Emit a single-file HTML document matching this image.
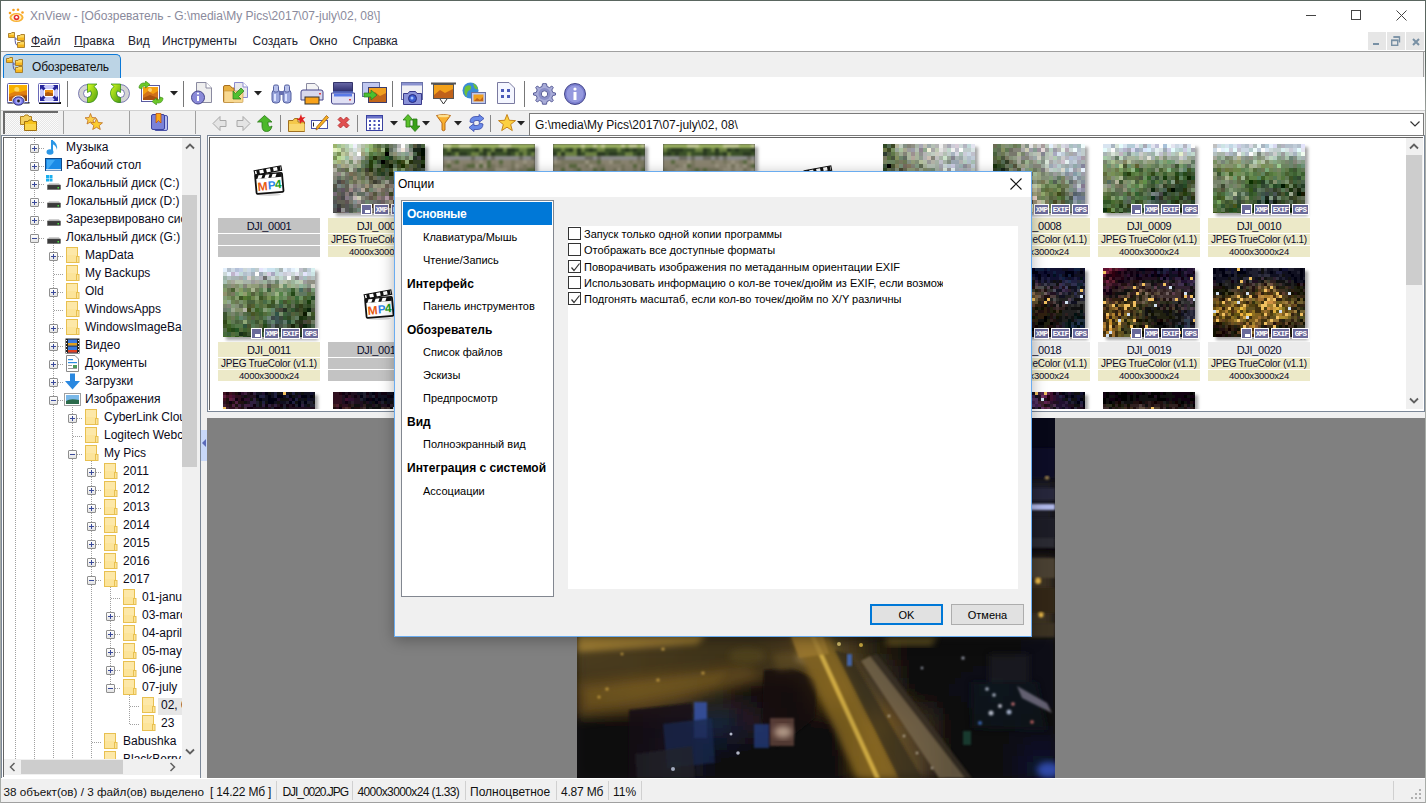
<!DOCTYPE html>
<html><head><meta charset="utf-8">
<style>
*{margin:0;padding:0;box-sizing:border-box}
html,body{width:1426px;height:803px;overflow:hidden}
body{position:relative;background:#f0f0f0;font-family:"Liberation Sans",sans-serif;font-size:12px;color:#000}
.a{position:absolute}
.t{position:absolute;white-space:nowrap;line-height:1}
</style></head><body>
<!-- window frame -->
<div class="a" style="left:0;top:0;width:1426px;height:31px;background:#fff"></div>
<div class="a" style="left:0;top:31px;width:1426px;height:20px;background:#fff"></div>
<div class="a" style="left:0;top:51px;width:1426px;height:1px;background:#a0a0a0"></div>
<div class="a" style="left:0;top:52px;width:1426px;height:25px;background:#f0f0f0"></div>
<div class="a" style="left:0;top:77px;width:1426px;height:33px;background:#fff"></div>
<div class="a" style="left:0;top:110px;width:1426px;height:1px;background:#d0d0d0"></div>
<!-- tree panel -->
<div class="a" style="left:1px;top:135px;width:200px;height:644px;background:#fff;border:1px solid #7c8898"></div><div class="a" style="left:3px;top:137px;width:197px;height:640px;border-top:1px solid #646464;border-left:1px solid #646464"></div>
<!-- tree -->
<div class="a" style="left:3px;top:138px;width:179px;height:622px;overflow:hidden">
<div class="a" style="left:12px;top:0px;width:1px;height:622px;background:repeating-linear-gradient(#a0a0a0 0 1px,transparent 1px 2px)"></div>
<div class="a" style="left:31px;top:0px;width:1px;height:622px;background:repeating-linear-gradient(#a0a0a0 0 1px,transparent 1px 2px)"></div>
<div class="a" style="left:50px;top:105px;width:1px;height:517px;background:repeating-linear-gradient(#a0a0a0 0 1px,transparent 1px 2px)"></div>
<div class="a" style="left:69px;top:267px;width:1px;height:355px;background:repeating-linear-gradient(#a0a0a0 0 1px,transparent 1px 2px)"></div>
<div class="a" style="left:88px;top:321px;width:1px;height:301px;background:repeating-linear-gradient(#a0a0a0 0 1px,transparent 1px 2px)"></div>
<div class="a" style="left:107px;top:447px;width:1px;height:103px;background:repeating-linear-gradient(#a0a0a0 0 1px,transparent 1px 2px)"></div>
<div class="a" style="left:126px;top:555px;width:1px;height:32px;background:repeating-linear-gradient(#a0a0a0 0 1px,transparent 1px 2px)"></div>
<div class="a" style="left:27px;top:6px;width:9px;height:9px;border:1px solid #8f8f8f;border-radius:1px;background:linear-gradient(#fff,#e4e4e4)"><div class="a" style="left:1px;top:3px;width:5px;height:1px;background:#3a4a9a"></div><div class="a" style="left:3px;top:1px;width:1px;height:5px;background:#3a4a9a"></div></div>
<div class="a" style="left:36px;top:10px;width:6px;height:1px;background:repeating-linear-gradient(90deg,#a0a0a0 0 1px,transparent 1px 2px)"></div>
<svg class="a" style="left:43px;top:1px" width="16" height="17" viewBox="0 0 16 17"><path d="M6 1 V12" stroke="#2a96e6" stroke-width="2"/><ellipse cx="4" cy="13" rx="3.5" ry="2.8" fill="#2a96e6"/><path d="M6 1 Q12 4 11 11 Q10 6 6 5Z" fill="#2a96e6"/></svg>
<div class="t" style="left:63px;top:3px;color:#0a0a1a">Музыка</div>
<div class="a" style="left:27px;top:24px;width:9px;height:9px;border:1px solid #8f8f8f;border-radius:1px;background:linear-gradient(#fff,#e4e4e4)"><div class="a" style="left:1px;top:3px;width:5px;height:1px;background:#3a4a9a"></div><div class="a" style="left:3px;top:1px;width:1px;height:5px;background:#3a4a9a"></div></div>
<div class="a" style="left:36px;top:28px;width:6px;height:1px;background:repeating-linear-gradient(90deg,#a0a0a0 0 1px,transparent 1px 2px)"></div>
<svg class="a" style="left:42px;top:20px" width="17" height="14" viewBox="0 0 17 14"><rect x="0.5" y="0.5" width="16" height="12" fill="#1a8ae6" stroke="#104a8a"/><path d="M2 2 H10 L3 11 H2Z" fill="#40aaf6"/><rect x="1" y="11" width="15" height="1.5" fill="#cfe6fa"/></svg>
<div class="t" style="left:63px;top:21px;color:#0a0a1a">Рабочий стол</div>
<div class="a" style="left:27px;top:42px;width:9px;height:9px;border:1px solid #8f8f8f;border-radius:1px;background:linear-gradient(#fff,#e4e4e4)"><div class="a" style="left:1px;top:3px;width:5px;height:1px;background:#3a4a9a"></div><div class="a" style="left:3px;top:1px;width:1px;height:5px;background:#3a4a9a"></div></div>
<div class="a" style="left:36px;top:46px;width:6px;height:1px;background:repeating-linear-gradient(90deg,#a0a0a0 0 1px,transparent 1px 2px)"></div>
<svg class="a" style="left:43px;top:37px" width="16" height="17" viewBox="0 0 16 17"><rect x="0" y="0" width="3" height="3" fill="#1ab0f0"/><rect x="3.5" y="0" width="3" height="3" fill="#1ab0f0"/><rect x="0" y="3.5" width="3" height="3" fill="#1ab0f0"/><rect x="3.5" y="3.5" width="3" height="3" fill="#1ab0f0"/><path d="M2 10 L3 8 H13 L14 10Z" fill="#d0d0d0"/><rect x="1.5" y="10" width="13" height="4.5" fill="#3a3a3a" stroke="#555" stroke-width="0.5"/><rect x="11.5" y="12" width="1.5" height="1.5" fill="#4ae040"/></svg>
<div class="t" style="left:63px;top:39px;color:#0a0a1a">Локальный диск (C:)</div>
<div class="a" style="left:27px;top:60px;width:9px;height:9px;border:1px solid #8f8f8f;border-radius:1px;background:linear-gradient(#fff,#e4e4e4)"><div class="a" style="left:1px;top:3px;width:5px;height:1px;background:#3a4a9a"></div><div class="a" style="left:3px;top:1px;width:1px;height:5px;background:#3a4a9a"></div></div>
<div class="a" style="left:36px;top:64px;width:6px;height:1px;background:repeating-linear-gradient(90deg,#a0a0a0 0 1px,transparent 1px 2px)"></div>
<svg class="a" style="left:43px;top:55px" width="16" height="17" viewBox="0 0 16 17"><path d="M2 10 L3 8 H13 L14 10Z" fill="#d0d0d0"/><rect x="1.5" y="10" width="13" height="4.5" fill="#3a3a3a" stroke="#555" stroke-width="0.5"/><rect x="11.5" y="12" width="1.5" height="1.5" fill="#4ae040"/></svg>
<div class="t" style="left:63px;top:57px;color:#0a0a1a">Локальный диск (D:)</div>
<div class="a" style="left:27px;top:78px;width:9px;height:9px;border:1px solid #8f8f8f;border-radius:1px;background:linear-gradient(#fff,#e4e4e4)"><div class="a" style="left:1px;top:3px;width:5px;height:1px;background:#3a4a9a"></div><div class="a" style="left:3px;top:1px;width:1px;height:5px;background:#3a4a9a"></div></div>
<div class="a" style="left:36px;top:82px;width:6px;height:1px;background:repeating-linear-gradient(90deg,#a0a0a0 0 1px,transparent 1px 2px)"></div>
<svg class="a" style="left:43px;top:73px" width="16" height="17" viewBox="0 0 16 17"><path d="M2 10 L3 8 H13 L14 10Z" fill="#d0d0d0"/><rect x="1.5" y="10" width="13" height="4.5" fill="#3a3a3a" stroke="#555" stroke-width="0.5"/><rect x="11.5" y="12" width="1.5" height="1.5" fill="#4ae040"/></svg>
<div class="t" style="left:63px;top:75px;color:#0a0a1a">Зарезервировано системой</div>
<div class="a" style="left:27px;top:96px;width:9px;height:9px;border:1px solid #8f8f8f;border-radius:1px;background:linear-gradient(#fff,#e4e4e4)"><div class="a" style="left:1px;top:3px;width:5px;height:1px;background:#3a4a9a"></div></div>
<div class="a" style="left:36px;top:100px;width:6px;height:1px;background:repeating-linear-gradient(90deg,#a0a0a0 0 1px,transparent 1px 2px)"></div>
<svg class="a" style="left:43px;top:91px" width="16" height="17" viewBox="0 0 16 17"><path d="M2 10 L3 8 H13 L14 10Z" fill="#d0d0d0"/><rect x="1.5" y="10" width="13" height="4.5" fill="#3a3a3a" stroke="#555" stroke-width="0.5"/><rect x="11.5" y="12" width="1.5" height="1.5" fill="#4ae040"/></svg>
<div class="t" style="left:63px;top:93px;color:#0a0a1a">Локальный диск (G:)</div>
<div class="a" style="left:46px;top:114px;width:9px;height:9px;border:1px solid #8f8f8f;border-radius:1px;background:linear-gradient(#fff,#e4e4e4)"><div class="a" style="left:1px;top:3px;width:5px;height:1px;background:#3a4a9a"></div><div class="a" style="left:3px;top:1px;width:1px;height:5px;background:#3a4a9a"></div></div>
<div class="a" style="left:55px;top:118px;width:6px;height:1px;background:repeating-linear-gradient(90deg,#a0a0a0 0 1px,transparent 1px 2px)"></div>
<svg class="a" style="left:63px;top:109px" width="14" height="17" viewBox="0 0 14 17"><rect x="0.5" y="0.5" width="11" height="15" fill="#fce49a" stroke="#e8c050"/><rect x="1" y="1" width="10" height="7" fill="#fde8a8"/><rect x="10.5" y="9.5" width="2.5" height="6" fill="#fce49a" stroke="#e8c050"/></svg>
<div class="t" style="left:82px;top:111px;color:#0a0a1a">MapData</div>
<div class="a" style="left:51px;top:136px;width:10px;height:1px;background:repeating-linear-gradient(90deg,#a0a0a0 0 1px,transparent 1px 2px)"></div>
<svg class="a" style="left:63px;top:127px" width="14" height="17" viewBox="0 0 14 17"><rect x="0.5" y="0.5" width="11" height="15" fill="#fce49a" stroke="#e8c050"/><rect x="1" y="1" width="10" height="7" fill="#fde8a8"/><rect x="10.5" y="9.5" width="2.5" height="6" fill="#fce49a" stroke="#e8c050"/></svg>
<div class="t" style="left:82px;top:129px;color:#0a0a1a">My Backups</div>
<div class="a" style="left:46px;top:150px;width:9px;height:9px;border:1px solid #8f8f8f;border-radius:1px;background:linear-gradient(#fff,#e4e4e4)"><div class="a" style="left:1px;top:3px;width:5px;height:1px;background:#3a4a9a"></div><div class="a" style="left:3px;top:1px;width:1px;height:5px;background:#3a4a9a"></div></div>
<div class="a" style="left:55px;top:154px;width:6px;height:1px;background:repeating-linear-gradient(90deg,#a0a0a0 0 1px,transparent 1px 2px)"></div>
<svg class="a" style="left:63px;top:145px" width="14" height="17" viewBox="0 0 14 17"><rect x="0.5" y="0.5" width="11" height="15" fill="#fce49a" stroke="#e8c050"/><rect x="1" y="1" width="10" height="7" fill="#fde8a8"/><rect x="10.5" y="9.5" width="2.5" height="6" fill="#fce49a" stroke="#e8c050"/></svg>
<div class="t" style="left:82px;top:147px;color:#0a0a1a">Old</div>
<div class="a" style="left:51px;top:172px;width:10px;height:1px;background:repeating-linear-gradient(90deg,#a0a0a0 0 1px,transparent 1px 2px)"></div>
<svg class="a" style="left:63px;top:163px" width="14" height="17" viewBox="0 0 14 17"><rect x="0.5" y="0.5" width="11" height="15" fill="#fce49a" stroke="#e8c050"/><rect x="1" y="1" width="10" height="7" fill="#fde8a8"/><rect x="10.5" y="9.5" width="2.5" height="6" fill="#fce49a" stroke="#e8c050"/></svg>
<div class="t" style="left:82px;top:165px;color:#0a0a1a">WindowsApps</div>
<div class="a" style="left:46px;top:186px;width:9px;height:9px;border:1px solid #8f8f8f;border-radius:1px;background:linear-gradient(#fff,#e4e4e4)"><div class="a" style="left:1px;top:3px;width:5px;height:1px;background:#3a4a9a"></div><div class="a" style="left:3px;top:1px;width:1px;height:5px;background:#3a4a9a"></div></div>
<div class="a" style="left:55px;top:190px;width:6px;height:1px;background:repeating-linear-gradient(90deg,#a0a0a0 0 1px,transparent 1px 2px)"></div>
<svg class="a" style="left:63px;top:181px" width="14" height="17" viewBox="0 0 14 17"><rect x="0.5" y="0.5" width="11" height="15" fill="#fce49a" stroke="#e8c050"/><rect x="1" y="1" width="10" height="7" fill="#fde8a8"/><rect x="10.5" y="9.5" width="2.5" height="6" fill="#fce49a" stroke="#e8c050"/></svg>
<div class="t" style="left:82px;top:183px;color:#0a0a1a">WindowsImageBackup</div>
<div class="a" style="left:46px;top:204px;width:9px;height:9px;border:1px solid #8f8f8f;border-radius:1px;background:linear-gradient(#fff,#e4e4e4)"><div class="a" style="left:1px;top:3px;width:5px;height:1px;background:#3a4a9a"></div><div class="a" style="left:3px;top:1px;width:1px;height:5px;background:#3a4a9a"></div></div>
<div class="a" style="left:55px;top:208px;width:6px;height:1px;background:repeating-linear-gradient(90deg,#a0a0a0 0 1px,transparent 1px 2px)"></div>
<svg class="a" style="left:62px;top:200px" width="15" height="16" viewBox="0 0 15 16"><rect x="0.5" y="0.5" width="14" height="15" fill="#222"/><rect x="3" y="1.5" width="9" height="6" fill="#3a7ae0"/><rect x="3" y="8.5" width="9" height="6" fill="#3a7ae0"/><rect x="3" y="5" width="9" height="2.5" fill="#e0a020"/><rect x="3" y="12" width="9" height="2.5" fill="#e04020"/><g fill="#fff"><rect x="1" y="2" width="1" height="1"/><rect x="1" y="5" width="1" height="1"/><rect x="1" y="8" width="1" height="1"/><rect x="1" y="11" width="1" height="1"/><rect x="1" y="14" width="1" height="1"/><rect x="13" y="2" width="1" height="1"/><rect x="13" y="5" width="1" height="1"/><rect x="13" y="8" width="1" height="1"/><rect x="13" y="11" width="1" height="1"/><rect x="13" y="14" width="1" height="1"/></g></svg>
<div class="t" style="left:82px;top:201px;color:#0a0a1a">Видео</div>
<div class="a" style="left:46px;top:222px;width:9px;height:9px;border:1px solid #8f8f8f;border-radius:1px;background:linear-gradient(#fff,#e4e4e4)"><div class="a" style="left:1px;top:3px;width:5px;height:1px;background:#3a4a9a"></div><div class="a" style="left:3px;top:1px;width:1px;height:5px;background:#3a4a9a"></div></div>
<div class="a" style="left:55px;top:226px;width:6px;height:1px;background:repeating-linear-gradient(90deg,#a0a0a0 0 1px,transparent 1px 2px)"></div>
<svg class="a" style="left:63px;top:217px" width="13" height="17" viewBox="0 0 13 17"><path d="M0.5 0.5 H9 L12.5 4 V16.5 H0.5Z" fill="#fff" stroke="#8a8a8a"/><rect x="2" y="4" width="5" height="1.2" fill="#2a8ae0"/><rect x="2" y="7" width="9" height="1.2" fill="#2a8ae0"/><rect x="2" y="10" width="4" height="1" fill="#999"/><rect x="7" y="10" width="4" height="3" fill="#4a9a5a"/><rect x="2" y="13" width="9" height="1" fill="#999"/></svg>
<div class="t" style="left:82px;top:219px;color:#0a0a1a">Документы</div>
<div class="a" style="left:46px;top:240px;width:9px;height:9px;border:1px solid #8f8f8f;border-radius:1px;background:linear-gradient(#fff,#e4e4e4)"><div class="a" style="left:1px;top:3px;width:5px;height:1px;background:#3a4a9a"></div><div class="a" style="left:3px;top:1px;width:1px;height:5px;background:#3a4a9a"></div></div>
<div class="a" style="left:55px;top:244px;width:6px;height:1px;background:repeating-linear-gradient(90deg,#a0a0a0 0 1px,transparent 1px 2px)"></div>
<svg class="a" style="left:61px;top:235px" width="17" height="17" viewBox="0 0 17 17"><path d="M6 0.5 H11 V8 H16 L8.5 16.5 L1 8 H6Z" fill="#2a88e0"/></svg>
<div class="t" style="left:82px;top:237px;color:#0a0a1a">Загрузки</div>
<div class="a" style="left:46px;top:258px;width:9px;height:9px;border:1px solid #8f8f8f;border-radius:1px;background:linear-gradient(#fff,#e4e4e4)"><div class="a" style="left:1px;top:3px;width:5px;height:1px;background:#3a4a9a"></div></div>
<div class="a" style="left:55px;top:262px;width:6px;height:1px;background:repeating-linear-gradient(90deg,#a0a0a0 0 1px,transparent 1px 2px)"></div>
<svg class="a" style="left:61px;top:255px" width="17" height="13" viewBox="0 0 17 13"><rect x="0.5" y="0.5" width="16" height="12" fill="#fff" stroke="#a0a0a0"/><rect x="2" y="2" width="13" height="9" fill="#7ab8e8"/><path d="M2 8 Q6 5 15 7 V11 H2Z" fill="#2a6a4a"/></svg>
<div class="t" style="left:82px;top:255px;color:#0a0a1a">Изображения</div>
<div class="a" style="left:65px;top:276px;width:9px;height:9px;border:1px solid #8f8f8f;border-radius:1px;background:linear-gradient(#fff,#e4e4e4)"><div class="a" style="left:1px;top:3px;width:5px;height:1px;background:#3a4a9a"></div><div class="a" style="left:3px;top:1px;width:1px;height:5px;background:#3a4a9a"></div></div>
<div class="a" style="left:74px;top:280px;width:6px;height:1px;background:repeating-linear-gradient(90deg,#a0a0a0 0 1px,transparent 1px 2px)"></div>
<svg class="a" style="left:82px;top:271px" width="14" height="17" viewBox="0 0 14 17"><rect x="0.5" y="0.5" width="11" height="15" fill="#fce49a" stroke="#e8c050"/><rect x="1" y="1" width="10" height="7" fill="#fde8a8"/><rect x="10.5" y="9.5" width="2.5" height="6" fill="#fce49a" stroke="#e8c050"/></svg>
<div class="t" style="left:101px;top:273px;color:#0a0a1a">CyberLink Cloud</div>
<div class="a" style="left:70px;top:298px;width:10px;height:1px;background:repeating-linear-gradient(90deg,#a0a0a0 0 1px,transparent 1px 2px)"></div>
<svg class="a" style="left:82px;top:289px" width="14" height="17" viewBox="0 0 14 17"><rect x="0.5" y="0.5" width="11" height="15" fill="#fce49a" stroke="#e8c050"/><rect x="1" y="1" width="10" height="7" fill="#fde8a8"/><rect x="10.5" y="9.5" width="2.5" height="6" fill="#fce49a" stroke="#e8c050"/></svg>
<div class="t" style="left:101px;top:291px;color:#0a0a1a">Logitech Webcam</div>
<div class="a" style="left:65px;top:312px;width:9px;height:9px;border:1px solid #8f8f8f;border-radius:1px;background:linear-gradient(#fff,#e4e4e4)"><div class="a" style="left:1px;top:3px;width:5px;height:1px;background:#3a4a9a"></div></div>
<div class="a" style="left:74px;top:316px;width:6px;height:1px;background:repeating-linear-gradient(90deg,#a0a0a0 0 1px,transparent 1px 2px)"></div>
<svg class="a" style="left:82px;top:307px" width="14" height="17" viewBox="0 0 14 17"><rect x="0.5" y="0.5" width="11" height="15" fill="#fce49a" stroke="#e8c050"/><rect x="1" y="1" width="10" height="7" fill="#fde8a8"/><rect x="10.5" y="9.5" width="2.5" height="6" fill="#fce49a" stroke="#e8c050"/></svg>
<div class="t" style="left:101px;top:309px;color:#0a0a1a">My Pics</div>
<div class="a" style="left:84px;top:330px;width:9px;height:9px;border:1px solid #8f8f8f;border-radius:1px;background:linear-gradient(#fff,#e4e4e4)"><div class="a" style="left:1px;top:3px;width:5px;height:1px;background:#3a4a9a"></div><div class="a" style="left:3px;top:1px;width:1px;height:5px;background:#3a4a9a"></div></div>
<div class="a" style="left:93px;top:334px;width:6px;height:1px;background:repeating-linear-gradient(90deg,#a0a0a0 0 1px,transparent 1px 2px)"></div>
<svg class="a" style="left:101px;top:325px" width="14" height="17" viewBox="0 0 14 17"><rect x="0.5" y="0.5" width="11" height="15" fill="#fce49a" stroke="#e8c050"/><rect x="1" y="1" width="10" height="7" fill="#fde8a8"/><rect x="10.5" y="9.5" width="2.5" height="6" fill="#fce49a" stroke="#e8c050"/></svg>
<div class="t" style="left:120px;top:327px;color:#0a0a1a">2011</div>
<div class="a" style="left:84px;top:348px;width:9px;height:9px;border:1px solid #8f8f8f;border-radius:1px;background:linear-gradient(#fff,#e4e4e4)"><div class="a" style="left:1px;top:3px;width:5px;height:1px;background:#3a4a9a"></div><div class="a" style="left:3px;top:1px;width:1px;height:5px;background:#3a4a9a"></div></div>
<div class="a" style="left:93px;top:352px;width:6px;height:1px;background:repeating-linear-gradient(90deg,#a0a0a0 0 1px,transparent 1px 2px)"></div>
<svg class="a" style="left:101px;top:343px" width="14" height="17" viewBox="0 0 14 17"><rect x="0.5" y="0.5" width="11" height="15" fill="#fce49a" stroke="#e8c050"/><rect x="1" y="1" width="10" height="7" fill="#fde8a8"/><rect x="10.5" y="9.5" width="2.5" height="6" fill="#fce49a" stroke="#e8c050"/></svg>
<div class="t" style="left:120px;top:345px;color:#0a0a1a">2012</div>
<div class="a" style="left:84px;top:366px;width:9px;height:9px;border:1px solid #8f8f8f;border-radius:1px;background:linear-gradient(#fff,#e4e4e4)"><div class="a" style="left:1px;top:3px;width:5px;height:1px;background:#3a4a9a"></div><div class="a" style="left:3px;top:1px;width:1px;height:5px;background:#3a4a9a"></div></div>
<div class="a" style="left:93px;top:370px;width:6px;height:1px;background:repeating-linear-gradient(90deg,#a0a0a0 0 1px,transparent 1px 2px)"></div>
<svg class="a" style="left:101px;top:361px" width="14" height="17" viewBox="0 0 14 17"><rect x="0.5" y="0.5" width="11" height="15" fill="#fce49a" stroke="#e8c050"/><rect x="1" y="1" width="10" height="7" fill="#fde8a8"/><rect x="10.5" y="9.5" width="2.5" height="6" fill="#fce49a" stroke="#e8c050"/></svg>
<div class="t" style="left:120px;top:363px;color:#0a0a1a">2013</div>
<div class="a" style="left:84px;top:384px;width:9px;height:9px;border:1px solid #8f8f8f;border-radius:1px;background:linear-gradient(#fff,#e4e4e4)"><div class="a" style="left:1px;top:3px;width:5px;height:1px;background:#3a4a9a"></div><div class="a" style="left:3px;top:1px;width:1px;height:5px;background:#3a4a9a"></div></div>
<div class="a" style="left:93px;top:388px;width:6px;height:1px;background:repeating-linear-gradient(90deg,#a0a0a0 0 1px,transparent 1px 2px)"></div>
<svg class="a" style="left:101px;top:379px" width="14" height="17" viewBox="0 0 14 17"><rect x="0.5" y="0.5" width="11" height="15" fill="#fce49a" stroke="#e8c050"/><rect x="1" y="1" width="10" height="7" fill="#fde8a8"/><rect x="10.5" y="9.5" width="2.5" height="6" fill="#fce49a" stroke="#e8c050"/></svg>
<div class="t" style="left:120px;top:381px;color:#0a0a1a">2014</div>
<div class="a" style="left:84px;top:402px;width:9px;height:9px;border:1px solid #8f8f8f;border-radius:1px;background:linear-gradient(#fff,#e4e4e4)"><div class="a" style="left:1px;top:3px;width:5px;height:1px;background:#3a4a9a"></div><div class="a" style="left:3px;top:1px;width:1px;height:5px;background:#3a4a9a"></div></div>
<div class="a" style="left:93px;top:406px;width:6px;height:1px;background:repeating-linear-gradient(90deg,#a0a0a0 0 1px,transparent 1px 2px)"></div>
<svg class="a" style="left:101px;top:397px" width="14" height="17" viewBox="0 0 14 17"><rect x="0.5" y="0.5" width="11" height="15" fill="#fce49a" stroke="#e8c050"/><rect x="1" y="1" width="10" height="7" fill="#fde8a8"/><rect x="10.5" y="9.5" width="2.5" height="6" fill="#fce49a" stroke="#e8c050"/></svg>
<div class="t" style="left:120px;top:399px;color:#0a0a1a">2015</div>
<div class="a" style="left:84px;top:420px;width:9px;height:9px;border:1px solid #8f8f8f;border-radius:1px;background:linear-gradient(#fff,#e4e4e4)"><div class="a" style="left:1px;top:3px;width:5px;height:1px;background:#3a4a9a"></div><div class="a" style="left:3px;top:1px;width:1px;height:5px;background:#3a4a9a"></div></div>
<div class="a" style="left:93px;top:424px;width:6px;height:1px;background:repeating-linear-gradient(90deg,#a0a0a0 0 1px,transparent 1px 2px)"></div>
<svg class="a" style="left:101px;top:415px" width="14" height="17" viewBox="0 0 14 17"><rect x="0.5" y="0.5" width="11" height="15" fill="#fce49a" stroke="#e8c050"/><rect x="1" y="1" width="10" height="7" fill="#fde8a8"/><rect x="10.5" y="9.5" width="2.5" height="6" fill="#fce49a" stroke="#e8c050"/></svg>
<div class="t" style="left:120px;top:417px;color:#0a0a1a">2016</div>
<div class="a" style="left:84px;top:438px;width:9px;height:9px;border:1px solid #8f8f8f;border-radius:1px;background:linear-gradient(#fff,#e4e4e4)"><div class="a" style="left:1px;top:3px;width:5px;height:1px;background:#3a4a9a"></div></div>
<div class="a" style="left:93px;top:442px;width:6px;height:1px;background:repeating-linear-gradient(90deg,#a0a0a0 0 1px,transparent 1px 2px)"></div>
<svg class="a" style="left:101px;top:433px" width="14" height="17" viewBox="0 0 14 17"><rect x="0.5" y="0.5" width="11" height="15" fill="#fce49a" stroke="#e8c050"/><rect x="1" y="1" width="10" height="7" fill="#fde8a8"/><rect x="10.5" y="9.5" width="2.5" height="6" fill="#fce49a" stroke="#e8c050"/></svg>
<div class="t" style="left:120px;top:435px;color:#0a0a1a">2017</div>
<div class="a" style="left:108px;top:460px;width:10px;height:1px;background:repeating-linear-gradient(90deg,#a0a0a0 0 1px,transparent 1px 2px)"></div>
<svg class="a" style="left:120px;top:451px" width="14" height="17" viewBox="0 0 14 17"><rect x="0.5" y="0.5" width="11" height="15" fill="#fce49a" stroke="#e8c050"/><rect x="1" y="1" width="10" height="7" fill="#fde8a8"/><rect x="10.5" y="9.5" width="2.5" height="6" fill="#fce49a" stroke="#e8c050"/></svg>
<div class="t" style="left:139px;top:453px;color:#0a0a1a">01-january</div>
<div class="a" style="left:103px;top:474px;width:9px;height:9px;border:1px solid #8f8f8f;border-radius:1px;background:linear-gradient(#fff,#e4e4e4)"><div class="a" style="left:1px;top:3px;width:5px;height:1px;background:#3a4a9a"></div><div class="a" style="left:3px;top:1px;width:1px;height:5px;background:#3a4a9a"></div></div>
<div class="a" style="left:112px;top:478px;width:6px;height:1px;background:repeating-linear-gradient(90deg,#a0a0a0 0 1px,transparent 1px 2px)"></div>
<svg class="a" style="left:120px;top:469px" width="14" height="17" viewBox="0 0 14 17"><rect x="0.5" y="0.5" width="11" height="15" fill="#fce49a" stroke="#e8c050"/><rect x="1" y="1" width="10" height="7" fill="#fde8a8"/><rect x="10.5" y="9.5" width="2.5" height="6" fill="#fce49a" stroke="#e8c050"/></svg>
<div class="t" style="left:139px;top:471px;color:#0a0a1a">03-march</div>
<div class="a" style="left:103px;top:492px;width:9px;height:9px;border:1px solid #8f8f8f;border-radius:1px;background:linear-gradient(#fff,#e4e4e4)"><div class="a" style="left:1px;top:3px;width:5px;height:1px;background:#3a4a9a"></div><div class="a" style="left:3px;top:1px;width:1px;height:5px;background:#3a4a9a"></div></div>
<div class="a" style="left:112px;top:496px;width:6px;height:1px;background:repeating-linear-gradient(90deg,#a0a0a0 0 1px,transparent 1px 2px)"></div>
<svg class="a" style="left:120px;top:487px" width="14" height="17" viewBox="0 0 14 17"><rect x="0.5" y="0.5" width="11" height="15" fill="#fce49a" stroke="#e8c050"/><rect x="1" y="1" width="10" height="7" fill="#fde8a8"/><rect x="10.5" y="9.5" width="2.5" height="6" fill="#fce49a" stroke="#e8c050"/></svg>
<div class="t" style="left:139px;top:489px;color:#0a0a1a">04-april</div>
<div class="a" style="left:103px;top:510px;width:9px;height:9px;border:1px solid #8f8f8f;border-radius:1px;background:linear-gradient(#fff,#e4e4e4)"><div class="a" style="left:1px;top:3px;width:5px;height:1px;background:#3a4a9a"></div><div class="a" style="left:3px;top:1px;width:1px;height:5px;background:#3a4a9a"></div></div>
<div class="a" style="left:112px;top:514px;width:6px;height:1px;background:repeating-linear-gradient(90deg,#a0a0a0 0 1px,transparent 1px 2px)"></div>
<svg class="a" style="left:120px;top:505px" width="14" height="17" viewBox="0 0 14 17"><rect x="0.5" y="0.5" width="11" height="15" fill="#fce49a" stroke="#e8c050"/><rect x="1" y="1" width="10" height="7" fill="#fde8a8"/><rect x="10.5" y="9.5" width="2.5" height="6" fill="#fce49a" stroke="#e8c050"/></svg>
<div class="t" style="left:139px;top:507px;color:#0a0a1a">05-may</div>
<div class="a" style="left:103px;top:528px;width:9px;height:9px;border:1px solid #8f8f8f;border-radius:1px;background:linear-gradient(#fff,#e4e4e4)"><div class="a" style="left:1px;top:3px;width:5px;height:1px;background:#3a4a9a"></div><div class="a" style="left:3px;top:1px;width:1px;height:5px;background:#3a4a9a"></div></div>
<div class="a" style="left:112px;top:532px;width:6px;height:1px;background:repeating-linear-gradient(90deg,#a0a0a0 0 1px,transparent 1px 2px)"></div>
<svg class="a" style="left:120px;top:523px" width="14" height="17" viewBox="0 0 14 17"><rect x="0.5" y="0.5" width="11" height="15" fill="#fce49a" stroke="#e8c050"/><rect x="1" y="1" width="10" height="7" fill="#fde8a8"/><rect x="10.5" y="9.5" width="2.5" height="6" fill="#fce49a" stroke="#e8c050"/></svg>
<div class="t" style="left:139px;top:525px;color:#0a0a1a">06-june</div>
<div class="a" style="left:103px;top:546px;width:9px;height:9px;border:1px solid #8f8f8f;border-radius:1px;background:linear-gradient(#fff,#e4e4e4)"><div class="a" style="left:1px;top:3px;width:5px;height:1px;background:#3a4a9a"></div></div>
<div class="a" style="left:112px;top:550px;width:6px;height:1px;background:repeating-linear-gradient(90deg,#a0a0a0 0 1px,transparent 1px 2px)"></div>
<svg class="a" style="left:120px;top:541px" width="14" height="17" viewBox="0 0 14 17"><rect x="0.5" y="0.5" width="11" height="15" fill="#fce49a" stroke="#e8c050"/><rect x="1" y="1" width="10" height="7" fill="#fde8a8"/><rect x="10.5" y="9.5" width="2.5" height="6" fill="#fce49a" stroke="#e8c050"/></svg>
<div class="t" style="left:139px;top:543px;color:#0a0a1a">07-july</div>
<div class="a" style="left:127px;top:568px;width:10px;height:1px;background:repeating-linear-gradient(90deg,#a0a0a0 0 1px,transparent 1px 2px)"></div>
<svg class="a" style="left:139px;top:559px" width="14" height="17" viewBox="0 0 14 17"><rect x="0.5" y="0.5" width="11" height="15" fill="#fce49a" stroke="#e8c050"/><rect x="1" y="1" width="10" height="7" fill="#fde8a8"/><rect x="10.5" y="9.5" width="2.5" height="6" fill="#fce49a" stroke="#e8c050"/></svg>
<div class="a" style="left:155px;top:560px;width:60px;height:17px;background:#e6e6e6"></div>
<div class="t" style="left:158px;top:561px;color:#0a0a1a">02, 08</div>
<div class="a" style="left:127px;top:586px;width:10px;height:1px;background:repeating-linear-gradient(90deg,#a0a0a0 0 1px,transparent 1px 2px)"></div>
<svg class="a" style="left:139px;top:577px" width="14" height="17" viewBox="0 0 14 17"><rect x="0.5" y="0.5" width="11" height="15" fill="#fce49a" stroke="#e8c050"/><rect x="1" y="1" width="10" height="7" fill="#fde8a8"/><rect x="10.5" y="9.5" width="2.5" height="6" fill="#fce49a" stroke="#e8c050"/></svg>
<div class="t" style="left:158px;top:579px;color:#0a0a1a">23</div>
<div class="a" style="left:89px;top:604px;width:10px;height:1px;background:repeating-linear-gradient(90deg,#a0a0a0 0 1px,transparent 1px 2px)"></div>
<svg class="a" style="left:101px;top:595px" width="14" height="17" viewBox="0 0 14 17"><rect x="0.5" y="0.5" width="11" height="15" fill="#fce49a" stroke="#e8c050"/><rect x="1" y="1" width="10" height="7" fill="#fde8a8"/><rect x="10.5" y="9.5" width="2.5" height="6" fill="#fce49a" stroke="#e8c050"/></svg>
<div class="t" style="left:120px;top:597px;color:#0a0a1a">Babushka</div>
<div class="a" style="left:89px;top:622px;width:10px;height:1px;background:repeating-linear-gradient(90deg,#a0a0a0 0 1px,transparent 1px 2px)"></div>
<svg class="a" style="left:101px;top:613px" width="14" height="17" viewBox="0 0 14 17"><rect x="0.5" y="0.5" width="11" height="15" fill="#fce49a" stroke="#e8c050"/><rect x="1" y="1" width="10" height="7" fill="#fde8a8"/><rect x="10.5" y="9.5" width="2.5" height="6" fill="#fce49a" stroke="#e8c050"/></svg>
<div class="t" style="left:120px;top:615px;color:#0a0a1a">BlackBerry</div>
</div>
<!-- tree scrollbars -->
<div class="a" style="left:182px;top:138px;width:18px;height:622px;background:#f0f0f0"></div>
<div class="a" style="left:182px;top:195px;width:15px;height:272px;background:#cdcdcd"></div>
<svg class="a" style="left:185px;top:143px" width="10" height="7" viewBox="0 0 10 7"><path d="M1 5.5 L5 1.5 L9 5.5" stroke="#606060" stroke-width="1.8" fill="none"/></svg>
<svg class="a" style="left:185px;top:748px" width="10" height="7" viewBox="0 0 10 7"><path d="M1 1.5 L5 5.5 L9 1.5" stroke="#606060" stroke-width="1.8" fill="none"/></svg>
<div class="a" style="left:4px;top:759px;width:196px;height:16px;background:#f0f0f0"></div><div class="a" style="left:4px;top:775px;width:196px;height:3px;background:#fff"></div>
<div class="a" style="left:21px;top:760px;width:102px;height:14px;background:#cdcdcd"></div>
<svg class="a" style="left:9px;top:762px" width="7" height="10" viewBox="0 0 7 10"><path d="M5.5 1 L1.5 5 L5.5 9" stroke="#606060" stroke-width="1.5" fill="none"/></svg>
<svg class="a" style="left:169px;top:762px" width="7" height="10" viewBox="0 0 7 10"><path d="M1.5 1 L5.5 5 L1.5 9" stroke="#606060" stroke-width="1.5" fill="none"/></svg>
<!-- splitter grip -->
<div class="a" style="left:201px;top:430px;width:6px;height:31px;background:#c8d8f8"></div>
<svg class="a" style="left:201px;top:438px" width="6" height="10" viewBox="0 0 6 10"><path d="M5 1 L1 5 L5 9Z" fill="#5a6ab8"/></svg>

<!-- thumbs panel -->
<div class="a" style="left:207px;top:135px;width:1218px;height:277px;background:#fff;border:1px solid #7c8898"></div>
<div class="a" style="left:209px;top:137px;width:1214px;height:273px;border-top:1px solid #646464;border-left:1px solid #646464"></div>
<div class="a" style="left:209px;top:138px;width:1197px;height:271px;overflow:hidden"><svg width="0" height="0" style="position:absolute"><defs><filter id="pb"><feGaussianBlur stdDeviation="0.8"/></filter></defs></svg><svg class="a" style="left:42px;top:25px" width="34" height="34" viewBox="0 0 34 34">
<ellipse cx="18" cy="31.5" rx="12" ry="1.5" fill="#000" opacity=".15"/>
<g transform="rotate(-5 17 17)">
<path d="M4 6.5 L31 4 L31.5 8.5 L4.5 11Z" fill="#fff" stroke="#111" stroke-width="1.1"/>
<path d="M6 6.3 L9 6 L9.6 10.6 L6.6 10.9Z M13 5.6 L16 5.3 L16.6 9.9 L13.6 10.2Z M20 5 L23 4.7 L23.5 9.3 L20.5 9.6Z M27 4.4 L30 4.1 L30.5 8.7 L27.5 9Z" fill="#111"/>
<rect x="4.5" y="11" width="27" height="19" rx="1" fill="#fff" stroke="#111" stroke-width="1.8"/>
<path d="M5 11.5 H31 V15 H5Z" fill="#111"/><path d="M8 11.5 H12 L10.5 15 H6.5Z M15 11.5 H19 L17.5 15 H13.5Z M22 11.5 H26 L24.5 15 H20.5Z" fill="#fff"/>
<text x="6" y="27" font-family="Liberation Sans" font-weight="bold" font-size="12" fill="#e85a10">M</text>
<text x="16.3" y="26.5" font-family="Liberation Sans" font-weight="bold" font-size="11.5" fill="#2a86e8">P</text>
<text x="23.5" y="26" font-family="Liberation Sans" font-weight="bold" font-size="12" fill="#1aa01a">4</text>
</g>
</svg>
<div class="a" style="left:9px;top:80px;width:102px;height:15px;background:#c3c3c3"></div>
<div class="a" style="left:9px;top:96px;width:102px;height:11px;background:#c3c3c3"></div>
<div class="a" style="left:9px;top:108px;width:102px;height:11px;background:#c3c3c3"></div>
<div class="t" style="left:9px;top:82.7px;width:102px;text-align:center;font-size:11px;letter-spacing:-0.3px;color:#0a0a2a">DJI_0001</div>
<div class="a" style="left:124px;top:6px;width:92px;height:69px;overflow:hidden;background:#444;box-shadow:3px 3px 3px rgba(0,0,0,.35)"><svg width="92" height="69" viewBox="0 0 92 69" style="display:block;filter:blur(0.7px)"><path fill="#9cb46c" d="M0 0h4v4h-4z"/><path fill="#9cc090" d="M4 0h4v4h-4z"/><path fill="#b4cc9c" d="M8 0h4v4h-4z"/><path fill="#b4ccb4" d="M12 0h4v4h-4z"/><path fill="#d8f0d8" d="M16 0h4v4h-4z"/><path fill="#f0f0fc" d="M20 0h4v4h-4z"/><path fill="#ccd8cc" d="M24 0h4v4h-4z"/><path fill="#b4c0a8" d="M28 0h4v4h-4zM12 16h4v4h-4zM16 24h4v4h-4z"/><path fill="#a8c090" d="M32 0h4v4h-4zM0 16h4v4h-4z"/><path fill="#90b46c" d="M36 0h4v4h-4z"/><path fill="#6c8454" d="M40 0h4v4h-4z"/><path fill="#546c3c" d="M44 0h4v4h-4zM48 8h4v4h-4zM64 24h4v4h-4z"/><path fill="#6c8460" d="M48 0h4v4h-4zM64 12h4v4h-4z"/><path fill="#48603c" d="M52 0h4v4h-4zM88 0h4v4h-4zM32 20h4v4h-4zM52 32h4v4h-4z"/><path fill="#6c7860" d="M56 0h4v4h-4zM72 12h4v4h-4zM4 24h4v4h-4zM24 28h4v4h-4zM24 32h4v4h-4z"/><path fill="#788478" d="M60 0h4v4h-4zM76 4h4v4h-4zM0 36h4v4h-4z"/><path fill="#b4b4b4" d="M64 0h4v4h-4zM72 4h4v4h-4z"/><path fill="#fcfcfc" d="M68 0h4v4h-4zM24 8h4v4h-4z"/><path fill="#b4c0b4" d="M72 0h4v4h-4z"/><path fill="#607860" d="M76 0h4v4h-4zM28 20h4v4h-4z"/><path fill="#54543c" d="M80 0h4v4h-4zM32 28h4v4h-4zM76 28h4v4h-4zM40 48h4v4h-4z"/><path fill="#303c30" d="M84 0h4v4h-4zM84 20h4v4h-4z"/><path fill="#3c3c30" d="M92 0h4v4h-4zM32 24h4v4h-4zM40 36h4v4h-4z"/><path fill="#e4f0c0" d="M0 4h4v4h-4z"/><path fill="#cce4a8" d="M4 4h4v4h-4z"/><path fill="#9ca884" d="M8 4h4v4h-4zM8 16h4v4h-4zM24 20h4v4h-4z"/><path fill="#b4cca8" d="M12 4h4v4h-4z"/><path fill="#c0ccc0" d="M16 4h4v4h-4zM20 8h4v4h-4z"/><path fill="#d8e4e4" d="M20 4h4v4h-4z"/><path fill="#d8d8cc" d="M24 4h4v4h-4zM16 8h4v4h-4z"/><path fill="#a8b490" d="M28 4h4v4h-4zM12 8h4v4h-4z"/><path fill="#9ccc9c" d="M32 4h4v4h-4z"/><path fill="#90a86c" d="M36 4h4v4h-4z"/><path fill="#789048" d="M40 4h4v4h-4z"/><path fill="#6c7848" d="M44 4h4v4h-4z"/><path fill="#9cb484" d="M48 4h4v4h-4zM0 8h4v4h-4z"/><path fill="#18300c" d="M52 4h4v4h-4z"/><path fill="#606c60" d="M56 4h4v4h-4zM4 32h4v4h-4zM44 32h4v4h-4zM12 36h4v4h-4zM88 44h4v4h-4zM24 48h4v4h-4zM28 48h4v4h-4zM20 64h4v4h-4z"/><path fill="#909c90" d="M60 4h4v4h-4zM64 8h4v4h-4zM28 12h4v4h-4zM4 20h4v4h-4z"/><path fill="#cccccc" d="M64 4h4v4h-4zM20 12h4v4h-4z"/><path fill="#f0e4d8" d="M68 4h4v4h-4z"/><path fill="#182418" d="M80 4h4v4h-4zM84 4h4v4h-4z"/><path fill="#000c00" d="M88 4h4v4h-4zM88 8h4v4h-4z"/><path fill="#243018" d="M92 4h4v4h-4zM52 16h4v4h-4zM52 20h4v4h-4z"/><path fill="#789054" d="M4 8h4v4h-4zM0 12h4v4h-4z"/><path fill="#c0cc9c" d="M8 8h4v4h-4z"/><path fill="#9c9c78" d="M28 8h4v4h-4z"/><path fill="#90a884" d="M32 8h4v4h-4zM76 12h4v4h-4zM60 24h4v4h-4z"/><path fill="#54783c" d="M36 8h4v4h-4z"/><path fill="#608454" d="M40 8h4v4h-4z"/><path fill="#607848" d="M44 8h4v4h-4z"/><path fill="#000000" d="M52 8h4v4h-4zM48 16h4v4h-4z"/><path fill="#78846c" d="M56 8h4v4h-4zM8 32h4v4h-4zM48 36h4v4h-4zM20 68h4v4h-4z"/><path fill="#909078" d="M60 8h4v4h-4zM80 28h4v4h-4zM24 36h4v4h-4zM44 40h4v4h-4z"/><path fill="#90a890" d="M68 8h4v4h-4z"/><path fill="#849c90" d="M72 8h4v4h-4z"/><path fill="#9c9c90" d="M76 8h4v4h-4zM52 36h4v4h-4zM16 40h4v4h-4zM56 44h4v4h-4zM92 48h4v4h-4z"/><path fill="#486048" d="M80 8h4v4h-4zM24 24h4v4h-4zM60 36h4v4h-4z"/><path fill="#18240c" d="M84 8h4v4h-4z"/><path fill="#304824" d="M92 8h4v4h-4zM44 28h4v4h-4z"/><path fill="#b4d890" d="M4 12h4v4h-4z"/><path fill="#c0d8a8" d="M8 12h4v4h-4z"/><path fill="#9cc0a8" d="M12 12h4v4h-4z"/><path fill="#c0c0a8" d="M16 12h4v4h-4z"/><path fill="#c0c0c0" d="M24 12h4v4h-4z"/><path fill="#6c7854" d="M32 12h4v4h-4zM92 32h4v4h-4z"/><path fill="#3c6030" d="M36 12h4v4h-4z"/><path fill="#24300c" d="M40 12h4v4h-4zM76 16h4v4h-4zM36 24h4v4h-4z"/><path fill="#485430" d="M44 12h4v4h-4zM56 16h4v4h-4zM80 20h4v4h-4zM68 28h4v4h-4z"/><path fill="#3c5430" d="M48 12h4v4h-4zM60 16h4v4h-4z"/><path fill="#245424" d="M52 12h4v4h-4z"/><path fill="#243c24" d="M56 12h4v4h-4zM48 28h4v4h-4z"/><path fill="#606c48" d="M60 12h4v4h-4zM12 24h4v4h-4zM28 24h4v4h-4zM64 28h4v4h-4zM28 32h4v4h-4zM68 32h4v4h-4z"/><path fill="#849c78" d="M68 12h4v4h-4z"/><path fill="#243024" d="M80 12h4v4h-4z"/><path fill="#3c3c3c" d="M84 12h4v4h-4zM4 60h4v4h-4z"/><path fill="#0c1800" d="M88 12h4v4h-4zM56 20h4v4h-4zM88 20h4v4h-4z"/><path fill="#48543c" d="M92 12h4v4h-4zM40 28h4v4h-4zM52 28h4v4h-4zM92 28h4v4h-4zM92 40h4v4h-4z"/><path fill="#a8b478" d="M4 16h4v4h-4z"/><path fill="#78906c" d="M16 16h4v4h-4zM72 32h4v4h-4z"/><path fill="#c0c0b4" d="M20 16h4v4h-4z"/><path fill="#9c9c84" d="M24 16h4v4h-4zM12 20h4v4h-4zM40 40h4v4h-4zM48 40h4v4h-4z"/><path fill="#607854" d="M28 16h4v4h-4zM40 20h4v4h-4z"/><path fill="#546c54" d="M32 16h4v4h-4zM60 20h4v4h-4z"/><path fill="#243c0c" d="M36 16h4v4h-4zM64 16h4v4h-4zM36 20h4v4h-4z"/><path fill="#486c3c" d="M40 16h4v4h-4z"/><path fill="#304830" d="M44 16h4v4h-4z"/><path fill="#3c4818" d="M68 16h4v4h-4z"/><path fill="#90a878" d="M72 16h4v4h-4z"/><path fill="#303c24" d="M80 16h4v4h-4zM84 16h4v4h-4zM80 24h4v4h-4z"/><path fill="#243c18" d="M88 16h4v4h-4zM92 16h4v4h-4zM48 20h4v4h-4zM44 24h4v4h-4z"/><path fill="#84846c" d="M0 20h4v4h-4zM84 44h4v4h-4z"/><path fill="#a8a884" d="M8 20h4v4h-4z"/><path fill="#a8b49c" d="M16 20h4v4h-4z"/><path fill="#909c84" d="M20 20h4v4h-4z"/><path fill="#606c54" d="M44 20h4v4h-4zM16 32h4v4h-4zM60 32h4v4h-4zM92 52h4v4h-4zM28 60h4v4h-4z"/><path fill="#3c4824" d="M64 20h4v4h-4zM48 24h4v4h-4zM56 24h4v4h-4zM56 48h4v4h-4z"/><path fill="#183000" d="M68 20h4v4h-4z"/><path fill="#546030" d="M72 20h4v4h-4z"/><path fill="#546048" d="M76 20h4v4h-4zM40 24h4v4h-4zM56 32h4v4h-4zM88 32h4v4h-4z"/><path fill="#303c18" d="M92 20h4v4h-4z"/><path fill="#b4b4a8" d="M0 24h4v4h-4z"/><path fill="#6c6c60" d="M8 24h4v4h-4zM72 28h4v4h-4zM12 32h4v4h-4zM36 40h4v4h-4zM52 44h4v4h-4zM84 48h4v4h-4zM32 52h4v4h-4zM24 60h4v4h-4zM92 64h4v4h-4zM84 68h4v4h-4z"/><path fill="#78786c" d="M20 24h4v4h-4zM12 28h4v4h-4zM32 32h4v4h-4zM28 40h4v4h-4zM72 44h4v4h-4zM44 48h4v4h-4zM76 48h4v4h-4zM16 56h4v4h-4zM32 60h4v4h-4z"/><path fill="#3c543c" d="M52 24h4v4h-4zM92 24h4v4h-4z"/><path fill="#849c6c" d="M68 24h4v4h-4z"/><path fill="#54603c" d="M72 24h4v4h-4zM60 28h4v4h-4z"/><path fill="#606048" d="M76 24h4v4h-4zM80 32h4v4h-4zM36 36h4v4h-4zM64 40h4v4h-4zM32 44h4v4h-4zM68 60h4v4h-4zM44 64h4v4h-4z"/><path fill="#3c4830" d="M84 24h4v4h-4z"/><path fill="#485448" d="M88 24h4v4h-4zM0 44h4v4h-4zM16 64h4v4h-4z"/><path fill="#909084" d="M0 28h4v4h-4zM24 40h4v4h-4zM20 48h4v4h-4zM36 64h4v4h-4z"/><path fill="#908484" d="M4 28h4v4h-4zM84 40h4v4h-4zM92 56h4v4h-4zM60 60h4v4h-4zM24 68h4v4h-4z"/><path fill="#9ca890" d="M8 28h4v4h-4z"/><path fill="#786c54" d="M16 28h4v4h-4zM68 36h4v4h-4zM72 48h4v4h-4z"/><path fill="#6c6c54" d="M20 28h4v4h-4zM40 32h4v4h-4zM64 32h4v4h-4zM20 36h4v4h-4zM76 44h4v4h-4zM48 48h4v4h-4zM40 52h4v4h-4zM52 60h4v4h-4zM64 64h4v4h-4z"/><path fill="#788460" d="M28 28h4v4h-4zM16 36h4v4h-4zM28 36h4v4h-4zM92 60h4v4h-4z"/><path fill="#6c6c48" d="M36 28h4v4h-4z"/><path fill="#182400" d="M56 28h4v4h-4z"/><path fill="#6c6048" d="M84 28h4v4h-4z"/><path fill="#3c3c24" d="M88 28h4v4h-4z"/><path fill="#848478" d="M0 32h4v4h-4zM72 36h4v4h-4zM76 40h4v4h-4zM40 44h4v4h-4zM68 44h4v4h-4zM28 52h4v4h-4zM76 52h4v4h-4zM52 56h4v4h-4zM64 56h4v4h-4zM80 60h4v4h-4zM88 60h4v4h-4zM32 64h4v4h-4zM68 64h4v4h-4z"/><path fill="#90846c" d="M20 32h4v4h-4zM68 40h4v4h-4zM68 48h4v4h-4z"/><path fill="#484830" d="M36 32h4v4h-4z"/><path fill="#606054" d="M48 32h4v4h-4zM56 36h4v4h-4zM80 36h4v4h-4zM92 36h4v4h-4zM12 40h4v4h-4zM12 44h4v4h-4zM4 48h4v4h-4zM4 56h4v4h-4zM8 56h4v4h-4zM28 64h4v4h-4zM68 68h4v4h-4zM80 68h4v4h-4z"/><path fill="#303018" d="M76 32h4v4h-4z"/><path fill="#484824" d="M84 32h4v4h-4z"/><path fill="#484848" d="M4 36h4v4h-4zM8 52h4v4h-4zM0 68h4v4h-4z"/><path fill="#605448" d="M8 36h4v4h-4zM36 52h4v4h-4zM64 52h4v4h-4zM56 60h4v4h-4zM48 68h4v4h-4zM52 68h4v4h-4z"/><path fill="#849078" d="M32 36h4v4h-4z"/><path fill="#545448" d="M44 36h4v4h-4zM0 40h4v4h-4zM8 60h4v4h-4zM4 68h4v4h-4z"/><path fill="#787860" d="M64 36h4v4h-4zM80 44h4v4h-4z"/><path fill="#60603c" d="M76 36h4v4h-4z"/><path fill="#9c9090" d="M84 36h4v4h-4zM64 48h4v4h-4zM24 56h4v4h-4zM84 64h4v4h-4zM32 68h4v4h-4z"/><path fill="#483c30" d="M88 36h4v4h-4z"/><path fill="#788484" d="M4 40h4v4h-4z"/><path fill="#6c786c" d="M8 40h4v4h-4zM36 56h4v4h-4zM76 60h4v4h-4zM72 64h4v4h-4z"/><path fill="#847878" d="M20 40h4v4h-4zM12 48h4v4h-4zM80 52h4v4h-4z"/><path fill="#9c9078" d="M32 40h4v4h-4z"/><path fill="#6c6054" d="M52 40h4v4h-4zM72 40h4v4h-4zM88 52h4v4h-4zM48 64h4v4h-4zM40 68h4v4h-4zM76 68h4v4h-4z"/><path fill="#908478" d="M56 40h4v4h-4zM68 52h4v4h-4zM72 52h4v4h-4zM88 56h4v4h-4zM56 68h4v4h-4zM72 68h4v4h-4z"/><path fill="#9c9084" d="M60 40h4v4h-4zM44 44h4v4h-4zM72 56h4v4h-4z"/><path fill="#84786c" d="M80 40h4v4h-4zM60 48h4v4h-4zM68 56h4v4h-4zM76 56h4v4h-4zM40 60h4v4h-4zM80 64h4v4h-4zM88 64h4v4h-4zM36 68h4v4h-4zM60 68h4v4h-4z"/><path fill="#786c60" d="M88 40h4v4h-4zM48 44h4v4h-4zM64 44h4v4h-4zM36 48h4v4h-4zM64 60h4v4h-4zM52 64h4v4h-4zM64 68h4v4h-4zM92 68h4v4h-4z"/><path fill="#606060" d="M4 44h4v4h-4zM44 56h4v4h-4z"/><path fill="#605460" d="M8 44h4v4h-4z"/><path fill="#9c8484" d="M16 44h4v4h-4zM88 48h4v4h-4z"/><path fill="#6c6c6c" d="M20 44h4v4h-4zM28 56h4v4h-4zM40 56h4v4h-4z"/><path fill="#848484" d="M24 44h4v4h-4zM32 48h4v4h-4z"/><path fill="#b4a89c" d="M28 44h4v4h-4z"/><path fill="#6c846c" d="M36 44h4v4h-4zM32 56h4v4h-4z"/><path fill="#846c60" d="M60 44h4v4h-4zM72 60h4v4h-4z"/><path fill="#90906c" d="M92 44h4v4h-4z"/><path fill="#786c78" d="M0 48h4v4h-4z"/><path fill="#545454" d="M8 48h4v4h-4zM16 48h4v4h-4zM0 56h4v4h-4zM12 60h4v4h-4zM0 64h4v4h-4zM12 64h4v4h-4zM28 68h4v4h-4z"/><path fill="#786c6c" d="M52 48h4v4h-4zM48 52h4v4h-4zM84 52h4v4h-4zM80 56h4v4h-4zM40 64h4v4h-4zM8 68h4v4h-4z"/><path fill="#786060" d="M80 48h4v4h-4zM56 52h4v4h-4z"/><path fill="#546054" d="M0 52h4v4h-4zM16 60h4v4h-4zM16 68h4v4h-4z"/><path fill="#605454" d="M4 52h4v4h-4zM12 56h4v4h-4z"/><path fill="#847884" d="M12 52h4v4h-4z"/><path fill="#787878" d="M16 52h4v4h-4zM20 60h4v4h-4z"/><path fill="#c0b4b4" d="M20 52h4v4h-4z"/><path fill="#ccccb4" d="M24 52h4v4h-4z"/><path fill="#907878" d="M44 52h4v4h-4z"/><path fill="#b49ca8" d="M52 52h4v4h-4z"/><path fill="#a8a8a8" d="M60 52h4v4h-4z"/><path fill="#849090" d="M20 56h4v4h-4z"/><path fill="#6c6060" d="M48 56h4v4h-4zM84 60h4v4h-4zM76 64h4v4h-4zM44 68h4v4h-4z"/><path fill="#a89c84" d="M56 56h4v4h-4z"/><path fill="#54483c" d="M60 56h4v4h-4zM44 60h4v4h-4z"/><path fill="#786054" d="M84 56h4v4h-4z"/><path fill="#546060" d="M0 60h4v4h-4z"/><path fill="#3c3024" d="M36 60h4v4h-4z"/><path fill="#846c6c" d="M48 60h4v4h-4z"/><path fill="#3c303c" d="M4 64h4v4h-4z"/><path fill="#909090" d="M8 64h4v4h-4z"/><path fill="#6c8478" d="M24 64h4v4h-4z"/><path fill="#b4b49c" d="M56 64h4v4h-4z"/><path fill="#6c606c" d="M60 64h4v4h-4z"/><path fill="#6c6c78" d="M12 68h4v4h-4z"/><path fill="#3c483c" d="M88 68h4v4h-4z"/></svg></div>
<div class="a" style="left:152px;top:66px;width:11px;height:11px;background:#6a6a9a;border:1px solid #fff;overflow:hidden"><div class="a" style="left:3px;top:5px;width:5px;height:3px;background:#fff"></div></div>
<div class="a" style="left:165px;top:66px;width:15px;height:11px;background:#6a6a9a;border:1px solid #fff;overflow:hidden"><div class="t" style="left:0;top:1.5px;width:13px;text-align:center;font-family:Liberation Mono;font-size:7.5px;font-weight:bold;color:#fff;letter-spacing:-0.6px">XMP</div></div>
<div class="a" style="left:182px;top:66px;width:19px;height:11px;background:#6a6a9a;border:1px solid #fff;overflow:hidden"><div class="t" style="left:0;top:1.5px;width:17px;text-align:center;font-family:Liberation Mono;font-size:7.5px;font-weight:bold;color:#fff;letter-spacing:-0.6px">EXIF</div></div>
<div class="a" style="left:203px;top:66px;width:17px;height:11px;background:#6a6a9a;border:1px solid #fff;overflow:hidden"><div class="t" style="left:0;top:1.5px;width:15px;text-align:center;font-family:Liberation Mono;font-size:7.5px;font-weight:bold;color:#fff;letter-spacing:-0.6px">GPS</div></div>
<div class="a" style="left:119px;top:80px;width:102px;height:15px;background:#ece9c8"></div>
<div class="a" style="left:119px;top:96px;width:102px;height:11px;background:#ece9c8"></div>
<div class="a" style="left:119px;top:108px;width:102px;height:11px;background:#ece9c8"></div>
<div class="t" style="left:119px;top:82.7px;width:102px;text-align:center;font-size:11px;letter-spacing:-0.3px;color:#0a0a2a">DJI_0002</div>
<div class="t" style="left:119px;top:97px;width:102px;text-align:center;font-size:10px;letter-spacing:-0.25px;color:#0a0a2a">JPEG TrueColor (v1.1)</div>
<div class="t" style="left:119px;top:109px;width:102px;text-align:center;font-size:9.5px;letter-spacing:-0.2px;color:#0a0a2a">4000x3000x24</div>
<div class="a" style="left:234px;top:6px;width:92px;height:69px;overflow:hidden;background:#444;box-shadow:3px 3px 3px rgba(0,0,0,.35)"><svg width="92" height="69" viewBox="0 0 92 69" style="display:block;filter:blur(0.9px)"><g><path fill="#c0c890" d="M0 0h4v4h-4zM4 0h4v4h-4zM16 0h4v4h-4zM20 0h4v4h-4zM24 0h4v4h-4zM56 0h4v4h-4zM60 0h4v4h-4zM64 0h4v4h-4z"/><path fill="#9ab060" d="M8 0h4v4h-4zM12 0h4v4h-4zM28 0h4v4h-4zM32 0h4v4h-4zM36 0h4v4h-4zM40 0h4v4h-4zM44 0h4v4h-4zM48 0h4v4h-4zM52 0h4v4h-4zM68 0h4v4h-4zM72 0h4v4h-4zM76 0h4v4h-4zM80 0h4v4h-4zM84 0h4v4h-4zM88 0h4v4h-4zM92 0h4v4h-4z"/><path fill="#3a5028" d="M0 4h4v4h-4zM16 4h4v4h-4zM20 4h4v4h-4zM24 4h4v4h-4zM28 4h4v4h-4zM44 4h4v4h-4zM72 4h4v4h-4zM84 4h4v4h-4zM0 8h4v4h-4zM8 8h4v4h-4zM24 8h4v4h-4zM36 8h4v4h-4zM52 8h4v4h-4zM56 8h4v4h-4zM60 8h4v4h-4zM68 8h4v4h-4zM76 8h4v4h-4zM84 8h4v4h-4z"/><path fill="#6a8040" d="M4 4h4v4h-4zM36 4h4v4h-4zM48 4h4v4h-4zM60 4h4v4h-4zM76 4h4v4h-4zM80 4h4v4h-4zM12 8h4v4h-4zM28 8h4v4h-4zM32 8h4v4h-4zM44 8h4v4h-4zM72 8h4v4h-4zM80 8h4v4h-4zM88 8h4v4h-4z"/><path fill="#2a3a20" d="M8 4h4v4h-4zM12 4h4v4h-4zM32 4h4v4h-4zM40 4h4v4h-4zM52 4h4v4h-4zM56 4h4v4h-4zM64 4h4v4h-4zM68 4h4v4h-4zM88 4h4v4h-4zM92 4h4v4h-4zM4 8h4v4h-4zM16 8h4v4h-4zM20 8h4v4h-4zM40 8h4v4h-4zM48 8h4v4h-4zM64 8h4v4h-4zM92 8h4v4h-4z"/><path fill="#8a8a88" d="M0 12h4v4h-4zM4 12h4v4h-4zM8 12h4v4h-4zM12 12h4v4h-4zM16 12h4v4h-4zM20 12h4v4h-4zM24 12h4v4h-4zM32 12h4v4h-4zM36 12h4v4h-4zM44 12h4v4h-4zM52 12h4v4h-4zM56 12h4v4h-4zM60 12h4v4h-4zM64 12h4v4h-4zM68 12h4v4h-4zM72 12h4v4h-4zM80 12h4v4h-4zM84 12h4v4h-4zM92 12h4v4h-4z"/><path fill="#6a6a60" d="M28 12h4v4h-4zM40 12h4v4h-4zM48 12h4v4h-4zM76 12h4v4h-4zM88 12h4v4h-4z"/><path fill="#8a8470" d="M0 16h4v4h-4zM16 16h4v4h-4zM20 16h4v4h-4zM24 16h4v4h-4zM32 16h4v4h-4zM40 16h4v4h-4zM48 16h4v4h-4zM52 16h4v4h-4zM60 16h4v4h-4zM64 16h4v4h-4zM72 16h4v4h-4zM76 16h4v4h-4zM84 16h4v4h-4zM88 16h4v4h-4zM92 16h4v4h-4zM8 20h4v4h-4zM12 20h4v4h-4zM16 20h4v4h-4zM52 20h4v4h-4zM60 20h4v4h-4zM64 20h4v4h-4zM76 20h4v4h-4zM84 20h4v4h-4zM92 20h4v4h-4zM4 24h4v4h-4zM16 24h4v4h-4zM24 24h4v4h-4zM28 24h4v4h-4zM32 24h4v4h-4zM36 24h4v4h-4zM40 24h4v4h-4zM64 24h4v4h-4zM72 24h4v4h-4zM92 24h4v4h-4zM8 28h4v4h-4zM12 28h4v4h-4zM16 28h4v4h-4zM20 28h4v4h-4zM28 28h4v4h-4zM32 28h4v4h-4zM36 28h4v4h-4zM40 28h4v4h-4zM44 28h4v4h-4zM56 28h4v4h-4zM64 28h4v4h-4zM92 28h4v4h-4zM8 32h4v4h-4zM12 32h4v4h-4zM20 32h4v4h-4zM36 32h4v4h-4zM44 32h4v4h-4zM48 32h4v4h-4zM56 32h4v4h-4zM60 32h4v4h-4zM72 32h4v4h-4zM80 32h4v4h-4zM88 32h4v4h-4zM0 36h4v4h-4zM4 36h4v4h-4zM8 36h4v4h-4zM16 36h4v4h-4zM24 36h4v4h-4zM32 36h4v4h-4zM44 36h4v4h-4zM48 36h4v4h-4zM52 36h4v4h-4zM56 36h4v4h-4zM76 36h4v4h-4zM0 40h4v4h-4zM12 40h4v4h-4zM40 40h4v4h-4zM44 40h4v4h-4zM52 40h4v4h-4zM76 40h4v4h-4zM80 40h4v4h-4zM88 40h4v4h-4zM0 44h4v4h-4zM4 44h4v4h-4zM20 44h4v4h-4zM24 44h4v4h-4zM28 44h4v4h-4zM48 44h4v4h-4zM64 44h4v4h-4zM76 44h4v4h-4zM92 44h4v4h-4zM12 48h4v4h-4zM20 48h4v4h-4zM32 48h4v4h-4zM44 48h4v4h-4zM68 48h4v4h-4zM88 48h4v4h-4zM0 52h4v4h-4zM16 52h4v4h-4zM40 52h4v4h-4zM64 52h4v4h-4zM76 52h4v4h-4zM88 52h4v4h-4zM0 56h4v4h-4zM12 56h4v4h-4zM24 56h4v4h-4zM32 56h4v4h-4zM36 56h4v4h-4zM64 56h4v4h-4zM68 56h4v4h-4zM76 56h4v4h-4zM80 56h4v4h-4zM88 56h4v4h-4zM4 60h4v4h-4zM20 60h4v4h-4zM24 60h4v4h-4zM28 60h4v4h-4zM36 60h4v4h-4zM40 60h4v4h-4zM52 60h4v4h-4zM60 60h4v4h-4zM72 60h4v4h-4zM92 60h4v4h-4zM4 64h4v4h-4zM20 64h4v4h-4zM28 64h4v4h-4zM36 64h4v4h-4zM56 64h4v4h-4zM60 64h4v4h-4zM68 64h4v4h-4zM72 64h4v4h-4zM80 64h4v4h-4zM88 64h4v4h-4zM92 64h4v4h-4zM0 68h4v4h-4zM4 68h4v4h-4zM12 68h4v4h-4zM20 68h4v4h-4zM44 68h4v4h-4zM48 68h4v4h-4zM52 68h4v4h-4zM56 68h4v4h-4zM64 68h4v4h-4zM68 68h4v4h-4zM76 68h4v4h-4zM88 68h4v4h-4z"/><path fill="#9a9480" d="M4 16h4v4h-4zM36 16h4v4h-4zM80 16h4v4h-4zM32 20h4v4h-4zM40 20h4v4h-4zM72 20h4v4h-4zM0 24h4v4h-4zM52 24h4v4h-4zM56 24h4v4h-4zM60 24h4v4h-4zM68 28h4v4h-4zM72 28h4v4h-4zM28 32h4v4h-4zM40 32h4v4h-4zM12 36h4v4h-4zM68 36h4v4h-4zM24 40h4v4h-4zM32 40h4v4h-4zM64 40h4v4h-4zM84 40h4v4h-4zM8 44h4v4h-4zM12 44h4v4h-4zM56 44h4v4h-4zM80 44h4v4h-4zM0 48h4v4h-4zM28 48h4v4h-4zM52 48h4v4h-4zM64 48h4v4h-4zM8 52h4v4h-4zM28 52h4v4h-4zM44 52h4v4h-4zM56 52h4v4h-4zM60 52h4v4h-4zM28 56h4v4h-4zM16 60h4v4h-4zM48 60h4v4h-4zM68 60h4v4h-4zM88 60h4v4h-4zM76 64h4v4h-4zM24 68h4v4h-4zM28 68h4v4h-4zM40 68h4v4h-4z"/><path fill="#7a7860" d="M8 16h4v4h-4zM28 16h4v4h-4zM68 16h4v4h-4zM0 20h4v4h-4zM20 20h4v4h-4zM48 20h4v4h-4zM56 20h4v4h-4zM68 20h4v4h-4zM80 20h4v4h-4zM88 20h4v4h-4zM8 24h4v4h-4zM12 24h4v4h-4zM20 24h4v4h-4zM44 24h4v4h-4zM48 24h4v4h-4zM68 24h4v4h-4zM76 24h4v4h-4zM80 24h4v4h-4zM0 28h4v4h-4zM4 28h4v4h-4zM48 28h4v4h-4zM52 28h4v4h-4zM60 28h4v4h-4zM80 28h4v4h-4zM84 28h4v4h-4zM88 28h4v4h-4zM0 32h4v4h-4zM4 32h4v4h-4zM24 32h4v4h-4zM32 32h4v4h-4zM52 32h4v4h-4zM68 32h4v4h-4zM76 32h4v4h-4zM84 32h4v4h-4zM92 32h4v4h-4zM28 36h4v4h-4zM36 36h4v4h-4zM64 36h4v4h-4zM72 36h4v4h-4zM80 36h4v4h-4zM92 36h4v4h-4zM4 40h4v4h-4zM16 40h4v4h-4zM20 40h4v4h-4zM48 40h4v4h-4zM56 40h4v4h-4zM60 40h4v4h-4zM68 40h4v4h-4zM92 40h4v4h-4zM16 44h4v4h-4zM32 44h4v4h-4zM36 44h4v4h-4zM40 44h4v4h-4zM44 44h4v4h-4zM52 44h4v4h-4zM68 44h4v4h-4zM84 44h4v4h-4zM8 48h4v4h-4zM16 48h4v4h-4zM24 48h4v4h-4zM36 48h4v4h-4zM40 48h4v4h-4zM60 48h4v4h-4zM76 48h4v4h-4zM92 48h4v4h-4zM4 52h4v4h-4zM12 52h4v4h-4zM20 52h4v4h-4zM32 52h4v4h-4zM52 52h4v4h-4zM84 52h4v4h-4zM4 56h4v4h-4zM8 56h4v4h-4zM16 56h4v4h-4zM20 56h4v4h-4zM40 56h4v4h-4zM48 56h4v4h-4zM56 56h4v4h-4zM60 56h4v4h-4zM72 56h4v4h-4zM8 60h4v4h-4zM32 60h4v4h-4zM44 60h4v4h-4zM56 60h4v4h-4zM64 60h4v4h-4zM76 60h4v4h-4zM80 60h4v4h-4zM84 60h4v4h-4zM8 64h4v4h-4zM16 64h4v4h-4zM32 64h4v4h-4zM40 64h4v4h-4zM52 64h4v4h-4zM64 64h4v4h-4zM8 68h4v4h-4zM16 68h4v4h-4zM32 68h4v4h-4zM36 68h4v4h-4zM60 68h4v4h-4zM84 68h4v4h-4z"/><path fill="#5a6a40" d="M12 16h4v4h-4zM44 16h4v4h-4zM56 16h4v4h-4zM4 20h4v4h-4zM24 20h4v4h-4zM28 20h4v4h-4zM36 20h4v4h-4zM44 20h4v4h-4zM84 24h4v4h-4zM88 24h4v4h-4zM24 28h4v4h-4zM76 28h4v4h-4zM16 32h4v4h-4zM64 32h4v4h-4zM20 36h4v4h-4zM40 36h4v4h-4zM60 36h4v4h-4zM84 36h4v4h-4zM88 36h4v4h-4zM8 40h4v4h-4zM28 40h4v4h-4zM36 40h4v4h-4zM72 40h4v4h-4zM60 44h4v4h-4zM72 44h4v4h-4zM88 44h4v4h-4zM4 48h4v4h-4zM48 48h4v4h-4zM56 48h4v4h-4zM72 48h4v4h-4zM80 48h4v4h-4zM84 48h4v4h-4zM24 52h4v4h-4zM36 52h4v4h-4zM48 52h4v4h-4zM68 52h4v4h-4zM72 52h4v4h-4zM80 52h4v4h-4zM92 52h4v4h-4zM44 56h4v4h-4zM52 56h4v4h-4zM84 56h4v4h-4zM92 56h4v4h-4zM0 60h4v4h-4zM12 60h4v4h-4zM0 64h4v4h-4zM12 64h4v4h-4zM24 64h4v4h-4zM44 64h4v4h-4zM48 64h4v4h-4zM84 64h4v4h-4zM72 68h4v4h-4zM80 68h4v4h-4zM92 68h4v4h-4z"/></g></svg></div>
<div class="a" style="left:262px;top:66px;width:11px;height:11px;background:#6a6a9a;border:1px solid #fff;overflow:hidden"><div class="a" style="left:3px;top:5px;width:5px;height:3px;background:#fff"></div></div>
<div class="a" style="left:275px;top:66px;width:15px;height:11px;background:#6a6a9a;border:1px solid #fff;overflow:hidden"><div class="t" style="left:0;top:1.5px;width:13px;text-align:center;font-family:Liberation Mono;font-size:7.5px;font-weight:bold;color:#fff;letter-spacing:-0.6px">XMP</div></div>
<div class="a" style="left:292px;top:66px;width:19px;height:11px;background:#6a6a9a;border:1px solid #fff;overflow:hidden"><div class="t" style="left:0;top:1.5px;width:17px;text-align:center;font-family:Liberation Mono;font-size:7.5px;font-weight:bold;color:#fff;letter-spacing:-0.6px">EXIF</div></div>
<div class="a" style="left:313px;top:66px;width:17px;height:11px;background:#6a6a9a;border:1px solid #fff;overflow:hidden"><div class="t" style="left:0;top:1.5px;width:15px;text-align:center;font-family:Liberation Mono;font-size:7.5px;font-weight:bold;color:#fff;letter-spacing:-0.6px">GPS</div></div>
<div class="a" style="left:229px;top:80px;width:102px;height:15px;background:#ece9c8"></div>
<div class="a" style="left:229px;top:96px;width:102px;height:11px;background:#ece9c8"></div>
<div class="a" style="left:229px;top:108px;width:102px;height:11px;background:#ece9c8"></div>
<div class="t" style="left:229px;top:82.7px;width:102px;text-align:center;font-size:11px;letter-spacing:-0.3px;color:#0a0a2a">DJI_0003</div>
<div class="t" style="left:229px;top:97px;width:102px;text-align:center;font-size:10px;letter-spacing:-0.25px;color:#0a0a2a">JPEG TrueColor (v1.1)</div>
<div class="t" style="left:229px;top:109px;width:102px;text-align:center;font-size:9.5px;letter-spacing:-0.2px;color:#0a0a2a">4000x3000x24</div>
<div class="a" style="left:344px;top:6px;width:92px;height:69px;overflow:hidden;background:#444;box-shadow:3px 3px 3px rgba(0,0,0,.35)"><svg width="92" height="69" viewBox="0 0 92 69" style="display:block;filter:blur(0.9px)"><g><path fill="#9ab060" d="M0 0h4v4h-4zM4 0h4v4h-4zM8 0h4v4h-4zM12 0h4v4h-4zM16 0h4v4h-4zM20 0h4v4h-4zM24 0h4v4h-4zM32 0h4v4h-4zM36 0h4v4h-4zM44 0h4v4h-4zM52 0h4v4h-4zM56 0h4v4h-4zM60 0h4v4h-4zM64 0h4v4h-4zM72 0h4v4h-4zM84 0h4v4h-4zM92 0h4v4h-4z"/><path fill="#c0c890" d="M28 0h4v4h-4zM40 0h4v4h-4zM48 0h4v4h-4zM68 0h4v4h-4zM76 0h4v4h-4zM80 0h4v4h-4zM88 0h4v4h-4z"/><path fill="#3a5028" d="M0 4h4v4h-4zM4 4h4v4h-4zM12 4h4v4h-4zM32 4h4v4h-4zM40 4h4v4h-4zM52 4h4v4h-4zM56 4h4v4h-4zM60 4h4v4h-4zM68 4h4v4h-4zM76 4h4v4h-4zM84 4h4v4h-4zM88 4h4v4h-4zM28 8h4v4h-4zM52 8h4v4h-4zM64 8h4v4h-4zM68 8h4v4h-4zM80 8h4v4h-4zM88 8h4v4h-4zM92 8h4v4h-4z"/><path fill="#6a8040" d="M8 4h4v4h-4zM20 4h4v4h-4zM28 4h4v4h-4zM44 4h4v4h-4zM48 4h4v4h-4zM64 4h4v4h-4zM4 8h4v4h-4zM12 8h4v4h-4zM16 8h4v4h-4zM20 8h4v4h-4zM32 8h4v4h-4zM36 8h4v4h-4zM40 8h4v4h-4zM72 8h4v4h-4zM76 8h4v4h-4z"/><path fill="#2a3a20" d="M16 4h4v4h-4zM24 4h4v4h-4zM36 4h4v4h-4zM72 4h4v4h-4zM80 4h4v4h-4zM92 4h4v4h-4zM0 8h4v4h-4zM8 8h4v4h-4zM24 8h4v4h-4zM44 8h4v4h-4zM48 8h4v4h-4zM56 8h4v4h-4zM60 8h4v4h-4zM84 8h4v4h-4z"/><path fill="#8a8a88" d="M0 12h4v4h-4zM12 12h4v4h-4zM16 12h4v4h-4zM20 12h4v4h-4zM24 12h4v4h-4zM28 12h4v4h-4zM40 12h4v4h-4zM48 12h4v4h-4zM52 12h4v4h-4zM56 12h4v4h-4zM60 12h4v4h-4zM64 12h4v4h-4zM68 12h4v4h-4zM72 12h4v4h-4zM76 12h4v4h-4zM80 12h4v4h-4zM88 12h4v4h-4z"/><path fill="#6a6a60" d="M4 12h4v4h-4zM8 12h4v4h-4zM32 12h4v4h-4zM36 12h4v4h-4zM44 12h4v4h-4zM84 12h4v4h-4zM92 12h4v4h-4z"/><path fill="#9a9480" d="M0 16h4v4h-4zM32 16h4v4h-4zM56 16h4v4h-4zM36 20h4v4h-4zM64 24h4v4h-4zM56 28h4v4h-4zM68 28h4v4h-4zM72 28h4v4h-4zM76 28h4v4h-4zM84 28h4v4h-4zM88 28h4v4h-4zM48 32h4v4h-4zM56 32h4v4h-4zM60 32h4v4h-4zM64 32h4v4h-4zM4 36h4v4h-4zM20 36h4v4h-4zM56 36h4v4h-4zM76 36h4v4h-4zM32 40h4v4h-4zM84 44h4v4h-4zM88 44h4v4h-4zM0 48h4v4h-4zM28 48h4v4h-4zM80 48h4v4h-4zM16 52h4v4h-4zM52 52h4v4h-4zM24 56h4v4h-4zM64 56h4v4h-4zM80 56h4v4h-4zM28 60h4v4h-4zM92 60h4v4h-4zM44 64h4v4h-4zM68 64h4v4h-4zM4 68h4v4h-4zM12 68h4v4h-4zM80 68h4v4h-4z"/><path fill="#8a8470" d="M4 16h4v4h-4zM48 16h4v4h-4zM52 16h4v4h-4zM68 16h4v4h-4zM72 16h4v4h-4zM80 16h4v4h-4zM92 16h4v4h-4zM12 20h4v4h-4zM24 20h4v4h-4zM28 20h4v4h-4zM40 20h4v4h-4zM52 20h4v4h-4zM56 20h4v4h-4zM60 20h4v4h-4zM64 20h4v4h-4zM72 20h4v4h-4zM76 20h4v4h-4zM84 20h4v4h-4zM0 24h4v4h-4zM4 24h4v4h-4zM12 24h4v4h-4zM16 24h4v4h-4zM28 24h4v4h-4zM32 24h4v4h-4zM36 24h4v4h-4zM52 24h4v4h-4zM56 24h4v4h-4zM72 24h4v4h-4zM76 24h4v4h-4zM84 24h4v4h-4zM0 28h4v4h-4zM4 28h4v4h-4zM20 28h4v4h-4zM24 28h4v4h-4zM28 28h4v4h-4zM36 28h4v4h-4zM40 28h4v4h-4zM52 28h4v4h-4zM60 28h4v4h-4zM64 28h4v4h-4zM92 28h4v4h-4zM16 32h4v4h-4zM20 32h4v4h-4zM24 32h4v4h-4zM28 32h4v4h-4zM36 32h4v4h-4zM44 32h4v4h-4zM72 32h4v4h-4zM80 32h4v4h-4zM84 32h4v4h-4zM0 36h4v4h-4zM12 36h4v4h-4zM16 36h4v4h-4zM32 36h4v4h-4zM36 36h4v4h-4zM48 36h4v4h-4zM68 36h4v4h-4zM80 36h4v4h-4zM84 36h4v4h-4zM88 36h4v4h-4zM12 40h4v4h-4zM16 40h4v4h-4zM20 40h4v4h-4zM24 40h4v4h-4zM28 40h4v4h-4zM40 40h4v4h-4zM48 40h4v4h-4zM52 40h4v4h-4zM56 40h4v4h-4zM68 40h4v4h-4zM72 40h4v4h-4zM76 40h4v4h-4zM80 40h4v4h-4zM92 40h4v4h-4zM0 44h4v4h-4zM4 44h4v4h-4zM8 44h4v4h-4zM20 44h4v4h-4zM36 44h4v4h-4zM60 44h4v4h-4zM72 44h4v4h-4zM92 44h4v4h-4zM8 48h4v4h-4zM16 48h4v4h-4zM48 48h4v4h-4zM56 48h4v4h-4zM60 48h4v4h-4zM68 48h4v4h-4zM72 48h4v4h-4zM76 48h4v4h-4zM84 48h4v4h-4zM88 48h4v4h-4zM0 52h4v4h-4zM28 52h4v4h-4zM44 52h4v4h-4zM56 52h4v4h-4zM60 52h4v4h-4zM72 52h4v4h-4zM76 52h4v4h-4zM80 52h4v4h-4zM92 52h4v4h-4zM0 56h4v4h-4zM4 56h4v4h-4zM8 56h4v4h-4zM16 56h4v4h-4zM28 56h4v4h-4zM36 56h4v4h-4zM68 56h4v4h-4zM72 56h4v4h-4zM0 60h4v4h-4zM4 60h4v4h-4zM8 60h4v4h-4zM16 60h4v4h-4zM20 60h4v4h-4zM32 60h4v4h-4zM40 60h4v4h-4zM52 60h4v4h-4zM56 60h4v4h-4zM60 60h4v4h-4zM68 60h4v4h-4zM72 60h4v4h-4zM76 60h4v4h-4zM80 60h4v4h-4zM88 60h4v4h-4zM36 64h4v4h-4zM52 64h4v4h-4zM56 64h4v4h-4zM76 64h4v4h-4zM80 64h4v4h-4zM84 64h4v4h-4zM88 64h4v4h-4zM8 68h4v4h-4zM16 68h4v4h-4zM28 68h4v4h-4zM32 68h4v4h-4zM40 68h4v4h-4zM44 68h4v4h-4zM56 68h4v4h-4zM60 68h4v4h-4zM72 68h4v4h-4zM84 68h4v4h-4zM92 68h4v4h-4z"/><path fill="#7a7860" d="M8 16h4v4h-4zM12 16h4v4h-4zM16 16h4v4h-4zM20 16h4v4h-4zM24 16h4v4h-4zM28 16h4v4h-4zM36 16h4v4h-4zM40 16h4v4h-4zM60 16h4v4h-4zM64 16h4v4h-4zM76 16h4v4h-4zM84 16h4v4h-4zM88 16h4v4h-4zM0 20h4v4h-4zM4 20h4v4h-4zM8 20h4v4h-4zM32 20h4v4h-4zM44 20h4v4h-4zM48 20h4v4h-4zM68 20h4v4h-4zM88 20h4v4h-4zM20 24h4v4h-4zM44 24h4v4h-4zM60 24h4v4h-4zM68 24h4v4h-4zM80 24h4v4h-4zM12 28h4v4h-4zM44 28h4v4h-4zM48 28h4v4h-4zM80 28h4v4h-4zM8 32h4v4h-4zM12 32h4v4h-4zM32 32h4v4h-4zM52 32h4v4h-4zM68 32h4v4h-4zM88 32h4v4h-4zM92 32h4v4h-4zM8 36h4v4h-4zM24 36h4v4h-4zM40 36h4v4h-4zM72 36h4v4h-4zM92 36h4v4h-4zM0 40h4v4h-4zM4 40h4v4h-4zM44 40h4v4h-4zM60 40h4v4h-4zM64 40h4v4h-4zM84 40h4v4h-4zM12 44h4v4h-4zM28 44h4v4h-4zM32 44h4v4h-4zM40 44h4v4h-4zM48 44h4v4h-4zM52 44h4v4h-4zM56 44h4v4h-4zM64 44h4v4h-4zM76 44h4v4h-4zM80 44h4v4h-4zM12 48h4v4h-4zM24 48h4v4h-4zM36 48h4v4h-4zM44 48h4v4h-4zM52 48h4v4h-4zM8 52h4v4h-4zM20 52h4v4h-4zM36 52h4v4h-4zM64 52h4v4h-4zM84 52h4v4h-4zM12 56h4v4h-4zM20 56h4v4h-4zM40 56h4v4h-4zM48 56h4v4h-4zM52 56h4v4h-4zM56 56h4v4h-4zM60 56h4v4h-4zM84 56h4v4h-4zM88 56h4v4h-4zM12 60h4v4h-4zM24 60h4v4h-4zM48 60h4v4h-4zM64 60h4v4h-4zM0 64h4v4h-4zM4 64h4v4h-4zM8 64h4v4h-4zM20 64h4v4h-4zM24 64h4v4h-4zM48 64h4v4h-4zM64 64h4v4h-4zM20 68h4v4h-4zM48 68h4v4h-4zM52 68h4v4h-4zM64 68h4v4h-4zM68 68h4v4h-4zM76 68h4v4h-4zM88 68h4v4h-4z"/><path fill="#5a6a40" d="M44 16h4v4h-4zM16 20h4v4h-4zM20 20h4v4h-4zM80 20h4v4h-4zM92 20h4v4h-4zM8 24h4v4h-4zM24 24h4v4h-4zM40 24h4v4h-4zM48 24h4v4h-4zM88 24h4v4h-4zM92 24h4v4h-4zM8 28h4v4h-4zM16 28h4v4h-4zM32 28h4v4h-4zM0 32h4v4h-4zM4 32h4v4h-4zM40 32h4v4h-4zM76 32h4v4h-4zM28 36h4v4h-4zM44 36h4v4h-4zM52 36h4v4h-4zM60 36h4v4h-4zM64 36h4v4h-4zM8 40h4v4h-4zM36 40h4v4h-4zM88 40h4v4h-4zM16 44h4v4h-4zM24 44h4v4h-4zM44 44h4v4h-4zM68 44h4v4h-4zM4 48h4v4h-4zM20 48h4v4h-4zM32 48h4v4h-4zM40 48h4v4h-4zM64 48h4v4h-4zM92 48h4v4h-4zM4 52h4v4h-4zM12 52h4v4h-4zM24 52h4v4h-4zM32 52h4v4h-4zM40 52h4v4h-4zM48 52h4v4h-4zM68 52h4v4h-4zM88 52h4v4h-4zM32 56h4v4h-4zM44 56h4v4h-4zM76 56h4v4h-4zM92 56h4v4h-4zM36 60h4v4h-4zM44 60h4v4h-4zM84 60h4v4h-4zM12 64h4v4h-4zM16 64h4v4h-4zM28 64h4v4h-4zM32 64h4v4h-4zM40 64h4v4h-4zM60 64h4v4h-4zM72 64h4v4h-4zM92 64h4v4h-4zM0 68h4v4h-4zM24 68h4v4h-4zM36 68h4v4h-4z"/></g></svg></div>
<div class="a" style="left:372px;top:66px;width:11px;height:11px;background:#6a6a9a;border:1px solid #fff;overflow:hidden"><div class="a" style="left:3px;top:5px;width:5px;height:3px;background:#fff"></div></div>
<div class="a" style="left:385px;top:66px;width:15px;height:11px;background:#6a6a9a;border:1px solid #fff;overflow:hidden"><div class="t" style="left:0;top:1.5px;width:13px;text-align:center;font-family:Liberation Mono;font-size:7.5px;font-weight:bold;color:#fff;letter-spacing:-0.6px">XMP</div></div>
<div class="a" style="left:402px;top:66px;width:19px;height:11px;background:#6a6a9a;border:1px solid #fff;overflow:hidden"><div class="t" style="left:0;top:1.5px;width:17px;text-align:center;font-family:Liberation Mono;font-size:7.5px;font-weight:bold;color:#fff;letter-spacing:-0.6px">EXIF</div></div>
<div class="a" style="left:423px;top:66px;width:17px;height:11px;background:#6a6a9a;border:1px solid #fff;overflow:hidden"><div class="t" style="left:0;top:1.5px;width:15px;text-align:center;font-family:Liberation Mono;font-size:7.5px;font-weight:bold;color:#fff;letter-spacing:-0.6px">GPS</div></div>
<div class="a" style="left:339px;top:80px;width:102px;height:15px;background:#ece9c8"></div>
<div class="a" style="left:339px;top:96px;width:102px;height:11px;background:#ece9c8"></div>
<div class="a" style="left:339px;top:108px;width:102px;height:11px;background:#ece9c8"></div>
<div class="t" style="left:339px;top:82.7px;width:102px;text-align:center;font-size:11px;letter-spacing:-0.3px;color:#0a0a2a">DJI_0004</div>
<div class="t" style="left:339px;top:97px;width:102px;text-align:center;font-size:10px;letter-spacing:-0.25px;color:#0a0a2a">JPEG TrueColor (v1.1)</div>
<div class="t" style="left:339px;top:109px;width:102px;text-align:center;font-size:9.5px;letter-spacing:-0.2px;color:#0a0a2a">4000x3000x24</div>
<div class="a" style="left:454px;top:6px;width:92px;height:69px;overflow:hidden;background:#444;box-shadow:3px 3px 3px rgba(0,0,0,.35)"><svg width="92" height="69" viewBox="0 0 92 69" style="display:block;filter:blur(0.9px)"><g><path fill="#9ab060" d="M0 0h4v4h-4zM4 0h4v4h-4zM8 0h4v4h-4zM12 0h4v4h-4zM16 0h4v4h-4zM20 0h4v4h-4zM36 0h4v4h-4zM40 0h4v4h-4zM44 0h4v4h-4zM48 0h4v4h-4zM52 0h4v4h-4zM56 0h4v4h-4zM76 0h4v4h-4zM80 0h4v4h-4zM84 0h4v4h-4z"/><path fill="#c0c890" d="M24 0h4v4h-4zM28 0h4v4h-4zM32 0h4v4h-4zM60 0h4v4h-4zM64 0h4v4h-4zM68 0h4v4h-4zM72 0h4v4h-4zM88 0h4v4h-4zM92 0h4v4h-4z"/><path fill="#6a8040" d="M0 4h4v4h-4zM32 4h4v4h-4zM36 4h4v4h-4zM48 4h4v4h-4zM56 4h4v4h-4zM60 4h4v4h-4zM24 8h4v4h-4zM64 8h4v4h-4z"/><path fill="#3a5028" d="M4 4h4v4h-4zM20 4h4v4h-4zM24 4h4v4h-4zM28 4h4v4h-4zM44 4h4v4h-4zM68 4h4v4h-4zM76 4h4v4h-4zM80 4h4v4h-4zM84 4h4v4h-4zM92 4h4v4h-4zM0 8h4v4h-4zM8 8h4v4h-4zM16 8h4v4h-4zM20 8h4v4h-4zM28 8h4v4h-4zM32 8h4v4h-4zM36 8h4v4h-4zM44 8h4v4h-4zM48 8h4v4h-4zM56 8h4v4h-4zM68 8h4v4h-4zM72 8h4v4h-4zM76 8h4v4h-4zM88 8h4v4h-4zM92 8h4v4h-4z"/><path fill="#2a3a20" d="M8 4h4v4h-4zM12 4h4v4h-4zM16 4h4v4h-4zM40 4h4v4h-4zM52 4h4v4h-4zM64 4h4v4h-4zM72 4h4v4h-4zM88 4h4v4h-4zM4 8h4v4h-4zM12 8h4v4h-4zM40 8h4v4h-4zM52 8h4v4h-4zM60 8h4v4h-4zM80 8h4v4h-4zM84 8h4v4h-4z"/><path fill="#8a8a88" d="M0 12h4v4h-4zM4 12h4v4h-4zM8 12h4v4h-4zM12 12h4v4h-4zM24 12h4v4h-4zM32 12h4v4h-4zM36 12h4v4h-4zM48 12h4v4h-4zM56 12h4v4h-4zM64 12h4v4h-4zM68 12h4v4h-4zM72 12h4v4h-4zM76 12h4v4h-4zM80 12h4v4h-4zM88 12h4v4h-4zM92 12h4v4h-4z"/><path fill="#6a6a60" d="M16 12h4v4h-4zM20 12h4v4h-4zM28 12h4v4h-4zM40 12h4v4h-4zM44 12h4v4h-4zM52 12h4v4h-4zM60 12h4v4h-4zM84 12h4v4h-4z"/><path fill="#8a8470" d="M0 16h4v4h-4zM4 16h4v4h-4zM12 16h4v4h-4zM16 16h4v4h-4zM20 16h4v4h-4zM32 16h4v4h-4zM36 16h4v4h-4zM40 16h4v4h-4zM44 16h4v4h-4zM52 16h4v4h-4zM56 16h4v4h-4zM64 16h4v4h-4zM72 16h4v4h-4zM84 16h4v4h-4zM0 20h4v4h-4zM4 20h4v4h-4zM8 20h4v4h-4zM16 20h4v4h-4zM32 20h4v4h-4zM36 20h4v4h-4zM40 20h4v4h-4zM44 20h4v4h-4zM48 20h4v4h-4zM56 20h4v4h-4zM60 20h4v4h-4zM76 20h4v4h-4zM4 24h4v4h-4zM8 24h4v4h-4zM24 24h4v4h-4zM56 24h4v4h-4zM68 24h4v4h-4zM84 24h4v4h-4zM92 24h4v4h-4zM8 28h4v4h-4zM12 28h4v4h-4zM32 28h4v4h-4zM36 28h4v4h-4zM44 28h4v4h-4zM52 28h4v4h-4zM76 28h4v4h-4zM84 28h4v4h-4zM8 32h4v4h-4zM12 32h4v4h-4zM32 32h4v4h-4zM36 32h4v4h-4zM48 32h4v4h-4zM60 32h4v4h-4zM68 32h4v4h-4zM76 32h4v4h-4zM80 32h4v4h-4zM92 32h4v4h-4zM0 36h4v4h-4zM28 36h4v4h-4zM36 36h4v4h-4zM40 36h4v4h-4zM56 36h4v4h-4zM64 36h4v4h-4zM68 36h4v4h-4zM76 36h4v4h-4zM92 36h4v4h-4zM0 40h4v4h-4zM20 40h4v4h-4zM24 40h4v4h-4zM32 40h4v4h-4zM56 40h4v4h-4zM72 40h4v4h-4zM92 40h4v4h-4zM4 44h4v4h-4zM12 44h4v4h-4zM16 44h4v4h-4zM20 44h4v4h-4zM28 44h4v4h-4zM36 44h4v4h-4zM44 44h4v4h-4zM52 44h4v4h-4zM56 44h4v4h-4zM64 44h4v4h-4zM72 44h4v4h-4zM76 44h4v4h-4zM80 44h4v4h-4zM84 44h4v4h-4zM12 48h4v4h-4zM40 48h4v4h-4zM64 48h4v4h-4zM72 48h4v4h-4zM88 48h4v4h-4zM92 48h4v4h-4zM0 52h4v4h-4zM16 52h4v4h-4zM20 52h4v4h-4zM28 52h4v4h-4zM32 52h4v4h-4zM36 52h4v4h-4zM40 52h4v4h-4zM56 52h4v4h-4zM68 52h4v4h-4zM72 52h4v4h-4zM92 52h4v4h-4zM0 56h4v4h-4zM4 56h4v4h-4zM8 56h4v4h-4zM24 56h4v4h-4zM28 56h4v4h-4zM32 56h4v4h-4zM40 56h4v4h-4zM60 56h4v4h-4zM68 56h4v4h-4zM72 56h4v4h-4zM76 56h4v4h-4zM80 56h4v4h-4zM84 56h4v4h-4zM88 56h4v4h-4zM0 60h4v4h-4zM52 60h4v4h-4zM64 60h4v4h-4zM68 60h4v4h-4zM76 60h4v4h-4zM80 60h4v4h-4zM92 60h4v4h-4zM0 64h4v4h-4zM8 64h4v4h-4zM16 64h4v4h-4zM24 64h4v4h-4zM28 64h4v4h-4zM40 64h4v4h-4zM56 64h4v4h-4zM80 64h4v4h-4zM0 68h4v4h-4zM12 68h4v4h-4zM28 68h4v4h-4zM36 68h4v4h-4zM48 68h4v4h-4zM60 68h4v4h-4z"/><path fill="#5a6a40" d="M8 16h4v4h-4zM80 16h4v4h-4zM24 20h4v4h-4zM88 20h4v4h-4zM92 20h4v4h-4zM32 24h4v4h-4zM40 24h4v4h-4zM24 28h4v4h-4zM56 28h4v4h-4zM60 28h4v4h-4zM92 28h4v4h-4zM40 32h4v4h-4zM52 32h4v4h-4zM56 32h4v4h-4zM72 32h4v4h-4zM20 36h4v4h-4zM24 36h4v4h-4zM44 36h4v4h-4zM52 36h4v4h-4zM88 36h4v4h-4zM12 40h4v4h-4zM28 40h4v4h-4zM36 40h4v4h-4zM80 40h4v4h-4zM0 44h4v4h-4zM24 44h4v4h-4zM92 44h4v4h-4zM0 48h4v4h-4zM4 48h4v4h-4zM32 48h4v4h-4zM52 48h4v4h-4zM60 48h4v4h-4zM84 48h4v4h-4zM24 52h4v4h-4zM20 56h4v4h-4zM44 56h4v4h-4zM8 60h4v4h-4zM12 60h4v4h-4zM28 60h4v4h-4zM40 60h4v4h-4zM56 60h4v4h-4zM32 64h4v4h-4zM36 64h4v4h-4zM52 64h4v4h-4zM60 64h4v4h-4zM68 64h4v4h-4zM84 64h4v4h-4zM88 64h4v4h-4zM40 68h4v4h-4zM64 68h4v4h-4zM84 68h4v4h-4z"/><path fill="#9a9480" d="M24 16h4v4h-4zM68 16h4v4h-4zM88 16h4v4h-4zM20 20h4v4h-4zM52 20h4v4h-4zM64 20h4v4h-4zM72 20h4v4h-4zM80 20h4v4h-4zM12 24h4v4h-4zM16 24h4v4h-4zM20 24h4v4h-4zM60 24h4v4h-4zM64 24h4v4h-4zM72 24h4v4h-4zM76 24h4v4h-4zM88 24h4v4h-4zM0 28h4v4h-4zM28 28h4v4h-4zM40 28h4v4h-4zM48 28h4v4h-4zM64 28h4v4h-4zM72 28h4v4h-4zM88 28h4v4h-4zM24 32h4v4h-4zM88 32h4v4h-4zM8 36h4v4h-4zM32 36h4v4h-4zM60 36h4v4h-4zM84 36h4v4h-4zM40 40h4v4h-4zM60 40h4v4h-4zM68 40h4v4h-4zM76 40h4v4h-4zM32 44h4v4h-4zM60 44h4v4h-4zM88 44h4v4h-4zM8 48h4v4h-4zM28 48h4v4h-4zM36 48h4v4h-4zM68 48h4v4h-4zM80 48h4v4h-4zM8 52h4v4h-4zM12 52h4v4h-4zM60 52h4v4h-4zM76 52h4v4h-4zM80 52h4v4h-4zM84 52h4v4h-4zM12 56h4v4h-4zM16 56h4v4h-4zM36 56h4v4h-4zM56 56h4v4h-4zM92 56h4v4h-4zM4 60h4v4h-4zM20 60h4v4h-4zM24 60h4v4h-4zM72 60h4v4h-4zM88 60h4v4h-4zM12 64h4v4h-4zM20 64h4v4h-4zM64 64h4v4h-4zM72 64h4v4h-4zM76 64h4v4h-4zM8 68h4v4h-4zM20 68h4v4h-4zM52 68h4v4h-4zM68 68h4v4h-4zM72 68h4v4h-4zM76 68h4v4h-4z"/><path fill="#7a7860" d="M28 16h4v4h-4zM48 16h4v4h-4zM60 16h4v4h-4zM76 16h4v4h-4zM92 16h4v4h-4zM12 20h4v4h-4zM28 20h4v4h-4zM68 20h4v4h-4zM84 20h4v4h-4zM0 24h4v4h-4zM28 24h4v4h-4zM36 24h4v4h-4zM44 24h4v4h-4zM48 24h4v4h-4zM52 24h4v4h-4zM80 24h4v4h-4zM4 28h4v4h-4zM16 28h4v4h-4zM20 28h4v4h-4zM68 28h4v4h-4zM80 28h4v4h-4zM0 32h4v4h-4zM4 32h4v4h-4zM16 32h4v4h-4zM20 32h4v4h-4zM28 32h4v4h-4zM44 32h4v4h-4zM64 32h4v4h-4zM84 32h4v4h-4zM4 36h4v4h-4zM12 36h4v4h-4zM16 36h4v4h-4zM48 36h4v4h-4zM72 36h4v4h-4zM80 36h4v4h-4zM4 40h4v4h-4zM8 40h4v4h-4zM16 40h4v4h-4zM44 40h4v4h-4zM48 40h4v4h-4zM52 40h4v4h-4zM64 40h4v4h-4zM84 40h4v4h-4zM88 40h4v4h-4zM8 44h4v4h-4zM40 44h4v4h-4zM48 44h4v4h-4zM68 44h4v4h-4zM16 48h4v4h-4zM20 48h4v4h-4zM24 48h4v4h-4zM44 48h4v4h-4zM48 48h4v4h-4zM56 48h4v4h-4zM76 48h4v4h-4zM4 52h4v4h-4zM44 52h4v4h-4zM48 52h4v4h-4zM52 52h4v4h-4zM64 52h4v4h-4zM88 52h4v4h-4zM48 56h4v4h-4zM52 56h4v4h-4zM64 56h4v4h-4zM16 60h4v4h-4zM32 60h4v4h-4zM36 60h4v4h-4zM44 60h4v4h-4zM48 60h4v4h-4zM60 60h4v4h-4zM84 60h4v4h-4zM4 64h4v4h-4zM44 64h4v4h-4zM48 64h4v4h-4zM92 64h4v4h-4zM4 68h4v4h-4zM16 68h4v4h-4zM24 68h4v4h-4zM32 68h4v4h-4zM44 68h4v4h-4zM56 68h4v4h-4zM80 68h4v4h-4zM88 68h4v4h-4zM92 68h4v4h-4z"/></g></svg></div>
<div class="a" style="left:482px;top:66px;width:11px;height:11px;background:#6a6a9a;border:1px solid #fff;overflow:hidden"><div class="a" style="left:3px;top:5px;width:5px;height:3px;background:#fff"></div></div>
<div class="a" style="left:495px;top:66px;width:15px;height:11px;background:#6a6a9a;border:1px solid #fff;overflow:hidden"><div class="t" style="left:0;top:1.5px;width:13px;text-align:center;font-family:Liberation Mono;font-size:7.5px;font-weight:bold;color:#fff;letter-spacing:-0.6px">XMP</div></div>
<div class="a" style="left:512px;top:66px;width:19px;height:11px;background:#6a6a9a;border:1px solid #fff;overflow:hidden"><div class="t" style="left:0;top:1.5px;width:17px;text-align:center;font-family:Liberation Mono;font-size:7.5px;font-weight:bold;color:#fff;letter-spacing:-0.6px">EXIF</div></div>
<div class="a" style="left:533px;top:66px;width:17px;height:11px;background:#6a6a9a;border:1px solid #fff;overflow:hidden"><div class="t" style="left:0;top:1.5px;width:15px;text-align:center;font-family:Liberation Mono;font-size:7.5px;font-weight:bold;color:#fff;letter-spacing:-0.6px">GPS</div></div>
<div class="a" style="left:449px;top:80px;width:102px;height:15px;background:#ece9c8"></div>
<div class="a" style="left:449px;top:96px;width:102px;height:11px;background:#ece9c8"></div>
<div class="a" style="left:449px;top:108px;width:102px;height:11px;background:#ece9c8"></div>
<div class="t" style="left:449px;top:82.7px;width:102px;text-align:center;font-size:11px;letter-spacing:-0.3px;color:#0a0a2a">DJI_0005</div>
<div class="t" style="left:449px;top:97px;width:102px;text-align:center;font-size:10px;letter-spacing:-0.25px;color:#0a0a2a">JPEG TrueColor (v1.1)</div>
<div class="t" style="left:449px;top:109px;width:102px;text-align:center;font-size:9.5px;letter-spacing:-0.2px;color:#0a0a2a">4000x3000x24</div>
<svg class="a" style="left:592px;top:25px" width="34" height="34" viewBox="0 0 34 34">
<ellipse cx="18" cy="31.5" rx="12" ry="1.5" fill="#000" opacity=".15"/>
<g transform="rotate(-5 17 17)">
<path d="M4 6.5 L31 4 L31.5 8.5 L4.5 11Z" fill="#fff" stroke="#111" stroke-width="1.1"/>
<path d="M6 6.3 L9 6 L9.6 10.6 L6.6 10.9Z M13 5.6 L16 5.3 L16.6 9.9 L13.6 10.2Z M20 5 L23 4.7 L23.5 9.3 L20.5 9.6Z M27 4.4 L30 4.1 L30.5 8.7 L27.5 9Z" fill="#111"/>
<rect x="4.5" y="11" width="27" height="19" rx="1" fill="#fff" stroke="#111" stroke-width="1.8"/>
<path d="M5 11.5 H31 V15 H5Z" fill="#111"/><path d="M8 11.5 H12 L10.5 15 H6.5Z M15 11.5 H19 L17.5 15 H13.5Z M22 11.5 H26 L24.5 15 H20.5Z" fill="#fff"/>
<text x="6" y="27" font-family="Liberation Sans" font-weight="bold" font-size="12" fill="#e85a10">M</text>
<text x="16.3" y="26.5" font-family="Liberation Sans" font-weight="bold" font-size="11.5" fill="#2a86e8">P</text>
<text x="23.5" y="26" font-family="Liberation Sans" font-weight="bold" font-size="12" fill="#1aa01a">4</text>
</g>
</svg>
<div class="a" style="left:559px;top:80px;width:102px;height:15px;background:#c3c3c3"></div>
<div class="a" style="left:559px;top:96px;width:102px;height:11px;background:#c3c3c3"></div>
<div class="a" style="left:559px;top:108px;width:102px;height:11px;background:#c3c3c3"></div>
<div class="t" style="left:559px;top:82.7px;width:102px;text-align:center;font-size:11px;letter-spacing:-0.3px;color:#0a0a2a">DJI_0006</div>
<div class="a" style="left:674px;top:6px;width:92px;height:69px;overflow:hidden;background:#444;box-shadow:3px 3px 3px rgba(0,0,0,.35)"><svg width="92" height="69" viewBox="0 0 92 69" style="display:block;filter:blur(0.7px)"><path fill="#304824" d="M0 0h4v4h-4zM0 24h4v4h-4zM20 44h4v4h-4zM0 68h4v4h-4z"/><path fill="#546c54" d="M4 0h4v4h-4zM64 36h4v4h-4zM8 40h4v4h-4zM20 48h4v4h-4z"/><path fill="#3c4824" d="M8 0h4v4h-4zM4 4h4v4h-4zM8 32h4v4h-4zM0 44h4v4h-4zM24 44h4v4h-4zM4 48h4v4h-4z"/><path fill="#b4b49c" d="M12 0h4v4h-4zM44 68h4v4h-4z"/><path fill="#c0ccc0" d="M16 0h4v4h-4zM48 8h4v4h-4zM88 24h4v4h-4z"/><path fill="#849084" d="M20 0h4v4h-4zM24 16h4v4h-4zM64 16h4v4h-4z"/><path fill="#848478" d="M24 0h4v4h-4zM20 8h4v4h-4zM48 12h4v4h-4zM28 20h4v4h-4zM44 60h4v4h-4z"/><path fill="#909084" d="M28 0h4v4h-4z"/><path fill="#a8b4a8" d="M32 0h4v4h-4zM56 12h4v4h-4zM52 16h4v4h-4zM60 16h4v4h-4zM52 20h4v4h-4zM52 24h4v4h-4z"/><path fill="#a8a8b4" d="M36 0h4v4h-4zM64 0h4v4h-4zM92 8h4v4h-4zM56 20h4v4h-4zM84 40h4v4h-4z"/><path fill="#c0c0b4" d="M40 0h4v4h-4z"/><path fill="#9ca8a8" d="M44 0h4v4h-4zM76 12h4v4h-4z"/><path fill="#b4c0b4" d="M48 0h4v4h-4zM32 4h4v4h-4zM44 8h4v4h-4zM60 8h4v4h-4zM44 20h4v4h-4zM48 20h4v4h-4z"/><path fill="#b4b4b4" d="M52 0h4v4h-4zM40 8h4v4h-4zM40 12h4v4h-4zM76 16h4v4h-4z"/><path fill="#f0f0f0" d="M56 0h4v4h-4zM68 4h4v4h-4z"/><path fill="#c0c0c0" d="M60 0h4v4h-4zM52 12h4v4h-4z"/><path fill="#ccccd8" d="M68 0h4v4h-4zM80 8h4v4h-4zM92 12h4v4h-4z"/><path fill="#d8ccd8" d="M72 0h4v4h-4z"/><path fill="#ccd8d8" d="M76 0h4v4h-4zM60 20h4v4h-4z"/><path fill="#b4b4c0" d="M80 0h4v4h-4zM76 24h4v4h-4zM84 24h4v4h-4z"/><path fill="#c0d8d8" d="M84 0h4v4h-4z"/><path fill="#e4e4f0" d="M88 0h4v4h-4zM92 32h4v4h-4z"/><path fill="#b4c0c0" d="M92 0h4v4h-4z"/><path fill="#6c7848" d="M0 4h4v4h-4zM52 44h4v4h-4zM68 44h4v4h-4zM60 60h4v4h-4z"/><path fill="#789060" d="M8 4h4v4h-4z"/><path fill="#9ca89c" d="M12 4h4v4h-4zM64 12h4v4h-4z"/><path fill="#a8c09c" d="M16 4h4v4h-4z"/><path fill="#a8a890" d="M20 4h4v4h-4z"/><path fill="#9c9c9c" d="M24 4h4v4h-4zM44 16h4v4h-4zM64 24h4v4h-4z"/><path fill="#9c9ca8" d="M28 4h4v4h-4zM88 28h4v4h-4z"/><path fill="#908490" d="M36 4h4v4h-4z"/><path fill="#90a890" d="M40 4h4v4h-4z"/><path fill="#f0f0d8" d="M44 4h4v4h-4z"/><path fill="#a8a8a8" d="M48 4h4v4h-4zM84 20h4v4h-4zM56 24h4v4h-4zM76 28h4v4h-4z"/><path fill="#c0ccb4" d="M52 4h4v4h-4z"/><path fill="#e4e4e4" d="M56 4h4v4h-4z"/><path fill="#cccccc" d="M60 4h4v4h-4zM56 8h4v4h-4z"/><path fill="#c0d8cc" d="M64 4h4v4h-4zM92 4h4v4h-4z"/><path fill="#c0c0cc" d="M72 4h4v4h-4zM88 8h4v4h-4zM56 16h4v4h-4z"/><path fill="#fcfcfc" d="M76 4h4v4h-4z"/><path fill="#c0cccc" d="M80 4h4v4h-4zM84 4h4v4h-4zM64 8h4v4h-4zM80 12h4v4h-4z"/><path fill="#d8e4e4" d="M88 4h4v4h-4z"/><path fill="#303c30" d="M0 8h4v4h-4zM4 56h4v4h-4zM20 56h4v4h-4zM16 68h4v4h-4z"/><path fill="#546048" d="M4 8h4v4h-4zM8 24h4v4h-4zM12 40h4v4h-4zM0 56h4v4h-4zM16 56h4v4h-4zM8 60h4v4h-4zM72 68h4v4h-4z"/><path fill="#607848" d="M8 8h4v4h-4zM4 40h4v4h-4zM52 40h4v4h-4z"/><path fill="#84906c" d="M12 8h4v4h-4zM40 24h4v4h-4zM28 36h4v4h-4zM48 36h4v4h-4zM52 56h4v4h-4z"/><path fill="#9ca890" d="M16 8h4v4h-4zM36 24h4v4h-4z"/><path fill="#a8b49c" d="M24 8h4v4h-4zM32 8h4v4h-4zM24 12h4v4h-4zM32 12h4v4h-4zM40 20h4v4h-4z"/><path fill="#9c9090" d="M28 8h4v4h-4z"/><path fill="#909090" d="M36 8h4v4h-4zM76 32h4v4h-4z"/><path fill="#ccccc0" d="M52 8h4v4h-4z"/><path fill="#a8b4c0" d="M68 8h4v4h-4zM72 20h4v4h-4zM72 24h4v4h-4zM72 28h4v4h-4z"/><path fill="#d8d8e4" d="M72 8h4v4h-4zM92 20h4v4h-4z"/><path fill="#a8c0b4" d="M76 8h4v4h-4zM88 16h4v4h-4z"/><path fill="#ccd8e4" d="M84 8h4v4h-4z"/><path fill="#787860" d="M0 12h4v4h-4zM16 16h4v4h-4z"/><path fill="#546c3c" d="M4 12h4v4h-4zM56 44h4v4h-4zM68 48h4v4h-4z"/><path fill="#48543c" d="M8 12h4v4h-4zM0 36h4v4h-4zM64 60h4v4h-4zM12 68h4v4h-4zM24 68h4v4h-4z"/><path fill="#849060" d="M12 12h4v4h-4z"/><path fill="#6c846c" d="M16 12h4v4h-4z"/><path fill="#606c60" d="M20 12h4v4h-4zM20 28h4v4h-4zM72 36h4v4h-4zM76 64h4v4h-4z"/><path fill="#b4a89c" d="M28 12h4v4h-4z"/><path fill="#909c90" d="M36 12h4v4h-4zM52 28h4v4h-4zM76 44h4v4h-4z"/><path fill="#ccc0b4" d="M44 12h4v4h-4z"/><path fill="#cce4cc" d="M60 12h4v4h-4z"/><path fill="#848490" d="M68 12h4v4h-4zM80 56h4v4h-4z"/><path fill="#a8b4b4" d="M72 12h4v4h-4zM80 24h4v4h-4z"/><path fill="#b4c0cc" d="M84 12h4v4h-4zM84 16h4v4h-4z"/><path fill="#c0ccd8" d="M88 12h4v4h-4zM64 20h4v4h-4zM88 20h4v4h-4zM84 28h4v4h-4z"/><path fill="#788460" d="M0 16h4v4h-4z"/><path fill="#6c8460" d="M4 16h4v4h-4zM8 16h4v4h-4zM0 40h4v4h-4zM52 64h4v4h-4z"/><path fill="#6c7854" d="M12 16h4v4h-4zM20 16h4v4h-4zM28 32h4v4h-4zM24 36h4v4h-4zM60 36h4v4h-4zM48 40h4v4h-4zM8 44h4v4h-4zM60 56h4v4h-4z"/><path fill="#909c78" d="M28 16h4v4h-4zM24 24h4v4h-4zM28 24h4v4h-4z"/><path fill="#849078" d="M32 16h4v4h-4zM12 24h4v4h-4zM44 24h4v4h-4zM36 28h4v4h-4zM60 32h4v4h-4z"/><path fill="#b4c09c" d="M36 16h4v4h-4z"/><path fill="#b4c0a8" d="M40 16h4v4h-4z"/><path fill="#b4b4a8" d="M48 16h4v4h-4z"/><path fill="#9ca8b4" d="M68 16h4v4h-4zM72 16h4v4h-4zM88 40h4v4h-4zM92 44h4v4h-4z"/><path fill="#b4ccc0" d="M80 16h4v4h-4z"/><path fill="#90909c" d="M92 16h4v4h-4zM80 20h4v4h-4zM68 28h4v4h-4zM88 60h4v4h-4z"/><path fill="#3c543c" d="M0 20h4v4h-4zM12 56h4v4h-4z"/><path fill="#000000" d="M4 20h4v4h-4z"/><path fill="#485430" d="M8 20h4v4h-4zM24 40h4v4h-4zM56 56h4v4h-4zM64 64h4v4h-4zM68 68h4v4h-4z"/><path fill="#848460" d="M12 20h4v4h-4zM32 32h4v4h-4zM40 40h4v4h-4zM48 48h4v4h-4zM48 64h4v4h-4z"/><path fill="#789078" d="M16 20h4v4h-4zM48 24h4v4h-4zM72 64h4v4h-4z"/><path fill="#786c60" d="M20 20h4v4h-4z"/><path fill="#847860" d="M24 20h4v4h-4z"/><path fill="#849c84" d="M32 20h4v4h-4z"/><path fill="#606c54" d="M36 20h4v4h-4zM72 56h4v4h-4z"/><path fill="#cccce4" d="M68 20h4v4h-4z"/><path fill="#9cb4b4" d="M76 20h4v4h-4z"/><path fill="#606c48" d="M4 24h4v4h-4zM16 32h4v4h-4zM48 32h4v4h-4zM56 64h4v4h-4zM64 68h4v4h-4z"/><path fill="#484830" d="M16 24h4v4h-4zM8 28h4v4h-4zM12 32h4v4h-4z"/><path fill="#6c6c54" d="M20 24h4v4h-4zM44 52h4v4h-4zM44 56h4v4h-4z"/><path fill="#84846c" d="M32 24h4v4h-4zM24 48h4v4h-4zM32 60h4v4h-4z"/><path fill="#e4f0e4" d="M60 24h4v4h-4z"/><path fill="#f0fcfc" d="M68 24h4v4h-4z"/><path fill="#a8c0cc" d="M92 24h4v4h-4z"/><path fill="#243018" d="M0 28h4v4h-4zM12 64h4v4h-4zM20 64h4v4h-4z"/><path fill="#48603c" d="M4 28h4v4h-4zM16 40h4v4h-4zM20 40h4v4h-4zM64 40h4v4h-4z"/><path fill="#54543c" d="M12 28h4v4h-4zM28 64h4v4h-4zM28 68h4v4h-4z"/><path fill="#6c7860" d="M16 28h4v4h-4zM24 32h4v4h-4zM52 32h4v4h-4zM72 48h4v4h-4z"/><path fill="#60603c" d="M24 28h4v4h-4zM28 48h4v4h-4z"/><path fill="#787854" d="M28 28h4v4h-4zM32 36h4v4h-4zM32 40h4v4h-4zM72 44h4v4h-4z"/><path fill="#9c9c84" d="M32 28h4v4h-4zM44 36h4v4h-4z"/><path fill="#b4cca8" d="M40 28h4v4h-4z"/><path fill="#9ca884" d="M44 28h4v4h-4zM36 32h4v4h-4z"/><path fill="#ccd8b4" d="M48 28h4v4h-4z"/><path fill="#ccd8cc" d="M56 28h4v4h-4z"/><path fill="#9c9c90" d="M60 28h4v4h-4zM28 56h4v4h-4zM36 68h4v4h-4z"/><path fill="#909c9c" d="M64 28h4v4h-4zM88 32h4v4h-4zM92 40h4v4h-4z"/><path fill="#c0c0d8" d="M80 28h4v4h-4z"/><path fill="#8484a8" d="M92 28h4v4h-4z"/><path fill="#303c24" d="M0 32h4v4h-4zM0 52h4v4h-4z"/><path fill="#243c24" d="M4 32h4v4h-4z"/><path fill="#3c5424" d="M20 32h4v4h-4z"/><path fill="#78846c" d="M40 32h4v4h-4zM24 64h4v4h-4z"/><path fill="#909078" d="M44 32h4v4h-4zM40 52h4v4h-4zM32 68h4v4h-4z"/><path fill="#546c48" d="M56 32h4v4h-4zM60 44h4v4h-4zM64 44h4v4h-4z"/><path fill="#6c6c6c" d="M64 32h4v4h-4z"/><path fill="#78786c" d="M68 32h4v4h-4z"/><path fill="#849c90" d="M72 32h4v4h-4z"/><path fill="#84909c" d="M80 32h4v4h-4zM92 36h4v4h-4zM84 48h4v4h-4z"/><path fill="#a8b4cc" d="M84 32h4v4h-4z"/><path fill="#486030" d="M4 36h4v4h-4zM68 40h4v4h-4zM56 60h4v4h-4z"/><path fill="#24300c" d="M8 36h4v4h-4zM12 36h4v4h-4z"/><path fill="#3c5430" d="M16 36h4v4h-4zM4 52h4v4h-4z"/><path fill="#3c4818" d="M20 36h4v4h-4z"/><path fill="#90906c" d="M36 36h4v4h-4zM32 44h4v4h-4zM44 48h4v4h-4zM40 64h4v4h-4z"/><path fill="#90846c" d="M40 36h4v4h-4zM36 60h4v4h-4z"/><path fill="#788454" d="M52 36h4v4h-4zM28 44h4v4h-4zM60 48h4v4h-4zM60 52h4v4h-4zM64 56h4v4h-4z"/><path fill="#789c60" d="M56 36h4v4h-4z"/><path fill="#486048" d="M68 36h4v4h-4z"/><path fill="#6c7878" d="M76 36h4v4h-4zM80 52h4v4h-4z"/><path fill="#849090" d="M80 36h4v4h-4zM84 56h4v4h-4z"/><path fill="#9cb4c0" d="M84 36h4v4h-4z"/><path fill="#848484" d="M88 36h4v4h-4z"/><path fill="#6c6c60" d="M28 40h4v4h-4zM32 48h4v4h-4z"/><path fill="#9c9c78" d="M36 40h4v4h-4z"/><path fill="#90a884" d="M44 40h4v4h-4z"/><path fill="#60783c" d="M56 40h4v4h-4z"/><path fill="#789c54" d="M60 40h4v4h-4z"/><path fill="#6c786c" d="M72 40h4v4h-4z"/><path fill="#485448" d="M76 40h4v4h-4zM8 48h4v4h-4z"/><path fill="#546c6c" d="M80 40h4v4h-4z"/><path fill="#243c0c" d="M4 44h4v4h-4z"/><path fill="#303c18" d="M12 44h4v4h-4z"/><path fill="#54603c" d="M16 44h4v4h-4zM48 60h4v4h-4zM68 60h4v4h-4z"/><path fill="#a89c84" d="M36 44h4v4h-4zM40 44h4v4h-4z"/><path fill="#909c84" d="M44 44h4v4h-4zM28 52h4v4h-4zM44 64h4v4h-4z"/><path fill="#6c8454" d="M48 44h4v4h-4zM48 56h4v4h-4z"/><path fill="#485460" d="M80 44h4v4h-4z"/><path fill="#788490" d="M84 44h4v4h-4zM88 48h4v4h-4zM92 56h4v4h-4z"/><path fill="#60606c" d="M88 44h4v4h-4zM92 48h4v4h-4z"/><path fill="#18300c" d="M0 48h4v4h-4z"/><path fill="#304830" d="M12 48h4v4h-4zM12 60h4v4h-4z"/><path fill="#849c78" d="M16 48h4v4h-4z"/><path fill="#a89c90" d="M36 48h4v4h-4z"/><path fill="#b4a890" d="M40 48h4v4h-4zM32 52h4v4h-4z"/><path fill="#789054" d="M52 48h4v4h-4z"/><path fill="#6c8448" d="M56 48h4v4h-4z"/><path fill="#909c6c" d="M64 48h4v4h-4zM48 52h4v4h-4z"/><path fill="#788478" d="M76 48h4v4h-4z"/><path fill="#787884" d="M80 48h4v4h-4zM80 64h4v4h-4zM88 64h4v4h-4zM88 68h4v4h-4z"/><path fill="#303024" d="M8 52h4v4h-4z"/><path fill="#3c3c24" d="M12 52h4v4h-4z"/><path fill="#3c3c30" d="M16 52h4v4h-4z"/><path fill="#546054" d="M20 52h4v4h-4zM76 52h4v4h-4z"/><path fill="#24240c" d="M24 52h4v4h-4z"/><path fill="#a89084" d="M36 52h4v4h-4z"/><path fill="#546030" d="M52 52h4v4h-4z"/><path fill="#606c3c" d="M56 52h4v4h-4z"/><path fill="#90a878" d="M64 52h4v4h-4z"/><path fill="#3c5418" d="M68 52h4v4h-4z"/><path fill="#78906c" d="M72 52h4v4h-4z"/><path fill="#789090" d="M84 52h4v4h-4z"/><path fill="#6c7884" d="M88 52h4v4h-4zM84 60h4v4h-4zM84 68h4v4h-4z"/><path fill="#84849c" d="M92 52h4v4h-4zM92 64h4v4h-4z"/><path fill="#182400" d="M8 56h4v4h-4z"/><path fill="#3c4830" d="M24 56h4v4h-4zM4 60h4v4h-4zM52 60h4v4h-4zM0 64h4v4h-4zM16 64h4v4h-4zM48 68h4v4h-4z"/><path fill="#6c6048" d="M32 56h4v4h-4zM32 64h4v4h-4z"/><path fill="#9c9078" d="M36 56h4v4h-4z"/><path fill="#b4b484" d="M40 56h4v4h-4z"/><path fill="#6c6c48" d="M68 56h4v4h-4z"/><path fill="#3c4848" d="M76 56h4v4h-4z"/><path fill="#9c9cb4" d="M88 56h4v4h-4z"/><path fill="#0c180c" d="M0 60h4v4h-4z"/><path fill="#607860" d="M16 60h4v4h-4zM72 60h4v4h-4z"/><path fill="#18240c" d="M20 60h4v4h-4zM20 68h4v4h-4z"/><path fill="#606054" d="M24 60h4v4h-4z"/><path fill="#605448" d="M28 60h4v4h-4z"/><path fill="#ccc09c" d="M40 60h4v4h-4z"/><path fill="#606060" d="M76 60h4v4h-4z"/><path fill="#788484" d="M80 60h4v4h-4z"/><path fill="#6c6c84" d="M92 60h4v4h-4z"/><path fill="#243c18" d="M4 64h4v4h-4z"/><path fill="#0c1800" d="M8 64h4v4h-4z"/><path fill="#60483c" d="M36 64h4v4h-4z"/><path fill="#486024" d="M60 64h4v4h-4z"/><path fill="#849c6c" d="M68 64h4v4h-4z"/><path fill="#606c6c" d="M84 64h4v4h-4z"/><path fill="#244824" d="M4 68h4v4h-4z"/><path fill="#3c483c" d="M8 68h4v4h-4z"/><path fill="#ccc0a8" d="M40 68h4v4h-4z"/><path fill="#cccca8" d="M52 68h4v4h-4z"/><path fill="#607854" d="M56 68h4v4h-4z"/><path fill="#304818" d="M60 68h4v4h-4z"/><path fill="#545454" d="M76 68h4v4h-4z"/><path fill="#485454" d="M80 68h4v4h-4z"/><path fill="#303c3c" d="M92 68h4v4h-4z"/></svg></div>
<div class="a" style="left:702px;top:66px;width:11px;height:11px;background:#6a6a9a;border:1px solid #fff;overflow:hidden"><div class="a" style="left:3px;top:5px;width:5px;height:3px;background:#fff"></div></div>
<div class="a" style="left:715px;top:66px;width:15px;height:11px;background:#6a6a9a;border:1px solid #fff;overflow:hidden"><div class="t" style="left:0;top:1.5px;width:13px;text-align:center;font-family:Liberation Mono;font-size:7.5px;font-weight:bold;color:#fff;letter-spacing:-0.6px">XMP</div></div>
<div class="a" style="left:732px;top:66px;width:19px;height:11px;background:#6a6a9a;border:1px solid #fff;overflow:hidden"><div class="t" style="left:0;top:1.5px;width:17px;text-align:center;font-family:Liberation Mono;font-size:7.5px;font-weight:bold;color:#fff;letter-spacing:-0.6px">EXIF</div></div>
<div class="a" style="left:753px;top:66px;width:17px;height:11px;background:#6a6a9a;border:1px solid #fff;overflow:hidden"><div class="t" style="left:0;top:1.5px;width:15px;text-align:center;font-family:Liberation Mono;font-size:7.5px;font-weight:bold;color:#fff;letter-spacing:-0.6px">GPS</div></div>
<div class="a" style="left:669px;top:80px;width:102px;height:15px;background:#ece9c8"></div>
<div class="a" style="left:669px;top:96px;width:102px;height:11px;background:#ece9c8"></div>
<div class="a" style="left:669px;top:108px;width:102px;height:11px;background:#ece9c8"></div>
<div class="t" style="left:669px;top:82.7px;width:102px;text-align:center;font-size:11px;letter-spacing:-0.3px;color:#0a0a2a">DJI_0007</div>
<div class="t" style="left:669px;top:97px;width:102px;text-align:center;font-size:10px;letter-spacing:-0.25px;color:#0a0a2a">JPEG TrueColor (v1.1)</div>
<div class="t" style="left:669px;top:109px;width:102px;text-align:center;font-size:9.5px;letter-spacing:-0.2px;color:#0a0a2a">4000x3000x24</div>
<div class="a" style="left:784px;top:6px;width:92px;height:69px;overflow:hidden;background:#444;box-shadow:3px 3px 3px rgba(0,0,0,.35)"><svg width="92" height="69" viewBox="0 0 92 69" style="display:block;filter:blur(0.7px)"><path fill="#6c6c54" d="M0 0h4v4h-4zM16 16h4v4h-4z"/><path fill="#607854" d="M4 0h4v4h-4zM0 4h4v4h-4zM12 4h4v4h-4zM24 28h4v4h-4zM0 52h4v4h-4z"/><path fill="#84906c" d="M8 0h4v4h-4zM16 24h4v4h-4z"/><path fill="#849078" d="M12 0h4v4h-4zM12 8h4v4h-4zM16 12h4v4h-4zM36 16h4v4h-4zM44 24h4v4h-4zM48 32h4v4h-4zM52 32h4v4h-4zM72 44h4v4h-4z"/><path fill="#78906c" d="M16 0h4v4h-4zM24 36h4v4h-4zM64 36h4v4h-4zM16 40h4v4h-4zM56 64h4v4h-4z"/><path fill="#6c7854" d="M20 0h4v4h-4zM8 8h4v4h-4zM36 36h4v4h-4zM28 40h4v4h-4zM68 40h4v4h-4zM72 40h4v4h-4zM64 56h4v4h-4z"/><path fill="#6c8460" d="M24 0h4v4h-4z"/><path fill="#b4b4a8" d="M28 0h4v4h-4zM40 0h4v4h-4zM52 24h4v4h-4z"/><path fill="#849084" d="M32 0h4v4h-4zM48 16h4v4h-4zM36 20h4v4h-4zM56 28h4v4h-4zM60 32h4v4h-4zM76 40h4v4h-4z"/><path fill="#e4e4e4" d="M36 0h4v4h-4z"/><path fill="#cccccc" d="M44 0h4v4h-4zM68 12h4v4h-4z"/><path fill="#a89c9c" d="M48 0h4v4h-4z"/><path fill="#c0ccc0" d="M52 0h4v4h-4zM64 0h4v4h-4zM56 8h4v4h-4zM52 20h4v4h-4z"/><path fill="#e4f0fc" d="M56 0h4v4h-4zM88 24h4v4h-4z"/><path fill="#d8d8d8" d="M60 0h4v4h-4z"/><path fill="#d8d8e4" d="M68 0h4v4h-4z"/><path fill="#ccccd8" d="M72 0h4v4h-4z"/><path fill="#a8c0c0" d="M76 0h4v4h-4zM84 0h4v4h-4z"/><path fill="#b4c0cc" d="M80 0h4v4h-4zM84 4h4v4h-4zM80 12h4v4h-4zM76 16h4v4h-4zM80 32h4v4h-4z"/><path fill="#f0fcfc" d="M88 0h4v4h-4zM80 4h4v4h-4z"/><path fill="#ccd8e4" d="M92 0h4v4h-4zM76 24h4v4h-4z"/><path fill="#606c54" d="M4 4h4v4h-4zM16 28h4v4h-4zM72 48h4v4h-4zM16 64h4v4h-4z"/><path fill="#849060" d="M8 4h4v4h-4z"/><path fill="#6c6c60" d="M16 4h4v4h-4zM28 52h4v4h-4zM28 60h4v4h-4z"/><path fill="#848478" d="M20 4h4v4h-4zM24 4h4v4h-4zM32 12h4v4h-4zM40 20h4v4h-4zM44 20h4v4h-4zM76 48h4v4h-4z"/><path fill="#a8a8a8" d="M28 4h4v4h-4zM76 8h4v4h-4zM56 16h4v4h-4zM28 24h4v4h-4z"/><path fill="#ccccb4" d="M32 4h4v4h-4zM36 64h4v4h-4z"/><path fill="#9c9ca8" d="M36 4h4v4h-4zM60 4h4v4h-4zM92 16h4v4h-4zM80 24h4v4h-4zM92 24h4v4h-4zM76 28h4v4h-4zM88 28h4v4h-4zM92 32h4v4h-4z"/><path fill="#849c90" d="M40 4h4v4h-4z"/><path fill="#9c909c" d="M44 4h4v4h-4z"/><path fill="#e4d8d8" d="M48 4h4v4h-4z"/><path fill="#9c9c9c" d="M52 4h4v4h-4zM36 12h4v4h-4zM60 28h4v4h-4z"/><path fill="#b4ccc0" d="M56 4h4v4h-4zM60 24h4v4h-4z"/><path fill="#b4b4b4" d="M64 4h4v4h-4zM64 16h4v4h-4zM84 24h4v4h-4z"/><path fill="#e4f0e4" d="M68 4h4v4h-4z"/><path fill="#b4a8b4" d="M72 4h4v4h-4z"/><path fill="#ccd8d8" d="M76 4h4v4h-4z"/><path fill="#c0cccc" d="M88 4h4v4h-4zM88 8h4v4h-4zM56 24h4v4h-4zM84 40h4v4h-4z"/><path fill="#8490a8" d="M92 4h4v4h-4zM80 52h4v4h-4zM80 64h4v4h-4z"/><path fill="#48603c" d="M0 8h4v4h-4z"/><path fill="#6c7860" d="M4 8h4v4h-4zM28 16h4v4h-4zM12 20h4v4h-4zM40 24h4v4h-4zM16 32h4v4h-4zM12 48h4v4h-4zM72 68h4v4h-4z"/><path fill="#78786c" d="M16 8h4v4h-4zM20 8h4v4h-4zM20 24h4v4h-4zM32 56h4v4h-4z"/><path fill="#a8b490" d="M24 8h4v4h-4zM40 32h4v4h-4z"/><path fill="#78846c" d="M28 8h4v4h-4zM20 16h4v4h-4zM48 28h4v4h-4zM24 32h4v4h-4zM28 32h4v4h-4z"/><path fill="#909090" d="M32 8h4v4h-4zM72 32h4v4h-4z"/><path fill="#a8b4a8" d="M36 8h4v4h-4z"/><path fill="#b4c0b4" d="M40 8h4v4h-4zM52 8h4v4h-4zM52 12h4v4h-4z"/><path fill="#c0c0b4" d="M44 8h4v4h-4z"/><path fill="#848490" d="M48 8h4v4h-4z"/><path fill="#a8a8c0" d="M60 8h4v4h-4zM84 44h4v4h-4z"/><path fill="#d8e4f0" d="M64 8h4v4h-4z"/><path fill="#c0ccd8" d="M68 8h4v4h-4zM84 8h4v4h-4zM80 16h4v4h-4z"/><path fill="#a8b4b4" d="M72 8h4v4h-4zM64 12h4v4h-4zM88 16h4v4h-4zM68 20h4v4h-4zM68 28h4v4h-4z"/><path fill="#a8a8b4" d="M80 8h4v4h-4zM84 16h4v4h-4z"/><path fill="#f0f0fc" d="M92 8h4v4h-4z"/><path fill="#54603c" d="M0 12h4v4h-4zM24 24h4v4h-4zM0 36h4v4h-4zM20 36h4v4h-4zM24 44h4v4h-4zM68 44h4v4h-4zM56 52h4v4h-4zM60 68h4v4h-4z"/><path fill="#607848" d="M4 12h4v4h-4zM52 40h4v4h-4zM48 44h4v4h-4zM60 44h4v4h-4z"/><path fill="#48543c" d="M8 12h4v4h-4zM4 44h4v4h-4zM8 56h4v4h-4z"/><path fill="#787860" d="M12 12h4v4h-4zM36 28h4v4h-4zM68 36h4v4h-4zM24 60h4v4h-4zM28 64h4v4h-4z"/><path fill="#909c84" d="M20 12h4v4h-4zM24 20h4v4h-4zM52 28h4v4h-4zM40 36h4v4h-4z"/><path fill="#a8a89c" d="M24 12h4v4h-4zM24 16h4v4h-4z"/><path fill="#848484" d="M28 12h4v4h-4zM80 36h4v4h-4z"/><path fill="#9ca8a8" d="M40 12h4v4h-4zM72 20h4v4h-4zM84 36h4v4h-4z"/><path fill="#ccccc0" d="M44 12h4v4h-4z"/><path fill="#909c90" d="M48 12h4v4h-4zM64 28h4v4h-4z"/><path fill="#c0c0c0" d="M56 12h4v4h-4z"/><path fill="#b4ccb4" d="M60 12h4v4h-4z"/><path fill="#b4b4c0" d="M72 12h4v4h-4zM60 20h4v4h-4zM92 20h4v4h-4z"/><path fill="#b4c0d8" d="M76 12h4v4h-4z"/><path fill="#b4b4cc" d="M84 12h4v4h-4z"/><path fill="#a89ca8" d="M88 12h4v4h-4zM92 40h4v4h-4z"/><path fill="#e4e4f0" d="M92 12h4v4h-4z"/><path fill="#546048" d="M0 16h4v4h-4zM8 48h4v4h-4zM4 56h4v4h-4zM24 56h4v4h-4zM60 60h4v4h-4z"/><path fill="#485430" d="M4 16h4v4h-4zM12 44h4v4h-4zM20 44h4v4h-4zM68 48h4v4h-4zM4 52h4v4h-4z"/><path fill="#546c54" d="M8 16h4v4h-4zM12 40h4v4h-4z"/><path fill="#303c24" d="M12 16h4v4h-4zM0 24h4v4h-4zM8 32h4v4h-4zM4 36h4v4h-4zM0 40h4v4h-4zM4 68h4v4h-4z"/><path fill="#9cb490" d="M32 16h4v4h-4z"/><path fill="#9c9c90" d="M40 16h4v4h-4z"/><path fill="#9cb49c" d="M44 16h4v4h-4z"/><path fill="#d8e4d8" d="M52 16h4v4h-4z"/><path fill="#b4c0c0" d="M60 16h4v4h-4zM64 24h4v4h-4z"/><path fill="#ccc0cc" d="M68 16h4v4h-4z"/><path fill="#e4f0f0" d="M72 16h4v4h-4z"/><path fill="#18300c" d="M0 20h4v4h-4z"/><path fill="#304824" d="M4 20h4v4h-4zM20 52h4v4h-4zM12 56h4v4h-4zM68 68h4v4h-4z"/><path fill="#3c5430" d="M8 20h4v4h-4zM12 36h4v4h-4z"/><path fill="#607860" d="M16 20h4v4h-4zM64 32h4v4h-4z"/><path fill="#54543c" d="M20 20h4v4h-4zM44 60h4v4h-4z"/><path fill="#9c9c84" d="M28 20h4v4h-4zM44 44h4v4h-4zM36 68h4v4h-4z"/><path fill="#9ca890" d="M32 20h4v4h-4z"/><path fill="#9ca89c" d="M48 20h4v4h-4z"/><path fill="#9ca8b4" d="M56 20h4v4h-4zM84 20h4v4h-4z"/><path fill="#b4cccc" d="M64 20h4v4h-4z"/><path fill="#a8b4c0" d="M76 20h4v4h-4z"/><path fill="#90a8a8" d="M80 20h4v4h-4z"/><path fill="#84849c" d="M88 20h4v4h-4zM84 64h4v4h-4z"/><path fill="#304830" d="M4 24h4v4h-4zM0 56h4v4h-4z"/><path fill="#182418" d="M8 24h4v4h-4z"/><path fill="#3c4830" d="M12 24h4v4h-4zM0 28h4v4h-4zM8 28h4v4h-4zM4 32h4v4h-4zM20 32h4v4h-4zM16 52h4v4h-4zM8 68h4v4h-4z"/><path fill="#849c84" d="M32 24h4v4h-4z"/><path fill="#849c6c" d="M36 24h4v4h-4zM48 40h4v4h-4z"/><path fill="#787878" d="M48 24h4v4h-4z"/><path fill="#d8d8cc" d="M68 24h4v4h-4z"/><path fill="#9cb4c0" d="M72 24h4v4h-4z"/><path fill="#6c846c" d="M4 28h4v4h-4zM72 52h4v4h-4zM8 60h4v4h-4z"/><path fill="#486048" d="M12 28h4v4h-4zM72 56h4v4h-4z"/><path fill="#b4b49c" d="M20 28h4v4h-4z"/><path fill="#9ca884" d="M28 28h4v4h-4zM44 28h4v4h-4zM36 32h4v4h-4zM44 32h4v4h-4zM32 36h4v4h-4z"/><path fill="#849c78" d="M32 28h4v4h-4zM56 32h4v4h-4zM28 48h4v4h-4z"/><path fill="#a8c09c" d="M40 28h4v4h-4z"/><path fill="#84909c" d="M72 28h4v4h-4zM84 32h4v4h-4zM88 36h4v4h-4z"/><path fill="#849ca8" d="M80 28h4v4h-4z"/><path fill="#9cb4b4" d="M84 28h4v4h-4z"/><path fill="#90909c" d="M92 28h4v4h-4zM80 40h4v4h-4z"/><path fill="#486030" d="M0 32h4v4h-4zM0 44h4v4h-4zM68 52h4v4h-4zM64 64h4v4h-4zM64 68h4v4h-4z"/><path fill="#0c1800" d="M12 32h4v4h-4z"/><path fill="#787854" d="M32 32h4v4h-4zM48 36h4v4h-4zM52 56h4v4h-4z"/><path fill="#788460" d="M68 32h4v4h-4zM44 36h4v4h-4zM44 52h4v4h-4zM52 52h4v4h-4zM48 60h4v4h-4zM52 60h4v4h-4zM68 64h4v4h-4z"/><path fill="#849090" d="M76 32h4v4h-4zM92 44h4v4h-4zM80 68h4v4h-4z"/><path fill="#909c9c" d="M88 32h4v4h-4z"/><path fill="#606054" d="M8 36h4v4h-4zM24 48h4v4h-4zM24 52h4v4h-4zM24 64h4v4h-4z"/><path fill="#606c48" d="M16 36h4v4h-4zM16 44h4v4h-4zM60 52h4v4h-4zM56 68h4v4h-4z"/><path fill="#9c9084" d="M28 36h4v4h-4z"/><path fill="#909c78" d="M52 36h4v4h-4z"/><path fill="#608454" d="M56 36h4v4h-4z"/><path fill="#546054" d="M60 36h4v4h-4z"/><path fill="#90a890" d="M72 36h4v4h-4z"/><path fill="#606c6c" d="M76 36h4v4h-4z"/><path fill="#787884" d="M92 36h4v4h-4z"/><path fill="#3c4824" d="M4 40h4v4h-4zM16 56h4v4h-4zM24 68h4v4h-4z"/><path fill="#243c18" d="M8 40h4v4h-4z"/><path fill="#182400" d="M20 40h4v4h-4zM4 64h4v4h-4z"/><path fill="#847860" d="M24 40h4v4h-4z"/><path fill="#84786c" d="M32 40h4v4h-4z"/><path fill="#ccc0a8" d="M36 40h4v4h-4zM44 56h4v4h-4z"/><path fill="#ccd8b4" d="M40 40h4v4h-4z"/><path fill="#b4c090" d="M44 40h4v4h-4z"/><path fill="#789060" d="M56 40h4v4h-4zM60 40h4v4h-4z"/><path fill="#546c3c" d="M64 40h4v4h-4zM56 48h4v4h-4z"/><path fill="#847890" d="M88 40h4v4h-4z"/><path fill="#3c483c" d="M8 44h4v4h-4zM20 48h4v4h-4zM12 60h4v4h-4zM72 60h4v4h-4zM20 64h4v4h-4zM12 68h4v4h-4z"/><path fill="#909078" d="M28 44h4v4h-4z"/><path fill="#909084" d="M32 44h4v4h-4z"/><path fill="#b4a890" d="M36 44h4v4h-4z"/><path fill="#c0c09c" d="M40 44h4v4h-4z"/><path fill="#606c3c" d="M52 44h4v4h-4z"/><path fill="#6c7848" d="M56 44h4v4h-4zM60 48h4v4h-4zM56 60h4v4h-4z"/><path fill="#789054" d="M64 44h4v4h-4z"/><path fill="#789084" d="M76 44h4v4h-4z"/><path fill="#788484" d="M80 44h4v4h-4z"/><path fill="#9090a8" d="M88 44h4v4h-4z"/><path fill="#0c240c" d="M0 48h4v4h-4z"/><path fill="#3c543c" d="M4 48h4v4h-4zM20 68h4v4h-4z"/><path fill="#303c18" d="M16 48h4v4h-4z"/><path fill="#606048" d="M32 48h4v4h-4z"/><path fill="#90906c" d="M36 48h4v4h-4zM44 48h4v4h-4zM32 64h4v4h-4z"/><path fill="#a8a884" d="M40 48h4v4h-4z"/><path fill="#90a86c" d="M48 48h4v4h-4z"/><path fill="#788454" d="M52 48h4v4h-4z"/><path fill="#3c4818" d="M64 48h4v4h-4z"/><path fill="#54606c" d="M80 48h4v4h-4zM88 64h4v4h-4z"/><path fill="#606c78" d="M84 48h4v4h-4zM80 60h4v4h-4zM92 60h4v4h-4z"/><path fill="#6c7878" d="M88 48h4v4h-4z"/><path fill="#6c7890" d="M92 48h4v4h-4zM84 52h4v4h-4zM88 52h4v4h-4z"/><path fill="#3c603c" d="M8 52h4v4h-4z"/><path fill="#484830" d="M12 52h4v4h-4zM28 68h4v4h-4z"/><path fill="#84846c" d="M32 52h4v4h-4zM28 56h4v4h-4zM44 68h4v4h-4z"/><path fill="#c0b49c" d="M36 52h4v4h-4zM32 60h4v4h-4z"/><path fill="#f0d8cc" d="M40 52h4v4h-4z"/><path fill="#6c8454" d="M48 52h4v4h-4z"/><path fill="#54783c" d="M64 52h4v4h-4z"/><path fill="#485448" d="M76 52h4v4h-4z"/><path fill="#606084" d="M92 52h4v4h-4z"/><path fill="#243024" d="M20 56h4v4h-4z"/><path fill="#54483c" d="M36 56h4v4h-4z"/><path fill="#9c9078" d="M40 56h4v4h-4zM52 68h4v4h-4z"/><path fill="#b4c09c" d="M48 56h4v4h-4z"/><path fill="#546c48" d="M56 56h4v4h-4z"/><path fill="#484824" d="M60 56h4v4h-4z"/><path fill="#545430" d="M68 56h4v4h-4z"/><path fill="#546c60" d="M76 56h4v4h-4z"/><path fill="#909ca8" d="M80 56h4v4h-4z"/><path fill="#6c8484" d="M84 56h4v4h-4z"/><path fill="#788490" d="M88 56h4v4h-4zM88 60h4v4h-4z"/><path fill="#90a8b4" d="M92 56h4v4h-4z"/><path fill="#244824" d="M0 60h4v4h-4z"/><path fill="#60786c" d="M4 60h4v4h-4z"/><path fill="#243030" d="M16 60h4v4h-4z"/><path fill="#303c30" d="M20 60h4v4h-4z"/><path fill="#e4e4c0" d="M36 60h4v4h-4z"/><path fill="#9c9c78" d="M40 60h4v4h-4zM44 64h4v4h-4z"/><path fill="#6c603c" d="M64 60h4v4h-4z"/><path fill="#485424" d="M68 60h4v4h-4z"/><path fill="#6c786c" d="M76 60h4v4h-4zM76 64h4v4h-4z"/><path fill="#606078" d="M84 60h4v4h-4zM88 68h4v4h-4z"/><path fill="#48483c" d="M0 64h4v4h-4z"/><path fill="#24300c" d="M8 64h4v4h-4zM16 68h4v4h-4z"/><path fill="#243018" d="M12 64h4v4h-4z"/><path fill="#a89c84" d="M40 64h4v4h-4z"/><path fill="#6c6048" d="M48 64h4v4h-4zM48 68h4v4h-4z"/><path fill="#6c6c48" d="M52 64h4v4h-4z"/><path fill="#546030" d="M60 64h4v4h-4z"/><path fill="#606c60" d="M72 64h4v4h-4z"/><path fill="#6c7884" d="M92 64h4v4h-4z"/><path fill="#242424" d="M0 68h4v4h-4z"/><path fill="#b4a89c" d="M32 68h4v4h-4zM40 68h4v4h-4z"/><path fill="#545454" d="M76 68h4v4h-4z"/><path fill="#6c8490" d="M84 68h4v4h-4z"/><path fill="#48606c" d="M92 68h4v4h-4z"/></svg></div>
<div class="a" style="left:812px;top:66px;width:11px;height:11px;background:#6a6a9a;border:1px solid #fff;overflow:hidden"><div class="a" style="left:3px;top:5px;width:5px;height:3px;background:#fff"></div></div>
<div class="a" style="left:825px;top:66px;width:15px;height:11px;background:#6a6a9a;border:1px solid #fff;overflow:hidden"><div class="t" style="left:0;top:1.5px;width:13px;text-align:center;font-family:Liberation Mono;font-size:7.5px;font-weight:bold;color:#fff;letter-spacing:-0.6px">XMP</div></div>
<div class="a" style="left:842px;top:66px;width:19px;height:11px;background:#6a6a9a;border:1px solid #fff;overflow:hidden"><div class="t" style="left:0;top:1.5px;width:17px;text-align:center;font-family:Liberation Mono;font-size:7.5px;font-weight:bold;color:#fff;letter-spacing:-0.6px">EXIF</div></div>
<div class="a" style="left:863px;top:66px;width:17px;height:11px;background:#6a6a9a;border:1px solid #fff;overflow:hidden"><div class="t" style="left:0;top:1.5px;width:15px;text-align:center;font-family:Liberation Mono;font-size:7.5px;font-weight:bold;color:#fff;letter-spacing:-0.6px">GPS</div></div>
<div class="a" style="left:779px;top:80px;width:102px;height:15px;background:#ece9c8"></div>
<div class="a" style="left:779px;top:96px;width:102px;height:11px;background:#ece9c8"></div>
<div class="a" style="left:779px;top:108px;width:102px;height:11px;background:#ece9c8"></div>
<div class="t" style="left:779px;top:82.7px;width:102px;text-align:center;font-size:11px;letter-spacing:-0.3px;color:#0a0a2a">DJI_0008</div>
<div class="t" style="left:779px;top:97px;width:102px;text-align:center;font-size:10px;letter-spacing:-0.25px;color:#0a0a2a">JPEG TrueColor (v1.1)</div>
<div class="t" style="left:779px;top:109px;width:102px;text-align:center;font-size:9.5px;letter-spacing:-0.2px;color:#0a0a2a">4000x3000x24</div>
<div class="a" style="left:894px;top:6px;width:92px;height:69px;overflow:hidden;background:#444;box-shadow:3px 3px 3px rgba(0,0,0,.35)"><svg width="92" height="69" viewBox="0 0 92 69" style="display:block;filter:blur(0.7px)"><path fill="#d8e4f0" d="M0 0h4v4h-4zM4 0h4v4h-4zM20 0h4v4h-4zM76 0h4v4h-4zM84 0h4v4h-4zM92 0h4v4h-4z"/><path fill="#a8b4c0" d="M8 0h4v4h-4zM36 4h4v4h-4z"/><path fill="#d8e4d8" d="M12 0h4v4h-4zM8 8h4v4h-4z"/><path fill="#e4fcfc" d="M16 0h4v4h-4zM0 4h4v4h-4zM68 4h4v4h-4z"/><path fill="#b4ccd8" d="M24 0h4v4h-4zM28 0h4v4h-4z"/><path fill="#e4e4f0" d="M32 0h4v4h-4zM48 0h4v4h-4zM68 0h4v4h-4z"/><path fill="#c0d8d8" d="M36 0h4v4h-4zM72 4h4v4h-4zM92 4h4v4h-4z"/><path fill="#a8a8b4" d="M40 0h4v4h-4zM24 4h4v4h-4zM88 4h4v4h-4z"/><path fill="#c0d8e4" d="M44 0h4v4h-4z"/><path fill="#c0c0d8" d="M52 0h4v4h-4z"/><path fill="#fcfcfc" d="M56 0h4v4h-4zM88 0h4v4h-4zM8 4h4v4h-4z"/><path fill="#a8c0d8" d="M60 0h4v4h-4z"/><path fill="#f0fcfc" d="M64 0h4v4h-4z"/><path fill="#ccd8e4" d="M72 0h4v4h-4z"/><path fill="#b4b4c0" d="M80 0h4v4h-4z"/><path fill="#d8e4e4" d="M4 4h4v4h-4zM56 4h4v4h-4zM52 8h4v4h-4z"/><path fill="#b4c0c0" d="M12 4h4v4h-4zM80 12h4v4h-4z"/><path fill="#c0ccd8" d="M16 4h4v4h-4zM48 4h4v4h-4z"/><path fill="#b4b4cc" d="M20 4h4v4h-4z"/><path fill="#d8d8f0" d="M28 4h4v4h-4z"/><path fill="#9ca8c0" d="M32 4h4v4h-4z"/><path fill="#d8e4fc" d="M40 4h4v4h-4z"/><path fill="#d8f0fc" d="M44 4h4v4h-4z"/><path fill="#e4f0f0" d="M52 4h4v4h-4z"/><path fill="#9ca8b4" d="M60 4h4v4h-4z"/><path fill="#cccce4" d="M64 4h4v4h-4zM80 4h4v4h-4z"/><path fill="#b4cccc" d="M76 4h4v4h-4zM84 8h4v4h-4z"/><path fill="#cce4e4" d="M84 4h4v4h-4z"/><path fill="#a8b4b4" d="M0 8h4v4h-4zM44 8h4v4h-4zM48 12h4v4h-4z"/><path fill="#b4c0b4" d="M4 8h4v4h-4zM40 8h4v4h-4zM72 8h4v4h-4z"/><path fill="#c0ccc0" d="M12 8h4v4h-4z"/><path fill="#c0b4c0" d="M16 8h4v4h-4z"/><path fill="#a8c0b4" d="M20 8h4v4h-4z"/><path fill="#849090" d="M24 8h4v4h-4z"/><path fill="#b4ccc0" d="M28 8h4v4h-4zM68 8h4v4h-4z"/><path fill="#a8c0c0" d="M32 8h4v4h-4z"/><path fill="#cccccc" d="M36 8h4v4h-4zM76 12h4v4h-4z"/><path fill="#9cb4a8" d="M48 8h4v4h-4z"/><path fill="#c0c0cc" d="M56 8h4v4h-4zM64 8h4v4h-4z"/><path fill="#a8b4a8" d="M60 8h4v4h-4zM40 12h4v4h-4zM64 12h4v4h-4z"/><path fill="#e4f0cc" d="M76 8h4v4h-4z"/><path fill="#c0c0c0" d="M80 8h4v4h-4z"/><path fill="#c0d8cc" d="M88 8h4v4h-4z"/><path fill="#ccd8cc" d="M92 8h4v4h-4z"/><path fill="#a8cca8" d="M0 12h4v4h-4z"/><path fill="#a8c0a8" d="M4 12h4v4h-4zM92 16h4v4h-4z"/><path fill="#9ca89c" d="M8 12h4v4h-4zM68 12h4v4h-4zM72 12h4v4h-4zM92 12h4v4h-4zM72 16h4v4h-4z"/><path fill="#607860" d="M12 12h4v4h-4zM88 16h4v4h-4zM40 68h4v4h-4z"/><path fill="#c0d8c0" d="M16 12h4v4h-4z"/><path fill="#909c90" d="M20 12h4v4h-4zM88 12h4v4h-4z"/><path fill="#a8b49c" d="M24 12h4v4h-4zM28 12h4v4h-4z"/><path fill="#9cb49c" d="M32 12h4v4h-4z"/><path fill="#c0c0b4" d="M36 12h4v4h-4z"/><path fill="#e4e4d8" d="M44 12h4v4h-4z"/><path fill="#90a884" d="M52 12h4v4h-4zM4 16h4v4h-4z"/><path fill="#b4b4a8" d="M56 12h4v4h-4z"/><path fill="#849078" d="M60 12h4v4h-4zM32 16h4v4h-4zM52 24h4v4h-4zM8 32h4v4h-4z"/><path fill="#9ca890" d="M84 12h4v4h-4zM40 16h4v4h-4zM80 16h4v4h-4zM84 16h4v4h-4zM0 40h4v4h-4z"/><path fill="#78846c" d="M0 16h4v4h-4zM36 20h4v4h-4zM20 40h4v4h-4zM56 40h4v4h-4z"/><path fill="#a8c090" d="M8 16h4v4h-4z"/><path fill="#909c78" d="M12 16h4v4h-4zM44 16h4v4h-4zM48 16h4v4h-4zM8 20h4v4h-4z"/><path fill="#909c84" d="M16 16h4v4h-4zM28 16h4v4h-4z"/><path fill="#848460" d="M20 16h4v4h-4z"/><path fill="#b4c09c" d="M24 16h4v4h-4z"/><path fill="#78906c" d="M36 16h4v4h-4zM40 20h4v4h-4zM64 20h4v4h-4zM24 36h4v4h-4zM8 40h4v4h-4zM88 44h4v4h-4zM88 64h4v4h-4z"/><path fill="#6c846c" d="M52 16h4v4h-4z"/><path fill="#84a884" d="M56 16h4v4h-4z"/><path fill="#849c6c" d="M60 16h4v4h-4zM12 32h4v4h-4zM36 40h4v4h-4zM8 52h4v4h-4z"/><path fill="#6c9c6c" d="M64 16h4v4h-4z"/><path fill="#789c78" d="M68 16h4v4h-4zM12 20h4v4h-4z"/><path fill="#a8b490" d="M76 16h4v4h-4zM16 32h4v4h-4z"/><path fill="#789060" d="M0 20h4v4h-4zM28 20h4v4h-4zM44 20h4v4h-4zM0 24h4v4h-4zM8 24h4v4h-4zM4 28h4v4h-4z"/><path fill="#6c906c" d="M4 20h4v4h-4zM24 20h4v4h-4z"/><path fill="#b4cc90" d="M16 20h4v4h-4z"/><path fill="#485430" d="M20 20h4v4h-4zM84 40h4v4h-4zM24 48h4v4h-4zM92 56h4v4h-4z"/><path fill="#606030" d="M32 20h4v4h-4z"/><path fill="#6c8460" d="M48 20h4v4h-4zM60 20h4v4h-4z"/><path fill="#607854" d="M52 20h4v4h-4zM56 32h4v4h-4zM24 44h4v4h-4zM32 44h4v4h-4zM40 48h4v4h-4zM40 56h4v4h-4z"/><path fill="#849c78" d="M56 20h4v4h-4zM8 44h4v4h-4z"/><path fill="#6c7860" d="M68 20h4v4h-4zM8 36h4v4h-4z"/><path fill="#3c5430" d="M72 20h4v4h-4zM36 24h4v4h-4zM88 28h4v4h-4zM92 32h4v4h-4zM16 36h4v4h-4zM76 36h4v4h-4zM48 40h4v4h-4zM64 40h4v4h-4zM36 48h4v4h-4zM68 48h4v4h-4zM92 48h4v4h-4zM84 56h4v4h-4zM28 60h4v4h-4zM80 60h4v4h-4zM12 64h4v4h-4zM80 64h4v4h-4zM72 68h4v4h-4z"/><path fill="#789c6c" d="M76 20h4v4h-4zM24 40h4v4h-4zM16 52h4v4h-4z"/><path fill="#608460" d="M80 20h4v4h-4zM92 28h4v4h-4zM76 32h4v4h-4z"/><path fill="#606c60" d="M84 20h4v4h-4zM24 52h4v4h-4z"/><path fill="#849c84" d="M88 20h4v4h-4zM76 24h4v4h-4zM68 36h4v4h-4z"/><path fill="#48603c" d="M92 20h4v4h-4zM20 32h4v4h-4zM68 32h4v4h-4zM32 36h4v4h-4zM44 40h4v4h-4zM40 44h4v4h-4zM8 48h4v4h-4zM28 52h4v4h-4zM44 52h4v4h-4zM60 52h4v4h-4zM76 56h4v4h-4zM36 60h4v4h-4zM0 68h4v4h-4zM28 68h4v4h-4z"/><path fill="#788460" d="M4 24h4v4h-4zM4 44h4v4h-4z"/><path fill="#6c7848" d="M12 24h4v4h-4z"/><path fill="#789c60" d="M16 24h4v4h-4z"/><path fill="#607848" d="M20 24h4v4h-4zM56 28h4v4h-4zM64 28h4v4h-4zM68 28h4v4h-4zM0 48h4v4h-4z"/><path fill="#6c9054" d="M24 24h4v4h-4zM8 64h4v4h-4z"/><path fill="#90b484" d="M28 24h4v4h-4z"/><path fill="#3c6c30" d="M32 24h4v4h-4z"/><path fill="#6c8454" d="M40 24h4v4h-4zM60 24h4v4h-4zM12 28h4v4h-4zM28 40h4v4h-4zM28 48h4v4h-4z"/><path fill="#547848" d="M44 24h4v4h-4zM68 24h4v4h-4zM52 28h4v4h-4zM40 40h4v4h-4zM20 48h4v4h-4zM12 52h4v4h-4zM32 52h4v4h-4zM28 56h4v4h-4zM4 60h4v4h-4zM16 64h4v4h-4z"/><path fill="#546c48" d="M48 24h4v4h-4zM72 24h4v4h-4zM64 32h4v4h-4zM44 36h4v4h-4zM12 48h4v4h-4zM20 60h4v4h-4zM64 68h4v4h-4z"/><path fill="#486030" d="M56 24h4v4h-4zM4 52h4v4h-4zM8 60h4v4h-4z"/><path fill="#84b484" d="M64 24h4v4h-4z"/><path fill="#60846c" d="M80 24h4v4h-4z"/><path fill="#3c5424" d="M84 24h4v4h-4zM16 56h4v4h-4zM36 56h4v4h-4zM88 60h4v4h-4z"/><path fill="#486c48" d="M88 24h4v4h-4zM56 36h4v4h-4zM40 52h4v4h-4z"/><path fill="#305430" d="M92 24h4v4h-4zM48 36h4v4h-4zM80 36h4v4h-4z"/><path fill="#606c3c" d="M0 28h4v4h-4z"/><path fill="#789054" d="M8 28h4v4h-4z"/><path fill="#6c8448" d="M16 28h4v4h-4zM36 36h4v4h-4z"/><path fill="#305424" d="M20 28h4v4h-4zM72 52h4v4h-4zM0 56h4v4h-4zM4 56h4v4h-4z"/><path fill="#243c0c" d="M24 28h4v4h-4zM72 32h4v4h-4zM80 48h4v4h-4z"/><path fill="#54783c" d="M28 28h4v4h-4zM52 36h4v4h-4z"/><path fill="#608448" d="M32 28h4v4h-4z"/><path fill="#546c3c" d="M36 28h4v4h-4zM44 28h4v4h-4zM24 32h4v4h-4zM28 32h4v4h-4zM36 44h4v4h-4zM4 48h4v4h-4zM12 56h4v4h-4z"/><path fill="#608454" d="M40 28h4v4h-4z"/><path fill="#304818" d="M48 28h4v4h-4z"/><path fill="#3c6030" d="M60 28h4v4h-4zM80 32h4v4h-4zM4 68h4v4h-4zM12 68h4v4h-4z"/><path fill="#244818" d="M72 28h4v4h-4zM80 28h4v4h-4z"/><path fill="#3c603c" d="M76 28h4v4h-4zM64 36h4v4h-4zM64 56h4v4h-4z"/><path fill="#304824" d="M84 28h4v4h-4zM92 36h4v4h-4zM84 48h4v4h-4zM68 52h4v4h-4zM32 56h4v4h-4zM20 64h4v4h-4zM64 64h4v4h-4zM32 68h4v4h-4zM84 68h4v4h-4z"/><path fill="#6c7854" d="M0 32h4v4h-4zM0 36h4v4h-4zM60 36h4v4h-4z"/><path fill="#788454" d="M4 32h4v4h-4z"/><path fill="#54603c" d="M32 32h4v4h-4zM80 68h4v4h-4z"/><path fill="#48543c" d="M36 32h4v4h-4zM68 40h4v4h-4zM52 44h4v4h-4z"/><path fill="#6c9060" d="M40 32h4v4h-4z"/><path fill="#306024" d="M44 32h4v4h-4z"/><path fill="#546c54" d="M48 32h4v4h-4zM52 40h4v4h-4zM56 44h4v4h-4zM44 48h4v4h-4zM20 56h4v4h-4zM84 60h4v4h-4zM56 68h4v4h-4z"/><path fill="#304830" d="M52 32h4v4h-4zM72 40h4v4h-4zM76 60h4v4h-4zM24 64h4v4h-4zM40 64h4v4h-4z"/><path fill="#183c0c" d="M60 32h4v4h-4z"/><path fill="#0c2400" d="M84 32h4v4h-4z"/><path fill="#244824" d="M88 32h4v4h-4zM80 40h4v4h-4z"/><path fill="#546c60" d="M4 36h4v4h-4z"/><path fill="#b4b49c" d="M12 36h4v4h-4z"/><path fill="#84906c" d="M20 36h4v4h-4z"/><path fill="#90a878" d="M28 36h4v4h-4z"/><path fill="#609048" d="M40 36h4v4h-4z"/><path fill="#303c18" d="M72 36h4v4h-4zM24 60h4v4h-4z"/><path fill="#3c4830" d="M84 36h4v4h-4zM64 52h4v4h-4zM80 56h4v4h-4z"/><path fill="#3c4824" d="M88 36h4v4h-4zM76 48h4v4h-4zM84 64h4v4h-4z"/><path fill="#909084" d="M4 40h4v4h-4z"/><path fill="#787860" d="M12 40h4v4h-4z"/><path fill="#6c6c54" d="M16 40h4v4h-4z"/><path fill="#548448" d="M32 40h4v4h-4z"/><path fill="#303c24" d="M60 40h4v4h-4z"/><path fill="#243c24" d="M76 40h4v4h-4zM72 44h4v4h-4zM76 44h4v4h-4zM88 56h4v4h-4zM72 60h4v4h-4zM68 64h4v4h-4zM72 64h4v4h-4z"/><path fill="#546048" d="M88 40h4v4h-4zM84 44h4v4h-4zM20 68h4v4h-4zM36 68h4v4h-4zM44 68h4v4h-4z"/><path fill="#243c18" d="M92 40h4v4h-4zM68 56h4v4h-4zM16 60h4v4h-4zM92 64h4v4h-4z"/><path fill="#9ca884" d="M0 44h4v4h-4z"/><path fill="#606c54" d="M12 44h4v4h-4zM16 44h4v4h-4zM44 44h4v4h-4zM16 48h4v4h-4z"/><path fill="#909078" d="M20 44h4v4h-4z"/><path fill="#609060" d="M28 44h4v4h-4z"/><path fill="#0c240c" d="M48 44h4v4h-4z"/><path fill="#486054" d="M60 44h4v4h-4zM48 56h4v4h-4zM48 60h4v4h-4zM48 68h4v4h-4zM60 68h4v4h-4z"/><path fill="#24300c" d="M64 44h4v4h-4zM80 44h4v4h-4zM88 52h4v4h-4zM72 56h4v4h-4z"/><path fill="#000c00" d="M68 44h4v4h-4z"/><path fill="#001800" d="M92 44h4v4h-4z"/><path fill="#306030" d="M32 48h4v4h-4z"/><path fill="#788484" d="M48 48h4v4h-4z"/><path fill="#6c7878" d="M52 48h4v4h-4z"/><path fill="#484848" d="M56 48h4v4h-4z"/><path fill="#183018" d="M60 48h4v4h-4zM68 68h4v4h-4z"/><path fill="#3c543c" d="M64 48h4v4h-4zM60 64h4v4h-4zM76 68h4v4h-4z"/><path fill="#486048" d="M72 48h4v4h-4zM80 52h4v4h-4zM52 60h4v4h-4zM60 60h4v4h-4zM28 64h4v4h-4zM44 64h4v4h-4zM48 64h4v4h-4z"/><path fill="#484830" d="M88 48h4v4h-4z"/><path fill="#486c30" d="M0 52h4v4h-4zM8 56h4v4h-4z"/><path fill="#547854" d="M20 52h4v4h-4zM44 60h4v4h-4zM24 68h4v4h-4z"/><path fill="#486c3c" d="M36 52h4v4h-4zM0 60h4v4h-4zM12 60h4v4h-4z"/><path fill="#0c3018" d="M48 52h4v4h-4z"/><path fill="#3c4848" d="M52 52h4v4h-4z"/><path fill="#303024" d="M56 52h4v4h-4zM92 68h4v4h-4z"/><path fill="#243018" d="M76 52h4v4h-4zM68 60h4v4h-4z"/><path fill="#303c30" d="M84 52h4v4h-4z"/><path fill="#30543c" d="M92 52h4v4h-4z"/><path fill="#546054" d="M24 56h4v4h-4zM56 60h4v4h-4z"/><path fill="#60786c" d="M44 56h4v4h-4z"/><path fill="#3c5448" d="M52 56h4v4h-4zM36 64h4v4h-4z"/><path fill="#3c483c" d="M56 56h4v4h-4zM60 56h4v4h-4zM92 60h4v4h-4z"/><path fill="#485448" d="M32 60h4v4h-4z"/><path fill="#789c84" d="M40 60h4v4h-4z"/><path fill="#6c9078" d="M64 60h4v4h-4z"/><path fill="#0c300c" d="M0 64h4v4h-4z"/><path fill="#30480c" d="M4 64h4v4h-4z"/><path fill="#18300c" d="M32 64h4v4h-4zM16 68h4v4h-4zM88 68h4v4h-4z"/><path fill="#606c6c" d="M52 64h4v4h-4z"/><path fill="#6c6c6c" d="M56 64h4v4h-4z"/><path fill="#18240c" d="M76 64h4v4h-4z"/><path fill="#243c00" d="M8 68h4v4h-4z"/><path fill="#3c3c3c" d="M52 68h4v4h-4z"/></svg></div>
<div class="a" style="left:922px;top:66px;width:11px;height:11px;background:#6a6a9a;border:1px solid #fff;overflow:hidden"><div class="a" style="left:3px;top:5px;width:5px;height:3px;background:#fff"></div></div>
<div class="a" style="left:935px;top:66px;width:15px;height:11px;background:#6a6a9a;border:1px solid #fff;overflow:hidden"><div class="t" style="left:0;top:1.5px;width:13px;text-align:center;font-family:Liberation Mono;font-size:7.5px;font-weight:bold;color:#fff;letter-spacing:-0.6px">XMP</div></div>
<div class="a" style="left:952px;top:66px;width:19px;height:11px;background:#6a6a9a;border:1px solid #fff;overflow:hidden"><div class="t" style="left:0;top:1.5px;width:17px;text-align:center;font-family:Liberation Mono;font-size:7.5px;font-weight:bold;color:#fff;letter-spacing:-0.6px">EXIF</div></div>
<div class="a" style="left:973px;top:66px;width:17px;height:11px;background:#6a6a9a;border:1px solid #fff;overflow:hidden"><div class="t" style="left:0;top:1.5px;width:15px;text-align:center;font-family:Liberation Mono;font-size:7.5px;font-weight:bold;color:#fff;letter-spacing:-0.6px">GPS</div></div>
<div class="a" style="left:889px;top:80px;width:102px;height:15px;background:#ece9c8"></div>
<div class="a" style="left:889px;top:96px;width:102px;height:11px;background:#ece9c8"></div>
<div class="a" style="left:889px;top:108px;width:102px;height:11px;background:#ece9c8"></div>
<div class="t" style="left:889px;top:82.7px;width:102px;text-align:center;font-size:11px;letter-spacing:-0.3px;color:#0a0a2a">DJI_0009</div>
<div class="t" style="left:889px;top:97px;width:102px;text-align:center;font-size:10px;letter-spacing:-0.25px;color:#0a0a2a">JPEG TrueColor (v1.1)</div>
<div class="t" style="left:889px;top:109px;width:102px;text-align:center;font-size:9.5px;letter-spacing:-0.2px;color:#0a0a2a">4000x3000x24</div>
<div class="a" style="left:1004px;top:6px;width:92px;height:69px;overflow:hidden;background:#444;box-shadow:3px 3px 3px rgba(0,0,0,.35)"><svg width="92" height="69" viewBox="0 0 92 69" style="display:block;filter:blur(0.7px)"><path fill="#c0c0c0" d="M0 0h4v4h-4z"/><path fill="#ccd8e4" d="M4 0h4v4h-4zM0 4h4v4h-4zM28 4h4v4h-4zM32 4h4v4h-4zM80 4h4v4h-4z"/><path fill="#cce4e4" d="M8 0h4v4h-4z"/><path fill="#d8e4f0" d="M12 0h4v4h-4zM20 0h4v4h-4zM52 4h4v4h-4z"/><path fill="#c0d8e4" d="M16 0h4v4h-4z"/><path fill="#cccce4" d="M24 0h4v4h-4z"/><path fill="#c0ccd8" d="M28 0h4v4h-4zM80 0h4v4h-4zM44 4h4v4h-4z"/><path fill="#b4c0cc" d="M32 0h4v4h-4zM72 0h4v4h-4zM76 0h4v4h-4zM84 0h4v4h-4zM32 8h4v4h-4z"/><path fill="#d8d8e4" d="M36 0h4v4h-4z"/><path fill="#b4c0c0" d="M40 0h4v4h-4zM0 8h4v4h-4z"/><path fill="#f0fcfc" d="M44 0h4v4h-4zM40 4h4v4h-4z"/><path fill="#a8b4c0" d="M48 0h4v4h-4zM16 8h4v4h-4zM80 8h4v4h-4z"/><path fill="#b4ccd8" d="M52 0h4v4h-4z"/><path fill="#e4f0fc" d="M56 0h4v4h-4zM8 4h4v4h-4z"/><path fill="#d8d8f0" d="M60 0h4v4h-4z"/><path fill="#a8b4b4" d="M64 0h4v4h-4zM56 8h4v4h-4zM88 12h4v4h-4z"/><path fill="#b4b4c0" d="M68 0h4v4h-4zM92 8h4v4h-4z"/><path fill="#e4e4fc" d="M88 0h4v4h-4z"/><path fill="#e4f0e4" d="M92 0h4v4h-4z"/><path fill="#fcfcfc" d="M4 4h4v4h-4zM48 4h4v4h-4zM92 4h4v4h-4zM36 8h4v4h-4z"/><path fill="#e4fcfc" d="M12 4h4v4h-4zM20 4h4v4h-4zM84 4h4v4h-4z"/><path fill="#ccccd8" d="M16 4h4v4h-4zM76 4h4v4h-4z"/><path fill="#c0c0cc" d="M24 4h4v4h-4zM12 8h4v4h-4z"/><path fill="#b4cccc" d="M36 4h4v4h-4z"/><path fill="#ccd8d8" d="M56 4h4v4h-4z"/><path fill="#c0cccc" d="M60 4h4v4h-4zM64 4h4v4h-4zM76 8h4v4h-4z"/><path fill="#d8f0f0" d="M68 4h4v4h-4z"/><path fill="#d8e4e4" d="M72 4h4v4h-4z"/><path fill="#e4e4f0" d="M88 4h4v4h-4z"/><path fill="#a8b4a8" d="M4 8h4v4h-4zM8 8h4v4h-4zM20 12h4v4h-4z"/><path fill="#9ca8a8" d="M20 8h4v4h-4z"/><path fill="#f0f0f0" d="M24 8h4v4h-4z"/><path fill="#c0d8cc" d="M28 8h4v4h-4zM84 8h4v4h-4z"/><path fill="#ccd8cc" d="M40 8h4v4h-4z"/><path fill="#788478" d="M44 8h4v4h-4zM8 16h4v4h-4z"/><path fill="#b4c0b4" d="M48 8h4v4h-4zM52 12h4v4h-4z"/><path fill="#a8a8a8" d="M52 8h4v4h-4z"/><path fill="#cccccc" d="M60 8h4v4h-4z"/><path fill="#a8c0b4" d="M64 8h4v4h-4zM84 12h4v4h-4z"/><path fill="#9c9c9c" d="M68 8h4v4h-4z"/><path fill="#b4ccc0" d="M72 8h4v4h-4zM60 12h4v4h-4z"/><path fill="#f0fcf0" d="M88 8h4v4h-4z"/><path fill="#a8a89c" d="M0 12h4v4h-4z"/><path fill="#849c84" d="M4 12h4v4h-4zM64 12h4v4h-4zM28 16h4v4h-4zM88 16h4v4h-4zM92 20h4v4h-4zM56 52h4v4h-4z"/><path fill="#9cb49c" d="M8 12h4v4h-4z"/><path fill="#78846c" d="M12 12h4v4h-4zM72 16h4v4h-4zM92 16h4v4h-4zM0 36h4v4h-4zM4 36h4v4h-4zM12 40h4v4h-4zM20 40h4v4h-4z"/><path fill="#849078" d="M16 12h4v4h-4zM44 12h4v4h-4zM32 16h4v4h-4zM12 36h4v4h-4zM0 40h4v4h-4z"/><path fill="#b4b490" d="M24 12h4v4h-4z"/><path fill="#909c90" d="M28 12h4v4h-4zM68 12h4v4h-4zM84 16h4v4h-4z"/><path fill="#849084" d="M32 12h4v4h-4zM80 12h4v4h-4z"/><path fill="#909084" d="M36 12h4v4h-4z"/><path fill="#90a890" d="M40 12h4v4h-4z"/><path fill="#909c84" d="M48 12h4v4h-4zM4 16h4v4h-4z"/><path fill="#c0d8c0" d="M56 12h4v4h-4z"/><path fill="#a8c0a8" d="M72 12h4v4h-4z"/><path fill="#6c8478" d="M76 12h4v4h-4z"/><path fill="#909c9c" d="M92 12h4v4h-4z"/><path fill="#789060" d="M0 16h4v4h-4zM20 20h4v4h-4zM52 20h4v4h-4zM20 28h4v4h-4zM28 28h4v4h-4z"/><path fill="#849c78" d="M12 16h4v4h-4zM64 16h4v4h-4zM16 44h4v4h-4zM12 52h4v4h-4z"/><path fill="#788460" d="M16 16h4v4h-4zM52 16h4v4h-4zM4 20h4v4h-4zM64 24h4v4h-4zM0 32h4v4h-4zM24 40h4v4h-4z"/><path fill="#909c78" d="M20 16h4v4h-4zM0 20h4v4h-4zM28 20h4v4h-4zM44 20h4v4h-4zM0 28h4v4h-4z"/><path fill="#909c6c" d="M24 16h4v4h-4z"/><path fill="#789078" d="M36 16h4v4h-4zM28 48h4v4h-4z"/><path fill="#b4ccb4" d="M40 16h4v4h-4z"/><path fill="#9cb484" d="M44 16h4v4h-4z"/><path fill="#b4c0a8" d="M48 16h4v4h-4z"/><path fill="#90a884" d="M56 16h4v4h-4z"/><path fill="#84a884" d="M60 16h4v4h-4z"/><path fill="#78906c" d="M68 16h4v4h-4zM60 20h4v4h-4zM8 36h4v4h-4zM72 36h4v4h-4zM16 52h4v4h-4z"/><path fill="#6c846c" d="M76 16h4v4h-4zM76 20h4v4h-4zM16 48h4v4h-4zM64 52h4v4h-4z"/><path fill="#848478" d="M80 16h4v4h-4z"/><path fill="#849c6c" d="M8 20h4v4h-4zM36 24h4v4h-4zM12 28h4v4h-4z"/><path fill="#84906c" d="M12 20h4v4h-4zM16 20h4v4h-4zM60 36h4v4h-4zM32 52h4v4h-4z"/><path fill="#90b484" d="M24 20h4v4h-4z"/><path fill="#607854" d="M32 20h4v4h-4zM44 24h4v4h-4zM88 24h4v4h-4zM72 32h4v4h-4zM68 36h4v4h-4zM12 44h4v4h-4zM24 44h4v4h-4zM28 52h4v4h-4zM20 56h4v4h-4zM8 64h4v4h-4zM92 64h4v4h-4z"/><path fill="#a8b490" d="M36 20h4v4h-4zM12 32h4v4h-4z"/><path fill="#a8b49c" d="M40 20h4v4h-4z"/><path fill="#789054" d="M48 20h4v4h-4z"/><path fill="#849060" d="M56 20h4v4h-4zM16 32h4v4h-4z"/><path fill="#9ccc90" d="M64 20h4v4h-4z"/><path fill="#6c8460" d="M68 20h4v4h-4zM72 20h4v4h-4zM60 24h4v4h-4zM20 36h4v4h-4zM16 40h4v4h-4zM76 40h4v4h-4zM20 44h4v4h-4z"/><path fill="#6c7860" d="M80 20h4v4h-4zM16 36h4v4h-4zM4 40h4v4h-4z"/><path fill="#608460" d="M84 20h4v4h-4zM48 28h4v4h-4zM52 36h4v4h-4zM12 48h4v4h-4z"/><path fill="#6c9078" d="M88 20h4v4h-4z"/><path fill="#546c48" d="M0 24h4v4h-4zM28 36h4v4h-4zM0 44h4v4h-4zM28 44h4v4h-4zM72 52h4v4h-4zM36 60h4v4h-4z"/><path fill="#546c30" d="M4 24h4v4h-4z"/><path fill="#6c7854" d="M8 24h4v4h-4zM48 24h4v4h-4zM8 32h4v4h-4z"/><path fill="#6c783c" d="M12 24h4v4h-4z"/><path fill="#6c7848" d="M16 24h4v4h-4z"/><path fill="#6c8448" d="M20 24h4v4h-4zM24 24h4v4h-4z"/><path fill="#608454" d="M28 24h4v4h-4zM68 24h4v4h-4zM28 40h4v4h-4zM56 40h4v4h-4zM0 48h4v4h-4z"/><path fill="#6c9060" d="M32 24h4v4h-4zM8 28h4v4h-4z"/><path fill="#546c3c" d="M40 24h4v4h-4zM32 44h4v4h-4zM8 56h4v4h-4zM32 56h4v4h-4z"/><path fill="#78a878" d="M52 24h4v4h-4z"/><path fill="#6c8454" d="M56 24h4v4h-4zM64 28h4v4h-4zM64 32h4v4h-4z"/><path fill="#607848" d="M72 24h4v4h-4zM44 28h4v4h-4zM56 32h4v4h-4zM0 64h4v4h-4z"/><path fill="#3c6030" d="M76 24h4v4h-4zM80 28h4v4h-4zM88 28h4v4h-4zM40 48h4v4h-4zM36 52h4v4h-4zM28 68h4v4h-4z"/><path fill="#3c5430" d="M80 24h4v4h-4zM4 28h4v4h-4zM92 32h4v4h-4zM56 36h4v4h-4zM32 40h4v4h-4zM40 40h4v4h-4zM12 56h4v4h-4zM40 56h4v4h-4zM16 60h4v4h-4zM24 64h4v4h-4zM36 64h4v4h-4zM32 68h4v4h-4zM36 68h4v4h-4z"/><path fill="#547848" d="M84 24h4v4h-4zM32 28h4v4h-4zM40 28h4v4h-4zM68 28h4v4h-4zM84 28h4v4h-4zM88 32h4v4h-4zM0 56h4v4h-4zM4 60h4v4h-4z"/><path fill="#486c48" d="M92 24h4v4h-4z"/><path fill="#3c6024" d="M16 28h4v4h-4zM48 32h4v4h-4z"/><path fill="#6c9054" d="M24 28h4v4h-4zM36 28h4v4h-4z"/><path fill="#486030" d="M52 28h4v4h-4zM72 28h4v4h-4zM32 32h4v4h-4zM4 48h4v4h-4zM16 56h4v4h-4zM12 60h4v4h-4zM84 64h4v4h-4zM4 68h4v4h-4zM20 68h4v4h-4z"/><path fill="#54783c" d="M56 28h4v4h-4zM68 32h4v4h-4zM32 36h4v4h-4z"/><path fill="#608448" d="M60 28h4v4h-4zM36 32h4v4h-4zM40 32h4v4h-4zM52 32h4v4h-4z"/><path fill="#486c3c" d="M76 28h4v4h-4zM44 40h4v4h-4zM8 48h4v4h-4zM32 60h4v4h-4zM4 64h4v4h-4z"/><path fill="#48603c" d="M92 28h4v4h-4zM84 36h4v4h-4zM40 52h4v4h-4zM68 52h4v4h-4zM36 56h4v4h-4zM32 64h4v4h-4zM64 68h4v4h-4z"/><path fill="#606c54" d="M4 32h4v4h-4zM88 52h4v4h-4z"/><path fill="#6c9c6c" d="M20 32h4v4h-4z"/><path fill="#606c3c" d="M24 32h4v4h-4z"/><path fill="#9cb490" d="M28 32h4v4h-4z"/><path fill="#548460" d="M44 32h4v4h-4z"/><path fill="#547854" d="M60 32h4v4h-4zM64 36h4v4h-4zM68 44h4v4h-4zM80 60h4v4h-4z"/><path fill="#3c5424" d="M76 32h4v4h-4zM4 52h4v4h-4z"/><path fill="#305430" d="M80 32h4v4h-4zM64 40h4v4h-4zM8 60h4v4h-4zM28 64h4v4h-4z"/><path fill="#304830" d="M84 32h4v4h-4zM48 40h4v4h-4zM40 44h4v4h-4zM24 56h4v4h-4zM44 60h4v4h-4zM88 60h4v4h-4zM88 64h4v4h-4zM40 68h4v4h-4z"/><path fill="#606c48" d="M24 36h4v4h-4zM4 44h4v4h-4zM68 60h4v4h-4z"/><path fill="#0c3000" d="M36 36h4v4h-4z"/><path fill="#304818" d="M40 36h4v4h-4zM72 40h4v4h-4zM72 64h4v4h-4z"/><path fill="#244818" d="M44 36h4v4h-4zM16 64h4v4h-4z"/><path fill="#243c24" d="M48 36h4v4h-4zM88 40h4v4h-4zM80 64h4v4h-4z"/><path fill="#485430" d="M76 36h4v4h-4zM68 48h4v4h-4zM84 56h4v4h-4zM12 68h4v4h-4z"/><path fill="#3c603c" d="M80 36h4v4h-4zM16 68h4v4h-4z"/><path fill="#486048" d="M88 36h4v4h-4zM88 44h4v4h-4zM24 48h4v4h-4zM32 48h4v4h-4zM44 48h4v4h-4zM84 60h4v4h-4zM60 68h4v4h-4z"/><path fill="#486c54" d="M92 36h4v4h-4z"/><path fill="#3c4830" d="M8 40h4v4h-4zM80 48h4v4h-4zM92 48h4v4h-4zM92 68h4v4h-4z"/><path fill="#305424" d="M36 40h4v4h-4zM36 48h4v4h-4zM24 68h4v4h-4z"/><path fill="#3c543c" d="M52 40h4v4h-4zM84 40h4v4h-4zM92 40h4v4h-4zM56 48h4v4h-4zM24 52h4v4h-4zM56 60h4v4h-4zM92 60h4v4h-4zM60 64h4v4h-4zM44 68h4v4h-4zM68 68h4v4h-4z"/><path fill="#244824" d="M60 40h4v4h-4zM72 48h4v4h-4zM24 60h4v4h-4zM28 60h4v4h-4z"/><path fill="#001800" d="M68 40h4v4h-4zM84 48h4v4h-4zM52 56h4v4h-4zM76 64h4v4h-4z"/><path fill="#243c18" d="M80 40h4v4h-4z"/><path fill="#54543c" d="M8 44h4v4h-4z"/><path fill="#305418" d="M36 44h4v4h-4zM8 68h4v4h-4z"/><path fill="#607860" d="M44 44h4v4h-4z"/><path fill="#546c54" d="M48 44h4v4h-4zM76 56h4v4h-4z"/><path fill="#48543c" d="M52 44h4v4h-4zM64 44h4v4h-4zM80 44h4v4h-4zM28 56h4v4h-4zM72 56h4v4h-4zM88 56h4v4h-4zM64 60h4v4h-4zM64 64h4v4h-4zM72 68h4v4h-4z"/><path fill="#485448" d="M56 44h4v4h-4zM68 64h4v4h-4z"/><path fill="#303c24" d="M60 44h4v4h-4zM64 48h4v4h-4zM76 52h4v4h-4zM64 56h4v4h-4zM80 56h4v4h-4zM92 56h4v4h-4zM44 64h4v4h-4zM76 68h4v4h-4z"/><path fill="#546048" d="M72 44h4v4h-4zM44 52h4v4h-4zM84 52h4v4h-4z"/><path fill="#18300c" d="M76 44h4v4h-4zM40 60h4v4h-4zM72 60h4v4h-4z"/><path fill="#18240c" d="M84 44h4v4h-4z"/><path fill="#303c18" d="M92 44h4v4h-4zM92 52h4v4h-4z"/><path fill="#b4c09c" d="M20 48h4v4h-4z"/><path fill="#3c5448" d="M48 48h4v4h-4z"/><path fill="#3c4848" d="M52 48h4v4h-4zM56 56h4v4h-4z"/><path fill="#485454" d="M60 48h4v4h-4zM56 64h4v4h-4z"/><path fill="#9ca890" d="M76 48h4v4h-4z"/><path fill="#181800" d="M88 48h4v4h-4z"/><path fill="#486c30" d="M0 52h4v4h-4zM0 60h4v4h-4z"/><path fill="#486024" d="M8 52h4v4h-4z"/><path fill="#546054" d="M20 52h4v4h-4z"/><path fill="#486c60" d="M48 52h4v4h-4z"/><path fill="#182418" d="M52 52h4v4h-4z"/><path fill="#303c30" d="M60 52h4v4h-4zM48 60h4v4h-4zM76 60h4v4h-4z"/><path fill="#3c4824" d="M80 52h4v4h-4zM80 68h4v4h-4z"/><path fill="#78a860" d="M4 56h4v4h-4z"/><path fill="#183024" d="M44 56h4v4h-4zM48 68h4v4h-4z"/><path fill="#486054" d="M48 56h4v4h-4zM52 60h4v4h-4z"/><path fill="#0c180c" d="M60 56h4v4h-4z"/><path fill="#304824" d="M68 56h4v4h-4zM12 64h4v4h-4z"/><path fill="#485418" d="M20 60h4v4h-4z"/><path fill="#243024" d="M60 60h4v4h-4zM52 64h4v4h-4z"/><path fill="#245424" d="M20 64h4v4h-4z"/><path fill="#183018" d="M40 64h4v4h-4z"/><path fill="#546c60" d="M48 64h4v4h-4z"/><path fill="#3c5418" d="M0 68h4v4h-4z"/><path fill="#3c483c" d="M52 68h4v4h-4zM56 68h4v4h-4z"/><path fill="#0c240c" d="M84 68h4v4h-4z"/><path fill="#243018" d="M88 68h4v4h-4z"/></svg></div>
<div class="a" style="left:1032px;top:66px;width:11px;height:11px;background:#6a6a9a;border:1px solid #fff;overflow:hidden"><div class="a" style="left:3px;top:5px;width:5px;height:3px;background:#fff"></div></div>
<div class="a" style="left:1045px;top:66px;width:15px;height:11px;background:#6a6a9a;border:1px solid #fff;overflow:hidden"><div class="t" style="left:0;top:1.5px;width:13px;text-align:center;font-family:Liberation Mono;font-size:7.5px;font-weight:bold;color:#fff;letter-spacing:-0.6px">XMP</div></div>
<div class="a" style="left:1062px;top:66px;width:19px;height:11px;background:#6a6a9a;border:1px solid #fff;overflow:hidden"><div class="t" style="left:0;top:1.5px;width:17px;text-align:center;font-family:Liberation Mono;font-size:7.5px;font-weight:bold;color:#fff;letter-spacing:-0.6px">EXIF</div></div>
<div class="a" style="left:1083px;top:66px;width:17px;height:11px;background:#6a6a9a;border:1px solid #fff;overflow:hidden"><div class="t" style="left:0;top:1.5px;width:15px;text-align:center;font-family:Liberation Mono;font-size:7.5px;font-weight:bold;color:#fff;letter-spacing:-0.6px">GPS</div></div>
<div class="a" style="left:999px;top:80px;width:102px;height:15px;background:#ece9c8"></div>
<div class="a" style="left:999px;top:96px;width:102px;height:11px;background:#ece9c8"></div>
<div class="a" style="left:999px;top:108px;width:102px;height:11px;background:#ece9c8"></div>
<div class="t" style="left:999px;top:82.7px;width:102px;text-align:center;font-size:11px;letter-spacing:-0.3px;color:#0a0a2a">DJI_0010</div>
<div class="t" style="left:999px;top:97px;width:102px;text-align:center;font-size:10px;letter-spacing:-0.25px;color:#0a0a2a">JPEG TrueColor (v1.1)</div>
<div class="t" style="left:999px;top:109px;width:102px;text-align:center;font-size:9.5px;letter-spacing:-0.2px;color:#0a0a2a">4000x3000x24</div>
<div class="a" style="left:14px;top:130px;width:92px;height:69px;overflow:hidden;background:#444;box-shadow:3px 3px 3px rgba(0,0,0,.35)"><svg width="92" height="69" viewBox="0 0 92 69" style="display:block;filter:blur(0.7px)"><path fill="#e4f0fc" d="M0 0h4v4h-4zM40 0h4v4h-4zM60 0h4v4h-4zM68 0h4v4h-4zM4 4h4v4h-4z"/><path fill="#b4c0cc" d="M4 0h4v4h-4zM92 0h4v4h-4zM20 4h4v4h-4z"/><path fill="#ccd8e4" d="M8 0h4v4h-4zM24 0h4v4h-4zM64 0h4v4h-4zM56 4h4v4h-4zM84 4h4v4h-4z"/><path fill="#b4c0d8" d="M12 0h4v4h-4z"/><path fill="#c0cce4" d="M16 0h4v4h-4z"/><path fill="#ccd8d8" d="M20 0h4v4h-4zM0 4h4v4h-4zM68 4h4v4h-4zM48 8h4v4h-4z"/><path fill="#b4ccd8" d="M28 0h4v4h-4z"/><path fill="#c0cccc" d="M32 0h4v4h-4zM40 4h4v4h-4zM76 4h4v4h-4z"/><path fill="#e4e4fc" d="M36 0h4v4h-4zM80 4h4v4h-4z"/><path fill="#cce4f0" d="M44 0h4v4h-4zM48 0h4v4h-4z"/><path fill="#c0d8d8" d="M52 0h4v4h-4zM16 4h4v4h-4zM52 4h4v4h-4z"/><path fill="#a8b4b4" d="M56 0h4v4h-4zM80 0h4v4h-4zM8 8h4v4h-4zM12 8h4v4h-4z"/><path fill="#f0fcfc" d="M72 0h4v4h-4z"/><path fill="#c0c0cc" d="M76 0h4v4h-4z"/><path fill="#c0ccd8" d="M84 0h4v4h-4zM24 4h4v4h-4z"/><path fill="#d8f0f0" d="M88 0h4v4h-4z"/><path fill="#c0b4cc" d="M8 4h4v4h-4z"/><path fill="#d8d8f0" d="M12 4h4v4h-4z"/><path fill="#a8b4c0" d="M28 4h4v4h-4z"/><path fill="#fcfcfc" d="M32 4h4v4h-4zM64 8h4v4h-4z"/><path fill="#9ca8b4" d="M36 4h4v4h-4z"/><path fill="#d8cce4" d="M44 4h4v4h-4z"/><path fill="#a8a8c0" d="M48 4h4v4h-4z"/><path fill="#ccccd8" d="M60 4h4v4h-4z"/><path fill="#d8d8e4" d="M64 4h4v4h-4z"/><path fill="#e4e4f0" d="M72 4h4v4h-4z"/><path fill="#cce4e4" d="M88 4h4v4h-4z"/><path fill="#b4b4c0" d="M92 4h4v4h-4zM36 8h4v4h-4zM76 8h4v4h-4z"/><path fill="#9cb4a8" d="M0 8h4v4h-4z"/><path fill="#b4c0c0" d="M4 8h4v4h-4zM32 8h4v4h-4zM44 8h4v4h-4zM60 8h4v4h-4zM88 8h4v4h-4z"/><path fill="#a8a8a8" d="M16 8h4v4h-4z"/><path fill="#9cb4b4" d="M20 8h4v4h-4z"/><path fill="#d8cccc" d="M24 8h4v4h-4z"/><path fill="#a8b4a8" d="M28 8h4v4h-4zM68 8h4v4h-4zM20 12h4v4h-4zM24 12h4v4h-4z"/><path fill="#6c6c6c" d="M40 8h4v4h-4z"/><path fill="#b4c0b4" d="M52 8h4v4h-4zM56 12h4v4h-4z"/><path fill="#c0d8cc" d="M56 8h4v4h-4z"/><path fill="#848484" d="M72 8h4v4h-4z"/><path fill="#a8c0c0" d="M80 8h4v4h-4zM92 8h4v4h-4z"/><path fill="#b4b4b4" d="M84 8h4v4h-4z"/><path fill="#a8c0b4" d="M0 12h4v4h-4z"/><path fill="#9ca890" d="M4 12h4v4h-4zM64 12h4v4h-4zM72 16h4v4h-4zM8 40h4v4h-4z"/><path fill="#a8a89c" d="M8 12h4v4h-4zM32 12h4v4h-4z"/><path fill="#b4c0a8" d="M12 12h4v4h-4zM16 12h4v4h-4zM60 12h4v4h-4z"/><path fill="#9c9c9c" d="M28 12h4v4h-4zM80 12h4v4h-4z"/><path fill="#9ca89c" d="M36 12h4v4h-4zM48 12h4v4h-4z"/><path fill="#9cb49c" d="M40 12h4v4h-4zM68 12h4v4h-4z"/><path fill="#849084" d="M44 12h4v4h-4zM84 16h4v4h-4z"/><path fill="#6c846c" d="M52 12h4v4h-4zM4 40h4v4h-4zM52 64h4v4h-4z"/><path fill="#b4ccb4" d="M72 12h4v4h-4z"/><path fill="#c0ccb4" d="M76 12h4v4h-4z"/><path fill="#909084" d="M84 12h4v4h-4zM88 12h4v4h-4z"/><path fill="#ccccb4" d="M92 12h4v4h-4z"/><path fill="#78906c" d="M0 16h4v4h-4zM56 20h4v4h-4zM72 20h4v4h-4zM48 24h4v4h-4zM16 32h4v4h-4zM56 44h4v4h-4z"/><path fill="#849078" d="M4 16h4v4h-4zM12 36h4v4h-4z"/><path fill="#909078" d="M8 16h4v4h-4z"/><path fill="#84906c" d="M12 16h4v4h-4zM48 20h4v4h-4zM12 40h4v4h-4zM16 40h4v4h-4z"/><path fill="#90a884" d="M16 16h4v4h-4zM40 20h4v4h-4z"/><path fill="#848478" d="M20 16h4v4h-4zM4 36h4v4h-4z"/><path fill="#9ca884" d="M24 16h4v4h-4zM64 16h4v4h-4z"/><path fill="#909c78" d="M28 16h4v4h-4zM32 16h4v4h-4zM12 20h4v4h-4z"/><path fill="#78846c" d="M36 16h4v4h-4zM0 36h4v4h-4zM8 44h4v4h-4zM16 44h4v4h-4z"/><path fill="#9c9c84" d="M40 16h4v4h-4z"/><path fill="#606054" d="M44 16h4v4h-4zM84 20h4v4h-4z"/><path fill="#788460" d="M48 16h4v4h-4zM52 16h4v4h-4z"/><path fill="#b4c09c" d="M56 16h4v4h-4z"/><path fill="#6c906c" d="M60 16h4v4h-4zM92 20h4v4h-4z"/><path fill="#9cb490" d="M68 16h4v4h-4zM92 24h4v4h-4z"/><path fill="#90b49c" d="M76 16h4v4h-4z"/><path fill="#90a890" d="M80 16h4v4h-4zM4 32h4v4h-4z"/><path fill="#ccccc0" d="M88 16h4v4h-4z"/><path fill="#a8cca8" d="M92 16h4v4h-4z"/><path fill="#849c6c" d="M0 20h4v4h-4zM12 28h4v4h-4zM32 28h4v4h-4z"/><path fill="#6c7854" d="M4 20h4v4h-4zM32 20h4v4h-4zM4 24h4v4h-4zM40 24h4v4h-4zM12 32h4v4h-4zM8 48h4v4h-4z"/><path fill="#486030" d="M8 20h4v4h-4zM80 28h4v4h-4zM32 44h4v4h-4zM24 60h4v4h-4zM84 68h4v4h-4z"/><path fill="#849c60" d="M16 20h4v4h-4z"/><path fill="#6c8460" d="M20 20h4v4h-4zM60 20h4v4h-4zM72 24h4v4h-4zM28 40h4v4h-4zM4 44h4v4h-4zM32 68h4v4h-4zM60 68h4v4h-4z"/><path fill="#6c8454" d="M24 20h4v4h-4zM32 24h4v4h-4zM8 32h4v4h-4zM20 32h4v4h-4zM32 32h4v4h-4z"/><path fill="#a8b490" d="M28 20h4v4h-4z"/><path fill="#608454" d="M36 20h4v4h-4zM56 28h4v4h-4zM44 32h4v4h-4z"/><path fill="#3c603c" d="M44 20h4v4h-4zM60 44h4v4h-4zM80 60h4v4h-4zM4 64h4v4h-4zM28 64h4v4h-4z"/><path fill="#6c9060" d="M52 20h4v4h-4zM12 24h4v4h-4zM60 28h4v4h-4zM76 28h4v4h-4zM44 40h4v4h-4z"/><path fill="#608460" d="M64 20h4v4h-4z"/><path fill="#3c6030" d="M68 20h4v4h-4zM72 32h4v4h-4zM36 44h4v4h-4zM20 60h4v4h-4z"/><path fill="#486c60" d="M76 20h4v4h-4z"/><path fill="#6c7860" d="M80 20h4v4h-4zM88 52h4v4h-4z"/><path fill="#789c78" d="M88 20h4v4h-4z"/><path fill="#90906c" d="M0 24h4v4h-4z"/><path fill="#787860" d="M8 24h4v4h-4zM92 60h4v4h-4z"/><path fill="#84a86c" d="M16 24h4v4h-4z"/><path fill="#909c6c" d="M20 24h4v4h-4z"/><path fill="#608448" d="M24 24h4v4h-4zM4 52h4v4h-4z"/><path fill="#54603c" d="M28 24h4v4h-4zM68 44h4v4h-4zM36 56h4v4h-4z"/><path fill="#486c3c" d="M36 24h4v4h-4zM84 28h4v4h-4zM36 40h4v4h-4zM8 56h4v4h-4zM0 64h4v4h-4zM12 64h4v4h-4z"/><path fill="#789060" d="M44 24h4v4h-4zM4 28h4v4h-4zM20 36h4v4h-4z"/><path fill="#9cb484" d="M52 24h4v4h-4z"/><path fill="#548448" d="M56 24h4v4h-4z"/><path fill="#849c78" d="M60 24h4v4h-4zM0 28h4v4h-4zM52 32h4v4h-4zM8 36h4v4h-4zM40 40h4v4h-4zM84 44h4v4h-4z"/><path fill="#547848" d="M64 24h4v4h-4zM32 36h4v4h-4zM44 44h4v4h-4zM12 48h4v4h-4zM12 56h4v4h-4zM16 56h4v4h-4z"/><path fill="#244818" d="M68 24h4v4h-4zM40 56h4v4h-4zM8 60h4v4h-4z"/><path fill="#607860" d="M76 24h4v4h-4zM80 24h4v4h-4zM48 44h4v4h-4zM20 48h4v4h-4zM72 48h4v4h-4z"/><path fill="#546c3c" d="M84 24h4v4h-4zM40 28h4v4h-4zM36 32h4v4h-4zM36 36h4v4h-4zM40 44h4v4h-4zM24 48h4v4h-4zM32 48h4v4h-4zM16 60h4v4h-4zM8 64h4v4h-4zM16 68h4v4h-4z"/><path fill="#607854" d="M88 24h4v4h-4zM88 32h4v4h-4zM60 36h4v4h-4zM12 44h4v4h-4zM8 52h4v4h-4z"/><path fill="#607848" d="M8 28h4v4h-4zM68 28h4v4h-4zM76 32h4v4h-4zM40 36h4v4h-4zM4 48h4v4h-4zM36 52h4v4h-4z"/><path fill="#3c5424" d="M16 28h4v4h-4zM36 28h4v4h-4zM48 32h4v4h-4zM44 36h4v4h-4zM88 44h4v4h-4zM0 56h4v4h-4z"/><path fill="#547830" d="M20 28h4v4h-4z"/><path fill="#486c30" d="M24 28h4v4h-4zM64 32h4v4h-4zM0 68h4v4h-4z"/><path fill="#6c8448" d="M28 28h4v4h-4z"/><path fill="#789054" d="M44 28h4v4h-4z"/><path fill="#54783c" d="M48 28h4v4h-4zM8 68h4v4h-4z"/><path fill="#789c60" d="M52 28h4v4h-4z"/><path fill="#606c48" d="M64 28h4v4h-4z"/><path fill="#3c6c3c" d="M72 28h4v4h-4zM56 32h4v4h-4z"/><path fill="#244824" d="M88 28h4v4h-4zM92 40h4v4h-4zM20 68h4v4h-4z"/><path fill="#3c5430" d="M92 28h4v4h-4zM48 36h4v4h-4zM64 36h4v4h-4zM80 36h4v4h-4zM0 44h4v4h-4zM0 48h4v4h-4zM32 52h4v4h-4zM72 56h4v4h-4zM60 60h4v4h-4zM68 60h4v4h-4zM24 64h4v4h-4zM40 68h4v4h-4z"/><path fill="#90a878" d="M0 32h4v4h-4zM20 52h4v4h-4z"/><path fill="#48603c" d="M24 32h4v4h-4zM28 32h4v4h-4zM80 32h4v4h-4zM64 40h4v4h-4zM24 44h4v4h-4zM72 44h4v4h-4zM36 48h4v4h-4zM12 52h4v4h-4zM32 60h4v4h-4zM72 60h4v4h-4z"/><path fill="#486c48" d="M40 32h4v4h-4zM28 52h4v4h-4z"/><path fill="#485430" d="M60 32h4v4h-4zM24 36h4v4h-4zM76 44h4v4h-4zM24 56h4v4h-4zM84 64h4v4h-4z"/><path fill="#546c48" d="M68 32h4v4h-4zM52 36h4v4h-4zM88 36h4v4h-4zM20 44h4v4h-4zM68 48h4v4h-4zM16 52h4v4h-4zM24 52h4v4h-4zM32 56h4v4h-4zM0 60h4v4h-4zM64 64h4v4h-4z"/><path fill="#183c0c" d="M84 32h4v4h-4z"/><path fill="#48543c" d="M92 32h4v4h-4zM52 40h4v4h-4zM88 40h4v4h-4zM52 60h4v4h-4zM88 60h4v4h-4zM80 64h4v4h-4zM72 68h4v4h-4z"/><path fill="#606c54" d="M16 36h4v4h-4zM68 36h4v4h-4z"/><path fill="#546030" d="M28 36h4v4h-4z"/><path fill="#3c6048" d="M56 36h4v4h-4z"/><path fill="#304824" d="M72 36h4v4h-4zM84 36h4v4h-4zM64 48h4v4h-4zM88 48h4v4h-4zM44 64h4v4h-4zM68 64h4v4h-4zM88 68h4v4h-4z"/><path fill="#303c18" d="M76 36h4v4h-4z"/><path fill="#546048" d="M92 36h4v4h-4zM28 48h4v4h-4zM44 68h4v4h-4z"/><path fill="#6c786c" d="M0 40h4v4h-4z"/><path fill="#b4b4a8" d="M20 40h4v4h-4z"/><path fill="#3c4818" d="M24 40h4v4h-4z"/><path fill="#3c6024" d="M32 40h4v4h-4zM4 56h4v4h-4z"/><path fill="#60846c" d="M48 40h4v4h-4zM16 48h4v4h-4zM48 52h4v4h-4z"/><path fill="#48483c" d="M56 40h4v4h-4zM80 52h4v4h-4z"/><path fill="#243024" d="M60 40h4v4h-4z"/><path fill="#305430" d="M68 40h4v4h-4zM60 48h4v4h-4zM40 52h4v4h-4zM36 64h4v4h-4zM92 68h4v4h-4z"/><path fill="#303c24" d="M72 40h4v4h-4zM92 48h4v4h-4zM72 52h4v4h-4zM40 60h4v4h-4zM76 60h4v4h-4z"/><path fill="#3c4824" d="M76 40h4v4h-4z"/><path fill="#243c18" d="M80 40h4v4h-4zM80 48h4v4h-4zM20 64h4v4h-4zM24 68h4v4h-4z"/><path fill="#0c240c" d="M84 40h4v4h-4zM80 56h4v4h-4z"/><path fill="#485424" d="M28 44h4v4h-4z"/><path fill="#305448" d="M52 44h4v4h-4z"/><path fill="#3c543c" d="M64 44h4v4h-4zM44 56h4v4h-4zM48 64h4v4h-4z"/><path fill="#0c1800" d="M80 44h4v4h-4z"/><path fill="#304818" d="M92 44h4v4h-4zM0 52h4v4h-4zM28 68h4v4h-4zM64 68h4v4h-4z"/><path fill="#547854" d="M40 48h4v4h-4zM68 52h4v4h-4zM28 56h4v4h-4z"/><path fill="#6c8478" d="M44 48h4v4h-4z"/><path fill="#3c4848" d="M48 48h4v4h-4z"/><path fill="#3c5454" d="M52 48h4v4h-4zM52 52h4v4h-4z"/><path fill="#3c483c" d="M56 48h4v4h-4z"/><path fill="#18300c" d="M76 48h4v4h-4z"/><path fill="#3c4830" d="M84 48h4v4h-4zM64 56h4v4h-4zM88 64h4v4h-4z"/><path fill="#546c60" d="M44 52h4v4h-4z"/><path fill="#3c5448" d="M56 52h4v4h-4zM56 64h4v4h-4z"/><path fill="#60786c" d="M60 52h4v4h-4z"/><path fill="#244830" d="M64 52h4v4h-4z"/><path fill="#243018" d="M76 52h4v4h-4z"/><path fill="#484830" d="M84 52h4v4h-4z"/><path fill="#183018" d="M92 52h4v4h-4zM16 64h4v4h-4zM32 64h4v4h-4z"/><path fill="#30543c" d="M20 56h4v4h-4z"/><path fill="#606c6c" d="M48 56h4v4h-4z"/><path fill="#303c30" d="M52 56h4v4h-4z"/><path fill="#485448" d="M56 56h4v4h-4z"/><path fill="#546c54" d="M60 56h4v4h-4zM40 64h4v4h-4z"/><path fill="#18240c" d="M68 56h4v4h-4zM44 60h4v4h-4z"/><path fill="#242418" d="M76 56h4v4h-4z"/><path fill="#243c24" d="M84 56h4v4h-4zM72 64h4v4h-4zM76 64h4v4h-4zM92 64h4v4h-4zM68 68h4v4h-4z"/><path fill="#486048" d="M88 56h4v4h-4zM64 60h4v4h-4zM36 68h4v4h-4z"/><path fill="#3c3c24" d="M92 56h4v4h-4z"/><path fill="#305418" d="M4 60h4v4h-4zM12 68h4v4h-4z"/><path fill="#245424" d="M12 60h4v4h-4z"/><path fill="#001800" d="M28 60h4v4h-4z"/><path fill="#304830" d="M36 60h4v4h-4z"/><path fill="#485454" d="M48 60h4v4h-4zM52 68h4v4h-4z"/><path fill="#243c30" d="M56 60h4v4h-4z"/><path fill="#24300c" d="M84 60h4v4h-4z"/><path fill="#30483c" d="M60 64h4v4h-4z"/><path fill="#3c6c24" d="M4 68h4v4h-4z"/><path fill="#545454" d="M48 68h4v4h-4z"/><path fill="#486054" d="M56 68h4v4h-4z"/><path fill="#0c2418" d="M76 68h4v4h-4z"/><path fill="#000000" d="M80 68h4v4h-4z"/></svg></div>
<div class="a" style="left:42px;top:190px;width:11px;height:11px;background:#6a6a9a;border:1px solid #fff;overflow:hidden"><div class="a" style="left:3px;top:5px;width:5px;height:3px;background:#fff"></div></div>
<div class="a" style="left:55px;top:190px;width:15px;height:11px;background:#6a6a9a;border:1px solid #fff;overflow:hidden"><div class="t" style="left:0;top:1.5px;width:13px;text-align:center;font-family:Liberation Mono;font-size:7.5px;font-weight:bold;color:#fff;letter-spacing:-0.6px">XMP</div></div>
<div class="a" style="left:72px;top:190px;width:19px;height:11px;background:#6a6a9a;border:1px solid #fff;overflow:hidden"><div class="t" style="left:0;top:1.5px;width:17px;text-align:center;font-family:Liberation Mono;font-size:7.5px;font-weight:bold;color:#fff;letter-spacing:-0.6px">EXIF</div></div>
<div class="a" style="left:93px;top:190px;width:17px;height:11px;background:#6a6a9a;border:1px solid #fff;overflow:hidden"><div class="t" style="left:0;top:1.5px;width:15px;text-align:center;font-family:Liberation Mono;font-size:7.5px;font-weight:bold;color:#fff;letter-spacing:-0.6px">GPS</div></div>
<div class="a" style="left:9px;top:204px;width:102px;height:15px;background:#ece9c8"></div>
<div class="a" style="left:9px;top:220px;width:102px;height:11px;background:#ece9c8"></div>
<div class="a" style="left:9px;top:232px;width:102px;height:11px;background:#ece9c8"></div>
<div class="t" style="left:9px;top:206.7px;width:102px;text-align:center;font-size:11px;letter-spacing:-0.3px;color:#0a0a2a">DJI_0011</div>
<div class="t" style="left:9px;top:221px;width:102px;text-align:center;font-size:10px;letter-spacing:-0.25px;color:#0a0a2a">JPEG TrueColor (v1.1)</div>
<div class="t" style="left:9px;top:233px;width:102px;text-align:center;font-size:9.5px;letter-spacing:-0.2px;color:#0a0a2a">4000x3000x24</div>
<svg class="a" style="left:152px;top:149px" width="34" height="34" viewBox="0 0 34 34">
<ellipse cx="18" cy="31.5" rx="12" ry="1.5" fill="#000" opacity=".15"/>
<g transform="rotate(-5 17 17)">
<path d="M4 6.5 L31 4 L31.5 8.5 L4.5 11Z" fill="#fff" stroke="#111" stroke-width="1.1"/>
<path d="M6 6.3 L9 6 L9.6 10.6 L6.6 10.9Z M13 5.6 L16 5.3 L16.6 9.9 L13.6 10.2Z M20 5 L23 4.7 L23.5 9.3 L20.5 9.6Z M27 4.4 L30 4.1 L30.5 8.7 L27.5 9Z" fill="#111"/>
<rect x="4.5" y="11" width="27" height="19" rx="1" fill="#fff" stroke="#111" stroke-width="1.8"/>
<path d="M5 11.5 H31 V15 H5Z" fill="#111"/><path d="M8 11.5 H12 L10.5 15 H6.5Z M15 11.5 H19 L17.5 15 H13.5Z M22 11.5 H26 L24.5 15 H20.5Z" fill="#fff"/>
<text x="6" y="27" font-family="Liberation Sans" font-weight="bold" font-size="12" fill="#e85a10">M</text>
<text x="16.3" y="26.5" font-family="Liberation Sans" font-weight="bold" font-size="11.5" fill="#2a86e8">P</text>
<text x="23.5" y="26" font-family="Liberation Sans" font-weight="bold" font-size="12" fill="#1aa01a">4</text>
</g>
</svg>
<div class="a" style="left:119px;top:204px;width:102px;height:15px;background:#c3c3c3"></div>
<div class="a" style="left:119px;top:220px;width:102px;height:11px;background:#c3c3c3"></div>
<div class="a" style="left:119px;top:232px;width:102px;height:11px;background:#c3c3c3"></div>
<div class="t" style="left:119px;top:206.7px;width:102px;text-align:center;font-size:11px;letter-spacing:-0.3px;color:#0a0a2a">DJI_0012</div>
<div class="a" style="left:784px;top:130px;width:92px;height:69px;overflow:hidden;background:#444;box-shadow:3px 3px 3px rgba(0,0,0,.35)"><svg width="92" height="69" viewBox="0 0 92 69" style="display:block;filter:blur(0.5px)"><path fill="#101020" d="M0 0h3v3h-3zM6 0h3v3h-3zM15 0h3v3h-3zM18 0h3v3h-3zM69 0h3v3h-3zM72 0h3v3h-3zM87 0h3v3h-3zM3 3h3v3h-3zM12 3h3v3h-3zM27 3h3v3h-3zM30 3h3v3h-3zM84 3h3v3h-3zM90 3h3v3h-3zM18 6h3v3h-3zM69 6h3v3h-3zM81 6h3v3h-3zM84 6h3v3h-3zM87 6h3v3h-3zM90 6h3v3h-3zM3 9h3v3h-3zM12 9h3v3h-3zM15 9h3v3h-3zM18 9h3v3h-3zM21 9h3v3h-3zM33 9h3v3h-3zM75 9h3v3h-3zM0 12h3v3h-3zM12 12h3v3h-3zM18 12h3v3h-3zM45 12h3v3h-3zM51 12h3v3h-3zM57 12h3v3h-3zM63 12h3v3h-3zM90 12h3v3h-3zM3 15h3v3h-3zM78 18h3v3h-3zM81 18h3v3h-3zM90 18h3v3h-3zM6 21h3v3h-3zM63 21h3v3h-3zM66 21h3v3h-3zM81 21h3v3h-3zM75 24h3v3h-3zM66 27h3v3h-3zM69 27h3v3h-3zM78 33h3v3h-3zM81 33h3v3h-3zM63 60h3v3h-3zM63 63h3v3h-3zM63 66h3v3h-3zM66 69h3v3h-3zM72 69h3v3h-3z"/><path fill="#000010" d="M3 0h3v3h-3zM24 0h3v3h-3zM27 0h3v3h-3zM9 3h3v3h-3zM15 3h3v3h-3zM18 3h3v3h-3zM33 3h3v3h-3zM36 3h3v3h-3zM39 3h3v3h-3zM42 3h3v3h-3zM72 3h3v3h-3zM75 3h3v3h-3zM78 3h3v3h-3zM87 3h3v3h-3zM3 6h3v3h-3zM24 6h3v3h-3zM27 6h3v3h-3zM30 6h3v3h-3zM45 6h3v3h-3zM54 6h3v3h-3zM72 6h3v3h-3zM78 6h3v3h-3zM6 9h3v3h-3zM24 9h3v3h-3zM27 9h3v3h-3zM45 9h3v3h-3zM6 15h3v3h-3zM66 60h3v3h-3zM66 66h3v3h-3zM63 69h3v3h-3z"/><path fill="#101030" d="M9 0h3v3h-3zM21 0h3v3h-3zM51 0h3v3h-3zM57 0h3v3h-3zM60 0h3v3h-3zM63 0h3v3h-3zM66 0h3v3h-3zM75 0h3v3h-3zM78 0h3v3h-3zM90 0h3v3h-3zM0 3h3v3h-3zM21 3h3v3h-3zM45 3h3v3h-3zM48 3h3v3h-3zM54 3h3v3h-3zM57 3h3v3h-3zM63 3h3v3h-3zM66 3h3v3h-3zM69 3h3v3h-3zM81 3h3v3h-3zM9 6h3v3h-3zM12 6h3v3h-3zM39 6h3v3h-3zM48 6h3v3h-3zM51 6h3v3h-3zM57 6h3v3h-3zM63 6h3v3h-3zM0 9h3v3h-3zM9 9h3v3h-3zM42 9h3v3h-3zM51 9h3v3h-3zM57 9h3v3h-3zM60 9h3v3h-3zM63 9h3v3h-3zM72 9h3v3h-3zM78 9h3v3h-3zM84 9h3v3h-3zM90 9h3v3h-3z"/><path fill="#102040" d="M12 0h3v3h-3zM30 0h3v3h-3zM42 0h3v3h-3zM45 0h3v3h-3zM48 0h3v3h-3zM54 0h3v3h-3zM81 0h3v3h-3zM84 0h3v3h-3zM6 3h3v3h-3zM24 3h3v3h-3zM60 3h3v3h-3zM0 6h3v3h-3zM6 6h3v3h-3zM15 6h3v3h-3zM21 6h3v3h-3zM66 6h3v3h-3zM75 6h3v3h-3zM69 9h3v3h-3zM87 57h3v3h-3zM75 60h3v3h-3zM87 60h3v3h-3zM90 60h3v3h-3zM90 63h3v3h-3zM75 69h3v3h-3zM90 69h3v3h-3z"/><path fill="#000020" d="M33 0h3v3h-3zM36 0h3v3h-3zM39 0h3v3h-3zM51 3h3v3h-3zM33 6h3v3h-3zM36 6h3v3h-3zM42 6h3v3h-3z"/><path fill="#001020" d="M60 6h3v3h-3zM84 60h3v3h-3zM81 63h3v3h-3zM81 66h3v3h-3zM87 66h3v3h-3z"/><path fill="#202040" d="M30 9h3v3h-3zM36 9h3v3h-3zM48 9h3v3h-3zM54 9h3v3h-3zM66 9h3v3h-3zM81 9h3v3h-3zM3 12h3v3h-3zM15 12h3v3h-3zM48 12h3v3h-3zM54 12h3v3h-3zM69 12h3v3h-3zM78 12h3v3h-3zM81 12h3v3h-3zM87 12h3v3h-3z"/><path fill="#202030" d="M39 9h3v3h-3zM6 12h3v3h-3zM9 12h3v3h-3zM21 12h3v3h-3zM24 12h3v3h-3zM27 12h3v3h-3zM30 12h3v3h-3zM84 12h3v3h-3zM48 15h3v3h-3zM54 15h3v3h-3zM72 15h3v3h-3zM75 15h3v3h-3zM3 18h3v3h-3zM6 18h3v3h-3zM78 21h3v3h-3zM63 24h3v3h-3zM69 24h3v3h-3zM87 24h3v3h-3zM81 27h3v3h-3zM87 30h3v3h-3zM90 30h3v3h-3zM90 45h3v3h-3zM81 51h3v3h-3zM69 54h3v3h-3zM69 57h3v3h-3zM66 63h3v3h-3zM72 66h3v3h-3z"/><path fill="#001010" d="M87 9h3v3h-3zM87 42h3v3h-3zM81 45h3v3h-3zM84 48h3v3h-3zM87 48h3v3h-3zM75 51h3v3h-3zM75 54h3v3h-3zM81 54h3v3h-3zM87 54h3v3h-3zM75 57h3v3h-3zM84 57h3v3h-3zM81 60h3v3h-3zM69 63h3v3h-3zM72 63h3v3h-3zM69 66h3v3h-3z"/><path fill="#302030" d="M33 12h3v3h-3zM15 15h3v3h-3zM45 15h3v3h-3zM60 18h3v3h-3zM63 18h3v3h-3zM75 21h3v3h-3zM69 33h3v3h-3zM63 57h3v3h-3z"/><path fill="#202020" d="M36 12h3v3h-3zM27 15h3v3h-3zM9 18h3v3h-3zM12 18h3v3h-3zM15 18h3v3h-3zM33 18h3v3h-3zM51 18h3v3h-3zM0 21h3v3h-3zM3 21h3v3h-3zM21 21h3v3h-3zM3 24h3v3h-3zM12 24h3v3h-3zM78 24h3v3h-3zM84 24h3v3h-3zM63 27h3v3h-3zM72 27h3v3h-3zM75 27h3v3h-3zM57 30h3v3h-3zM66 30h3v3h-3zM69 30h3v3h-3zM72 30h3v3h-3zM63 33h3v3h-3zM54 36h3v3h-3zM75 36h3v3h-3zM81 36h3v3h-3zM75 39h3v3h-3zM69 42h3v3h-3zM72 42h3v3h-3zM75 42h3v3h-3zM78 42h3v3h-3zM81 42h3v3h-3zM69 45h3v3h-3zM75 45h3v3h-3zM78 45h3v3h-3zM60 48h3v3h-3zM69 48h3v3h-3zM75 48h3v3h-3zM69 51h3v3h-3zM72 51h3v3h-3zM66 54h3v3h-3zM3 57h3v3h-3z"/><path fill="#101010" d="M39 12h3v3h-3zM60 12h3v3h-3zM66 12h3v3h-3zM0 15h3v3h-3zM9 15h3v3h-3zM12 15h3v3h-3zM18 15h3v3h-3zM24 15h3v3h-3zM39 15h3v3h-3zM63 15h3v3h-3zM0 18h3v3h-3zM57 18h3v3h-3zM75 18h3v3h-3zM87 18h3v3h-3zM15 21h3v3h-3zM15 24h3v3h-3zM3 27h3v3h-3zM12 27h3v3h-3zM90 27h3v3h-3zM12 30h3v3h-3zM51 30h3v3h-3zM81 30h3v3h-3zM84 30h3v3h-3zM66 33h3v3h-3zM60 36h3v3h-3zM66 36h3v3h-3zM87 36h3v3h-3zM6 39h3v3h-3zM9 39h3v3h-3zM72 39h3v3h-3zM78 39h3v3h-3zM81 39h3v3h-3zM84 39h3v3h-3zM87 39h3v3h-3zM84 45h3v3h-3zM54 48h3v3h-3zM66 48h3v3h-3zM72 48h3v3h-3zM78 48h3v3h-3zM90 48h3v3h-3zM45 51h3v3h-3zM48 51h3v3h-3zM63 51h3v3h-3zM66 51h3v3h-3zM78 51h3v3h-3zM36 54h3v3h-3zM60 54h3v3h-3zM12 57h3v3h-3zM45 57h3v3h-3zM48 57h3v3h-3zM60 57h3v3h-3zM51 60h3v3h-3zM33 63h3v3h-3zM36 63h3v3h-3zM42 63h3v3h-3zM57 63h3v3h-3zM12 66h3v3h-3zM39 66h3v3h-3zM42 66h3v3h-3zM51 66h3v3h-3zM57 66h3v3h-3zM0 69h3v3h-3zM33 69h3v3h-3zM39 69h3v3h-3zM42 69h3v3h-3zM51 69h3v3h-3zM54 69h3v3h-3z"/><path fill="#302040" d="M42 12h3v3h-3zM72 21h3v3h-3z"/><path fill="#303050" d="M72 12h3v3h-3zM69 15h3v3h-3zM78 15h3v3h-3zM81 15h3v3h-3zM90 15h3v3h-3zM66 18h3v3h-3zM81 24h3v3h-3z"/><path fill="#203050" d="M75 12h3v3h-3zM84 54h3v3h-3zM78 57h3v3h-3zM75 63h3v3h-3zM78 66h3v3h-3z"/><path fill="#f0c060" d="M21 15h3v3h-3zM18 18h3v3h-3zM24 18h3v3h-3zM30 18h3v3h-3zM36 21h3v3h-3zM87 21h3v3h-3zM30 30h3v3h-3zM39 30h3v3h-3zM54 30h3v3h-3zM51 33h3v3h-3zM30 39h3v3h-3zM18 42h3v3h-3zM30 51h3v3h-3zM18 63h3v3h-3zM81 69h3v3h-3z"/><path fill="#303030" d="M30 15h3v3h-3zM54 21h3v3h-3zM57 21h3v3h-3zM6 24h3v3h-3zM78 27h3v3h-3zM63 30h3v3h-3zM78 36h3v3h-3zM84 36h3v3h-3zM90 36h3v3h-3zM90 39h3v3h-3zM84 42h3v3h-3zM90 42h3v3h-3z"/><path fill="#403030" d="M33 15h3v3h-3zM36 15h3v3h-3zM0 27h3v3h-3zM48 27h3v3h-3zM3 30h3v3h-3zM0 33h3v3h-3zM3 33h3v3h-3zM3 36h3v3h-3zM69 36h3v3h-3zM63 39h3v3h-3z"/><path fill="#504050" d="M42 15h3v3h-3zM54 18h3v3h-3zM66 24h3v3h-3zM75 30h3v3h-3z"/><path fill="#404050" d="M51 15h3v3h-3zM84 21h3v3h-3zM90 21h3v3h-3zM75 33h3v3h-3z"/><path fill="#303040" d="M57 15h3v3h-3zM60 15h3v3h-3zM72 24h3v3h-3zM84 27h3v3h-3zM78 30h3v3h-3zM69 60h3v3h-3zM69 69h3v3h-3z"/><path fill="#403050" d="M66 15h3v3h-3zM69 21h3v3h-3z"/><path fill="#102030" d="M84 15h3v3h-3zM87 15h3v3h-3zM90 54h3v3h-3zM81 57h3v3h-3zM90 57h3v3h-3zM78 60h3v3h-3zM78 63h3v3h-3zM75 66h3v3h-3zM78 69h3v3h-3z"/><path fill="#302020" d="M21 18h3v3h-3zM12 21h3v3h-3zM45 21h3v3h-3zM6 27h3v3h-3zM9 27h3v3h-3zM0 30h3v3h-3zM6 30h3v3h-3zM6 33h3v3h-3zM48 33h3v3h-3zM54 33h3v3h-3zM57 33h3v3h-3zM72 36h3v3h-3zM3 39h3v3h-3zM60 39h3v3h-3zM66 39h3v3h-3zM69 39h3v3h-3zM60 45h3v3h-3zM72 45h3v3h-3zM57 51h3v3h-3zM6 54h3v3h-3z"/><path fill="#505040" d="M27 18h3v3h-3z"/><path fill="#504030" d="M36 18h3v3h-3zM42 24h3v3h-3zM45 24h3v3h-3zM0 36h3v3h-3zM12 36h3v3h-3z"/><path fill="#201010" d="M39 18h3v3h-3zM51 21h3v3h-3zM21 24h3v3h-3zM51 27h3v3h-3zM54 27h3v3h-3zM15 33h3v3h-3zM36 33h3v3h-3zM30 36h3v3h-3zM33 36h3v3h-3zM36 36h3v3h-3zM48 36h3v3h-3zM57 36h3v3h-3zM54 39h3v3h-3zM36 42h3v3h-3zM45 42h3v3h-3zM48 42h3v3h-3zM54 42h3v3h-3zM15 45h3v3h-3zM33 45h3v3h-3zM42 45h3v3h-3zM57 45h3v3h-3zM3 48h3v3h-3zM6 48h3v3h-3zM33 48h3v3h-3zM36 48h3v3h-3zM57 48h3v3h-3zM36 51h3v3h-3zM60 51h3v3h-3zM12 54h3v3h-3zM15 54h3v3h-3zM33 54h3v3h-3zM39 54h3v3h-3zM63 54h3v3h-3zM36 57h3v3h-3zM39 57h3v3h-3zM54 57h3v3h-3zM57 57h3v3h-3zM27 60h3v3h-3zM36 60h3v3h-3zM48 60h3v3h-3zM39 63h3v3h-3zM51 63h3v3h-3zM54 63h3v3h-3zM27 66h3v3h-3zM30 66h3v3h-3zM54 66h3v3h-3zM27 69h3v3h-3zM36 69h3v3h-3zM48 69h3v3h-3zM57 69h3v3h-3z"/><path fill="#605050" d="M42 18h3v3h-3z"/><path fill="#505050" d="M45 18h3v3h-3zM48 18h3v3h-3zM60 30h3v3h-3z"/><path fill="#201020" d="M69 18h3v3h-3zM0 24h3v3h-3zM57 24h3v3h-3zM60 24h3v3h-3zM66 57h3v3h-3z"/><path fill="#404060" d="M72 18h3v3h-3zM90 24h3v3h-3z"/><path fill="#203040" d="M84 18h3v3h-3zM84 51h3v3h-3zM87 51h3v3h-3zM90 51h3v3h-3zM78 54h3v3h-3z"/><path fill="#404040" d="M9 21h3v3h-3zM84 33h3v3h-3zM87 33h3v3h-3zM90 33h3v3h-3z"/><path fill="#404030" d="M18 21h3v3h-3zM39 21h3v3h-3zM48 24h3v3h-3z"/><path fill="#403020" d="M24 21h3v3h-3zM18 24h3v3h-3zM15 27h3v3h-3zM15 30h3v3h-3zM45 30h3v3h-3zM48 30h3v3h-3zM12 33h3v3h-3zM0 39h3v3h-3zM36 39h3v3h-3zM12 42h3v3h-3zM27 42h3v3h-3zM42 42h3v3h-3zM63 42h3v3h-3zM0 45h3v3h-3zM9 54h3v3h-3zM24 54h3v3h-3zM27 57h3v3h-3zM15 60h3v3h-3zM24 60h3v3h-3zM24 63h3v3h-3zM24 66h3v3h-3z"/><path fill="#606040" d="M27 21h3v3h-3z"/><path fill="#505030" d="M30 21h3v3h-3zM12 48h3v3h-3z"/><path fill="#605030" d="M33 21h3v3h-3zM21 27h3v3h-3zM24 27h3v3h-3zM27 27h3v3h-3zM39 27h3v3h-3zM24 30h3v3h-3zM39 33h3v3h-3zM42 33h3v3h-3zM15 36h3v3h-3zM18 36h3v3h-3zM9 42h3v3h-3zM18 51h3v3h-3z"/><path fill="#202010" d="M42 21h3v3h-3zM27 30h3v3h-3zM9 33h3v3h-3zM45 33h3v3h-3zM6 36h3v3h-3zM24 36h3v3h-3zM21 39h3v3h-3zM45 39h3v3h-3zM57 39h3v3h-3zM33 42h3v3h-3zM39 42h3v3h-3zM57 42h3v3h-3zM12 45h3v3h-3zM30 45h3v3h-3zM36 45h3v3h-3zM54 45h3v3h-3zM63 45h3v3h-3zM66 45h3v3h-3zM15 48h3v3h-3zM42 48h3v3h-3zM3 51h3v3h-3zM6 51h3v3h-3zM33 51h3v3h-3zM54 51h3v3h-3zM0 54h3v3h-3zM3 54h3v3h-3zM42 54h3v3h-3zM51 54h3v3h-3zM54 54h3v3h-3zM0 57h3v3h-3zM15 57h3v3h-3zM30 57h3v3h-3zM51 57h3v3h-3zM6 60h3v3h-3zM18 60h3v3h-3zM30 60h3v3h-3zM0 63h3v3h-3zM3 63h3v3h-3zM6 63h3v3h-3zM9 63h3v3h-3zM0 66h3v3h-3zM9 66h3v3h-3zM15 66h3v3h-3zM18 66h3v3h-3zM33 66h3v3h-3zM6 69h3v3h-3zM9 69h3v3h-3zM18 69h3v3h-3zM24 69h3v3h-3z"/><path fill="#504040" d="M48 21h3v3h-3zM9 24h3v3h-3zM57 27h3v3h-3zM60 27h3v3h-3zM60 33h3v3h-3zM63 36h3v3h-3z"/><path fill="#505060" d="M60 21h3v3h-3z"/><path fill="#404020" d="M24 24h3v3h-3zM30 33h3v3h-3zM27 36h3v3h-3zM24 45h3v3h-3zM21 48h3v3h-3zM15 51h3v3h-3zM18 57h3v3h-3z"/><path fill="#303020" d="M27 24h3v3h-3zM9 30h3v3h-3zM9 36h3v3h-3zM0 48h3v3h-3zM6 57h3v3h-3zM3 60h3v3h-3zM9 60h3v3h-3zM12 63h3v3h-3zM3 66h3v3h-3z"/><path fill="#807040" d="M30 24h3v3h-3zM33 27h3v3h-3zM21 33h3v3h-3z"/><path fill="#504020" d="M33 24h3v3h-3zM30 27h3v3h-3zM33 30h3v3h-3zM24 33h3v3h-3zM27 33h3v3h-3zM21 36h3v3h-3zM21 42h3v3h-3zM24 42h3v3h-3zM9 48h3v3h-3zM27 48h3v3h-3z"/><path fill="#706030" d="M36 24h3v3h-3zM18 45h3v3h-3z"/><path fill="#907050" d="M39 24h3v3h-3z"/><path fill="#706060" d="M51 24h3v3h-3z"/><path fill="#403040" d="M54 24h3v3h-3z"/><path fill="#706040" d="M18 27h3v3h-3zM42 30h3v3h-3zM18 33h3v3h-3z"/><path fill="#705030" d="M36 27h3v3h-3zM18 48h3v3h-3z"/><path fill="#806040" d="M42 27h3v3h-3zM21 30h3v3h-3z"/><path fill="#706050" d="M45 27h3v3h-3z"/><path fill="#d0e0f0" d="M87 27h3v3h-3zM72 33h3v3h-3zM3 42h3v3h-3z"/><path fill="#302010" d="M18 30h3v3h-3zM36 30h3v3h-3zM42 36h3v3h-3zM45 36h3v3h-3zM12 39h3v3h-3zM15 39h3v3h-3zM27 39h3v3h-3zM39 39h3v3h-3zM51 39h3v3h-3zM51 42h3v3h-3zM6 45h3v3h-3zM39 45h3v3h-3zM45 45h3v3h-3zM48 45h3v3h-3zM51 45h3v3h-3zM45 48h3v3h-3zM48 48h3v3h-3zM12 51h3v3h-3zM27 51h3v3h-3zM39 51h3v3h-3zM42 51h3v3h-3zM18 54h3v3h-3zM27 54h3v3h-3zM30 54h3v3h-3zM21 57h3v3h-3zM24 57h3v3h-3zM33 57h3v3h-3zM12 60h3v3h-3zM27 63h3v3h-3z"/><path fill="#604030" d="M33 33h3v3h-3zM39 36h3v3h-3z"/><path fill="#101000" d="M51 36h3v3h-3zM42 39h3v3h-3zM48 39h3v3h-3zM0 42h3v3h-3zM6 42h3v3h-3zM60 42h3v3h-3zM66 42h3v3h-3zM3 45h3v3h-3zM30 48h3v3h-3zM39 48h3v3h-3zM63 48h3v3h-3zM0 51h3v3h-3zM9 51h3v3h-3zM9 57h3v3h-3zM0 60h3v3h-3zM21 60h3v3h-3zM15 63h3v3h-3zM6 66h3v3h-3zM3 69h3v3h-3zM12 69h3v3h-3zM15 69h3v3h-3zM30 69h3v3h-3z"/><path fill="#303010" d="M18 39h3v3h-3zM9 45h3v3h-3zM21 63h3v3h-3zM21 66h3v3h-3zM21 69h3v3h-3z"/><path fill="#807030" d="M24 39h3v3h-3zM21 45h3v3h-3z"/><path fill="#403010" d="M33 39h3v3h-3zM30 42h3v3h-3zM27 45h3v3h-3z"/><path fill="#605020" d="M15 42h3v3h-3zM24 51h3v3h-3zM21 54h3v3h-3z"/><path fill="#102020" d="M87 45h3v3h-3zM81 48h3v3h-3zM72 54h3v3h-3zM72 57h3v3h-3zM72 60h3v3h-3z"/><path fill="#201000" d="M24 48h3v3h-3zM21 51h3v3h-3z"/><path fill="#000000" d="M51 48h3v3h-3zM51 51h3v3h-3zM45 54h3v3h-3zM48 54h3v3h-3zM57 54h3v3h-3zM39 60h3v3h-3zM42 60h3v3h-3zM45 60h3v3h-3zM57 60h3v3h-3zM60 60h3v3h-3zM45 63h3v3h-3zM48 63h3v3h-3zM60 63h3v3h-3zM36 66h3v3h-3zM45 66h3v3h-3zM48 66h3v3h-3zM60 66h3v3h-3zM45 69h3v3h-3zM60 69h3v3h-3z"/><path fill="#100000" d="M42 57h3v3h-3zM33 60h3v3h-3zM54 60h3v3h-3zM30 63h3v3h-3z"/><path fill="#102050" d="M84 63h3v3h-3zM87 63h3v3h-3zM90 66h3v3h-3zM87 69h3v3h-3z"/><path fill="#103060" d="M84 66h3v3h-3zM84 69h3v3h-3z"/></svg></div>
<div class="a" style="left:812px;top:190px;width:11px;height:11px;background:#6a6a9a;border:1px solid #fff;overflow:hidden"><div class="a" style="left:3px;top:5px;width:5px;height:3px;background:#fff"></div></div>
<div class="a" style="left:825px;top:190px;width:15px;height:11px;background:#6a6a9a;border:1px solid #fff;overflow:hidden"><div class="t" style="left:0;top:1.5px;width:13px;text-align:center;font-family:Liberation Mono;font-size:7.5px;font-weight:bold;color:#fff;letter-spacing:-0.6px">XMP</div></div>
<div class="a" style="left:842px;top:190px;width:19px;height:11px;background:#6a6a9a;border:1px solid #fff;overflow:hidden"><div class="t" style="left:0;top:1.5px;width:17px;text-align:center;font-family:Liberation Mono;font-size:7.5px;font-weight:bold;color:#fff;letter-spacing:-0.6px">EXIF</div></div>
<div class="a" style="left:863px;top:190px;width:17px;height:11px;background:#6a6a9a;border:1px solid #fff;overflow:hidden"><div class="t" style="left:0;top:1.5px;width:15px;text-align:center;font-family:Liberation Mono;font-size:7.5px;font-weight:bold;color:#fff;letter-spacing:-0.6px">GPS</div></div>
<div class="a" style="left:779px;top:204px;width:102px;height:15px;background:#ebebeb"></div>
<div class="a" style="left:779px;top:220px;width:102px;height:11px;background:#ece9c8"></div>
<div class="a" style="left:779px;top:232px;width:102px;height:11px;background:#ece9c8"></div>
<div class="t" style="left:779px;top:206.7px;width:102px;text-align:center;font-size:11px;letter-spacing:-0.3px;color:#0a0a2a">DJI_0018</div>
<div class="t" style="left:779px;top:221px;width:102px;text-align:center;font-size:10px;letter-spacing:-0.25px;color:#0a0a2a">JPEG TrueColor (v1.1)</div>
<div class="t" style="left:779px;top:233px;width:102px;text-align:center;font-size:9.5px;letter-spacing:-0.2px;color:#0a0a2a">4000x3000x24</div>
<div class="a" style="left:894px;top:130px;width:92px;height:69px;overflow:hidden;background:#444;box-shadow:3px 3px 3px rgba(0,0,0,.35)"><svg width="92" height="69" viewBox="0 0 92 69" style="display:block;filter:blur(0.5px)"><path fill="#601030" d="M0 0h3v3h-3zM3 0h3v3h-3zM0 6h3v3h-3z"/><path fill="#802040" d="M6 0h3v3h-3zM3 3h3v3h-3z"/><path fill="#401020" d="M9 0h3v3h-3zM0 12h3v3h-3zM6 12h3v3h-3z"/><path fill="#602030" d="M12 0h3v3h-3zM6 9h3v3h-3zM9 12h3v3h-3z"/><path fill="#501030" d="M15 0h3v3h-3z"/><path fill="#401030" d="M18 0h3v3h-3z"/><path fill="#301020" d="M21 0h3v3h-3zM18 3h3v3h-3zM18 6h3v3h-3zM12 9h3v3h-3zM15 9h3v3h-3zM9 15h3v3h-3zM12 15h3v3h-3zM6 18h3v3h-3zM0 24h3v3h-3z"/><path fill="#100010" d="M24 0h3v3h-3zM42 0h3v3h-3zM45 0h3v3h-3zM48 0h3v3h-3zM15 3h3v3h-3zM21 3h3v3h-3zM27 3h3v3h-3zM33 3h3v3h-3zM51 3h3v3h-3zM75 3h3v3h-3zM90 3h3v3h-3zM27 6h3v3h-3zM42 6h3v3h-3zM51 6h3v3h-3zM57 6h3v3h-3zM63 6h3v3h-3zM75 6h3v3h-3zM84 6h3v3h-3zM24 9h3v3h-3zM33 9h3v3h-3zM36 9h3v3h-3zM78 9h3v3h-3zM15 12h3v3h-3zM18 12h3v3h-3zM12 18h3v3h-3zM0 21h3v3h-3zM6 21h3v3h-3zM3 24h3v3h-3zM6 24h3v3h-3z"/><path fill="#201020" d="M27 0h3v3h-3zM30 0h3v3h-3zM24 3h3v3h-3zM30 3h3v3h-3zM36 3h3v3h-3zM42 3h3v3h-3zM45 3h3v3h-3zM21 6h3v3h-3zM30 6h3v3h-3zM39 6h3v3h-3zM21 9h3v3h-3zM30 9h3v3h-3zM39 9h3v3h-3zM42 9h3v3h-3zM45 9h3v3h-3zM48 9h3v3h-3zM51 9h3v3h-3zM69 9h3v3h-3zM21 12h3v3h-3zM24 12h3v3h-3zM51 15h3v3h-3zM66 15h3v3h-3zM87 21h3v3h-3z"/><path fill="#101020" d="M33 0h3v3h-3zM54 0h3v3h-3zM66 0h3v3h-3zM81 0h3v3h-3zM39 3h3v3h-3zM57 3h3v3h-3zM66 3h3v3h-3zM78 3h3v3h-3zM66 6h3v3h-3zM69 6h3v3h-3zM72 6h3v3h-3zM78 6h3v3h-3zM87 6h3v3h-3zM66 9h3v3h-3zM78 45h3v3h-3zM90 54h3v3h-3zM72 60h3v3h-3zM75 60h3v3h-3zM72 63h3v3h-3zM72 69h3v3h-3zM87 69h3v3h-3z"/><path fill="#000010" d="M36 0h3v3h-3zM39 0h3v3h-3zM51 0h3v3h-3zM57 0h3v3h-3zM69 0h3v3h-3zM75 0h3v3h-3zM33 6h3v3h-3zM48 6h3v3h-3zM54 6h3v3h-3zM60 9h3v3h-3z"/><path fill="#202040" d="M60 0h3v3h-3zM63 0h3v3h-3zM72 0h3v3h-3zM54 3h3v3h-3zM60 3h3v3h-3z"/><path fill="#201030" d="M78 0h3v3h-3zM84 0h3v3h-3zM87 0h3v3h-3zM48 3h3v3h-3zM63 3h3v3h-3zM69 3h3v3h-3zM72 3h3v3h-3zM84 3h3v3h-3zM87 3h3v3h-3zM36 6h3v3h-3zM45 6h3v3h-3zM60 6h3v3h-3zM81 6h3v3h-3zM90 6h3v3h-3zM84 9h3v3h-3zM90 9h3v3h-3zM78 12h3v3h-3zM81 12h3v3h-3z"/><path fill="#302040" d="M90 0h3v3h-3zM81 3h3v3h-3zM57 9h3v3h-3zM63 9h3v3h-3zM72 9h3v3h-3zM75 9h3v3h-3zM84 12h3v3h-3zM87 12h3v3h-3z"/><path fill="#f0c060" d="M0 3h3v3h-3zM87 9h3v3h-3zM39 15h3v3h-3zM60 15h3v3h-3zM30 18h3v3h-3zM33 24h3v3h-3zM81 27h3v3h-3zM87 27h3v3h-3zM21 30h3v3h-3zM45 30h3v3h-3zM48 30h3v3h-3zM72 30h3v3h-3zM0 33h3v3h-3zM30 33h3v3h-3zM9 36h3v3h-3zM21 36h3v3h-3zM24 36h3v3h-3zM30 36h3v3h-3zM21 39h3v3h-3zM3 45h3v3h-3zM30 51h3v3h-3zM90 51h3v3h-3zM15 54h3v3h-3zM6 57h3v3h-3zM27 57h3v3h-3zM42 57h3v3h-3zM30 63h3v3h-3zM42 63h3v3h-3zM75 63h3v3h-3zM27 66h3v3h-3zM9 69h3v3h-3z"/><path fill="#501020" d="M6 3h3v3h-3z"/><path fill="#300010" d="M9 3h3v3h-3zM9 6h3v3h-3z"/><path fill="#200010" d="M12 3h3v3h-3zM3 6h3v3h-3zM6 6h3v3h-3zM12 6h3v3h-3zM15 6h3v3h-3zM3 9h3v3h-3zM9 9h3v3h-3zM18 9h3v3h-3z"/><path fill="#301030" d="M24 6h3v3h-3z"/><path fill="#301010" d="M0 9h3v3h-3z"/><path fill="#302030" d="M27 9h3v3h-3zM36 12h3v3h-3zM60 12h3v3h-3zM72 12h3v3h-3zM57 15h3v3h-3zM63 15h3v3h-3zM72 15h3v3h-3zM57 18h3v3h-3zM60 18h3v3h-3zM72 18h3v3h-3zM75 18h3v3h-3zM78 18h3v3h-3zM81 18h3v3h-3zM84 18h3v3h-3zM90 18h3v3h-3zM81 21h3v3h-3zM81 36h3v3h-3z"/><path fill="#101010" d="M54 9h3v3h-3zM39 12h3v3h-3zM48 12h3v3h-3zM54 12h3v3h-3zM57 12h3v3h-3zM69 12h3v3h-3zM30 15h3v3h-3zM48 15h3v3h-3zM81 15h3v3h-3zM69 18h3v3h-3zM87 18h3v3h-3zM21 21h3v3h-3zM24 21h3v3h-3zM90 21h3v3h-3zM12 24h3v3h-3zM15 24h3v3h-3zM18 24h3v3h-3zM21 24h3v3h-3zM87 24h3v3h-3zM6 27h3v3h-3zM12 27h3v3h-3zM90 27h3v3h-3zM75 33h3v3h-3zM57 36h3v3h-3zM63 36h3v3h-3zM72 36h3v3h-3zM42 39h3v3h-3zM45 39h3v3h-3zM54 39h3v3h-3zM72 39h3v3h-3zM42 42h3v3h-3zM48 42h3v3h-3zM60 42h3v3h-3zM63 42h3v3h-3zM81 42h3v3h-3zM42 45h3v3h-3zM63 45h3v3h-3zM72 45h3v3h-3zM75 45h3v3h-3zM48 48h3v3h-3zM51 48h3v3h-3zM75 48h3v3h-3zM51 51h3v3h-3zM69 51h3v3h-3zM72 51h3v3h-3zM75 51h3v3h-3zM60 54h3v3h-3zM69 54h3v3h-3zM78 54h3v3h-3zM87 54h3v3h-3zM51 57h3v3h-3zM54 57h3v3h-3zM57 57h3v3h-3zM63 57h3v3h-3zM69 57h3v3h-3zM54 60h3v3h-3zM60 60h3v3h-3zM66 60h3v3h-3zM48 63h3v3h-3zM54 63h3v3h-3zM57 63h3v3h-3zM60 63h3v3h-3zM63 63h3v3h-3zM60 66h3v3h-3zM63 66h3v3h-3zM66 66h3v3h-3zM69 66h3v3h-3zM72 66h3v3h-3zM48 69h3v3h-3zM60 69h3v3h-3zM84 69h3v3h-3z"/><path fill="#202030" d="M81 9h3v3h-3zM84 15h3v3h-3zM90 15h3v3h-3zM78 42h3v3h-3zM84 42h3v3h-3zM90 42h3v3h-3zM84 45h3v3h-3zM90 45h3v3h-3zM81 48h3v3h-3zM87 48h3v3h-3zM87 51h3v3h-3zM81 54h3v3h-3zM87 57h3v3h-3zM90 57h3v3h-3zM84 60h3v3h-3zM90 60h3v3h-3zM84 63h3v3h-3zM87 63h3v3h-3zM90 63h3v3h-3zM75 66h3v3h-3zM87 66h3v3h-3zM90 66h3v3h-3zM90 69h3v3h-3z"/><path fill="#702040" d="M3 12h3v3h-3z"/><path fill="#201010" d="M12 12h3v3h-3zM30 12h3v3h-3zM33 12h3v3h-3zM0 15h3v3h-3zM18 15h3v3h-3zM21 15h3v3h-3zM9 18h3v3h-3zM39 18h3v3h-3zM33 21h3v3h-3zM45 21h3v3h-3zM9 24h3v3h-3zM78 24h3v3h-3zM27 27h3v3h-3zM78 27h3v3h-3zM18 30h3v3h-3zM51 30h3v3h-3zM60 30h3v3h-3zM66 30h3v3h-3zM60 39h3v3h-3zM66 39h3v3h-3zM75 42h3v3h-3zM54 51h3v3h-3zM63 51h3v3h-3zM39 57h3v3h-3z"/><path fill="#302020" d="M27 12h3v3h-3zM27 15h3v3h-3zM33 15h3v3h-3zM54 15h3v3h-3zM15 18h3v3h-3zM36 18h3v3h-3zM9 21h3v3h-3zM12 21h3v3h-3zM18 21h3v3h-3zM30 21h3v3h-3zM42 21h3v3h-3zM51 21h3v3h-3zM60 21h3v3h-3zM27 24h3v3h-3zM30 24h3v3h-3zM48 24h3v3h-3zM57 24h3v3h-3zM66 24h3v3h-3zM0 27h3v3h-3zM3 27h3v3h-3zM9 27h3v3h-3zM51 27h3v3h-3zM54 36h3v3h-3zM60 36h3v3h-3zM66 36h3v3h-3zM48 54h3v3h-3zM66 54h3v3h-3z"/><path fill="#202020" d="M42 12h3v3h-3zM45 12h3v3h-3zM51 12h3v3h-3zM66 12h3v3h-3zM54 18h3v3h-3zM69 21h3v3h-3zM78 21h3v3h-3zM84 24h3v3h-3zM90 24h3v3h-3zM54 30h3v3h-3zM81 30h3v3h-3zM90 33h3v3h-3zM78 36h3v3h-3zM87 36h3v3h-3zM90 36h3v3h-3zM48 39h3v3h-3zM75 39h3v3h-3zM69 42h3v3h-3zM69 45h3v3h-3zM78 48h3v3h-3zM66 51h3v3h-3zM63 54h3v3h-3zM72 54h3v3h-3zM66 57h3v3h-3zM69 60h3v3h-3zM57 69h3v3h-3zM66 69h3v3h-3zM69 69h3v3h-3z"/><path fill="#403040" d="M63 12h3v3h-3zM75 12h3v3h-3zM69 15h3v3h-3zM63 18h3v3h-3zM84 21h3v3h-3zM87 30h3v3h-3zM81 39h3v3h-3zM90 39h3v3h-3z"/><path fill="#403050" d="M90 12h3v3h-3zM75 15h3v3h-3zM78 15h3v3h-3zM87 15h3v3h-3z"/><path fill="#502030" d="M3 15h3v3h-3zM6 15h3v3h-3z"/><path fill="#402030" d="M15 15h3v3h-3zM24 15h3v3h-3zM0 18h3v3h-3zM18 18h3v3h-3zM3 21h3v3h-3z"/><path fill="#504040" d="M36 15h3v3h-3zM42 15h3v3h-3zM45 15h3v3h-3zM54 21h3v3h-3zM66 21h3v3h-3zM75 21h3v3h-3zM57 27h3v3h-3zM78 39h3v3h-3z"/><path fill="#502040" d="M3 18h3v3h-3z"/><path fill="#503030" d="M21 18h3v3h-3zM15 27h3v3h-3z"/><path fill="#403030" d="M24 18h3v3h-3zM27 18h3v3h-3zM42 18h3v3h-3zM45 18h3v3h-3zM15 21h3v3h-3zM48 21h3v3h-3zM57 21h3v3h-3zM63 21h3v3h-3zM72 21h3v3h-3zM60 24h3v3h-3zM72 24h3v3h-3zM75 24h3v3h-3zM54 27h3v3h-3zM60 27h3v3h-3zM63 27h3v3h-3zM66 27h3v3h-3zM69 27h3v3h-3zM72 27h3v3h-3zM75 27h3v3h-3zM75 30h3v3h-3zM54 33h3v3h-3zM69 36h3v3h-3zM75 36h3v3h-3zM57 39h3v3h-3z"/><path fill="#504030" d="M33 18h3v3h-3zM39 21h3v3h-3zM36 24h3v3h-3zM45 24h3v3h-3zM51 24h3v3h-3zM18 27h3v3h-3zM33 27h3v3h-3zM39 27h3v3h-3zM39 30h3v3h-3zM57 30h3v3h-3zM33 33h3v3h-3zM36 33h3v3h-3zM69 39h3v3h-3z"/><path fill="#303030" d="M48 18h3v3h-3zM78 30h3v3h-3zM69 33h3v3h-3zM72 33h3v3h-3zM81 33h3v3h-3zM84 33h3v3h-3zM84 36h3v3h-3zM84 39h3v3h-3zM72 48h3v3h-3zM78 51h3v3h-3z"/><path fill="#604050" d="M51 18h3v3h-3zM69 24h3v3h-3z"/><path fill="#d0e0f0" d="M66 18h3v3h-3zM81 24h3v3h-3zM90 30h3v3h-3zM51 36h3v3h-3zM24 45h3v3h-3zM15 51h3v3h-3zM6 63h3v3h-3zM3 66h3v3h-3zM12 69h3v3h-3z"/><path fill="#202010" d="M27 21h3v3h-3zM39 24h3v3h-3zM30 27h3v3h-3zM36 27h3v3h-3zM45 27h3v3h-3zM0 30h3v3h-3zM24 30h3v3h-3zM27 30h3v3h-3zM30 30h3v3h-3zM36 30h3v3h-3zM21 33h3v3h-3zM63 33h3v3h-3zM12 36h3v3h-3zM36 36h3v3h-3zM36 39h3v3h-3zM51 39h3v3h-3zM51 42h3v3h-3zM54 42h3v3h-3zM57 42h3v3h-3zM27 45h3v3h-3zM33 45h3v3h-3zM57 45h3v3h-3zM60 45h3v3h-3zM66 45h3v3h-3zM45 48h3v3h-3zM54 48h3v3h-3zM57 48h3v3h-3zM60 48h3v3h-3zM63 48h3v3h-3zM69 48h3v3h-3zM21 51h3v3h-3zM39 51h3v3h-3zM48 51h3v3h-3zM45 54h3v3h-3zM51 54h3v3h-3zM48 57h3v3h-3zM18 60h3v3h-3zM45 60h3v3h-3zM48 60h3v3h-3zM51 60h3v3h-3zM57 60h3v3h-3zM63 60h3v3h-3zM21 63h3v3h-3zM27 63h3v3h-3zM51 63h3v3h-3zM39 66h3v3h-3zM48 66h3v3h-3zM51 66h3v3h-3zM54 66h3v3h-3zM27 69h3v3h-3zM39 69h3v3h-3zM42 69h3v3h-3zM51 69h3v3h-3zM63 69h3v3h-3z"/><path fill="#806050" d="M36 21h3v3h-3z"/><path fill="#605040" d="M24 24h3v3h-3zM54 24h3v3h-3zM42 27h3v3h-3zM33 30h3v3h-3z"/><path fill="#807060" d="M42 24h3v3h-3z"/><path fill="#706060" d="M63 24h3v3h-3z"/><path fill="#403020" d="M21 27h3v3h-3zM6 33h3v3h-3zM45 33h3v3h-3zM42 36h3v3h-3zM39 39h3v3h-3zM33 48h3v3h-3zM39 54h3v3h-3zM42 60h3v3h-3zM33 66h3v3h-3z"/><path fill="#705040" d="M24 27h3v3h-3z"/><path fill="#706050" d="M48 27h3v3h-3zM42 30h3v3h-3zM39 33h3v3h-3z"/><path fill="#503040" d="M84 27h3v3h-3z"/><path fill="#604030" d="M3 30h3v3h-3z"/><path fill="#402020" d="M6 30h3v3h-3z"/><path fill="#302010" d="M9 30h3v3h-3zM12 30h3v3h-3zM15 30h3v3h-3zM15 33h3v3h-3zM0 36h3v3h-3zM3 39h3v3h-3zM15 39h3v3h-3zM12 42h3v3h-3zM18 42h3v3h-3zM27 42h3v3h-3zM0 45h3v3h-3zM12 45h3v3h-3zM18 45h3v3h-3zM0 48h3v3h-3zM6 48h3v3h-3zM15 48h3v3h-3zM42 48h3v3h-3zM0 51h3v3h-3zM9 51h3v3h-3zM9 57h3v3h-3zM33 60h3v3h-3zM36 60h3v3h-3zM33 69h3v3h-3zM45 69h3v3h-3z"/><path fill="#605050" d="M63 30h3v3h-3zM69 30h3v3h-3z"/><path fill="#504050" d="M84 30h3v3h-3zM87 33h3v3h-3zM87 39h3v3h-3z"/><path fill="#705030" d="M3 33h3v3h-3z"/><path fill="#503020" d="M9 33h3v3h-3z"/><path fill="#806030" d="M12 33h3v3h-3zM6 36h3v3h-3z"/><path fill="#504020" d="M18 33h3v3h-3zM27 33h3v3h-3zM3 36h3v3h-3zM30 42h3v3h-3zM30 45h3v3h-3zM36 45h3v3h-3zM18 54h3v3h-3zM21 54h3v3h-3zM18 57h3v3h-3zM33 63h3v3h-3z"/><path fill="#403010" d="M24 33h3v3h-3zM27 36h3v3h-3zM18 39h3v3h-3zM24 39h3v3h-3zM0 42h3v3h-3zM3 42h3v3h-3zM9 42h3v3h-3zM24 48h3v3h-3zM3 54h3v3h-3zM12 54h3v3h-3zM3 57h3v3h-3zM24 57h3v3h-3zM3 60h3v3h-3zM0 63h3v3h-3zM12 63h3v3h-3zM6 66h3v3h-3zM12 66h3v3h-3z"/><path fill="#505030" d="M42 33h3v3h-3z"/><path fill="#303020" d="M48 33h3v3h-3zM51 33h3v3h-3zM57 33h3v3h-3zM60 33h3v3h-3zM66 33h3v3h-3zM48 36h3v3h-3zM39 42h3v3h-3zM39 45h3v3h-3zM51 45h3v3h-3zM54 45h3v3h-3zM39 48h3v3h-3zM45 51h3v3h-3zM60 51h3v3h-3zM45 57h3v3h-3zM45 63h3v3h-3zM45 66h3v3h-3zM54 69h3v3h-3z"/><path fill="#404040" d="M78 33h3v3h-3z"/><path fill="#907030" d="M15 36h3v3h-3z"/><path fill="#806020" d="M18 36h3v3h-3zM9 39h3v3h-3zM9 60h3v3h-3z"/><path fill="#303010" d="M33 36h3v3h-3zM30 39h3v3h-3zM27 48h3v3h-3zM36 54h3v3h-3zM33 57h3v3h-3zM39 60h3v3h-3zM30 66h3v3h-3zM36 66h3v3h-3zM42 66h3v3h-3zM30 69h3v3h-3z"/><path fill="#404020" d="M39 36h3v3h-3zM33 42h3v3h-3zM36 48h3v3h-3zM33 54h3v3h-3zM42 54h3v3h-3zM21 57h3v3h-3zM21 60h3v3h-3zM24 60h3v3h-3zM24 63h3v3h-3zM36 63h3v3h-3zM21 69h3v3h-3zM36 69h3v3h-3z"/><path fill="#404030" d="M45 36h3v3h-3zM63 39h3v3h-3zM72 42h3v3h-3zM45 45h3v3h-3z"/><path fill="#604020" d="M0 39h3v3h-3z"/><path fill="#705020" d="M6 39h3v3h-3zM15 42h3v3h-3zM21 42h3v3h-3zM24 42h3v3h-3zM6 45h3v3h-3zM12 48h3v3h-3zM12 57h3v3h-3zM12 60h3v3h-3z"/><path fill="#a07030" d="M12 39h3v3h-3zM0 54h3v3h-3zM9 63h3v3h-3zM9 66h3v3h-3z"/><path fill="#605020" d="M27 39h3v3h-3zM6 42h3v3h-3zM18 48h3v3h-3zM21 48h3v3h-3zM30 48h3v3h-3zM27 51h3v3h-3zM15 63h3v3h-3zM18 63h3v3h-3zM18 66h3v3h-3zM15 69h3v3h-3z"/><path fill="#605030" d="M33 39h3v3h-3zM30 54h3v3h-3z"/><path fill="#606030" d="M36 42h3v3h-3zM21 66h3v3h-3zM24 66h3v3h-3z"/><path fill="#101000" d="M45 42h3v3h-3zM66 42h3v3h-3zM48 45h3v3h-3zM66 48h3v3h-3zM36 51h3v3h-3zM42 51h3v3h-3zM30 57h3v3h-3zM36 57h3v3h-3zM39 63h3v3h-3zM24 69h3v3h-3z"/><path fill="#303040" d="M87 42h3v3h-3zM81 45h3v3h-3zM87 45h3v3h-3zM90 48h3v3h-3zM75 54h3v3h-3z"/><path fill="#b08030" d="M9 45h3v3h-3zM15 45h3v3h-3zM0 57h3v3h-3zM3 63h3v3h-3z"/><path fill="#907020" d="M21 45h3v3h-3zM9 48h3v3h-3zM12 51h3v3h-3z"/><path fill="#c08030" d="M3 48h3v3h-3z"/><path fill="#404050" d="M84 48h3v3h-3z"/><path fill="#504010" d="M3 51h3v3h-3zM9 54h3v3h-3z"/><path fill="#c09030" d="M6 51h3v3h-3z"/><path fill="#a08030" d="M18 51h3v3h-3zM15 57h3v3h-3z"/><path fill="#706020" d="M24 51h3v3h-3zM15 66h3v3h-3z"/><path fill="#201000" d="M33 51h3v3h-3z"/><path fill="#100000" d="M57 51h3v3h-3z"/><path fill="#304050" d="M81 51h3v3h-3zM84 51h3v3h-3zM84 54h3v3h-3zM84 57h3v3h-3zM87 60h3v3h-3z"/><path fill="#d09030" d="M6 54h3v3h-3z"/><path fill="#202000" d="M24 54h3v3h-3z"/><path fill="#505020" d="M27 54h3v3h-3zM27 60h3v3h-3zM30 60h3v3h-3z"/><path fill="#000000" d="M54 54h3v3h-3zM57 54h3v3h-3zM60 57h3v3h-3zM66 63h3v3h-3zM69 63h3v3h-3zM57 66h3v3h-3z"/><path fill="#203030" d="M72 57h3v3h-3zM75 69h3v3h-3z"/><path fill="#001010" d="M75 57h3v3h-3zM78 66h3v3h-3zM78 69h3v3h-3z"/><path fill="#102020" d="M78 57h3v3h-3zM78 60h3v3h-3zM78 63h3v3h-3z"/><path fill="#303050" d="M81 57h3v3h-3zM81 66h3v3h-3z"/><path fill="#906020" d="M0 60h3v3h-3z"/><path fill="#e0a040" d="M6 60h3v3h-3zM6 69h3v3h-3z"/><path fill="#908030" d="M15 60h3v3h-3z"/><path fill="#102030" d="M81 60h3v3h-3zM81 63h3v3h-3z"/><path fill="#604010" d="M0 66h3v3h-3zM0 69h3v3h-3zM3 69h3v3h-3z"/><path fill="#203040" d="M84 66h3v3h-3zM81 69h3v3h-3z"/><path fill="#807030" d="M18 69h3v3h-3z"/></svg></div>
<div class="a" style="left:922px;top:190px;width:11px;height:11px;background:#6a6a9a;border:1px solid #fff;overflow:hidden"><div class="a" style="left:3px;top:5px;width:5px;height:3px;background:#fff"></div></div>
<div class="a" style="left:935px;top:190px;width:15px;height:11px;background:#6a6a9a;border:1px solid #fff;overflow:hidden"><div class="t" style="left:0;top:1.5px;width:13px;text-align:center;font-family:Liberation Mono;font-size:7.5px;font-weight:bold;color:#fff;letter-spacing:-0.6px">XMP</div></div>
<div class="a" style="left:952px;top:190px;width:19px;height:11px;background:#6a6a9a;border:1px solid #fff;overflow:hidden"><div class="t" style="left:0;top:1.5px;width:17px;text-align:center;font-family:Liberation Mono;font-size:7.5px;font-weight:bold;color:#fff;letter-spacing:-0.6px">EXIF</div></div>
<div class="a" style="left:973px;top:190px;width:17px;height:11px;background:#6a6a9a;border:1px solid #fff;overflow:hidden"><div class="t" style="left:0;top:1.5px;width:15px;text-align:center;font-family:Liberation Mono;font-size:7.5px;font-weight:bold;color:#fff;letter-spacing:-0.6px">GPS</div></div>
<div class="a" style="left:889px;top:204px;width:102px;height:15px;background:#ebebeb"></div>
<div class="a" style="left:889px;top:220px;width:102px;height:11px;background:#ece9c8"></div>
<div class="a" style="left:889px;top:232px;width:102px;height:11px;background:#ece9c8"></div>
<div class="t" style="left:889px;top:206.7px;width:102px;text-align:center;font-size:11px;letter-spacing:-0.3px;color:#0a0a2a">DJI_0019</div>
<div class="t" style="left:889px;top:221px;width:102px;text-align:center;font-size:10px;letter-spacing:-0.25px;color:#0a0a2a">JPEG TrueColor (v1.1)</div>
<div class="t" style="left:889px;top:233px;width:102px;text-align:center;font-size:9.5px;letter-spacing:-0.2px;color:#0a0a2a">4000x3000x24</div>
<div class="a" style="left:1004px;top:130px;width:92px;height:69px;overflow:hidden;background:#444;box-shadow:3px 3px 3px rgba(0,0,0,.35)"><svg width="92" height="69" viewBox="0 0 92 69" style="display:block;filter:blur(0.5px)"><path fill="#000010" d="M0 0h3v3h-3zM6 0h3v3h-3zM9 0h3v3h-3zM27 0h3v3h-3zM66 0h3v3h-3zM87 0h3v3h-3zM0 3h3v3h-3zM9 3h3v3h-3zM24 3h3v3h-3zM27 3h3v3h-3zM30 3h3v3h-3zM57 3h3v3h-3zM75 3h3v3h-3zM87 3h3v3h-3zM9 6h3v3h-3zM12 6h3v3h-3zM18 6h3v3h-3zM78 6h3v3h-3zM87 6h3v3h-3zM0 9h3v3h-3zM81 9h3v3h-3zM87 9h3v3h-3zM81 12h3v3h-3zM90 12h3v3h-3z"/><path fill="#101020" d="M3 0h3v3h-3zM15 0h3v3h-3zM21 0h3v3h-3zM33 0h3v3h-3zM36 0h3v3h-3zM54 0h3v3h-3zM57 0h3v3h-3zM81 0h3v3h-3zM84 0h3v3h-3zM90 0h3v3h-3zM3 3h3v3h-3zM6 3h3v3h-3zM33 3h3v3h-3zM45 3h3v3h-3zM54 3h3v3h-3zM60 3h3v3h-3zM69 3h3v3h-3zM72 3h3v3h-3zM78 3h3v3h-3zM81 3h3v3h-3zM90 3h3v3h-3zM3 6h3v3h-3zM15 6h3v3h-3zM27 6h3v3h-3zM33 6h3v3h-3zM36 6h3v3h-3zM57 6h3v3h-3zM60 6h3v3h-3zM63 6h3v3h-3zM72 6h3v3h-3zM75 6h3v3h-3zM81 6h3v3h-3zM84 6h3v3h-3zM90 6h3v3h-3zM3 9h3v3h-3zM6 9h3v3h-3zM9 9h3v3h-3zM12 9h3v3h-3zM24 9h3v3h-3zM42 9h3v3h-3zM66 9h3v3h-3zM72 9h3v3h-3zM78 9h3v3h-3zM84 9h3v3h-3zM3 12h3v3h-3zM6 12h3v3h-3zM84 12h3v3h-3zM87 12h3v3h-3z"/><path fill="#101030" d="M12 0h3v3h-3zM18 0h3v3h-3zM69 0h3v3h-3zM72 0h3v3h-3zM18 3h3v3h-3z"/><path fill="#f0c060" d="M24 0h3v3h-3zM36 9h3v3h-3zM27 12h3v3h-3zM24 18h3v3h-3zM57 18h3v3h-3zM51 21h3v3h-3zM63 24h3v3h-3zM24 27h3v3h-3zM36 27h3v3h-3zM66 27h3v3h-3zM15 30h3v3h-3zM27 30h3v3h-3zM54 30h3v3h-3zM60 30h3v3h-3zM9 33h3v3h-3zM51 33h3v3h-3zM30 36h3v3h-3zM48 36h3v3h-3zM51 36h3v3h-3zM60 36h3v3h-3zM66 36h3v3h-3zM15 39h3v3h-3zM48 39h3v3h-3zM3 42h3v3h-3zM9 45h3v3h-3zM51 45h3v3h-3zM72 45h3v3h-3zM87 45h3v3h-3zM63 48h3v3h-3zM3 51h3v3h-3zM24 51h3v3h-3zM57 51h3v3h-3zM51 54h3v3h-3zM30 57h3v3h-3zM60 57h3v3h-3zM45 60h3v3h-3z"/><path fill="#202040" d="M30 0h3v3h-3zM63 3h3v3h-3zM66 3h3v3h-3z"/><path fill="#202030" d="M39 0h3v3h-3zM42 0h3v3h-3zM60 0h3v3h-3zM63 0h3v3h-3zM75 0h3v3h-3zM78 0h3v3h-3zM12 3h3v3h-3zM15 3h3v3h-3zM21 3h3v3h-3zM36 3h3v3h-3zM39 3h3v3h-3zM42 3h3v3h-3zM51 3h3v3h-3zM84 3h3v3h-3zM0 6h3v3h-3zM6 6h3v3h-3zM21 6h3v3h-3zM39 6h3v3h-3zM42 6h3v3h-3zM48 6h3v3h-3zM66 6h3v3h-3zM18 9h3v3h-3zM21 9h3v3h-3zM69 9h3v3h-3zM90 9h3v3h-3zM9 12h3v3h-3zM21 12h3v3h-3z"/><path fill="#303040" d="M45 0h3v3h-3zM51 0h3v3h-3zM45 6h3v3h-3zM51 6h3v3h-3zM54 6h3v3h-3zM30 9h3v3h-3zM33 9h3v3h-3zM63 9h3v3h-3z"/><path fill="#101010" d="M48 0h3v3h-3zM48 3h3v3h-3zM24 6h3v3h-3zM30 6h3v3h-3zM69 6h3v3h-3zM15 9h3v3h-3zM27 9h3v3h-3zM45 9h3v3h-3zM51 9h3v3h-3zM75 9h3v3h-3zM24 12h3v3h-3zM33 12h3v3h-3zM48 12h3v3h-3zM63 12h3v3h-3zM66 12h3v3h-3zM69 12h3v3h-3zM18 15h3v3h-3zM72 15h3v3h-3zM75 15h3v3h-3zM81 15h3v3h-3zM12 18h3v3h-3zM18 18h3v3h-3zM27 18h3v3h-3zM90 18h3v3h-3zM6 24h3v3h-3zM75 60h3v3h-3zM87 60h3v3h-3zM72 63h3v3h-3zM78 66h3v3h-3z"/><path fill="#202020" d="M39 9h3v3h-3zM54 9h3v3h-3zM57 9h3v3h-3zM12 12h3v3h-3zM15 12h3v3h-3zM45 12h3v3h-3zM78 12h3v3h-3zM3 15h3v3h-3zM9 15h3v3h-3zM15 15h3v3h-3zM21 15h3v3h-3zM24 15h3v3h-3zM69 15h3v3h-3zM78 15h3v3h-3zM15 18h3v3h-3zM78 18h3v3h-3z"/><path fill="#403040" d="M48 9h3v3h-3zM30 12h3v3h-3z"/><path fill="#302030" d="M60 9h3v3h-3zM0 15h3v3h-3zM87 15h3v3h-3z"/><path fill="#201020" d="M0 12h3v3h-3zM39 12h3v3h-3zM42 12h3v3h-3zM75 12h3v3h-3z"/><path fill="#100010" d="M18 12h3v3h-3z"/><path fill="#404040" d="M36 12h3v3h-3z"/><path fill="#504030" d="M51 12h3v3h-3zM36 18h3v3h-3zM18 21h3v3h-3zM21 21h3v3h-3z"/><path fill="#404030" d="M54 12h3v3h-3zM27 15h3v3h-3zM33 18h3v3h-3zM15 21h3v3h-3z"/><path fill="#302020" d="M57 12h3v3h-3zM60 12h3v3h-3zM30 15h3v3h-3zM36 15h3v3h-3zM30 18h3v3h-3zM75 18h3v3h-3zM90 21h3v3h-3z"/><path fill="#303030" d="M72 12h3v3h-3zM12 15h3v3h-3z"/><path fill="#000000" d="M6 15h3v3h-3z"/><path fill="#201010" d="M33 15h3v3h-3zM51 15h3v3h-3zM0 18h3v3h-3zM3 18h3v3h-3zM6 18h3v3h-3zM39 18h3v3h-3zM63 18h3v3h-3zM39 21h3v3h-3zM81 24h3v3h-3zM60 54h3v3h-3zM0 57h3v3h-3zM3 57h3v3h-3zM51 57h3v3h-3zM6 60h3v3h-3zM9 60h3v3h-3zM21 60h3v3h-3zM60 60h3v3h-3zM12 63h3v3h-3zM57 63h3v3h-3zM66 63h3v3h-3zM9 66h3v3h-3zM15 66h3v3h-3zM6 69h3v3h-3zM9 69h3v3h-3zM15 69h3v3h-3zM51 69h3v3h-3zM60 69h3v3h-3z"/><path fill="#504040" d="M39 15h3v3h-3z"/><path fill="#303020" d="M42 15h3v3h-3zM63 15h3v3h-3zM21 18h3v3h-3zM27 21h3v3h-3zM72 21h3v3h-3zM84 57h3v3h-3zM87 57h3v3h-3zM90 57h3v3h-3zM84 63h3v3h-3zM90 63h3v3h-3zM87 66h3v3h-3zM90 66h3v3h-3zM78 69h3v3h-3z"/><path fill="#605040" d="M45 15h3v3h-3z"/><path fill="#403020" d="M48 15h3v3h-3zM60 15h3v3h-3zM42 18h3v3h-3zM72 18h3v3h-3zM24 21h3v3h-3zM30 21h3v3h-3zM36 21h3v3h-3zM66 21h3v3h-3zM69 21h3v3h-3zM27 24h3v3h-3zM36 24h3v3h-3zM72 24h3v3h-3zM84 27h3v3h-3zM84 48h3v3h-3zM84 54h3v3h-3zM12 57h3v3h-3zM54 57h3v3h-3zM75 57h3v3h-3zM78 57h3v3h-3zM66 60h3v3h-3zM72 60h3v3h-3zM15 63h3v3h-3zM51 63h3v3h-3zM63 63h3v3h-3zM75 66h3v3h-3zM66 69h3v3h-3z"/><path fill="#706040" d="M54 15h3v3h-3z"/><path fill="#705040" d="M57 15h3v3h-3z"/><path fill="#403030" d="M66 15h3v3h-3z"/><path fill="#100000" d="M84 15h3v3h-3zM90 15h3v3h-3zM15 60h3v3h-3zM9 63h3v3h-3zM3 66h3v3h-3zM6 66h3v3h-3z"/><path fill="#101000" d="M9 18h3v3h-3zM84 18h3v3h-3zM0 21h3v3h-3zM3 21h3v3h-3zM12 21h3v3h-3zM87 21h3v3h-3zM9 24h3v3h-3zM15 24h3v3h-3zM18 24h3v3h-3zM78 24h3v3h-3zM84 24h3v3h-3zM90 24h3v3h-3zM84 30h3v3h-3zM90 30h3v3h-3zM87 51h3v3h-3zM3 54h3v3h-3zM90 54h3v3h-3zM66 57h3v3h-3zM72 57h3v3h-3zM81 57h3v3h-3zM0 60h3v3h-3zM3 60h3v3h-3zM24 60h3v3h-3zM57 60h3v3h-3zM69 60h3v3h-3zM0 63h3v3h-3zM21 63h3v3h-3zM69 63h3v3h-3zM81 63h3v3h-3zM0 66h3v3h-3zM12 66h3v3h-3zM60 66h3v3h-3zM3 69h3v3h-3zM24 69h3v3h-3zM54 69h3v3h-3zM57 69h3v3h-3zM72 69h3v3h-3zM90 69h3v3h-3z"/><path fill="#806040" d="M45 18h3v3h-3z"/><path fill="#504020" d="M48 18h3v3h-3zM63 21h3v3h-3zM24 24h3v3h-3zM3 27h3v3h-3zM6 27h3v3h-3zM27 27h3v3h-3zM33 27h3v3h-3zM69 27h3v3h-3zM72 27h3v3h-3zM18 30h3v3h-3zM81 30h3v3h-3zM90 33h3v3h-3zM84 39h3v3h-3zM81 45h3v3h-3zM90 45h3v3h-3zM78 48h3v3h-3zM72 51h3v3h-3zM75 51h3v3h-3zM15 54h3v3h-3zM87 54h3v3h-3zM51 60h3v3h-3zM30 66h3v3h-3zM45 66h3v3h-3zM57 66h3v3h-3zM45 69h3v3h-3z"/><path fill="#907040" d="M51 18h3v3h-3zM60 21h3v3h-3z"/><path fill="#403010" d="M54 18h3v3h-3zM57 21h3v3h-3zM54 24h3v3h-3zM12 27h3v3h-3zM15 27h3v3h-3zM78 27h3v3h-3zM21 30h3v3h-3zM51 30h3v3h-3zM72 30h3v3h-3zM48 33h3v3h-3zM0 36h3v3h-3zM6 36h3v3h-3zM24 36h3v3h-3zM42 36h3v3h-3zM18 39h3v3h-3zM42 39h3v3h-3zM45 39h3v3h-3zM42 42h3v3h-3zM45 42h3v3h-3zM57 42h3v3h-3zM18 45h3v3h-3zM0 48h3v3h-3zM12 48h3v3h-3zM15 48h3v3h-3zM24 48h3v3h-3zM36 48h3v3h-3zM54 48h3v3h-3zM33 51h3v3h-3zM48 51h3v3h-3zM51 51h3v3h-3zM12 54h3v3h-3zM30 54h3v3h-3zM36 54h3v3h-3zM48 54h3v3h-3zM66 54h3v3h-3zM57 57h3v3h-3zM33 63h3v3h-3zM27 69h3v3h-3z"/><path fill="#605030" d="M60 18h3v3h-3zM21 24h3v3h-3zM81 51h3v3h-3zM90 51h3v3h-3zM51 66h3v3h-3z"/><path fill="#202010" d="M66 18h3v3h-3zM69 18h3v3h-3zM81 18h3v3h-3zM87 18h3v3h-3zM6 21h3v3h-3zM9 21h3v3h-3zM33 21h3v3h-3zM75 21h3v3h-3zM81 21h3v3h-3zM84 21h3v3h-3zM0 24h3v3h-3zM87 24h3v3h-3zM9 27h3v3h-3zM30 27h3v3h-3zM84 36h3v3h-3zM81 39h3v3h-3zM90 39h3v3h-3zM84 42h3v3h-3zM69 51h3v3h-3zM9 57h3v3h-3zM21 57h3v3h-3zM48 57h3v3h-3zM30 60h3v3h-3zM54 60h3v3h-3zM78 60h3v3h-3zM81 60h3v3h-3zM84 60h3v3h-3zM90 60h3v3h-3zM18 63h3v3h-3zM75 63h3v3h-3zM78 63h3v3h-3zM87 63h3v3h-3zM18 66h3v3h-3zM24 66h3v3h-3zM69 66h3v3h-3zM81 66h3v3h-3zM84 66h3v3h-3zM69 69h3v3h-3zM75 69h3v3h-3zM81 69h3v3h-3zM84 69h3v3h-3zM87 69h3v3h-3z"/><path fill="#303010" d="M42 21h3v3h-3zM39 24h3v3h-3zM81 27h3v3h-3zM75 30h3v3h-3zM39 33h3v3h-3zM87 39h3v3h-3zM84 45h3v3h-3zM84 51h3v3h-3zM9 54h3v3h-3zM63 57h3v3h-3z"/><path fill="#604020" d="M45 21h3v3h-3zM42 24h3v3h-3zM12 33h3v3h-3zM75 33h3v3h-3zM78 36h3v3h-3zM9 51h3v3h-3zM27 54h3v3h-3zM45 57h3v3h-3zM42 60h3v3h-3zM24 63h3v3h-3zM27 63h3v3h-3zM42 63h3v3h-3zM42 69h3v3h-3z"/><path fill="#605020" d="M48 21h3v3h-3zM60 24h3v3h-3zM24 30h3v3h-3zM69 30h3v3h-3zM78 30h3v3h-3zM87 30h3v3h-3zM0 33h3v3h-3zM15 33h3v3h-3zM33 39h3v3h-3zM36 39h3v3h-3zM39 39h3v3h-3zM57 48h3v3h-3zM60 48h3v3h-3zM81 48h3v3h-3zM21 54h3v3h-3zM33 66h3v3h-3z"/><path fill="#906030" d="M54 21h3v3h-3zM45 24h3v3h-3zM42 57h3v3h-3z"/><path fill="#302010" d="M78 21h3v3h-3zM30 24h3v3h-3zM48 24h3v3h-3zM66 24h3v3h-3zM0 27h3v3h-3zM39 27h3v3h-3zM42 27h3v3h-3zM75 27h3v3h-3zM87 27h3v3h-3zM90 27h3v3h-3zM6 30h3v3h-3zM63 30h3v3h-3zM66 30h3v3h-3zM33 33h3v3h-3zM81 33h3v3h-3zM87 36h3v3h-3zM90 36h3v3h-3zM9 39h3v3h-3zM78 39h3v3h-3zM78 45h3v3h-3zM66 51h3v3h-3zM78 51h3v3h-3zM0 54h3v3h-3zM69 54h3v3h-3zM81 54h3v3h-3zM6 57h3v3h-3zM18 57h3v3h-3zM24 57h3v3h-3zM69 57h3v3h-3zM12 60h3v3h-3zM18 60h3v3h-3zM33 60h3v3h-3zM48 60h3v3h-3zM3 63h3v3h-3zM6 63h3v3h-3zM36 63h3v3h-3zM48 63h3v3h-3zM54 63h3v3h-3zM60 63h3v3h-3zM21 66h3v3h-3zM42 66h3v3h-3zM66 66h3v3h-3zM72 66h3v3h-3zM0 69h3v3h-3zM12 69h3v3h-3zM18 69h3v3h-3zM21 69h3v3h-3zM63 69h3v3h-3z"/><path fill="#d0e0f0" d="M3 24h3v3h-3zM33 24h3v3h-3zM75 24h3v3h-3zM24 33h3v3h-3zM75 39h3v3h-3zM0 42h3v3h-3zM66 42h3v3h-3zM33 48h3v3h-3z"/><path fill="#404020" d="M12 24h3v3h-3zM78 54h3v3h-3z"/><path fill="#504010" d="M51 24h3v3h-3zM6 33h3v3h-3zM30 33h3v3h-3zM36 36h3v3h-3zM39 36h3v3h-3zM63 36h3v3h-3zM69 36h3v3h-3zM51 39h3v3h-3zM72 39h3v3h-3zM27 42h3v3h-3zM33 42h3v3h-3zM48 45h3v3h-3zM57 45h3v3h-3zM6 48h3v3h-3zM12 51h3v3h-3zM27 57h3v3h-3z"/><path fill="#503010" d="M57 24h3v3h-3zM60 27h3v3h-3zM18 42h3v3h-3zM63 54h3v3h-3zM39 60h3v3h-3zM39 66h3v3h-3z"/><path fill="#604030" d="M69 24h3v3h-3z"/><path fill="#706030" d="M18 27h3v3h-3zM84 33h3v3h-3zM87 33h3v3h-3zM87 42h3v3h-3zM90 42h3v3h-3z"/><path fill="#806030" d="M21 27h3v3h-3zM12 30h3v3h-3zM30 30h3v3h-3zM36 30h3v3h-3zM51 48h3v3h-3zM45 54h3v3h-3zM54 54h3v3h-3zM57 54h3v3h-3z"/><path fill="#b08040" d="M45 27h3v3h-3z"/><path fill="#c09040" d="M48 27h3v3h-3zM57 27h3v3h-3zM57 30h3v3h-3zM42 51h3v3h-3z"/><path fill="#b08030" d="M51 27h3v3h-3zM54 27h3v3h-3zM6 39h3v3h-3zM57 39h3v3h-3zM12 42h3v3h-3zM66 45h3v3h-3zM39 69h3v3h-3z"/><path fill="#a08040" d="M63 27h3v3h-3zM33 30h3v3h-3zM72 33h3v3h-3zM81 42h3v3h-3z"/><path fill="#705020" d="M0 30h3v3h-3zM3 30h3v3h-3zM42 30h3v3h-3zM27 33h3v3h-3zM36 33h3v3h-3zM12 36h3v3h-3zM15 36h3v3h-3zM72 36h3v3h-3zM81 36h3v3h-3zM21 42h3v3h-3zM36 42h3v3h-3zM78 42h3v3h-3zM12 45h3v3h-3zM54 45h3v3h-3zM48 48h3v3h-3zM6 51h3v3h-3zM15 51h3v3h-3zM45 51h3v3h-3zM18 54h3v3h-3zM24 54h3v3h-3zM42 54h3v3h-3zM33 57h3v3h-3zM27 60h3v3h-3zM30 63h3v3h-3zM45 63h3v3h-3zM36 66h3v3h-3zM30 69h3v3h-3zM36 69h3v3h-3z"/><path fill="#201000" d="M9 30h3v3h-3zM6 54h3v3h-3zM75 54h3v3h-3zM15 57h3v3h-3zM27 66h3v3h-3z"/><path fill="#807030" d="M39 30h3v3h-3zM78 33h3v3h-3zM75 36h3v3h-3z"/><path fill="#a07030" d="M45 30h3v3h-3zM48 30h3v3h-3zM60 33h3v3h-3zM51 42h3v3h-3zM45 48h3v3h-3zM33 54h3v3h-3zM36 57h3v3h-3zM36 60h3v3h-3z"/><path fill="#806020" d="M3 33h3v3h-3zM45 33h3v3h-3zM27 36h3v3h-3zM33 36h3v3h-3zM12 39h3v3h-3zM9 42h3v3h-3zM48 42h3v3h-3zM54 42h3v3h-3zM6 45h3v3h-3zM42 45h3v3h-3zM45 45h3v3h-3zM69 45h3v3h-3zM27 48h3v3h-3zM39 48h3v3h-3zM42 48h3v3h-3zM18 51h3v3h-3zM36 51h3v3h-3zM39 51h3v3h-3z"/><path fill="#907030" d="M18 33h3v3h-3zM69 33h3v3h-3zM27 51h3v3h-3zM54 51h3v3h-3zM60 51h3v3h-3zM63 51h3v3h-3zM39 63h3v3h-3z"/><path fill="#b09030" d="M21 33h3v3h-3zM66 39h3v3h-3zM66 48h3v3h-3zM69 48h3v3h-3z"/><path fill="#706020" d="M42 33h3v3h-3zM63 33h3v3h-3zM66 33h3v3h-3zM75 42h3v3h-3zM60 45h3v3h-3zM21 48h3v3h-3zM75 48h3v3h-3zM30 51h3v3h-3z"/><path fill="#d09040" d="M54 33h3v3h-3zM57 33h3v3h-3zM54 39h3v3h-3z"/><path fill="#604010" d="M3 36h3v3h-3zM21 36h3v3h-3zM72 42h3v3h-3zM0 51h3v3h-3z"/><path fill="#605010" d="M9 36h3v3h-3zM15 42h3v3h-3zM63 42h3v3h-3zM21 45h3v3h-3zM24 45h3v3h-3z"/><path fill="#a08030" d="M18 36h3v3h-3zM45 36h3v3h-3zM54 36h3v3h-3zM57 36h3v3h-3zM15 45h3v3h-3zM63 45h3v3h-3zM72 48h3v3h-3zM21 51h3v3h-3zM39 54h3v3h-3zM33 69h3v3h-3z"/><path fill="#705010" d="M0 39h3v3h-3zM6 42h3v3h-3z"/><path fill="#907020" d="M3 39h3v3h-3zM21 39h3v3h-3zM24 39h3v3h-3zM39 42h3v3h-3zM69 42h3v3h-3zM30 45h3v3h-3zM39 45h3v3h-3zM9 48h3v3h-3zM18 48h3v3h-3z"/><path fill="#f0c040" d="M27 39h3v3h-3zM33 45h3v3h-3zM36 45h3v3h-3z"/><path fill="#c09030" d="M30 39h3v3h-3zM39 57h3v3h-3z"/><path fill="#d0a040" d="M60 39h3v3h-3zM30 48h3v3h-3z"/><path fill="#e0b040" d="M63 39h3v3h-3zM60 42h3v3h-3z"/><path fill="#807020" d="M69 39h3v3h-3z"/><path fill="#d0a030" d="M24 42h3v3h-3z"/><path fill="#a08020" d="M30 42h3v3h-3zM0 45h3v3h-3z"/><path fill="#302000" d="M3 45h3v3h-3z"/><path fill="#f0b040" d="M27 45h3v3h-3z"/><path fill="#b09040" d="M75 45h3v3h-3z"/><path fill="#906020" d="M3 48h3v3h-3z"/><path fill="#505020" d="M87 48h3v3h-3zM90 48h3v3h-3z"/><path fill="#705030" d="M72 54h3v3h-3z"/><path fill="#503020" d="M63 60h3v3h-3zM48 66h3v3h-3zM54 66h3v3h-3zM63 66h3v3h-3zM48 69h3v3h-3z"/></svg></div>
<div class="a" style="left:1032px;top:190px;width:11px;height:11px;background:#6a6a9a;border:1px solid #fff;overflow:hidden"><div class="a" style="left:3px;top:5px;width:5px;height:3px;background:#fff"></div></div>
<div class="a" style="left:1045px;top:190px;width:15px;height:11px;background:#6a6a9a;border:1px solid #fff;overflow:hidden"><div class="t" style="left:0;top:1.5px;width:13px;text-align:center;font-family:Liberation Mono;font-size:7.5px;font-weight:bold;color:#fff;letter-spacing:-0.6px">XMP</div></div>
<div class="a" style="left:1062px;top:190px;width:19px;height:11px;background:#6a6a9a;border:1px solid #fff;overflow:hidden"><div class="t" style="left:0;top:1.5px;width:17px;text-align:center;font-family:Liberation Mono;font-size:7.5px;font-weight:bold;color:#fff;letter-spacing:-0.6px">EXIF</div></div>
<div class="a" style="left:1083px;top:190px;width:17px;height:11px;background:#6a6a9a;border:1px solid #fff;overflow:hidden"><div class="t" style="left:0;top:1.5px;width:15px;text-align:center;font-family:Liberation Mono;font-size:7.5px;font-weight:bold;color:#fff;letter-spacing:-0.6px">GPS</div></div>
<div class="a" style="left:999px;top:204px;width:102px;height:15px;background:#ebebeb"></div>
<div class="a" style="left:999px;top:220px;width:102px;height:11px;background:#ece9c8"></div>
<div class="a" style="left:999px;top:232px;width:102px;height:11px;background:#ece9c8"></div>
<div class="t" style="left:999px;top:206.7px;width:102px;text-align:center;font-size:11px;letter-spacing:-0.3px;color:#0a0a2a">DJI_0020</div>
<div class="t" style="left:999px;top:221px;width:102px;text-align:center;font-size:10px;letter-spacing:-0.25px;color:#0a0a2a">JPEG TrueColor (v1.1)</div>
<div class="t" style="left:999px;top:233px;width:102px;text-align:center;font-size:9.5px;letter-spacing:-0.2px;color:#0a0a2a">4000x3000x24</div>
<div class="a" style="left:14px;top:254px;width:92px;height:69px;overflow:hidden;background:#222;box-shadow:3px 3px 3px rgba(0,0,0,.35)"><svg width="92" height="69" viewBox="0 0 92 69" style="display:block;filter:blur(0.5px)"><path fill="#401020" d="M0 0h3v3h-3zM6 0h3v3h-3zM3 3h3v3h-3zM0 6h3v3h-3z"/><path fill="#200010" d="M3 0h3v3h-3z"/><path fill="#301020" d="M9 0h3v3h-3zM12 3h3v3h-3zM15 3h3v3h-3zM15 6h3v3h-3zM0 9h3v3h-3zM3 12h3v3h-3zM6 15h3v3h-3zM9 15h3v3h-3zM15 15h3v3h-3z"/><path fill="#201010" d="M12 0h3v3h-3zM3 6h3v3h-3zM3 9h3v3h-3zM9 9h3v3h-3zM15 9h3v3h-3zM18 9h3v3h-3zM6 12h3v3h-3zM12 12h3v3h-3zM18 15h3v3h-3zM15 18h3v3h-3zM3 36h3v3h-3zM6 36h3v3h-3zM21 36h3v3h-3zM27 36h3v3h-3zM33 36h3v3h-3zM42 36h3v3h-3zM48 36h3v3h-3zM54 36h3v3h-3zM60 36h3v3h-3zM72 36h3v3h-3zM78 36h3v3h-3zM90 36h3v3h-3zM18 39h3v3h-3zM21 39h3v3h-3zM27 39h3v3h-3zM36 39h3v3h-3zM42 39h3v3h-3zM45 39h3v3h-3zM51 39h3v3h-3zM54 39h3v3h-3zM57 39h3v3h-3zM63 39h3v3h-3zM66 39h3v3h-3zM69 39h3v3h-3zM84 39h3v3h-3zM3 42h3v3h-3zM9 42h3v3h-3zM18 42h3v3h-3zM24 42h3v3h-3zM30 42h3v3h-3zM33 42h3v3h-3zM39 42h3v3h-3zM42 42h3v3h-3zM48 42h3v3h-3zM54 42h3v3h-3zM60 42h3v3h-3zM66 42h3v3h-3zM69 42h3v3h-3zM72 42h3v3h-3zM75 42h3v3h-3zM81 42h3v3h-3zM84 42h3v3h-3zM87 42h3v3h-3zM3 45h3v3h-3zM9 45h3v3h-3zM18 45h3v3h-3zM21 45h3v3h-3zM27 45h3v3h-3zM30 45h3v3h-3zM33 45h3v3h-3zM36 45h3v3h-3zM39 45h3v3h-3zM42 45h3v3h-3zM45 45h3v3h-3zM48 45h3v3h-3zM54 45h3v3h-3zM57 45h3v3h-3zM60 45h3v3h-3zM66 45h3v3h-3zM72 45h3v3h-3zM78 45h3v3h-3zM81 45h3v3h-3zM0 48h3v3h-3zM6 48h3v3h-3zM12 48h3v3h-3zM18 48h3v3h-3zM21 48h3v3h-3zM24 48h3v3h-3zM30 48h3v3h-3zM42 48h3v3h-3zM45 48h3v3h-3zM57 48h3v3h-3zM63 48h3v3h-3zM66 48h3v3h-3zM72 48h3v3h-3zM78 48h3v3h-3zM81 48h3v3h-3zM3 51h3v3h-3zM12 51h3v3h-3zM15 51h3v3h-3zM18 51h3v3h-3zM21 51h3v3h-3zM27 51h3v3h-3zM30 51h3v3h-3zM33 51h3v3h-3zM36 51h3v3h-3zM39 51h3v3h-3zM45 51h3v3h-3zM51 51h3v3h-3zM57 51h3v3h-3zM60 51h3v3h-3zM66 51h3v3h-3zM69 51h3v3h-3zM72 51h3v3h-3zM78 51h3v3h-3zM87 51h3v3h-3zM90 51h3v3h-3zM0 54h3v3h-3zM9 54h3v3h-3zM21 54h3v3h-3zM27 54h3v3h-3zM33 54h3v3h-3zM36 54h3v3h-3zM39 54h3v3h-3zM42 54h3v3h-3zM45 54h3v3h-3zM48 54h3v3h-3zM51 54h3v3h-3zM57 54h3v3h-3zM66 54h3v3h-3zM72 54h3v3h-3zM75 54h3v3h-3zM78 54h3v3h-3zM84 54h3v3h-3zM0 57h3v3h-3zM3 57h3v3h-3zM6 57h3v3h-3zM9 57h3v3h-3zM18 57h3v3h-3zM36 57h3v3h-3zM54 57h3v3h-3zM57 57h3v3h-3zM60 57h3v3h-3zM72 57h3v3h-3zM75 57h3v3h-3zM81 57h3v3h-3zM84 57h3v3h-3zM87 57h3v3h-3zM0 60h3v3h-3zM3 60h3v3h-3zM9 60h3v3h-3zM15 60h3v3h-3zM18 60h3v3h-3zM24 60h3v3h-3zM27 60h3v3h-3zM30 60h3v3h-3zM33 60h3v3h-3zM39 60h3v3h-3zM42 60h3v3h-3zM48 60h3v3h-3zM51 60h3v3h-3zM54 60h3v3h-3zM60 60h3v3h-3zM69 60h3v3h-3zM72 60h3v3h-3zM75 60h3v3h-3zM78 60h3v3h-3zM24 63h3v3h-3zM27 63h3v3h-3zM36 63h3v3h-3zM39 63h3v3h-3zM45 63h3v3h-3zM51 63h3v3h-3zM54 63h3v3h-3zM57 63h3v3h-3zM63 63h3v3h-3zM66 63h3v3h-3zM72 63h3v3h-3zM84 63h3v3h-3zM3 66h3v3h-3zM6 66h3v3h-3zM15 66h3v3h-3zM27 66h3v3h-3zM36 66h3v3h-3zM39 66h3v3h-3zM48 66h3v3h-3zM54 66h3v3h-3zM60 66h3v3h-3zM66 66h3v3h-3zM69 66h3v3h-3zM75 66h3v3h-3zM78 66h3v3h-3zM84 66h3v3h-3zM90 66h3v3h-3zM0 69h3v3h-3zM15 69h3v3h-3zM21 69h3v3h-3zM30 69h3v3h-3zM36 69h3v3h-3zM39 69h3v3h-3zM48 69h3v3h-3zM54 69h3v3h-3zM57 69h3v3h-3zM66 69h3v3h-3zM75 69h3v3h-3zM78 69h3v3h-3zM87 69h3v3h-3z"/><path fill="#100010" d="M15 0h3v3h-3zM27 0h3v3h-3zM12 6h3v3h-3zM18 6h3v3h-3zM6 9h3v3h-3zM30 12h3v3h-3zM42 12h3v3h-3zM57 12h3v3h-3zM63 12h3v3h-3zM69 12h3v3h-3zM24 15h3v3h-3zM27 15h3v3h-3zM51 15h3v3h-3zM54 15h3v3h-3z"/><path fill="#301030" d="M18 0h3v3h-3zM21 6h3v3h-3zM24 6h3v3h-3z"/><path fill="#402040" d="M21 0h3v3h-3zM15 12h3v3h-3zM21 12h3v3h-3zM24 12h3v3h-3z"/><path fill="#201020" d="M24 0h3v3h-3zM18 3h3v3h-3zM24 3h3v3h-3zM27 3h3v3h-3zM30 3h3v3h-3zM24 9h3v3h-3zM18 12h3v3h-3zM48 12h3v3h-3zM54 12h3v3h-3zM66 12h3v3h-3zM30 15h3v3h-3zM33 15h3v3h-3zM36 15h3v3h-3zM39 15h3v3h-3zM45 15h3v3h-3zM66 15h3v3h-3zM69 15h3v3h-3zM72 15h3v3h-3zM75 15h3v3h-3zM78 15h3v3h-3zM81 15h3v3h-3zM84 15h3v3h-3zM87 15h3v3h-3zM90 15h3v3h-3zM21 24h3v3h-3zM27 24h3v3h-3zM48 24h3v3h-3z"/><path fill="#302040" d="M30 0h3v3h-3zM30 6h3v3h-3zM27 9h3v3h-3zM30 9h3v3h-3zM27 12h3v3h-3zM39 12h3v3h-3zM45 12h3v3h-3zM51 12h3v3h-3zM78 12h3v3h-3z"/><path fill="#101020" d="M33 0h3v3h-3zM36 0h3v3h-3zM48 0h3v3h-3zM57 0h3v3h-3zM63 0h3v3h-3zM75 0h3v3h-3zM81 0h3v3h-3zM84 0h3v3h-3zM90 0h3v3h-3zM42 3h3v3h-3zM48 3h3v3h-3zM60 3h3v3h-3zM72 3h3v3h-3zM84 3h3v3h-3zM39 6h3v3h-3zM42 6h3v3h-3zM78 6h3v3h-3zM87 6h3v3h-3zM90 6h3v3h-3zM51 9h3v3h-3zM57 9h3v3h-3zM60 9h3v3h-3zM81 12h3v3h-3zM33 21h3v3h-3zM39 21h3v3h-3zM69 21h3v3h-3zM90 21h3v3h-3z"/><path fill="#201030" d="M39 0h3v3h-3zM75 3h3v3h-3zM54 6h3v3h-3zM66 6h3v3h-3z"/><path fill="#000010" d="M42 0h3v3h-3zM33 3h3v3h-3zM45 3h3v3h-3zM54 3h3v3h-3zM57 3h3v3h-3zM66 3h3v3h-3zM78 3h3v3h-3zM81 3h3v3h-3zM87 3h3v3h-3zM36 6h3v3h-3zM45 6h3v3h-3zM48 6h3v3h-3zM51 6h3v3h-3zM69 6h3v3h-3zM45 9h3v3h-3zM48 9h3v3h-3zM66 9h3v3h-3zM75 9h3v3h-3zM81 9h3v3h-3zM75 12h3v3h-3z"/><path fill="#101010" d="M45 0h3v3h-3zM54 0h3v3h-3zM66 0h3v3h-3zM72 0h3v3h-3zM78 0h3v3h-3zM21 3h3v3h-3zM69 3h3v3h-3zM90 3h3v3h-3zM27 6h3v3h-3zM33 6h3v3h-3zM57 6h3v3h-3zM60 6h3v3h-3zM63 6h3v3h-3zM75 6h3v3h-3zM81 6h3v3h-3zM21 9h3v3h-3zM36 9h3v3h-3zM42 9h3v3h-3zM54 9h3v3h-3zM72 9h3v3h-3zM90 9h3v3h-3zM36 12h3v3h-3zM84 12h3v3h-3zM42 15h3v3h-3zM57 15h3v3h-3zM63 15h3v3h-3zM3 18h3v3h-3zM12 18h3v3h-3zM27 18h3v3h-3zM54 18h3v3h-3zM57 18h3v3h-3zM72 18h3v3h-3zM84 18h3v3h-3zM0 21h3v3h-3zM18 21h3v3h-3zM36 21h3v3h-3zM66 21h3v3h-3zM78 21h3v3h-3zM3 24h3v3h-3zM24 24h3v3h-3zM33 24h3v3h-3zM42 24h3v3h-3zM75 24h3v3h-3zM6 27h3v3h-3zM12 27h3v3h-3zM15 27h3v3h-3zM27 27h3v3h-3zM39 27h3v3h-3zM48 27h3v3h-3zM63 27h3v3h-3zM66 27h3v3h-3zM87 27h3v3h-3zM0 30h3v3h-3zM6 30h3v3h-3zM15 30h3v3h-3zM27 30h3v3h-3zM33 30h3v3h-3zM36 30h3v3h-3zM45 30h3v3h-3zM51 30h3v3h-3zM57 30h3v3h-3zM63 30h3v3h-3zM90 30h3v3h-3zM0 33h3v3h-3zM3 33h3v3h-3zM18 33h3v3h-3zM21 33h3v3h-3zM33 33h3v3h-3zM45 33h3v3h-3zM51 33h3v3h-3zM72 33h3v3h-3zM87 33h3v3h-3zM90 33h3v3h-3zM12 36h3v3h-3zM18 36h3v3h-3zM45 36h3v3h-3zM75 36h3v3h-3zM0 39h3v3h-3zM6 39h3v3h-3zM60 39h3v3h-3zM75 39h3v3h-3zM78 39h3v3h-3zM81 39h3v3h-3zM0 42h3v3h-3zM36 42h3v3h-3zM45 42h3v3h-3zM51 42h3v3h-3zM78 42h3v3h-3zM90 42h3v3h-3zM12 45h3v3h-3zM84 45h3v3h-3zM9 48h3v3h-3zM15 48h3v3h-3zM27 48h3v3h-3zM48 48h3v3h-3zM51 48h3v3h-3zM75 48h3v3h-3zM87 48h3v3h-3zM75 51h3v3h-3zM84 51h3v3h-3zM6 54h3v3h-3zM18 54h3v3h-3zM24 54h3v3h-3zM30 54h3v3h-3zM54 54h3v3h-3zM63 54h3v3h-3zM69 54h3v3h-3zM87 54h3v3h-3zM90 54h3v3h-3zM21 57h3v3h-3zM24 57h3v3h-3zM30 57h3v3h-3zM48 57h3v3h-3zM51 57h3v3h-3zM78 57h3v3h-3zM12 60h3v3h-3zM21 60h3v3h-3zM45 60h3v3h-3zM57 60h3v3h-3zM84 60h3v3h-3zM0 63h3v3h-3zM6 63h3v3h-3zM15 63h3v3h-3zM18 63h3v3h-3zM21 63h3v3h-3zM33 63h3v3h-3zM42 63h3v3h-3zM48 63h3v3h-3zM75 63h3v3h-3zM78 63h3v3h-3zM0 66h3v3h-3zM12 66h3v3h-3zM24 66h3v3h-3zM45 66h3v3h-3zM57 66h3v3h-3zM9 69h3v3h-3zM24 69h3v3h-3zM33 69h3v3h-3zM45 69h3v3h-3zM72 69h3v3h-3zM81 69h3v3h-3z"/><path fill="#202040" d="M51 0h3v3h-3zM69 0h3v3h-3zM36 3h3v3h-3zM39 3h3v3h-3zM51 3h3v3h-3zM63 3h3v3h-3zM72 6h3v3h-3zM39 9h3v3h-3zM69 9h3v3h-3z"/><path fill="#f0c060" d="M60 0h3v3h-3zM0 15h3v3h-3zM18 27h3v3h-3zM78 30h3v3h-3z"/><path fill="#101030" d="M87 0h3v3h-3zM84 6h3v3h-3z"/><path fill="#602040" d="M0 3h3v3h-3zM6 6h3v3h-3z"/><path fill="#501030" d="M6 3h3v3h-3z"/><path fill="#401030" d="M9 3h3v3h-3z"/><path fill="#502040" d="M9 6h3v3h-3zM12 9h3v3h-3zM9 12h3v3h-3z"/><path fill="#202030" d="M33 9h3v3h-3zM63 9h3v3h-3zM78 9h3v3h-3zM84 9h3v3h-3zM87 9h3v3h-3zM33 12h3v3h-3zM60 12h3v3h-3zM72 12h3v3h-3zM87 12h3v3h-3zM90 12h3v3h-3zM48 15h3v3h-3zM60 15h3v3h-3z"/><path fill="#402030" d="M0 12h3v3h-3zM3 15h3v3h-3zM3 21h3v3h-3zM9 21h3v3h-3z"/><path fill="#503040" d="M12 15h3v3h-3zM6 18h3v3h-3zM6 21h3v3h-3z"/><path fill="#403040" d="M21 15h3v3h-3zM18 18h3v3h-3zM12 21h3v3h-3zM24 21h3v3h-3zM27 21h3v3h-3zM42 21h3v3h-3zM72 21h3v3h-3zM51 24h3v3h-3zM57 24h3v3h-3zM87 24h3v3h-3zM90 24h3v3h-3zM3 27h3v3h-3zM24 27h3v3h-3zM30 27h3v3h-3zM72 27h3v3h-3zM75 27h3v3h-3zM12 30h3v3h-3zM42 30h3v3h-3zM48 30h3v3h-3zM66 30h3v3h-3zM75 30h3v3h-3z"/><path fill="#302020" d="M0 18h3v3h-3zM9 18h3v3h-3zM0 24h3v3h-3zM6 24h3v3h-3zM15 24h3v3h-3zM30 33h3v3h-3zM36 33h3v3h-3zM42 33h3v3h-3zM54 33h3v3h-3zM57 33h3v3h-3zM69 33h3v3h-3zM81 33h3v3h-3zM39 36h3v3h-3zM51 36h3v3h-3zM57 36h3v3h-3zM84 36h3v3h-3zM15 39h3v3h-3zM33 39h3v3h-3zM72 39h3v3h-3zM90 39h3v3h-3zM27 42h3v3h-3zM57 42h3v3h-3zM63 42h3v3h-3zM15 45h3v3h-3zM24 45h3v3h-3zM51 45h3v3h-3zM63 45h3v3h-3zM75 45h3v3h-3zM87 45h3v3h-3zM60 48h3v3h-3zM69 48h3v3h-3zM84 48h3v3h-3zM90 48h3v3h-3zM6 51h3v3h-3zM9 51h3v3h-3zM54 51h3v3h-3zM81 51h3v3h-3zM3 54h3v3h-3zM12 57h3v3h-3zM15 57h3v3h-3zM27 57h3v3h-3zM33 57h3v3h-3zM42 57h3v3h-3zM90 57h3v3h-3zM36 60h3v3h-3zM81 60h3v3h-3zM87 60h3v3h-3zM90 60h3v3h-3zM3 63h3v3h-3zM60 63h3v3h-3zM81 63h3v3h-3zM90 63h3v3h-3zM9 66h3v3h-3zM30 66h3v3h-3zM51 66h3v3h-3zM63 66h3v3h-3zM72 66h3v3h-3zM18 69h3v3h-3zM27 69h3v3h-3zM51 69h3v3h-3zM63 69h3v3h-3zM69 69h3v3h-3z"/><path fill="#202020" d="M21 18h3v3h-3zM24 18h3v3h-3zM33 18h3v3h-3zM36 18h3v3h-3zM42 18h3v3h-3zM60 18h3v3h-3zM66 18h3v3h-3zM21 21h3v3h-3zM30 21h3v3h-3zM45 21h3v3h-3zM48 21h3v3h-3zM54 21h3v3h-3zM57 21h3v3h-3zM60 21h3v3h-3zM63 21h3v3h-3zM84 21h3v3h-3zM87 21h3v3h-3zM36 24h3v3h-3zM45 24h3v3h-3zM54 24h3v3h-3zM60 24h3v3h-3zM63 24h3v3h-3zM69 24h3v3h-3zM72 24h3v3h-3zM81 24h3v3h-3zM84 24h3v3h-3zM0 27h3v3h-3zM9 27h3v3h-3zM21 27h3v3h-3zM42 27h3v3h-3zM51 27h3v3h-3zM54 27h3v3h-3zM57 27h3v3h-3zM60 27h3v3h-3zM69 27h3v3h-3zM84 27h3v3h-3zM9 30h3v3h-3zM21 30h3v3h-3zM30 30h3v3h-3zM60 30h3v3h-3zM72 30h3v3h-3zM81 30h3v3h-3zM6 33h3v3h-3zM9 33h3v3h-3zM12 33h3v3h-3zM15 33h3v3h-3zM24 33h3v3h-3zM27 33h3v3h-3zM39 33h3v3h-3zM48 33h3v3h-3zM60 33h3v3h-3zM63 33h3v3h-3zM66 33h3v3h-3zM75 33h3v3h-3zM84 33h3v3h-3zM3 39h3v3h-3zM9 39h3v3h-3zM12 39h3v3h-3zM48 39h3v3h-3z"/><path fill="#302030" d="M30 18h3v3h-3zM45 18h3v3h-3zM48 18h3v3h-3zM69 18h3v3h-3zM78 18h3v3h-3zM81 18h3v3h-3zM90 18h3v3h-3zM51 21h3v3h-3zM75 21h3v3h-3zM81 21h3v3h-3zM3 30h3v3h-3zM18 30h3v3h-3zM24 30h3v3h-3zM39 30h3v3h-3zM54 30h3v3h-3zM69 30h3v3h-3zM84 30h3v3h-3zM87 30h3v3h-3zM15 36h3v3h-3zM24 36h3v3h-3zM66 36h3v3h-3zM69 36h3v3h-3z"/><path fill="#303040" d="M39 18h3v3h-3zM51 18h3v3h-3zM63 18h3v3h-3zM75 18h3v3h-3zM87 18h3v3h-3z"/><path fill="#d0e0f0" d="M15 21h3v3h-3zM0 36h3v3h-3z"/><path fill="#303030" d="M9 24h3v3h-3zM12 24h3v3h-3zM18 24h3v3h-3zM30 24h3v3h-3zM39 24h3v3h-3zM66 24h3v3h-3zM78 24h3v3h-3zM33 27h3v3h-3zM36 27h3v3h-3zM45 27h3v3h-3zM78 27h3v3h-3zM81 27h3v3h-3zM90 27h3v3h-3z"/><path fill="#403030" d="M78 33h3v3h-3z"/><path fill="#100000" d="M9 36h3v3h-3zM30 36h3v3h-3zM36 36h3v3h-3zM63 36h3v3h-3zM81 36h3v3h-3zM87 36h3v3h-3zM24 39h3v3h-3zM30 39h3v3h-3zM39 39h3v3h-3zM87 39h3v3h-3zM6 42h3v3h-3zM12 42h3v3h-3zM15 42h3v3h-3zM21 42h3v3h-3zM0 45h3v3h-3zM6 45h3v3h-3zM69 45h3v3h-3zM90 45h3v3h-3zM3 48h3v3h-3zM33 48h3v3h-3zM36 48h3v3h-3zM39 48h3v3h-3zM54 48h3v3h-3zM0 51h3v3h-3zM24 51h3v3h-3zM42 51h3v3h-3zM48 51h3v3h-3zM63 51h3v3h-3zM12 54h3v3h-3zM15 54h3v3h-3zM60 54h3v3h-3zM81 54h3v3h-3zM39 57h3v3h-3zM45 57h3v3h-3zM63 57h3v3h-3zM66 57h3v3h-3zM69 57h3v3h-3zM6 60h3v3h-3zM63 60h3v3h-3zM66 60h3v3h-3zM9 63h3v3h-3zM12 63h3v3h-3zM30 63h3v3h-3zM69 63h3v3h-3zM87 63h3v3h-3zM18 66h3v3h-3zM21 66h3v3h-3zM33 66h3v3h-3zM42 66h3v3h-3zM81 66h3v3h-3zM87 66h3v3h-3zM3 69h3v3h-3zM6 69h3v3h-3zM12 69h3v3h-3zM42 69h3v3h-3zM60 69h3v3h-3zM84 69h3v3h-3zM90 69h3v3h-3z"/></svg></div>
<div class="a" style="left:124px;top:254px;width:92px;height:69px;overflow:hidden;background:#222;box-shadow:3px 3px 3px rgba(0,0,0,.35)"><svg width="92" height="69" viewBox="0 0 92 69" style="display:block;filter:blur(0.5px)"><path fill="#301020" d="M0 0h3v3h-3zM3 0h3v3h-3zM0 3h3v3h-3zM3 3h3v3h-3zM6 3h3v3h-3zM15 3h3v3h-3zM0 6h3v3h-3zM3 6h3v3h-3zM6 6h3v3h-3zM0 9h3v3h-3zM3 9h3v3h-3zM6 9h3v3h-3zM9 12h3v3h-3zM12 12h3v3h-3zM3 15h3v3h-3z"/><path fill="#200010" d="M6 0h3v3h-3z"/><path fill="#100010" d="M9 0h3v3h-3zM15 0h3v3h-3zM33 0h3v3h-3zM42 0h3v3h-3zM48 0h3v3h-3zM51 0h3v3h-3zM12 3h3v3h-3zM21 3h3v3h-3zM42 3h3v3h-3zM54 3h3v3h-3zM36 6h3v3h-3zM12 9h3v3h-3zM54 12h3v3h-3zM84 12h3v3h-3zM6 15h3v3h-3z"/><path fill="#201020" d="M12 0h3v3h-3zM18 0h3v3h-3zM21 0h3v3h-3zM9 3h3v3h-3zM18 3h3v3h-3zM24 3h3v3h-3zM33 3h3v3h-3zM9 6h3v3h-3zM21 6h3v3h-3zM24 6h3v3h-3zM9 9h3v3h-3zM15 9h3v3h-3zM21 9h3v3h-3zM24 9h3v3h-3zM27 9h3v3h-3zM33 9h3v3h-3zM45 9h3v3h-3zM27 12h3v3h-3zM39 12h3v3h-3zM48 12h3v3h-3zM51 12h3v3h-3zM66 12h3v3h-3zM72 12h3v3h-3zM81 12h3v3h-3z"/><path fill="#101020" d="M24 0h3v3h-3zM27 0h3v3h-3zM36 0h3v3h-3zM45 0h3v3h-3zM54 0h3v3h-3zM57 0h3v3h-3zM63 0h3v3h-3zM66 0h3v3h-3zM69 0h3v3h-3zM72 0h3v3h-3zM78 0h3v3h-3zM81 0h3v3h-3zM84 0h3v3h-3zM87 0h3v3h-3zM36 3h3v3h-3zM45 3h3v3h-3zM48 3h3v3h-3zM51 3h3v3h-3zM60 3h3v3h-3zM72 3h3v3h-3zM81 3h3v3h-3zM84 3h3v3h-3zM30 6h3v3h-3zM42 6h3v3h-3zM48 6h3v3h-3zM54 6h3v3h-3zM57 6h3v3h-3zM63 6h3v3h-3zM69 6h3v3h-3zM75 6h3v3h-3zM81 6h3v3h-3zM84 6h3v3h-3zM90 6h3v3h-3zM36 9h3v3h-3zM54 9h3v3h-3zM72 9h3v3h-3zM78 9h3v3h-3z"/><path fill="#202030" d="M30 0h3v3h-3zM75 0h3v3h-3zM90 0h3v3h-3zM30 3h3v3h-3zM39 3h3v3h-3zM66 3h3v3h-3zM69 3h3v3h-3zM90 3h3v3h-3zM27 6h3v3h-3zM60 6h3v3h-3zM87 6h3v3h-3zM48 9h3v3h-3zM60 9h3v3h-3zM69 9h3v3h-3zM75 9h3v3h-3zM87 9h3v3h-3z"/><path fill="#000010" d="M39 0h3v3h-3zM60 0h3v3h-3zM27 3h3v3h-3zM57 3h3v3h-3zM63 3h3v3h-3zM78 3h3v3h-3zM33 6h3v3h-3zM39 6h3v3h-3zM45 6h3v3h-3zM51 6h3v3h-3zM66 6h3v3h-3zM42 9h3v3h-3zM63 9h3v3h-3zM66 9h3v3h-3zM84 9h3v3h-3z"/><path fill="#101010" d="M75 3h3v3h-3zM87 3h3v3h-3zM72 6h3v3h-3zM78 6h3v3h-3zM30 9h3v3h-3zM39 9h3v3h-3zM51 9h3v3h-3zM57 9h3v3h-3zM81 9h3v3h-3zM21 12h3v3h-3zM24 12h3v3h-3zM33 12h3v3h-3zM36 12h3v3h-3zM45 12h3v3h-3zM78 12h3v3h-3zM87 12h3v3h-3zM18 15h3v3h-3zM33 15h3v3h-3zM39 15h3v3h-3zM42 15h3v3h-3zM45 15h3v3h-3zM57 15h3v3h-3zM72 15h3v3h-3zM87 15h3v3h-3zM15 18h3v3h-3zM27 18h3v3h-3zM33 18h3v3h-3zM45 18h3v3h-3zM69 18h3v3h-3zM90 18h3v3h-3zM3 21h3v3h-3zM21 21h3v3h-3zM48 21h3v3h-3zM51 21h3v3h-3zM57 21h3v3h-3zM81 21h3v3h-3zM6 24h3v3h-3zM54 24h3v3h-3zM57 24h3v3h-3zM84 24h3v3h-3zM90 24h3v3h-3zM24 27h3v3h-3zM27 27h3v3h-3zM48 27h3v3h-3zM69 27h3v3h-3zM81 27h3v3h-3zM15 30h3v3h-3zM33 30h3v3h-3zM42 30h3v3h-3zM48 33h3v3h-3zM81 33h3v3h-3zM84 33h3v3h-3zM6 36h3v3h-3zM9 36h3v3h-3zM15 36h3v3h-3zM18 36h3v3h-3zM36 36h3v3h-3zM39 36h3v3h-3zM63 36h3v3h-3zM66 36h3v3h-3zM72 36h3v3h-3zM87 36h3v3h-3zM0 39h3v3h-3zM3 39h3v3h-3zM6 39h3v3h-3zM9 39h3v3h-3zM15 39h3v3h-3zM21 39h3v3h-3zM24 39h3v3h-3zM63 39h3v3h-3zM3 42h3v3h-3zM18 42h3v3h-3zM54 42h3v3h-3zM63 42h3v3h-3zM75 42h3v3h-3zM18 45h3v3h-3zM21 45h3v3h-3zM27 45h3v3h-3zM39 45h3v3h-3zM42 45h3v3h-3zM48 45h3v3h-3zM57 45h3v3h-3zM75 45h3v3h-3zM12 48h3v3h-3zM21 48h3v3h-3zM51 48h3v3h-3zM63 48h3v3h-3zM81 48h3v3h-3zM24 51h3v3h-3zM39 51h3v3h-3zM54 51h3v3h-3zM84 51h3v3h-3zM87 51h3v3h-3zM12 54h3v3h-3zM21 54h3v3h-3zM33 54h3v3h-3zM36 54h3v3h-3zM54 54h3v3h-3zM84 54h3v3h-3zM18 57h3v3h-3zM27 57h3v3h-3zM33 57h3v3h-3zM36 57h3v3h-3zM81 57h3v3h-3zM84 57h3v3h-3zM45 60h3v3h-3zM54 60h3v3h-3zM57 60h3v3h-3zM63 60h3v3h-3zM81 60h3v3h-3zM87 60h3v3h-3zM3 63h3v3h-3zM24 63h3v3h-3zM30 63h3v3h-3zM33 63h3v3h-3zM45 63h3v3h-3zM72 63h3v3h-3zM81 63h3v3h-3zM87 63h3v3h-3zM45 66h3v3h-3zM51 66h3v3h-3zM63 66h3v3h-3zM66 66h3v3h-3zM75 66h3v3h-3zM33 69h3v3h-3zM48 69h3v3h-3zM69 69h3v3h-3zM84 69h3v3h-3z"/><path fill="#401030" d="M12 6h3v3h-3z"/><path fill="#301030" d="M15 6h3v3h-3zM18 6h3v3h-3z"/><path fill="#302030" d="M18 9h3v3h-3zM57 12h3v3h-3z"/><path fill="#202020" d="M90 9h3v3h-3zM42 12h3v3h-3zM60 12h3v3h-3zM63 12h3v3h-3zM69 12h3v3h-3zM75 12h3v3h-3zM36 15h3v3h-3zM66 15h3v3h-3zM78 15h3v3h-3zM81 15h3v3h-3zM45 39h3v3h-3zM48 39h3v3h-3zM72 39h3v3h-3zM75 39h3v3h-3zM84 39h3v3h-3z"/><path fill="#402020" d="M0 12h3v3h-3zM9 15h3v3h-3zM15 15h3v3h-3z"/><path fill="#502030" d="M3 12h3v3h-3z"/><path fill="#201010" d="M6 12h3v3h-3zM15 12h3v3h-3zM0 15h3v3h-3zM21 15h3v3h-3zM24 15h3v3h-3zM0 18h3v3h-3zM42 18h3v3h-3zM63 18h3v3h-3zM72 18h3v3h-3zM78 18h3v3h-3zM12 21h3v3h-3zM72 21h3v3h-3zM3 27h3v3h-3zM21 27h3v3h-3zM39 27h3v3h-3zM51 27h3v3h-3zM63 27h3v3h-3zM72 27h3v3h-3zM75 27h3v3h-3zM90 27h3v3h-3zM3 30h3v3h-3zM39 30h3v3h-3zM48 30h3v3h-3zM57 30h3v3h-3zM75 30h3v3h-3zM78 30h3v3h-3zM84 30h3v3h-3zM0 33h3v3h-3zM9 33h3v3h-3zM45 33h3v3h-3zM54 33h3v3h-3zM90 33h3v3h-3zM3 36h3v3h-3zM57 36h3v3h-3zM60 36h3v3h-3zM75 36h3v3h-3zM81 36h3v3h-3zM90 36h3v3h-3zM27 39h3v3h-3zM51 39h3v3h-3zM60 39h3v3h-3zM66 39h3v3h-3zM81 39h3v3h-3zM87 39h3v3h-3zM0 42h3v3h-3zM9 42h3v3h-3zM12 42h3v3h-3zM15 42h3v3h-3zM21 42h3v3h-3zM24 42h3v3h-3zM27 42h3v3h-3zM30 42h3v3h-3zM33 42h3v3h-3zM36 42h3v3h-3zM39 42h3v3h-3zM72 42h3v3h-3zM81 42h3v3h-3zM84 42h3v3h-3zM87 42h3v3h-3zM0 45h3v3h-3zM6 45h3v3h-3zM9 45h3v3h-3zM15 45h3v3h-3zM24 45h3v3h-3zM30 45h3v3h-3zM33 45h3v3h-3zM36 45h3v3h-3zM45 45h3v3h-3zM60 45h3v3h-3zM66 45h3v3h-3zM72 45h3v3h-3zM78 45h3v3h-3zM81 45h3v3h-3zM87 45h3v3h-3zM90 45h3v3h-3zM0 48h3v3h-3zM9 48h3v3h-3zM15 48h3v3h-3zM24 48h3v3h-3zM27 48h3v3h-3zM33 48h3v3h-3zM36 48h3v3h-3zM39 48h3v3h-3zM42 48h3v3h-3zM45 48h3v3h-3zM48 48h3v3h-3zM54 48h3v3h-3zM60 48h3v3h-3zM72 48h3v3h-3zM75 48h3v3h-3zM84 48h3v3h-3zM87 48h3v3h-3zM0 51h3v3h-3zM3 51h3v3h-3zM6 51h3v3h-3zM12 51h3v3h-3zM21 51h3v3h-3zM27 51h3v3h-3zM30 51h3v3h-3zM33 51h3v3h-3zM36 51h3v3h-3zM42 51h3v3h-3zM45 51h3v3h-3zM51 51h3v3h-3zM57 51h3v3h-3zM66 51h3v3h-3zM69 51h3v3h-3zM75 51h3v3h-3zM3 54h3v3h-3zM9 54h3v3h-3zM24 54h3v3h-3zM30 54h3v3h-3zM45 54h3v3h-3zM48 54h3v3h-3zM57 54h3v3h-3zM63 54h3v3h-3zM66 54h3v3h-3zM69 54h3v3h-3zM78 54h3v3h-3zM81 54h3v3h-3zM87 54h3v3h-3zM90 54h3v3h-3zM3 57h3v3h-3zM9 57h3v3h-3zM12 57h3v3h-3zM24 57h3v3h-3zM30 57h3v3h-3zM45 57h3v3h-3zM48 57h3v3h-3zM51 57h3v3h-3zM60 57h3v3h-3zM63 57h3v3h-3zM69 57h3v3h-3zM72 57h3v3h-3zM75 57h3v3h-3zM6 60h3v3h-3zM9 60h3v3h-3zM18 60h3v3h-3zM24 60h3v3h-3zM30 60h3v3h-3zM36 60h3v3h-3zM42 60h3v3h-3zM51 60h3v3h-3zM66 60h3v3h-3zM69 60h3v3h-3zM72 60h3v3h-3zM78 60h3v3h-3zM90 60h3v3h-3zM6 63h3v3h-3zM9 63h3v3h-3zM12 63h3v3h-3zM18 63h3v3h-3zM36 63h3v3h-3zM42 63h3v3h-3zM48 63h3v3h-3zM51 63h3v3h-3zM54 63h3v3h-3zM63 63h3v3h-3zM75 63h3v3h-3zM78 63h3v3h-3zM90 63h3v3h-3zM0 66h3v3h-3zM6 66h3v3h-3zM9 66h3v3h-3zM12 66h3v3h-3zM15 66h3v3h-3zM18 66h3v3h-3zM27 66h3v3h-3zM30 66h3v3h-3zM33 66h3v3h-3zM36 66h3v3h-3zM39 66h3v3h-3zM48 66h3v3h-3zM54 66h3v3h-3zM57 66h3v3h-3zM69 66h3v3h-3zM72 66h3v3h-3zM78 66h3v3h-3zM84 66h3v3h-3zM90 66h3v3h-3zM6 69h3v3h-3zM15 69h3v3h-3zM18 69h3v3h-3zM21 69h3v3h-3zM24 69h3v3h-3zM36 69h3v3h-3zM39 69h3v3h-3zM42 69h3v3h-3zM54 69h3v3h-3zM57 69h3v3h-3zM63 69h3v3h-3zM66 69h3v3h-3zM75 69h3v3h-3zM81 69h3v3h-3zM87 69h3v3h-3z"/><path fill="#302020" d="M18 12h3v3h-3zM30 12h3v3h-3zM27 15h3v3h-3zM51 15h3v3h-3zM69 15h3v3h-3zM84 15h3v3h-3zM90 15h3v3h-3zM3 18h3v3h-3zM9 18h3v3h-3zM12 18h3v3h-3zM21 18h3v3h-3zM24 18h3v3h-3zM36 18h3v3h-3zM48 18h3v3h-3zM54 18h3v3h-3zM66 18h3v3h-3zM0 21h3v3h-3zM9 21h3v3h-3zM15 21h3v3h-3zM18 21h3v3h-3zM27 21h3v3h-3zM30 21h3v3h-3zM33 21h3v3h-3zM39 21h3v3h-3zM42 21h3v3h-3zM45 21h3v3h-3zM54 21h3v3h-3zM75 21h3v3h-3zM78 21h3v3h-3zM84 21h3v3h-3zM87 21h3v3h-3zM90 21h3v3h-3zM12 24h3v3h-3zM24 24h3v3h-3zM42 24h3v3h-3zM48 24h3v3h-3zM66 24h3v3h-3zM75 24h3v3h-3zM87 24h3v3h-3zM9 27h3v3h-3zM12 27h3v3h-3zM18 27h3v3h-3zM36 27h3v3h-3zM42 27h3v3h-3zM60 27h3v3h-3zM66 27h3v3h-3zM84 27h3v3h-3zM12 30h3v3h-3zM18 30h3v3h-3zM30 30h3v3h-3zM36 30h3v3h-3zM45 30h3v3h-3zM51 30h3v3h-3zM54 30h3v3h-3zM60 30h3v3h-3zM81 30h3v3h-3zM87 30h3v3h-3zM90 30h3v3h-3zM12 33h3v3h-3zM15 33h3v3h-3zM21 33h3v3h-3zM24 33h3v3h-3zM30 33h3v3h-3zM33 33h3v3h-3zM36 33h3v3h-3zM42 33h3v3h-3zM51 33h3v3h-3zM57 33h3v3h-3zM63 33h3v3h-3zM66 33h3v3h-3zM72 33h3v3h-3zM78 33h3v3h-3zM0 36h3v3h-3zM24 36h3v3h-3zM27 36h3v3h-3zM33 36h3v3h-3zM42 36h3v3h-3zM45 36h3v3h-3zM48 36h3v3h-3zM78 36h3v3h-3zM12 39h3v3h-3zM18 39h3v3h-3zM39 39h3v3h-3zM42 39h3v3h-3zM6 42h3v3h-3zM42 42h3v3h-3zM45 42h3v3h-3zM48 42h3v3h-3zM51 42h3v3h-3zM57 42h3v3h-3zM60 42h3v3h-3zM66 42h3v3h-3zM3 45h3v3h-3zM63 45h3v3h-3zM69 45h3v3h-3zM57 48h3v3h-3zM69 48h3v3h-3zM90 48h3v3h-3zM9 51h3v3h-3zM15 51h3v3h-3zM18 51h3v3h-3zM48 51h3v3h-3zM63 51h3v3h-3zM72 51h3v3h-3zM90 51h3v3h-3zM6 54h3v3h-3zM18 54h3v3h-3zM39 54h3v3h-3zM6 57h3v3h-3zM15 57h3v3h-3zM21 57h3v3h-3zM42 57h3v3h-3zM54 57h3v3h-3zM57 57h3v3h-3zM87 57h3v3h-3zM0 60h3v3h-3zM3 60h3v3h-3zM12 60h3v3h-3zM27 60h3v3h-3zM33 60h3v3h-3zM48 60h3v3h-3zM60 60h3v3h-3zM84 60h3v3h-3zM21 63h3v3h-3zM39 63h3v3h-3zM57 63h3v3h-3zM60 63h3v3h-3zM69 63h3v3h-3zM84 63h3v3h-3zM60 66h3v3h-3zM9 69h3v3h-3zM12 69h3v3h-3zM27 69h3v3h-3zM51 69h3v3h-3zM72 69h3v3h-3zM78 69h3v3h-3z"/><path fill="#303030" d="M90 12h3v3h-3zM39 18h3v3h-3zM81 18h3v3h-3zM84 18h3v3h-3zM87 18h3v3h-3z"/><path fill="#503030" d="M12 15h3v3h-3zM18 18h3v3h-3zM9 24h3v3h-3zM18 24h3v3h-3zM21 24h3v3h-3zM69 24h3v3h-3zM72 24h3v3h-3zM81 24h3v3h-3z"/><path fill="#403030" d="M30 15h3v3h-3zM48 15h3v3h-3zM54 15h3v3h-3zM63 15h3v3h-3zM75 15h3v3h-3zM30 18h3v3h-3zM57 18h3v3h-3zM60 18h3v3h-3zM75 18h3v3h-3zM24 21h3v3h-3zM63 21h3v3h-3zM15 27h3v3h-3zM33 27h3v3h-3zM45 27h3v3h-3zM54 27h3v3h-3zM57 27h3v3h-3zM87 27h3v3h-3zM3 33h3v3h-3zM6 33h3v3h-3zM18 33h3v3h-3zM27 33h3v3h-3zM39 33h3v3h-3zM60 33h3v3h-3zM69 33h3v3h-3zM75 33h3v3h-3z"/><path fill="#d0e0f0" d="M60 15h3v3h-3zM36 21h3v3h-3z"/><path fill="#402030" d="M6 18h3v3h-3z"/><path fill="#f0c060" d="M51 18h3v3h-3zM87 33h3v3h-3zM33 39h3v3h-3z"/><path fill="#604030" d="M6 21h3v3h-3zM0 24h3v3h-3zM33 24h3v3h-3zM36 24h3v3h-3zM39 24h3v3h-3zM45 24h3v3h-3zM51 24h3v3h-3zM63 24h3v3h-3zM78 24h3v3h-3z"/><path fill="#504030" d="M60 21h3v3h-3zM66 21h3v3h-3zM69 21h3v3h-3zM0 27h3v3h-3zM6 27h3v3h-3zM30 27h3v3h-3zM78 27h3v3h-3zM0 30h3v3h-3zM6 30h3v3h-3zM9 30h3v3h-3zM24 30h3v3h-3zM72 30h3v3h-3z"/><path fill="#202010" d="M3 24h3v3h-3zM15 24h3v3h-3zM27 24h3v3h-3zM30 24h3v3h-3zM60 24h3v3h-3z"/><path fill="#403020" d="M21 30h3v3h-3zM27 30h3v3h-3zM63 30h3v3h-3zM66 30h3v3h-3zM69 30h3v3h-3zM30 36h3v3h-3zM51 36h3v3h-3zM69 36h3v3h-3zM84 36h3v3h-3z"/><path fill="#100000" d="M12 36h3v3h-3zM21 36h3v3h-3zM54 36h3v3h-3zM30 39h3v3h-3zM36 39h3v3h-3zM54 39h3v3h-3zM57 39h3v3h-3zM69 39h3v3h-3zM78 39h3v3h-3zM90 39h3v3h-3zM69 42h3v3h-3zM78 42h3v3h-3zM90 42h3v3h-3zM12 45h3v3h-3zM51 45h3v3h-3zM54 45h3v3h-3zM84 45h3v3h-3zM3 48h3v3h-3zM6 48h3v3h-3zM18 48h3v3h-3zM30 48h3v3h-3zM66 48h3v3h-3zM78 48h3v3h-3zM60 51h3v3h-3zM78 51h3v3h-3zM81 51h3v3h-3zM0 54h3v3h-3zM15 54h3v3h-3zM27 54h3v3h-3zM42 54h3v3h-3zM51 54h3v3h-3zM60 54h3v3h-3zM72 54h3v3h-3zM75 54h3v3h-3zM0 57h3v3h-3zM39 57h3v3h-3zM66 57h3v3h-3zM78 57h3v3h-3zM90 57h3v3h-3zM15 60h3v3h-3zM21 60h3v3h-3zM39 60h3v3h-3zM75 60h3v3h-3zM0 63h3v3h-3zM15 63h3v3h-3zM27 63h3v3h-3zM66 63h3v3h-3zM3 66h3v3h-3zM21 66h3v3h-3zM24 66h3v3h-3zM42 66h3v3h-3zM81 66h3v3h-3zM87 66h3v3h-3zM0 69h3v3h-3zM3 69h3v3h-3zM30 69h3v3h-3zM45 69h3v3h-3zM60 69h3v3h-3zM90 69h3v3h-3z"/></svg></div>
<div class="a" style="left:784px;top:254px;width:92px;height:69px;overflow:hidden;background:#222;box-shadow:3px 3px 3px rgba(0,0,0,.35)"><svg width="92" height="69" viewBox="0 0 92 69" style="display:block;filter:blur(0.5px)"><path fill="#201030" d="M0 0h3v3h-3zM3 0h3v3h-3zM9 0h3v3h-3zM75 0h3v3h-3zM0 3h3v3h-3zM3 3h3v3h-3zM6 3h3v3h-3zM63 3h3v3h-3zM69 3h3v3h-3zM3 6h3v3h-3zM27 6h3v3h-3zM63 6h3v3h-3zM66 6h3v3h-3zM3 9h3v3h-3zM6 9h3v3h-3zM9 9h3v3h-3zM66 9h3v3h-3zM69 9h3v3h-3zM63 12h3v3h-3zM66 12h3v3h-3zM72 12h3v3h-3zM3 15h3v3h-3zM36 15h3v3h-3zM66 15h3v3h-3zM75 15h3v3h-3z"/><path fill="#100010" d="M6 0h3v3h-3zM60 0h3v3h-3zM66 0h3v3h-3zM9 3h3v3h-3zM6 6h3v3h-3zM6 15h3v3h-3zM78 15h3v3h-3zM90 15h3v3h-3zM54 36h3v3h-3zM63 36h3v3h-3zM81 36h3v3h-3zM87 36h3v3h-3z"/><path fill="#101020" d="M12 0h3v3h-3zM15 0h3v3h-3zM27 0h3v3h-3zM39 0h3v3h-3zM72 0h3v3h-3zM78 0h3v3h-3zM15 3h3v3h-3zM30 3h3v3h-3zM42 3h3v3h-3zM75 3h3v3h-3zM81 3h3v3h-3zM87 3h3v3h-3zM0 6h3v3h-3zM9 6h3v3h-3zM15 6h3v3h-3zM24 6h3v3h-3zM36 6h3v3h-3zM69 6h3v3h-3zM75 9h3v3h-3zM81 9h3v3h-3zM6 12h3v3h-3zM15 12h3v3h-3zM0 15h3v3h-3zM69 15h3v3h-3zM6 18h3v3h-3zM75 18h3v3h-3zM3 21h3v3h-3zM39 21h3v3h-3zM39 24h3v3h-3zM0 27h3v3h-3zM54 27h3v3h-3zM63 27h3v3h-3zM51 30h3v3h-3z"/><path fill="#403050" d="M18 0h3v3h-3zM18 3h3v3h-3zM24 9h3v3h-3zM18 12h3v3h-3zM24 12h3v3h-3zM12 15h3v3h-3zM30 15h3v3h-3zM63 15h3v3h-3zM48 18h3v3h-3zM69 18h3v3h-3zM78 18h3v3h-3zM42 21h3v3h-3zM84 21h3v3h-3zM0 24h3v3h-3zM33 24h3v3h-3zM66 24h3v3h-3zM90 24h3v3h-3zM39 27h3v3h-3zM66 27h3v3h-3z"/><path fill="#302040" d="M21 0h3v3h-3zM24 0h3v3h-3zM30 0h3v3h-3zM33 0h3v3h-3zM63 0h3v3h-3zM12 3h3v3h-3zM27 3h3v3h-3zM33 3h3v3h-3zM36 3h3v3h-3zM21 6h3v3h-3zM30 6h3v3h-3zM33 6h3v3h-3zM0 9h3v3h-3zM15 9h3v3h-3zM27 9h3v3h-3zM30 9h3v3h-3zM33 9h3v3h-3zM72 9h3v3h-3zM33 12h3v3h-3zM69 12h3v3h-3zM87 12h3v3h-3zM42 15h3v3h-3zM72 15h3v3h-3zM36 18h3v3h-3zM39 18h3v3h-3zM66 18h3v3h-3zM87 18h3v3h-3zM6 21h3v3h-3zM42 24h3v3h-3zM36 27h3v3h-3z"/><path fill="#403060" d="M36 0h3v3h-3z"/><path fill="#f0c060" d="M42 0h3v3h-3zM51 0h3v3h-3zM24 3h3v3h-3zM21 24h3v3h-3zM30 24h3v3h-3zM33 27h3v3h-3zM15 30h3v3h-3zM9 33h3v3h-3zM36 33h3v3h-3zM54 33h3v3h-3z"/><path fill="#402040" d="M45 0h3v3h-3zM33 15h3v3h-3zM60 18h3v3h-3z"/><path fill="#502050" d="M48 0h3v3h-3zM45 12h3v3h-3z"/><path fill="#602050" d="M54 0h3v3h-3zM51 3h3v3h-3zM51 9h3v3h-3z"/><path fill="#401030" d="M57 0h3v3h-3zM57 3h3v3h-3zM57 6h3v3h-3z"/><path fill="#000010" d="M69 0h3v3h-3zM90 0h3v3h-3zM72 3h3v3h-3zM78 3h3v3h-3zM87 6h3v3h-3zM84 9h3v3h-3zM90 9h3v3h-3zM90 12h3v3h-3z"/><path fill="#101010" d="M81 0h3v3h-3zM84 0h3v3h-3zM90 3h3v3h-3zM12 6h3v3h-3zM72 6h3v3h-3zM78 6h3v3h-3zM81 6h3v3h-3zM90 6h3v3h-3zM81 12h3v3h-3zM84 12h3v3h-3zM45 15h3v3h-3zM60 15h3v3h-3zM0 18h3v3h-3zM3 18h3v3h-3zM9 18h3v3h-3zM60 21h3v3h-3zM63 21h3v3h-3zM78 21h3v3h-3zM90 21h3v3h-3zM60 24h3v3h-3zM6 27h3v3h-3zM42 27h3v3h-3zM45 27h3v3h-3zM57 27h3v3h-3zM72 27h3v3h-3zM87 27h3v3h-3zM0 30h3v3h-3zM12 30h3v3h-3zM39 30h3v3h-3zM78 30h3v3h-3zM81 30h3v3h-3zM87 30h3v3h-3zM0 33h3v3h-3zM12 33h3v3h-3zM15 33h3v3h-3zM30 33h3v3h-3zM42 33h3v3h-3zM45 33h3v3h-3zM51 33h3v3h-3zM63 33h3v3h-3zM69 33h3v3h-3zM84 33h3v3h-3zM0 36h3v3h-3zM3 36h3v3h-3zM18 36h3v3h-3zM21 36h3v3h-3zM27 36h3v3h-3zM51 36h3v3h-3zM66 36h3v3h-3zM69 36h3v3h-3zM90 36h3v3h-3zM0 39h3v3h-3zM27 39h3v3h-3zM36 39h3v3h-3zM66 39h3v3h-3zM72 39h3v3h-3zM78 39h3v3h-3zM15 42h3v3h-3zM18 42h3v3h-3zM24 42h3v3h-3zM54 42h3v3h-3zM57 42h3v3h-3zM66 42h3v3h-3zM75 42h3v3h-3zM90 42h3v3h-3zM0 45h3v3h-3zM3 45h3v3h-3zM12 45h3v3h-3zM54 45h3v3h-3zM60 45h3v3h-3zM12 48h3v3h-3zM57 48h3v3h-3zM78 48h3v3h-3zM84 48h3v3h-3zM6 51h3v3h-3zM12 51h3v3h-3zM15 51h3v3h-3zM24 51h3v3h-3zM36 51h3v3h-3zM66 51h3v3h-3zM3 54h3v3h-3zM18 54h3v3h-3zM30 54h3v3h-3zM42 54h3v3h-3zM45 54h3v3h-3zM51 54h3v3h-3zM54 54h3v3h-3zM84 54h3v3h-3zM3 57h3v3h-3zM39 57h3v3h-3zM45 57h3v3h-3zM75 57h3v3h-3zM78 57h3v3h-3zM27 60h3v3h-3zM39 60h3v3h-3zM45 60h3v3h-3zM48 60h3v3h-3zM69 60h3v3h-3zM81 60h3v3h-3zM24 63h3v3h-3zM30 63h3v3h-3zM36 63h3v3h-3zM45 63h3v3h-3zM54 63h3v3h-3zM60 63h3v3h-3zM84 63h3v3h-3zM12 66h3v3h-3zM21 66h3v3h-3zM39 66h3v3h-3zM63 66h3v3h-3zM66 66h3v3h-3zM12 69h3v3h-3zM21 69h3v3h-3zM30 69h3v3h-3zM42 69h3v3h-3zM75 69h3v3h-3z"/><path fill="#101030" d="M87 0h3v3h-3zM84 3h3v3h-3zM84 6h3v3h-3z"/><path fill="#202030" d="M21 3h3v3h-3zM12 9h3v3h-3zM78 9h3v3h-3zM9 12h3v3h-3zM63 18h3v3h-3zM72 18h3v3h-3zM81 18h3v3h-3zM84 18h3v3h-3zM90 18h3v3h-3zM0 21h3v3h-3zM27 21h3v3h-3zM69 21h3v3h-3zM72 21h3v3h-3zM75 21h3v3h-3zM87 21h3v3h-3zM3 24h3v3h-3zM87 24h3v3h-3zM51 27h3v3h-3zM60 27h3v3h-3zM69 27h3v3h-3zM75 27h3v3h-3zM78 27h3v3h-3zM90 27h3v3h-3z"/><path fill="#402050" d="M39 3h3v3h-3zM39 9h3v3h-3zM42 12h3v3h-3z"/><path fill="#201020" d="M45 3h3v3h-3zM45 6h3v3h-3zM51 6h3v3h-3zM21 9h3v3h-3zM60 9h3v3h-3zM63 9h3v3h-3zM12 12h3v3h-3zM27 12h3v3h-3zM30 12h3v3h-3zM36 12h3v3h-3zM54 12h3v3h-3zM75 12h3v3h-3zM78 12h3v3h-3zM27 15h3v3h-3zM39 15h3v3h-3zM84 15h3v3h-3zM87 15h3v3h-3zM30 18h3v3h-3zM48 21h3v3h-3zM54 21h3v3h-3zM6 24h3v3h-3zM63 24h3v3h-3zM69 24h3v3h-3zM72 24h3v3h-3zM75 24h3v3h-3zM78 24h3v3h-3zM84 24h3v3h-3zM36 30h3v3h-3zM18 33h3v3h-3zM24 33h3v3h-3zM39 36h3v3h-3zM48 36h3v3h-3zM57 36h3v3h-3zM84 36h3v3h-3zM12 39h3v3h-3zM30 39h3v3h-3zM33 39h3v3h-3z"/><path fill="#703060" d="M48 3h3v3h-3z"/><path fill="#200010" d="M54 3h3v3h-3zM54 6h3v3h-3z"/><path fill="#301030" d="M60 3h3v3h-3zM60 6h3v3h-3zM57 9h3v3h-3z"/><path fill="#202040" d="M66 3h3v3h-3zM75 6h3v3h-3zM87 9h3v3h-3zM0 12h3v3h-3zM3 12h3v3h-3z"/><path fill="#504070" d="M18 6h3v3h-3z"/><path fill="#503060" d="M39 6h3v3h-3zM42 6h3v3h-3zM18 9h3v3h-3zM36 9h3v3h-3zM42 9h3v3h-3zM39 12h3v3h-3z"/><path fill="#d0e0f0" d="M48 6h3v3h-3zM15 15h3v3h-3zM81 21h3v3h-3zM12 24h3v3h-3zM18 24h3v3h-3zM30 27h3v3h-3zM81 27h3v3h-3z"/><path fill="#402030" d="M45 9h3v3h-3zM48 9h3v3h-3zM48 12h3v3h-3z"/><path fill="#502040" d="M54 9h3v3h-3zM51 15h3v3h-3z"/><path fill="#302030" d="M21 12h3v3h-3zM57 12h3v3h-3zM9 15h3v3h-3zM57 15h3v3h-3zM21 18h3v3h-3zM24 18h3v3h-3zM45 18h3v3h-3zM54 18h3v3h-3zM57 18h3v3h-3zM45 21h3v3h-3zM57 21h3v3h-3zM45 24h3v3h-3zM51 24h3v3h-3zM54 24h3v3h-3zM48 27h3v3h-3zM6 30h3v3h-3zM9 30h3v3h-3zM42 30h3v3h-3zM63 30h3v3h-3zM75 30h3v3h-3zM33 33h3v3h-3zM75 33h3v3h-3zM36 36h3v3h-3zM42 36h3v3h-3zM72 36h3v3h-3zM75 36h3v3h-3zM21 39h3v3h-3zM42 39h3v3h-3zM45 39h3v3h-3z"/><path fill="#201010" d="M51 12h3v3h-3zM3 39h3v3h-3zM9 39h3v3h-3zM51 39h3v3h-3zM54 39h3v3h-3zM75 39h3v3h-3zM84 39h3v3h-3zM87 39h3v3h-3zM90 39h3v3h-3zM9 42h3v3h-3zM21 42h3v3h-3zM27 42h3v3h-3zM30 42h3v3h-3zM36 42h3v3h-3zM39 42h3v3h-3zM42 42h3v3h-3zM45 42h3v3h-3zM72 42h3v3h-3zM78 42h3v3h-3zM81 42h3v3h-3zM84 42h3v3h-3zM87 42h3v3h-3zM18 45h3v3h-3zM21 45h3v3h-3zM24 45h3v3h-3zM27 45h3v3h-3zM30 45h3v3h-3zM33 45h3v3h-3zM39 45h3v3h-3zM42 45h3v3h-3zM45 45h3v3h-3zM48 45h3v3h-3zM51 45h3v3h-3zM57 45h3v3h-3zM63 45h3v3h-3zM66 45h3v3h-3zM75 45h3v3h-3zM84 45h3v3h-3zM87 45h3v3h-3zM90 45h3v3h-3zM0 48h3v3h-3zM21 48h3v3h-3zM24 48h3v3h-3zM27 48h3v3h-3zM30 48h3v3h-3zM33 48h3v3h-3zM36 48h3v3h-3zM39 48h3v3h-3zM42 48h3v3h-3zM45 48h3v3h-3zM48 48h3v3h-3zM51 48h3v3h-3zM54 48h3v3h-3zM60 48h3v3h-3zM63 48h3v3h-3zM66 48h3v3h-3zM72 48h3v3h-3zM87 48h3v3h-3zM0 51h3v3h-3zM3 51h3v3h-3zM18 51h3v3h-3zM21 51h3v3h-3zM27 51h3v3h-3zM33 51h3v3h-3zM45 51h3v3h-3zM48 51h3v3h-3zM60 51h3v3h-3zM75 51h3v3h-3zM81 51h3v3h-3zM84 51h3v3h-3zM87 51h3v3h-3zM0 54h3v3h-3zM6 54h3v3h-3zM12 54h3v3h-3zM15 54h3v3h-3zM24 54h3v3h-3zM36 54h3v3h-3zM39 54h3v3h-3zM48 54h3v3h-3zM66 54h3v3h-3zM69 54h3v3h-3zM72 54h3v3h-3zM75 54h3v3h-3zM81 54h3v3h-3zM90 54h3v3h-3zM6 57h3v3h-3zM9 57h3v3h-3zM15 57h3v3h-3zM21 57h3v3h-3zM24 57h3v3h-3zM27 57h3v3h-3zM30 57h3v3h-3zM33 57h3v3h-3zM51 57h3v3h-3zM63 57h3v3h-3zM66 57h3v3h-3zM72 57h3v3h-3zM90 57h3v3h-3zM3 60h3v3h-3zM6 60h3v3h-3zM12 60h3v3h-3zM24 60h3v3h-3zM30 60h3v3h-3zM33 60h3v3h-3zM57 60h3v3h-3zM60 60h3v3h-3zM63 60h3v3h-3zM72 60h3v3h-3zM78 60h3v3h-3zM84 60h3v3h-3zM87 60h3v3h-3zM0 63h3v3h-3zM6 63h3v3h-3zM15 63h3v3h-3zM18 63h3v3h-3zM21 63h3v3h-3zM33 63h3v3h-3zM39 63h3v3h-3zM42 63h3v3h-3zM48 63h3v3h-3zM66 63h3v3h-3zM72 63h3v3h-3zM75 63h3v3h-3zM81 63h3v3h-3zM87 63h3v3h-3zM90 63h3v3h-3zM6 66h3v3h-3zM9 66h3v3h-3zM15 66h3v3h-3zM30 66h3v3h-3zM42 66h3v3h-3zM45 66h3v3h-3zM48 66h3v3h-3zM51 66h3v3h-3zM54 66h3v3h-3zM57 66h3v3h-3zM69 66h3v3h-3zM72 66h3v3h-3zM78 66h3v3h-3zM81 66h3v3h-3zM87 66h3v3h-3zM0 69h3v3h-3zM9 69h3v3h-3zM15 69h3v3h-3zM18 69h3v3h-3zM24 69h3v3h-3zM39 69h3v3h-3zM45 69h3v3h-3zM51 69h3v3h-3zM54 69h3v3h-3zM57 69h3v3h-3zM66 69h3v3h-3zM78 69h3v3h-3zM81 69h3v3h-3zM84 69h3v3h-3zM87 69h3v3h-3zM90 69h3v3h-3z"/><path fill="#503050" d="M60 12h3v3h-3zM51 18h3v3h-3zM36 21h3v3h-3z"/><path fill="#806080" d="M18 15h3v3h-3zM30 21h3v3h-3z"/><path fill="#907090" d="M21 15h3v3h-3z"/><path fill="#705070" d="M24 15h3v3h-3z"/><path fill="#603060" d="M48 15h3v3h-3z"/><path fill="#603050" d="M54 15h3v3h-3z"/><path fill="#303040" d="M81 15h3v3h-3zM66 21h3v3h-3zM9 24h3v3h-3zM57 24h3v3h-3zM81 24h3v3h-3zM3 27h3v3h-3zM84 27h3v3h-3zM45 30h3v3h-3z"/><path fill="#605070" d="M12 18h3v3h-3zM33 18h3v3h-3zM36 24h3v3h-3z"/><path fill="#706080" d="M15 18h3v3h-3z"/><path fill="#202020" d="M18 18h3v3h-3zM9 21h3v3h-3zM3 30h3v3h-3zM18 30h3v3h-3zM27 30h3v3h-3zM57 30h3v3h-3zM60 30h3v3h-3zM69 30h3v3h-3zM72 30h3v3h-3zM84 30h3v3h-3zM90 30h3v3h-3zM3 33h3v3h-3zM6 33h3v3h-3zM27 33h3v3h-3zM39 33h3v3h-3zM48 33h3v3h-3zM57 33h3v3h-3zM60 33h3v3h-3zM78 33h3v3h-3zM81 33h3v3h-3zM90 33h3v3h-3zM9 36h3v3h-3zM33 36h3v3h-3zM15 39h3v3h-3zM24 39h3v3h-3zM57 39h3v3h-3zM63 39h3v3h-3z"/><path fill="#806090" d="M27 18h3v3h-3z"/><path fill="#504060" d="M42 18h3v3h-3zM12 21h3v3h-3zM9 27h3v3h-3z"/><path fill="#504050" d="M15 21h3v3h-3zM15 24h3v3h-3zM15 27h3v3h-3zM30 30h3v3h-3z"/><path fill="#605060" d="M18 21h3v3h-3zM24 21h3v3h-3zM24 27h3v3h-3z"/><path fill="#b090b0" d="M21 21h3v3h-3zM24 24h3v3h-3z"/><path fill="#705080" d="M33 21h3v3h-3z"/><path fill="#403040" d="M51 21h3v3h-3zM27 24h3v3h-3zM48 24h3v3h-3zM12 27h3v3h-3zM18 27h3v3h-3zM21 27h3v3h-3zM48 30h3v3h-3zM54 30h3v3h-3zM66 30h3v3h-3zM66 33h3v3h-3zM72 33h3v3h-3zM87 33h3v3h-3zM12 36h3v3h-3zM24 36h3v3h-3z"/><path fill="#706070" d="M27 27h3v3h-3zM21 33h3v3h-3z"/><path fill="#907080" d="M21 30h3v3h-3z"/><path fill="#303030" d="M24 30h3v3h-3z"/><path fill="#604060" d="M33 30h3v3h-3z"/><path fill="#302020" d="M6 36h3v3h-3zM30 36h3v3h-3zM45 36h3v3h-3zM60 36h3v3h-3zM78 36h3v3h-3zM6 39h3v3h-3zM18 39h3v3h-3zM48 39h3v3h-3zM0 42h3v3h-3zM12 42h3v3h-3zM48 42h3v3h-3zM63 42h3v3h-3zM69 42h3v3h-3zM6 45h3v3h-3zM81 45h3v3h-3zM3 48h3v3h-3zM18 48h3v3h-3zM69 48h3v3h-3zM81 48h3v3h-3zM30 51h3v3h-3zM39 51h3v3h-3zM42 51h3v3h-3zM54 51h3v3h-3zM57 51h3v3h-3zM63 51h3v3h-3zM72 51h3v3h-3zM90 51h3v3h-3zM57 54h3v3h-3zM60 54h3v3h-3zM63 54h3v3h-3zM78 54h3v3h-3zM87 54h3v3h-3zM0 57h3v3h-3zM12 57h3v3h-3zM48 57h3v3h-3zM57 57h3v3h-3zM69 57h3v3h-3zM81 57h3v3h-3zM87 57h3v3h-3zM0 60h3v3h-3zM9 60h3v3h-3zM15 60h3v3h-3zM18 60h3v3h-3zM21 60h3v3h-3zM36 60h3v3h-3zM42 60h3v3h-3zM51 60h3v3h-3zM66 60h3v3h-3zM9 63h3v3h-3zM12 63h3v3h-3zM51 63h3v3h-3zM63 63h3v3h-3zM0 66h3v3h-3zM3 66h3v3h-3zM27 66h3v3h-3zM6 69h3v3h-3zM27 69h3v3h-3zM60 69h3v3h-3zM63 69h3v3h-3zM69 69h3v3h-3z"/><path fill="#504040" d="M15 36h3v3h-3z"/><path fill="#100000" d="M39 39h3v3h-3zM60 39h3v3h-3zM69 39h3v3h-3zM81 39h3v3h-3zM3 42h3v3h-3zM6 42h3v3h-3zM33 42h3v3h-3zM51 42h3v3h-3zM60 42h3v3h-3zM9 45h3v3h-3zM15 45h3v3h-3zM36 45h3v3h-3zM69 45h3v3h-3zM72 45h3v3h-3zM78 45h3v3h-3zM6 48h3v3h-3zM9 48h3v3h-3zM15 48h3v3h-3zM75 48h3v3h-3zM90 48h3v3h-3zM9 51h3v3h-3zM51 51h3v3h-3zM69 51h3v3h-3zM78 51h3v3h-3zM9 54h3v3h-3zM21 54h3v3h-3zM27 54h3v3h-3zM33 54h3v3h-3zM18 57h3v3h-3zM36 57h3v3h-3zM42 57h3v3h-3zM54 57h3v3h-3zM60 57h3v3h-3zM84 57h3v3h-3zM54 60h3v3h-3zM75 60h3v3h-3zM90 60h3v3h-3zM3 63h3v3h-3zM27 63h3v3h-3zM57 63h3v3h-3zM69 63h3v3h-3zM78 63h3v3h-3zM18 66h3v3h-3zM24 66h3v3h-3zM33 66h3v3h-3zM36 66h3v3h-3zM60 66h3v3h-3zM75 66h3v3h-3zM84 66h3v3h-3zM90 66h3v3h-3zM3 69h3v3h-3zM33 69h3v3h-3zM36 69h3v3h-3zM48 69h3v3h-3zM72 69h3v3h-3z"/></svg></div>
<div class="a" style="left:894px;top:254px;width:92px;height:69px;overflow:hidden;background:#222;box-shadow:3px 3px 3px rgba(0,0,0,.35)"><svg width="92" height="69" viewBox="0 0 92 69" style="display:block;filter:blur(0.5px)"><path fill="#100010" d="M0 0h3v3h-3zM6 0h3v3h-3zM9 0h3v3h-3zM24 0h3v3h-3zM27 0h3v3h-3zM33 0h3v3h-3zM36 0h3v3h-3zM57 0h3v3h-3zM69 0h3v3h-3zM72 0h3v3h-3zM75 0h3v3h-3zM78 0h3v3h-3zM81 0h3v3h-3zM84 0h3v3h-3zM0 3h3v3h-3zM12 3h3v3h-3zM72 3h3v3h-3zM75 3h3v3h-3zM78 3h3v3h-3zM87 3h3v3h-3zM90 3h3v3h-3zM6 6h3v3h-3zM9 6h3v3h-3zM15 6h3v3h-3zM33 6h3v3h-3zM63 6h3v3h-3zM69 6h3v3h-3zM72 6h3v3h-3zM78 6h3v3h-3zM81 6h3v3h-3zM84 6h3v3h-3zM84 9h3v3h-3zM90 9h3v3h-3z"/><path fill="#000000" d="M3 0h3v3h-3zM12 0h3v3h-3zM18 0h3v3h-3zM21 0h3v3h-3zM39 0h3v3h-3zM48 0h3v3h-3zM51 0h3v3h-3zM54 0h3v3h-3zM60 0h3v3h-3zM87 0h3v3h-3zM3 3h3v3h-3zM15 3h3v3h-3zM18 3h3v3h-3zM21 3h3v3h-3zM27 3h3v3h-3zM33 3h3v3h-3zM45 3h3v3h-3zM48 3h3v3h-3zM54 3h3v3h-3zM81 3h3v3h-3zM0 6h3v3h-3zM12 6h3v3h-3zM18 6h3v3h-3zM21 6h3v3h-3zM27 6h3v3h-3zM54 6h3v3h-3zM57 6h3v3h-3zM60 6h3v3h-3zM87 6h3v3h-3zM90 6h3v3h-3zM0 9h3v3h-3zM6 9h3v3h-3zM78 9h3v3h-3zM90 12h3v3h-3z"/><path fill="#101010" d="M15 0h3v3h-3zM30 0h3v3h-3zM42 0h3v3h-3zM63 0h3v3h-3zM66 0h3v3h-3zM90 0h3v3h-3zM6 3h3v3h-3zM9 3h3v3h-3zM24 3h3v3h-3zM30 3h3v3h-3zM36 3h3v3h-3zM39 3h3v3h-3zM42 3h3v3h-3zM57 3h3v3h-3zM60 3h3v3h-3zM63 3h3v3h-3zM66 3h3v3h-3zM69 3h3v3h-3zM84 3h3v3h-3zM3 6h3v3h-3zM24 6h3v3h-3zM30 6h3v3h-3zM36 6h3v3h-3zM39 6h3v3h-3zM42 6h3v3h-3zM45 6h3v3h-3zM48 6h3v3h-3zM51 6h3v3h-3zM66 6h3v3h-3zM75 6h3v3h-3zM3 9h3v3h-3zM9 9h3v3h-3zM21 9h3v3h-3zM24 9h3v3h-3zM27 9h3v3h-3zM39 9h3v3h-3zM63 9h3v3h-3zM69 9h3v3h-3zM75 9h3v3h-3zM81 9h3v3h-3zM42 12h3v3h-3zM78 12h3v3h-3zM84 12h3v3h-3zM6 15h3v3h-3zM63 15h3v3h-3zM81 18h3v3h-3zM87 18h3v3h-3zM81 33h3v3h-3zM87 36h3v3h-3zM90 36h3v3h-3zM12 39h3v3h-3zM45 39h3v3h-3zM54 39h3v3h-3zM66 39h3v3h-3zM72 39h3v3h-3zM0 45h3v3h-3zM3 45h3v3h-3zM45 45h3v3h-3zM57 45h3v3h-3zM6 48h3v3h-3zM66 48h3v3h-3zM72 48h3v3h-3zM6 51h3v3h-3zM9 51h3v3h-3zM15 51h3v3h-3zM18 51h3v3h-3zM30 51h3v3h-3zM54 51h3v3h-3zM63 51h3v3h-3zM72 51h3v3h-3zM78 51h3v3h-3zM0 54h3v3h-3zM36 54h3v3h-3zM42 54h3v3h-3zM45 54h3v3h-3zM51 54h3v3h-3zM54 54h3v3h-3zM72 54h3v3h-3zM78 54h3v3h-3zM90 54h3v3h-3zM45 57h3v3h-3zM57 57h3v3h-3zM60 57h3v3h-3zM63 57h3v3h-3zM66 57h3v3h-3zM78 57h3v3h-3zM33 60h3v3h-3zM51 60h3v3h-3zM12 63h3v3h-3zM15 63h3v3h-3zM18 63h3v3h-3zM21 63h3v3h-3zM27 63h3v3h-3zM39 63h3v3h-3zM48 63h3v3h-3zM60 63h3v3h-3zM69 63h3v3h-3zM81 63h3v3h-3zM90 63h3v3h-3zM24 66h3v3h-3zM51 66h3v3h-3zM12 69h3v3h-3zM27 69h3v3h-3zM75 69h3v3h-3zM78 69h3v3h-3zM84 69h3v3h-3z"/><path fill="#201020" d="M45 0h3v3h-3zM51 3h3v3h-3z"/><path fill="#201010" d="M12 9h3v3h-3zM30 9h3v3h-3zM33 9h3v3h-3zM42 9h3v3h-3zM48 9h3v3h-3zM54 9h3v3h-3zM57 9h3v3h-3zM66 9h3v3h-3zM87 9h3v3h-3zM48 12h3v3h-3zM57 12h3v3h-3zM24 15h3v3h-3zM30 15h3v3h-3zM57 15h3v3h-3zM66 15h3v3h-3zM72 15h3v3h-3zM81 15h3v3h-3zM90 15h3v3h-3zM69 18h3v3h-3zM75 18h3v3h-3zM84 21h3v3h-3zM78 30h3v3h-3zM3 33h3v3h-3zM60 33h3v3h-3zM66 33h3v3h-3zM90 33h3v3h-3zM45 36h3v3h-3zM48 36h3v3h-3zM60 36h3v3h-3zM39 39h3v3h-3zM69 39h3v3h-3zM87 39h3v3h-3zM66 42h3v3h-3zM69 42h3v3h-3zM12 51h3v3h-3zM24 51h3v3h-3zM27 51h3v3h-3zM42 51h3v3h-3zM48 51h3v3h-3zM51 51h3v3h-3zM66 51h3v3h-3zM69 51h3v3h-3zM75 51h3v3h-3zM12 54h3v3h-3zM15 54h3v3h-3zM21 54h3v3h-3zM24 54h3v3h-3zM60 54h3v3h-3zM63 54h3v3h-3zM75 54h3v3h-3zM84 54h3v3h-3zM0 57h3v3h-3zM12 57h3v3h-3zM15 57h3v3h-3zM18 57h3v3h-3zM24 57h3v3h-3zM27 57h3v3h-3zM69 57h3v3h-3zM72 57h3v3h-3zM75 57h3v3h-3zM81 57h3v3h-3zM84 57h3v3h-3zM0 60h3v3h-3zM6 60h3v3h-3zM9 60h3v3h-3zM18 60h3v3h-3zM27 60h3v3h-3zM30 60h3v3h-3zM36 60h3v3h-3zM48 60h3v3h-3zM54 60h3v3h-3zM57 60h3v3h-3zM60 60h3v3h-3zM63 60h3v3h-3zM72 60h3v3h-3zM75 60h3v3h-3zM87 60h3v3h-3zM0 63h3v3h-3zM24 63h3v3h-3zM36 63h3v3h-3zM42 63h3v3h-3zM51 63h3v3h-3zM54 63h3v3h-3zM63 63h3v3h-3zM66 63h3v3h-3zM75 63h3v3h-3zM84 63h3v3h-3zM0 66h3v3h-3zM3 66h3v3h-3zM12 66h3v3h-3zM15 66h3v3h-3zM18 66h3v3h-3zM21 66h3v3h-3zM27 66h3v3h-3zM30 66h3v3h-3zM36 66h3v3h-3zM39 66h3v3h-3zM42 66h3v3h-3zM54 66h3v3h-3zM57 66h3v3h-3zM63 66h3v3h-3zM66 66h3v3h-3zM78 66h3v3h-3zM81 66h3v3h-3zM84 66h3v3h-3zM87 66h3v3h-3zM0 69h3v3h-3zM15 69h3v3h-3zM18 69h3v3h-3zM24 69h3v3h-3zM33 69h3v3h-3zM39 69h3v3h-3zM45 69h3v3h-3zM48 69h3v3h-3zM51 69h3v3h-3zM57 69h3v3h-3zM60 69h3v3h-3zM63 69h3v3h-3zM72 69h3v3h-3zM81 69h3v3h-3zM87 69h3v3h-3zM90 69h3v3h-3z"/><path fill="#100000" d="M15 9h3v3h-3zM36 9h3v3h-3zM51 9h3v3h-3zM72 9h3v3h-3zM75 12h3v3h-3zM3 51h3v3h-3zM57 51h3v3h-3zM87 51h3v3h-3zM90 51h3v3h-3zM6 54h3v3h-3zM30 54h3v3h-3zM57 54h3v3h-3zM9 57h3v3h-3zM51 57h3v3h-3zM90 57h3v3h-3zM12 60h3v3h-3zM15 60h3v3h-3zM21 60h3v3h-3zM24 60h3v3h-3zM42 60h3v3h-3zM66 60h3v3h-3zM69 60h3v3h-3zM78 60h3v3h-3zM90 60h3v3h-3zM3 63h3v3h-3zM6 63h3v3h-3zM9 63h3v3h-3zM30 63h3v3h-3zM72 63h3v3h-3zM87 63h3v3h-3zM9 66h3v3h-3zM69 66h3v3h-3zM72 66h3v3h-3zM75 66h3v3h-3zM3 69h3v3h-3zM6 69h3v3h-3zM21 69h3v3h-3zM30 69h3v3h-3z"/><path fill="#202020" d="M18 9h3v3h-3zM60 9h3v3h-3zM87 12h3v3h-3zM75 15h3v3h-3zM78 15h3v3h-3zM6 18h3v3h-3zM66 18h3v3h-3zM84 18h3v3h-3zM3 54h3v3h-3zM9 54h3v3h-3zM18 54h3v3h-3zM27 54h3v3h-3zM39 54h3v3h-3zM66 54h3v3h-3zM69 54h3v3h-3zM81 54h3v3h-3zM87 54h3v3h-3zM6 57h3v3h-3zM21 57h3v3h-3zM30 57h3v3h-3zM36 57h3v3h-3zM42 57h3v3h-3zM48 57h3v3h-3z"/><path fill="#302020" d="M45 9h3v3h-3zM0 12h3v3h-3zM12 12h3v3h-3zM21 12h3v3h-3zM27 12h3v3h-3zM30 12h3v3h-3zM33 12h3v3h-3zM39 12h3v3h-3zM45 12h3v3h-3zM51 12h3v3h-3zM54 12h3v3h-3zM60 12h3v3h-3zM66 12h3v3h-3zM69 12h3v3h-3zM72 12h3v3h-3zM81 12h3v3h-3zM9 15h3v3h-3zM15 15h3v3h-3zM87 15h3v3h-3zM60 18h3v3h-3zM78 18h3v3h-3zM0 21h3v3h-3zM6 21h3v3h-3zM69 21h3v3h-3zM87 21h3v3h-3zM90 21h3v3h-3zM84 24h3v3h-3zM87 24h3v3h-3zM90 24h3v3h-3zM87 30h3v3h-3zM90 30h3v3h-3zM12 33h3v3h-3zM78 36h3v3h-3zM81 36h3v3h-3zM3 39h3v3h-3zM15 39h3v3h-3zM57 39h3v3h-3zM60 39h3v3h-3zM63 39h3v3h-3zM75 39h3v3h-3zM78 39h3v3h-3zM84 39h3v3h-3zM90 39h3v3h-3zM9 45h3v3h-3zM15 45h3v3h-3zM3 48h3v3h-3zM18 48h3v3h-3zM33 48h3v3h-3zM36 48h3v3h-3zM51 48h3v3h-3zM0 51h3v3h-3zM39 51h3v3h-3zM81 51h3v3h-3zM33 54h3v3h-3zM48 54h3v3h-3zM3 57h3v3h-3zM33 57h3v3h-3zM39 57h3v3h-3zM54 57h3v3h-3zM87 57h3v3h-3zM3 60h3v3h-3zM39 60h3v3h-3zM45 60h3v3h-3zM81 60h3v3h-3zM84 60h3v3h-3zM33 63h3v3h-3zM45 63h3v3h-3zM57 63h3v3h-3zM78 63h3v3h-3zM6 66h3v3h-3zM33 66h3v3h-3zM45 66h3v3h-3zM48 66h3v3h-3zM60 66h3v3h-3zM90 66h3v3h-3zM9 69h3v3h-3zM36 69h3v3h-3zM42 69h3v3h-3zM54 69h3v3h-3zM66 69h3v3h-3zM69 69h3v3h-3z"/><path fill="#303020" d="M3 12h3v3h-3zM6 12h3v3h-3zM18 15h3v3h-3zM72 18h3v3h-3zM9 21h3v3h-3zM78 21h3v3h-3zM0 36h3v3h-3zM24 39h3v3h-3zM27 39h3v3h-3zM42 39h3v3h-3zM48 39h3v3h-3zM51 39h3v3h-3zM9 42h3v3h-3zM45 42h3v3h-3zM48 42h3v3h-3zM51 42h3v3h-3zM54 42h3v3h-3zM81 42h3v3h-3zM21 51h3v3h-3zM33 51h3v3h-3zM36 51h3v3h-3zM45 51h3v3h-3zM60 51h3v3h-3zM84 51h3v3h-3z"/><path fill="#101000" d="M9 12h3v3h-3zM15 12h3v3h-3zM24 12h3v3h-3zM3 42h3v3h-3zM39 42h3v3h-3zM90 42h3v3h-3zM24 45h3v3h-3zM30 45h3v3h-3zM33 45h3v3h-3zM36 45h3v3h-3zM60 45h3v3h-3zM69 45h3v3h-3zM90 45h3v3h-3zM24 48h3v3h-3zM48 48h3v3h-3zM54 48h3v3h-3zM69 48h3v3h-3zM81 48h3v3h-3z"/><path fill="#202010" d="M18 12h3v3h-3zM63 12h3v3h-3zM12 15h3v3h-3zM51 18h3v3h-3zM3 24h3v3h-3zM0 27h3v3h-3zM9 27h3v3h-3zM66 27h3v3h-3zM69 27h3v3h-3zM72 27h3v3h-3zM90 27h3v3h-3zM12 30h3v3h-3zM63 30h3v3h-3zM66 30h3v3h-3zM81 30h3v3h-3zM24 33h3v3h-3zM45 33h3v3h-3zM57 33h3v3h-3zM30 36h3v3h-3zM69 36h3v3h-3zM75 36h3v3h-3zM0 39h3v3h-3zM6 39h3v3h-3zM9 39h3v3h-3zM33 39h3v3h-3zM0 42h3v3h-3zM6 42h3v3h-3zM12 42h3v3h-3zM18 42h3v3h-3zM21 42h3v3h-3zM24 42h3v3h-3zM27 42h3v3h-3zM60 42h3v3h-3zM63 42h3v3h-3zM75 42h3v3h-3zM87 42h3v3h-3zM18 45h3v3h-3zM21 45h3v3h-3zM27 45h3v3h-3zM42 45h3v3h-3zM48 45h3v3h-3zM51 45h3v3h-3zM54 45h3v3h-3zM63 45h3v3h-3zM72 45h3v3h-3zM78 45h3v3h-3zM84 45h3v3h-3zM87 45h3v3h-3zM9 48h3v3h-3zM12 48h3v3h-3zM21 48h3v3h-3zM30 48h3v3h-3zM42 48h3v3h-3zM60 48h3v3h-3zM75 48h3v3h-3zM87 48h3v3h-3zM90 48h3v3h-3z"/><path fill="#504040" d="M36 12h3v3h-3z"/><path fill="#403030" d="M0 15h3v3h-3zM3 15h3v3h-3zM33 15h3v3h-3zM42 15h3v3h-3zM60 15h3v3h-3zM69 15h3v3h-3zM72 21h3v3h-3zM81 21h3v3h-3zM78 24h3v3h-3zM78 27h3v3h-3zM75 30h3v3h-3zM9 33h3v3h-3zM84 33h3v3h-3zM87 33h3v3h-3zM15 42h3v3h-3zM30 42h3v3h-3zM33 42h3v3h-3zM36 42h3v3h-3zM42 42h3v3h-3zM57 42h3v3h-3zM72 42h3v3h-3zM78 42h3v3h-3zM84 42h3v3h-3zM6 45h3v3h-3zM12 45h3v3h-3zM39 45h3v3h-3zM66 45h3v3h-3zM75 45h3v3h-3z"/><path fill="#403020" d="M21 15h3v3h-3zM27 15h3v3h-3zM45 15h3v3h-3zM3 18h3v3h-3zM27 18h3v3h-3zM42 18h3v3h-3zM45 18h3v3h-3zM48 21h3v3h-3zM51 21h3v3h-3zM9 24h3v3h-3zM48 24h3v3h-3zM12 27h3v3h-3zM30 27h3v3h-3zM30 30h3v3h-3zM54 30h3v3h-3zM33 33h3v3h-3zM72 33h3v3h-3zM75 33h3v3h-3zM9 36h3v3h-3zM12 36h3v3h-3zM15 36h3v3h-3zM18 36h3v3h-3zM21 36h3v3h-3zM21 39h3v3h-3zM81 39h3v3h-3zM0 48h3v3h-3zM15 48h3v3h-3zM27 48h3v3h-3zM39 48h3v3h-3zM45 48h3v3h-3zM57 48h3v3h-3zM63 48h3v3h-3zM78 48h3v3h-3z"/><path fill="#605040" d="M36 15h3v3h-3zM39 15h3v3h-3zM0 18h3v3h-3zM39 18h3v3h-3zM3 21h3v3h-3zM66 21h3v3h-3zM81 27h3v3h-3zM0 30h3v3h-3zM3 36h3v3h-3zM36 36h3v3h-3zM42 36h3v3h-3zM36 39h3v3h-3z"/><path fill="#f0c060" d="M48 15h3v3h-3zM9 18h3v3h-3zM33 24h3v3h-3zM36 24h3v3h-3zM75 24h3v3h-3zM3 27h3v3h-3zM54 27h3v3h-3zM63 27h3v3h-3zM75 27h3v3h-3zM84 30h3v3h-3zM51 33h3v3h-3zM33 36h3v3h-3zM54 36h3v3h-3zM57 36h3v3h-3zM84 48h3v3h-3z"/><path fill="#504030" d="M51 15h3v3h-3zM54 15h3v3h-3zM24 18h3v3h-3zM63 18h3v3h-3zM33 21h3v3h-3zM60 21h3v3h-3zM75 21h3v3h-3zM0 24h3v3h-3zM6 24h3v3h-3zM69 24h3v3h-3zM72 24h3v3h-3zM81 24h3v3h-3zM45 27h3v3h-3zM6 30h3v3h-3zM9 30h3v3h-3zM15 30h3v3h-3zM57 30h3v3h-3zM60 30h3v3h-3zM0 33h3v3h-3zM6 33h3v3h-3zM18 33h3v3h-3zM48 33h3v3h-3zM54 33h3v3h-3zM6 36h3v3h-3zM39 36h3v3h-3zM63 36h3v3h-3zM66 36h3v3h-3zM84 36h3v3h-3z"/><path fill="#302030" d="M84 15h3v3h-3z"/><path fill="#705040" d="M12 18h3v3h-3zM48 18h3v3h-3zM63 21h3v3h-3zM48 27h3v3h-3zM33 30h3v3h-3zM42 30h3v3h-3zM69 33h3v3h-3zM24 36h3v3h-3z"/><path fill="#706040" d="M15 18h3v3h-3zM42 21h3v3h-3zM36 30h3v3h-3zM39 30h3v3h-3zM63 33h3v3h-3zM27 36h3v3h-3z"/><path fill="#605030" d="M18 18h3v3h-3zM33 18h3v3h-3zM54 18h3v3h-3zM12 24h3v3h-3zM60 24h3v3h-3zM63 24h3v3h-3zM66 24h3v3h-3zM15 27h3v3h-3zM57 27h3v3h-3zM60 27h3v3h-3zM24 30h3v3h-3zM48 30h3v3h-3zM39 33h3v3h-3z"/><path fill="#504020" d="M21 18h3v3h-3zM24 27h3v3h-3z"/><path fill="#907050" d="M30 18h3v3h-3zM12 21h3v3h-3zM15 21h3v3h-3zM45 21h3v3h-3zM15 24h3v3h-3zM42 24h3v3h-3zM54 24h3v3h-3zM18 30h3v3h-3zM45 30h3v3h-3z"/><path fill="#806050" d="M36 18h3v3h-3zM3 30h3v3h-3zM36 33h3v3h-3z"/><path fill="#503020" d="M57 18h3v3h-3z"/><path fill="#d0e0f0" d="M90 18h3v3h-3zM27 33h3v3h-3zM18 39h3v3h-3zM30 39h3v3h-3zM81 45h3v3h-3z"/><path fill="#302010" d="M18 21h3v3h-3zM57 24h3v3h-3zM27 30h3v3h-3z"/><path fill="#604030" d="M21 21h3v3h-3zM54 21h3v3h-3zM21 30h3v3h-3zM30 33h3v3h-3zM42 33h3v3h-3zM51 36h3v3h-3z"/><path fill="#b08050" d="M24 21h3v3h-3z"/><path fill="#b08060" d="M27 21h3v3h-3z"/><path fill="#c09060" d="M30 21h3v3h-3zM51 24h3v3h-3zM27 27h3v3h-3z"/><path fill="#806040" d="M36 21h3v3h-3zM57 21h3v3h-3zM27 24h3v3h-3zM45 24h3v3h-3zM33 27h3v3h-3zM42 27h3v3h-3zM15 33h3v3h-3z"/><path fill="#a08060" d="M39 21h3v3h-3z"/><path fill="#b09060" d="M18 24h3v3h-3zM30 24h3v3h-3z"/><path fill="#705030" d="M21 24h3v3h-3zM51 27h3v3h-3zM21 33h3v3h-3z"/><path fill="#a08050" d="M24 24h3v3h-3zM18 27h3v3h-3z"/><path fill="#f0c080" d="M39 24h3v3h-3z"/><path fill="#807050" d="M6 27h3v3h-3zM36 27h3v3h-3z"/><path fill="#907040" d="M21 27h3v3h-3z"/><path fill="#d0b080" d="M39 27h3v3h-3z"/><path fill="#604040" d="M84 27h3v3h-3zM87 27h3v3h-3zM78 33h3v3h-3z"/><path fill="#a07050" d="M51 30h3v3h-3z"/><path fill="#706050" d="M69 30h3v3h-3zM72 30h3v3h-3z"/><path fill="#404030" d="M72 36h3v3h-3z"/></svg></div></div>
<div class="a" style="left:1406px;top:138px;width:17px;height:271px;background:#f0f0f0"></div>
<div class="a" style="left:1406px;top:155px;width:16px;height:130px;background:#cdcdcd"></div>
<svg class="a" style="left:1409px;top:143px" width="10" height="7" viewBox="0 0 10 7"><path d="M1 5.5 L5 1.5 L9 5.5" stroke="#606060" stroke-width="1.8" fill="none"/></svg>
<svg class="a" style="left:1409px;top:397px" width="10" height="7" viewBox="0 0 10 7"><path d="M1 1.5 L5 5.5 L9 1.5" stroke="#606060" stroke-width="1.8" fill="none"/></svg>

<!-- preview -->
<div class="a" style="left:207px;top:418px;width:1218px;height:360px;background:#808080"></div>

<svg class="a" style="left:577px;top:418px" width="478" height="360" viewBox="0 0 478 360">
<defs>
<filter id="b1" x="-10%" y="-10%" width="120%" height="120%"><feGaussianBlur stdDeviation="1.2"/></filter>
<filter id="b3" x="-20%" y="-20%" width="140%" height="140%"><feGaussianBlur stdDeviation="3"/></filter>
<filter id="b6" x="-30%" y="-30%" width="160%" height="160%"><feGaussianBlur stdDeviation="6"/></filter>
</defs>
<rect width="478" height="360" fill="#0a080c"/>
<!-- upper part (mostly behind dialog) -->
<rect x="0" y="0" width="478" height="50" fill="#070818"/>
<g filter="url(#b6)">
<rect x="0" y="60" width="478" height="60" fill="#1a1a28"/>
<rect x="0" y="140" width="478" height="78" fill="#3a3020"/>
</g>
<g transform="translate(0 218)" filter="url(#b6)"><path fill="#685828" d="M0 0h6v6h-6zM6 0h6v6h-6zM12 0h6v6h-6zM0 6h6v6h-6zM6 6h6v6h-6zM12 6h6v6h-6zM0 12h6v6h-6zM6 12h6v6h-6zM12 12h6v6h-6z"/><path fill="#685020" d="M18 0h6v6h-6zM18 6h6v6h-6zM18 12h6v6h-6zM252 36h6v6h-6zM258 36h6v6h-6zM252 42h6v6h-6zM264 42h6v6h-6zM270 48h6v6h-6zM264 54h6v6h-6zM270 54h6v6h-6zM288 78h6v6h-6zM306 78h6v6h-6zM312 84h6v6h-6zM312 90h6v6h-6zM312 96h6v6h-6zM288 102h6v6h-6zM312 102h6v6h-6zM312 108h6v6h-6zM312 114h6v6h-6zM312 120h6v6h-6zM312 126h6v6h-6zM312 132h6v6h-6zM312 138h6v6h-6z"/><path fill="#605020" d="M24 0h6v6h-6zM30 0h6v6h-6zM36 0h6v6h-6zM24 6h6v6h-6zM30 6h6v6h-6zM36 6h6v6h-6zM24 12h6v6h-6zM30 12h6v6h-6zM36 12h6v6h-6zM0 18h6v6h-6zM6 18h6v6h-6zM12 18h6v6h-6zM18 18h6v6h-6zM24 18h6v6h-6zM30 18h6v6h-6zM0 24h6v6h-6zM6 24h6v6h-6zM12 24h6v6h-6zM18 24h6v6h-6zM252 30h6v6h-6zM258 30h6v6h-6zM264 36h6v6h-6zM288 72h6v6h-6z"/><path fill="#584820" d="M42 0h6v6h-6zM48 0h6v6h-6zM54 0h6v6h-6zM60 0h6v6h-6zM42 6h6v6h-6zM48 6h6v6h-6zM54 6h6v6h-6zM60 6h6v6h-6zM42 12h6v6h-6zM48 12h6v6h-6zM54 12h6v6h-6zM60 12h6v6h-6zM42 18h6v6h-6zM48 18h6v6h-6zM54 18h6v6h-6zM240 18h6v6h-6zM246 18h6v6h-6zM252 18h6v6h-6zM258 18h6v6h-6zM30 24h6v6h-6zM36 24h6v6h-6zM42 24h6v6h-6zM48 24h6v6h-6zM54 24h6v6h-6zM240 24h6v6h-6zM246 24h6v6h-6zM264 24h6v6h-6zM0 30h6v6h-6zM6 30h6v6h-6zM12 30h6v6h-6zM18 30h6v6h-6zM24 30h6v6h-6zM30 30h6v6h-6zM36 30h6v6h-6zM42 30h6v6h-6zM48 30h6v6h-6zM54 30h6v6h-6zM270 36h6v6h-6zM276 42h6v6h-6zM276 60h6v6h-6zM282 60h6v6h-6zM276 66h6v6h-6zM282 66h6v6h-6z"/><path fill="#504020" d="M66 0h6v6h-6zM72 0h6v6h-6zM78 0h6v6h-6zM198 0h6v6h-6zM264 0h6v6h-6zM66 6h6v6h-6zM72 6h6v6h-6zM78 6h6v6h-6zM198 6h6v6h-6zM264 6h6v6h-6zM66 12h6v6h-6zM72 12h6v6h-6zM78 12h6v6h-6zM198 12h6v6h-6zM264 12h6v6h-6zM204 18h6v6h-6zM264 18h6v6h-6zM222 24h6v6h-6zM270 24h6v6h-6zM234 30h6v6h-6zM276 30h6v6h-6zM276 36h6v6h-6zM282 42h6v6h-6zM306 66h6v6h-6z"/><path fill="#484020" d="M84 0h6v6h-6zM90 0h6v6h-6zM96 0h6v6h-6zM84 6h6v6h-6zM90 6h6v6h-6zM96 6h6v6h-6zM84 12h6v6h-6zM90 12h6v6h-6zM96 12h6v6h-6zM282 36h6v6h-6z"/><path fill="#403818" d="M102 0h6v6h-6zM108 0h6v6h-6zM114 0h6v6h-6zM120 0h6v6h-6zM186 0h6v6h-6zM102 6h6v6h-6zM108 6h6v6h-6zM114 6h6v6h-6zM120 6h6v6h-6zM186 6h6v6h-6zM102 12h6v6h-6zM108 12h6v6h-6zM114 12h6v6h-6zM120 12h6v6h-6zM186 12h6v6h-6zM102 18h6v6h-6zM108 18h6v6h-6zM114 18h6v6h-6zM102 24h6v6h-6zM108 24h6v6h-6zM114 24h6v6h-6zM102 30h6v6h-6zM108 30h6v6h-6zM102 36h6v6h-6zM102 42h6v6h-6zM90 54h6v6h-6zM54 60h6v6h-6zM60 60h6v6h-6z"/><path fill="#383018" d="M126 0h6v6h-6zM132 0h6v6h-6zM138 0h6v6h-6zM144 0h6v6h-6zM150 0h6v6h-6zM156 0h6v6h-6zM162 0h6v6h-6zM168 0h6v6h-6zM174 0h6v6h-6zM180 0h6v6h-6zM282 0h6v6h-6zM126 6h6v6h-6zM132 6h6v6h-6zM138 6h6v6h-6zM144 6h6v6h-6zM150 6h6v6h-6zM156 6h6v6h-6zM162 6h6v6h-6zM168 6h6v6h-6zM174 6h6v6h-6zM180 6h6v6h-6zM282 6h6v6h-6zM126 12h6v6h-6zM132 12h6v6h-6zM138 12h6v6h-6zM144 12h6v6h-6zM150 12h6v6h-6zM156 12h6v6h-6zM162 12h6v6h-6zM168 12h6v6h-6zM174 12h6v6h-6zM180 12h6v6h-6zM282 12h6v6h-6zM120 18h6v6h-6zM126 18h6v6h-6zM132 18h6v6h-6zM180 18h6v6h-6zM282 18h6v6h-6zM120 24h6v6h-6zM126 24h6v6h-6zM186 24h6v6h-6zM192 24h6v6h-6zM288 24h6v6h-6zM114 30h6v6h-6zM120 30h6v6h-6zM126 30h6v6h-6zM204 30h6v6h-6zM114 36h6v6h-6zM120 36h6v6h-6zM114 42h6v6h-6zM108 54h6v6h-6zM30 60h6v6h-6zM84 60h6v6h-6zM90 60h6v6h-6zM96 60h6v6h-6zM264 78h6v6h-6z"/><path fill="#483818" d="M192 0h6v6h-6zM192 6h6v6h-6zM192 12h6v6h-6zM96 18h6v6h-6zM192 18h6v6h-6zM198 18h6v6h-6zM96 24h6v6h-6zM204 24h6v6h-6zM90 30h6v6h-6zM96 30h6v6h-6zM222 30h6v6h-6zM90 36h6v6h-6zM96 36h6v6h-6zM228 36h6v6h-6zM84 42h6v6h-6zM90 42h6v6h-6zM96 42h6v6h-6zM234 42h6v6h-6zM0 48h6v6h-6zM6 48h6v6h-6zM12 48h6v6h-6zM18 48h6v6h-6zM24 48h6v6h-6zM84 48h6v6h-6zM90 48h6v6h-6zM96 48h6v6h-6zM30 54h6v6h-6zM36 54h6v6h-6zM42 54h6v6h-6zM48 54h6v6h-6zM66 54h6v6h-6zM72 54h6v6h-6zM78 54h6v6h-6zM84 54h6v6h-6zM240 54h6v6h-6zM252 66h6v6h-6zM264 72h6v6h-6zM270 78h6v6h-6zM276 96h6v6h-6zM276 102h6v6h-6zM276 108h6v6h-6z"/><path fill="#584020" d="M204 0h6v6h-6zM204 6h6v6h-6zM204 12h6v6h-6zM210 18h6v6h-6zM228 24h6v6h-6zM234 24h6v6h-6zM240 30h6v6h-6zM270 30h6v6h-6zM276 72h6v6h-6zM312 72h6v6h-6zM318 78h6v6h-6zM324 84h6v6h-6z"/><path fill="#604820" d="M210 0h6v6h-6zM210 6h6v6h-6zM210 12h6v6h-6zM36 18h6v6h-6zM216 18h6v6h-6zM222 18h6v6h-6zM228 18h6v6h-6zM234 18h6v6h-6zM24 24h6v6h-6zM252 24h6v6h-6zM258 24h6v6h-6zM246 30h6v6h-6zM264 30h6v6h-6zM246 36h6v6h-6zM270 42h6v6h-6zM276 48h6v6h-6zM276 54h6v6h-6zM270 60h6v6h-6zM282 72h6v6h-6zM306 72h6v6h-6zM282 78h6v6h-6zM312 78h6v6h-6zM282 84h6v6h-6zM318 84h6v6h-6z"/><path fill="#684820" d="M216 0h6v6h-6zM216 6h6v6h-6zM216 12h6v6h-6z"/><path fill="#604828" d="M222 0h6v6h-6zM228 0h6v6h-6zM234 0h6v6h-6zM240 0h6v6h-6zM222 6h6v6h-6zM228 6h6v6h-6zM234 6h6v6h-6zM240 6h6v6h-6zM222 12h6v6h-6zM228 12h6v6h-6zM234 12h6v6h-6zM240 12h6v6h-6zM288 66h6v6h-6zM318 90h6v6h-6zM318 96h6v6h-6zM324 108h6v6h-6zM324 114h6v6h-6zM324 120h6v6h-6zM324 126h6v6h-6zM324 132h6v6h-6zM324 138h6v6h-6z"/><path fill="#584828" d="M246 0h6v6h-6zM252 0h6v6h-6zM246 6h6v6h-6zM252 6h6v6h-6zM246 12h6v6h-6zM252 12h6v6h-6zM282 48h6v6h-6zM282 54h6v6h-6zM288 60h6v6h-6zM294 60h6v6h-6zM300 66h6v6h-6zM324 90h6v6h-6zM324 96h6v6h-6zM324 102h6v6h-6zM330 114h6v6h-6zM330 120h6v6h-6zM336 120h6v6h-6zM330 126h6v6h-6zM336 126h6v6h-6zM330 132h6v6h-6zM336 132h6v6h-6zM330 138h6v6h-6zM336 138h6v6h-6z"/><path fill="#504820" d="M258 0h6v6h-6zM258 6h6v6h-6zM258 12h6v6h-6z"/><path fill="#483820" d="M270 0h6v6h-6zM270 6h6v6h-6zM270 12h6v6h-6zM270 18h6v6h-6zM210 24h6v6h-6zM276 24h6v6h-6zM282 30h6v6h-6zM306 60h6v6h-6zM312 66h6v6h-6zM318 72h6v6h-6zM324 78h6v6h-6zM342 108h6v6h-6z"/><path fill="#403018" d="M276 0h6v6h-6zM276 6h6v6h-6zM276 12h6v6h-6zM186 18h6v6h-6zM198 24h6v6h-6zM210 30h6v6h-6zM216 30h6v6h-6zM108 36h6v6h-6zM222 36h6v6h-6zM108 42h6v6h-6zM228 42h6v6h-6zM102 48h6v6h-6zM108 48h6v6h-6zM234 48h6v6h-6zM24 54h6v6h-6zM96 54h6v6h-6zM102 54h6v6h-6zM36 60h6v6h-6zM42 60h6v6h-6zM48 60h6v6h-6zM66 60h6v6h-6zM72 60h6v6h-6zM78 60h6v6h-6zM270 84h6v6h-6z"/><path fill="#302818" d="M288 0h6v6h-6zM288 6h6v6h-6zM288 12h6v6h-6zM288 18h6v6h-6zM180 24h6v6h-6zM294 24h6v6h-6zM186 30h6v6h-6zM192 30h6v6h-6zM210 36h6v6h-6zM216 36h6v6h-6zM222 42h6v6h-6zM120 54h6v6h-6zM318 54h6v6h-6zM108 60h6v6h-6zM114 60h6v6h-6zM324 60h6v6h-6zM42 66h6v6h-6zM78 66h6v6h-6zM84 66h6v6h-6zM90 66h6v6h-6zM330 66h6v6h-6zM336 72h6v6h-6zM348 84h6v6h-6zM354 102h6v6h-6zM354 108h6v6h-6zM354 114h6v6h-6zM354 120h6v6h-6zM354 126h6v6h-6zM354 132h6v6h-6zM354 138h6v6h-6z"/><path fill="#282018" d="M294 0h6v6h-6zM294 6h6v6h-6zM294 12h6v6h-6zM300 18h6v6h-6zM306 24h6v6h-6zM306 30h6v6h-6zM312 30h6v6h-6zM312 36h6v6h-6zM318 48h6v6h-6zM132 54h6v6h-6zM126 60h6v6h-6zM132 60h6v6h-6zM330 60h6v6h-6zM336 66h6v6h-6zM54 72h6v6h-6zM60 72h6v6h-6zM66 72h6v6h-6zM72 72h6v6h-6zM78 72h6v6h-6zM84 72h6v6h-6zM342 72h6v6h-6zM348 78h6v6h-6zM354 84h6v6h-6zM354 90h6v6h-6zM354 96h6v6h-6zM360 114h6v6h-6zM360 120h6v6h-6zM360 126h6v6h-6zM360 132h6v6h-6zM360 138h6v6h-6z"/><path fill="#202010" d="M300 0h6v6h-6zM300 6h6v6h-6zM300 12h6v6h-6zM174 36h6v6h-6zM156 42h6v6h-6z"/><path fill="#201810" d="M306 0h6v6h-6zM312 0h6v6h-6zM306 6h6v6h-6zM312 6h6v6h-6zM306 12h6v6h-6zM312 12h6v6h-6zM312 18h6v6h-6zM318 24h6v6h-6zM162 42h6v6h-6zM168 42h6v6h-6zM174 42h6v6h-6zM180 42h6v6h-6zM186 42h6v6h-6zM192 42h6v6h-6zM198 42h6v6h-6zM204 42h6v6h-6zM150 48h6v6h-6zM156 48h6v6h-6zM162 48h6v6h-6zM150 54h6v6h-6zM156 54h6v6h-6zM222 54h6v6h-6zM222 60h6v6h-6zM228 66h6v6h-6zM228 72h6v6h-6zM24 78h6v6h-6zM30 78h6v6h-6zM36 78h6v6h-6zM42 78h6v6h-6zM48 78h6v6h-6zM54 78h6v6h-6zM60 78h6v6h-6zM234 78h6v6h-6zM240 78h6v6h-6zM258 84h6v6h-6zM264 120h6v6h-6zM264 126h6v6h-6zM264 132h6v6h-6zM264 138h6v6h-6z"/><path fill="#181810" d="M318 0h6v6h-6zM318 6h6v6h-6zM318 12h6v6h-6zM318 18h6v6h-6zM324 30h6v6h-6zM324 36h6v6h-6zM168 48h6v6h-6zM162 54h6v6h-6zM330 54h6v6h-6zM336 60h6v6h-6zM342 60h6v6h-6zM0 78h6v6h-6zM6 78h6v6h-6zM12 78h6v6h-6zM18 78h6v6h-6zM366 108h6v6h-6zM366 114h6v6h-6zM366 120h6v6h-6zM366 126h6v6h-6zM366 132h6v6h-6zM366 138h6v6h-6z"/><path fill="#181010" d="M324 0h6v6h-6zM324 6h6v6h-6zM324 12h6v6h-6zM324 18h6v6h-6zM324 24h6v6h-6zM174 48h6v6h-6zM180 48h6v6h-6zM186 48h6v6h-6zM192 48h6v6h-6zM198 48h6v6h-6zM204 48h6v6h-6zM210 48h6v6h-6zM216 48h6v6h-6zM330 48h6v6h-6zM168 54h6v6h-6zM174 54h6v6h-6zM180 54h6v6h-6zM186 54h6v6h-6zM192 54h6v6h-6zM198 54h6v6h-6zM180 60h6v6h-6zM186 60h6v6h-6zM192 60h6v6h-6zM198 60h6v6h-6zM348 60h6v6h-6zM354 60h6v6h-6zM192 66h6v6h-6zM198 66h6v6h-6zM222 66h6v6h-6zM360 66h6v6h-6zM198 72h6v6h-6zM204 72h6v6h-6zM222 72h6v6h-6zM198 78h6v6h-6zM204 78h6v6h-6zM222 78h6v6h-6zM228 78h6v6h-6zM366 78h6v6h-6zM204 84h6v6h-6zM234 84h6v6h-6zM240 84h6v6h-6zM246 84h6v6h-6zM252 84h6v6h-6zM366 84h6v6h-6zM198 90h6v6h-6zM258 90h6v6h-6zM366 90h6v6h-6zM192 96h6v6h-6zM198 96h6v6h-6zM258 96h6v6h-6zM366 96h6v6h-6zM180 102h6v6h-6zM186 102h6v6h-6zM258 102h6v6h-6zM366 102h6v6h-6z"/><path fill="#101010" d="M330 0h6v6h-6zM330 6h6v6h-6zM330 12h6v6h-6zM330 18h6v6h-6zM330 24h6v6h-6zM402 24h6v6h-6zM408 24h6v6h-6zM330 30h6v6h-6zM360 30h6v6h-6zM366 30h6v6h-6zM384 30h6v6h-6zM390 30h6v6h-6zM330 36h6v6h-6zM354 36h6v6h-6zM360 36h6v6h-6zM366 36h6v6h-6zM372 36h6v6h-6zM378 36h6v6h-6zM330 42h6v6h-6zM354 42h6v6h-6zM360 42h6v6h-6zM366 42h6v6h-6zM372 42h6v6h-6zM354 48h6v6h-6zM360 48h6v6h-6zM366 48h6v6h-6zM204 54h6v6h-6zM210 54h6v6h-6zM216 54h6v6h-6zM336 54h6v6h-6zM342 54h6v6h-6zM348 54h6v6h-6zM354 54h6v6h-6zM360 54h6v6h-6zM366 54h6v6h-6zM204 60h6v6h-6zM210 60h6v6h-6zM216 60h6v6h-6zM360 60h6v6h-6zM366 60h6v6h-6zM372 60h6v6h-6zM378 60h6v6h-6zM204 66h6v6h-6zM210 66h6v6h-6zM216 66h6v6h-6zM366 66h6v6h-6zM372 66h6v6h-6zM384 66h6v6h-6zM210 72h6v6h-6zM216 72h6v6h-6zM366 72h6v6h-6zM372 72h6v6h-6zM390 72h6v6h-6zM210 78h6v6h-6zM216 78h6v6h-6zM372 78h6v6h-6zM402 78h6v6h-6zM0 84h6v6h-6zM6 84h6v6h-6zM12 84h6v6h-6zM18 84h6v6h-6zM24 84h6v6h-6zM30 84h6v6h-6zM36 84h6v6h-6zM42 84h6v6h-6zM48 84h6v6h-6zM54 84h6v6h-6zM60 84h6v6h-6zM210 84h6v6h-6zM216 84h6v6h-6zM222 84h6v6h-6zM228 84h6v6h-6zM372 84h6v6h-6zM30 90h6v6h-6zM36 90h6v6h-6zM42 90h6v6h-6zM48 90h6v6h-6zM54 90h6v6h-6zM60 90h6v6h-6zM204 90h6v6h-6zM210 90h6v6h-6zM222 90h6v6h-6zM228 90h6v6h-6zM234 90h6v6h-6zM240 90h6v6h-6zM246 90h6v6h-6zM36 96h6v6h-6zM42 96h6v6h-6zM48 96h6v6h-6zM54 96h6v6h-6zM60 96h6v6h-6zM204 96h6v6h-6zM210 96h6v6h-6zM36 102h6v6h-6zM42 102h6v6h-6zM48 102h6v6h-6zM54 102h6v6h-6zM60 102h6v6h-6zM192 102h6v6h-6zM198 102h6v6h-6zM204 102h6v6h-6zM36 108h6v6h-6zM42 108h6v6h-6zM48 108h6v6h-6zM54 108h6v6h-6zM174 108h6v6h-6zM180 108h6v6h-6zM186 108h6v6h-6zM192 108h6v6h-6zM198 108h6v6h-6zM42 114h6v6h-6zM48 114h6v6h-6zM54 114h6v6h-6zM162 114h6v6h-6zM168 114h6v6h-6zM174 114h6v6h-6zM180 114h6v6h-6zM42 120h6v6h-6zM48 120h6v6h-6zM54 120h6v6h-6zM144 120h6v6h-6zM150 120h6v6h-6zM156 120h6v6h-6zM162 120h6v6h-6zM42 126h6v6h-6zM48 126h6v6h-6zM54 126h6v6h-6zM138 126h6v6h-6zM144 126h6v6h-6zM150 126h6v6h-6zM156 126h6v6h-6zM162 126h6v6h-6zM42 132h6v6h-6zM48 132h6v6h-6zM54 132h6v6h-6zM138 132h6v6h-6zM144 132h6v6h-6zM150 132h6v6h-6zM156 132h6v6h-6zM162 132h6v6h-6zM42 138h6v6h-6zM48 138h6v6h-6zM54 138h6v6h-6zM138 138h6v6h-6zM144 138h6v6h-6zM150 138h6v6h-6zM156 138h6v6h-6zM162 138h6v6h-6z"/><path fill="#100810" d="M336 0h6v6h-6zM342 0h6v6h-6zM348 0h6v6h-6zM354 0h6v6h-6zM360 0h6v6h-6zM336 6h6v6h-6zM342 6h6v6h-6zM348 6h6v6h-6zM354 6h6v6h-6zM360 6h6v6h-6zM336 12h6v6h-6zM342 12h6v6h-6zM348 12h6v6h-6zM354 12h6v6h-6zM360 12h6v6h-6zM336 18h6v6h-6zM342 18h6v6h-6zM348 18h6v6h-6zM354 18h6v6h-6zM360 18h6v6h-6zM336 24h6v6h-6zM342 24h6v6h-6zM348 24h6v6h-6zM354 24h6v6h-6zM360 24h6v6h-6zM336 30h6v6h-6zM342 30h6v6h-6zM348 30h6v6h-6zM354 30h6v6h-6zM336 36h6v6h-6zM342 36h6v6h-6zM348 36h6v6h-6zM336 42h6v6h-6zM342 42h6v6h-6zM348 42h6v6h-6zM336 48h6v6h-6zM342 48h6v6h-6zM348 48h6v6h-6zM24 90h6v6h-6zM216 90h6v6h-6zM372 90h6v6h-6zM30 96h6v6h-6zM216 96h6v6h-6zM222 96h6v6h-6zM228 96h6v6h-6zM372 96h6v6h-6zM30 102h6v6h-6zM210 102h6v6h-6zM372 102h6v6h-6zM204 108h6v6h-6zM372 108h6v6h-6zM36 114h6v6h-6zM186 114h6v6h-6zM192 114h6v6h-6zM36 120h6v6h-6zM168 120h6v6h-6zM36 126h6v6h-6zM168 126h6v6h-6zM36 132h6v6h-6zM168 132h6v6h-6zM36 138h6v6h-6zM168 138h6v6h-6z"/><path fill="#080810" d="M366 0h6v6h-6zM372 0h6v6h-6zM378 0h6v6h-6zM384 0h6v6h-6zM390 0h6v6h-6zM396 0h6v6h-6zM402 0h6v6h-6zM408 0h6v6h-6zM414 0h6v6h-6zM420 0h6v6h-6zM426 0h6v6h-6zM432 0h6v6h-6zM366 6h6v6h-6zM372 6h6v6h-6zM378 6h6v6h-6zM384 6h6v6h-6zM390 6h6v6h-6zM396 6h6v6h-6zM402 6h6v6h-6zM408 6h6v6h-6zM414 6h6v6h-6zM420 6h6v6h-6zM426 6h6v6h-6zM432 6h6v6h-6zM366 12h6v6h-6zM372 12h6v6h-6zM378 12h6v6h-6zM384 12h6v6h-6zM390 12h6v6h-6zM396 12h6v6h-6zM402 12h6v6h-6zM408 12h6v6h-6zM414 12h6v6h-6zM420 12h6v6h-6zM426 12h6v6h-6zM432 12h6v6h-6zM366 18h6v6h-6zM372 18h6v6h-6zM378 18h6v6h-6zM384 18h6v6h-6zM390 18h6v6h-6zM396 18h6v6h-6zM402 18h6v6h-6zM408 18h6v6h-6zM414 18h6v6h-6zM420 18h6v6h-6zM366 24h6v6h-6zM372 24h6v6h-6zM378 24h6v6h-6zM378 72h6v6h-6zM378 78h6v6h-6zM384 78h6v6h-6zM378 84h6v6h-6zM384 84h6v6h-6zM390 84h6v6h-6zM396 84h6v6h-6zM378 90h6v6h-6zM384 90h6v6h-6zM390 90h6v6h-6zM396 90h6v6h-6zM402 90h6v6h-6zM384 96h6v6h-6zM390 96h6v6h-6zM396 96h6v6h-6zM402 96h6v6h-6zM408 96h6v6h-6zM390 102h6v6h-6zM396 102h6v6h-6zM402 102h6v6h-6zM408 102h6v6h-6zM414 102h6v6h-6zM420 102h6v6h-6zM396 108h6v6h-6zM402 108h6v6h-6zM408 108h6v6h-6zM414 108h6v6h-6zM420 108h6v6h-6zM402 114h6v6h-6zM408 114h6v6h-6zM414 114h6v6h-6zM420 114h6v6h-6zM414 120h6v6h-6zM420 120h6v6h-6zM420 126h6v6h-6zM420 132h6v6h-6zM420 138h6v6h-6z"/><path fill="#081010" d="M438 0h6v6h-6zM438 6h6v6h-6zM438 12h6v6h-6zM426 18h6v6h-6zM432 18h6v6h-6zM384 24h6v6h-6zM390 24h6v6h-6zM396 24h6v6h-6zM372 30h6v6h-6zM378 30h6v6h-6zM378 66h6v6h-6zM384 72h6v6h-6zM456 72h6v6h-6zM462 72h6v6h-6zM468 72h6v6h-6zM474 72h6v6h-6zM390 78h6v6h-6zM396 78h6v6h-6zM444 78h6v6h-6zM450 78h6v6h-6zM456 78h6v6h-6zM462 78h6v6h-6zM468 78h6v6h-6zM474 78h6v6h-6zM402 84h6v6h-6zM408 84h6v6h-6zM426 84h6v6h-6zM432 84h6v6h-6zM438 84h6v6h-6zM444 84h6v6h-6zM450 84h6v6h-6zM456 84h6v6h-6zM462 84h6v6h-6zM468 84h6v6h-6zM474 84h6v6h-6zM408 90h6v6h-6zM414 90h6v6h-6zM420 90h6v6h-6zM426 90h6v6h-6zM432 90h6v6h-6zM414 96h6v6h-6zM420 96h6v6h-6zM426 96h6v6h-6zM426 102h6v6h-6z"/><path fill="#081018" d="M444 0h6v6h-6zM450 0h6v6h-6zM444 6h6v6h-6zM450 6h6v6h-6zM444 12h6v6h-6zM450 12h6v6h-6zM438 18h6v6h-6zM444 18h6v6h-6zM438 90h6v6h-6zM444 90h6v6h-6zM450 90h6v6h-6zM456 90h6v6h-6zM462 90h6v6h-6zM468 90h6v6h-6zM474 90h6v6h-6zM432 96h6v6h-6zM438 96h6v6h-6zM444 96h6v6h-6zM450 96h6v6h-6zM456 96h6v6h-6zM462 96h6v6h-6zM468 96h6v6h-6zM474 96h6v6h-6zM432 102h6v6h-6zM438 102h6v6h-6zM426 108h6v6h-6zM432 108h6v6h-6zM438 108h6v6h-6zM426 114h6v6h-6zM432 114h6v6h-6zM432 120h6v6h-6zM432 126h6v6h-6zM432 132h6v6h-6zM432 138h6v6h-6z"/><path fill="#101018" d="M456 0h6v6h-6zM462 0h6v6h-6zM468 0h6v6h-6zM474 0h6v6h-6zM456 6h6v6h-6zM462 6h6v6h-6zM468 6h6v6h-6zM474 6h6v6h-6zM456 12h6v6h-6zM462 12h6v6h-6zM468 12h6v6h-6zM474 12h6v6h-6zM450 18h6v6h-6zM456 18h6v6h-6zM462 18h6v6h-6zM468 18h6v6h-6zM474 18h6v6h-6zM414 24h6v6h-6zM420 24h6v6h-6zM426 24h6v6h-6zM432 24h6v6h-6zM438 24h6v6h-6zM444 24h6v6h-6zM450 24h6v6h-6zM456 24h6v6h-6zM462 24h6v6h-6zM468 24h6v6h-6zM474 24h6v6h-6zM396 30h6v6h-6zM402 30h6v6h-6zM408 30h6v6h-6zM414 30h6v6h-6zM420 30h6v6h-6zM426 30h6v6h-6zM432 30h6v6h-6zM438 30h6v6h-6zM444 30h6v6h-6zM450 30h6v6h-6zM456 30h6v6h-6zM462 30h6v6h-6zM468 30h6v6h-6zM474 30h6v6h-6zM384 36h6v6h-6zM390 36h6v6h-6zM396 36h6v6h-6zM402 36h6v6h-6zM408 36h6v6h-6zM414 36h6v6h-6zM420 36h6v6h-6zM426 36h6v6h-6zM432 36h6v6h-6zM438 36h6v6h-6zM444 36h6v6h-6zM450 36h6v6h-6zM456 36h6v6h-6zM462 36h6v6h-6zM468 36h6v6h-6zM474 36h6v6h-6zM378 42h6v6h-6zM384 42h6v6h-6zM390 42h6v6h-6zM396 42h6v6h-6zM402 42h6v6h-6zM408 42h6v6h-6zM426 42h6v6h-6zM432 42h6v6h-6zM438 42h6v6h-6zM444 42h6v6h-6zM450 42h6v6h-6zM456 42h6v6h-6zM462 42h6v6h-6zM468 42h6v6h-6zM474 42h6v6h-6zM372 48h6v6h-6zM378 48h6v6h-6zM384 48h6v6h-6zM390 48h6v6h-6zM396 48h6v6h-6zM438 48h6v6h-6zM444 48h6v6h-6zM450 48h6v6h-6zM456 48h6v6h-6zM462 48h6v6h-6zM468 48h6v6h-6zM474 48h6v6h-6zM372 54h6v6h-6zM378 54h6v6h-6zM384 54h6v6h-6zM390 54h6v6h-6zM396 54h6v6h-6zM432 54h6v6h-6zM438 54h6v6h-6zM444 54h6v6h-6zM450 54h6v6h-6zM456 54h6v6h-6zM462 54h6v6h-6zM468 54h6v6h-6zM474 54h6v6h-6zM384 60h6v6h-6zM390 60h6v6h-6zM396 60h6v6h-6zM402 60h6v6h-6zM408 60h6v6h-6zM426 60h6v6h-6zM432 60h6v6h-6zM438 60h6v6h-6zM444 60h6v6h-6zM450 60h6v6h-6zM456 60h6v6h-6zM462 60h6v6h-6zM468 60h6v6h-6zM474 60h6v6h-6zM390 66h6v6h-6zM396 66h6v6h-6zM402 66h6v6h-6zM408 66h6v6h-6zM414 66h6v6h-6zM420 66h6v6h-6zM426 66h6v6h-6zM432 66h6v6h-6zM438 66h6v6h-6zM444 66h6v6h-6zM450 66h6v6h-6zM456 66h6v6h-6zM462 66h6v6h-6zM468 66h6v6h-6zM474 66h6v6h-6zM396 72h6v6h-6zM402 72h6v6h-6zM408 72h6v6h-6zM414 72h6v6h-6zM420 72h6v6h-6zM426 72h6v6h-6zM432 72h6v6h-6zM438 72h6v6h-6zM444 72h6v6h-6zM450 72h6v6h-6zM408 78h6v6h-6zM414 78h6v6h-6zM420 78h6v6h-6zM426 78h6v6h-6zM432 78h6v6h-6zM438 78h6v6h-6zM414 84h6v6h-6zM420 84h6v6h-6zM66 90h6v6h-6zM72 90h6v6h-6zM78 90h6v6h-6zM66 96h6v6h-6zM72 96h6v6h-6zM66 102h6v6h-6zM444 102h6v6h-6zM60 108h6v6h-6zM66 108h6v6h-6zM156 108h6v6h-6zM162 108h6v6h-6zM168 108h6v6h-6zM60 114h6v6h-6zM66 114h6v6h-6zM138 114h6v6h-6zM144 114h6v6h-6zM150 114h6v6h-6zM156 114h6v6h-6zM438 114h6v6h-6zM60 120h6v6h-6zM132 120h6v6h-6zM138 120h6v6h-6zM60 126h6v6h-6zM126 126h6v6h-6zM132 126h6v6h-6zM60 132h6v6h-6zM126 132h6v6h-6zM132 132h6v6h-6zM60 138h6v6h-6zM126 138h6v6h-6zM132 138h6v6h-6z"/><path fill="#584818" d="M60 18h6v6h-6zM60 24h6v6h-6zM60 30h6v6h-6zM48 36h6v6h-6zM54 36h6v6h-6zM282 96h6v6h-6z"/><path fill="#504018" d="M66 18h6v6h-6zM72 18h6v6h-6zM78 18h6v6h-6zM66 24h6v6h-6zM72 24h6v6h-6zM78 24h6v6h-6zM66 30h6v6h-6zM72 30h6v6h-6zM78 30h6v6h-6zM0 36h6v6h-6zM6 36h6v6h-6zM12 36h6v6h-6zM18 36h6v6h-6zM24 36h6v6h-6zM30 36h6v6h-6zM66 36h6v6h-6zM72 36h6v6h-6zM78 36h6v6h-6zM0 42h6v6h-6zM6 42h6v6h-6zM12 42h6v6h-6zM18 42h6v6h-6zM24 42h6v6h-6zM30 42h6v6h-6zM36 42h6v6h-6zM42 42h6v6h-6zM66 42h6v6h-6zM72 42h6v6h-6zM78 42h6v6h-6zM36 48h6v6h-6zM42 48h6v6h-6zM48 48h6v6h-6zM66 48h6v6h-6zM72 48h6v6h-6zM78 48h6v6h-6zM240 48h6v6h-6zM54 54h6v6h-6zM60 54h6v6h-6zM264 66h6v6h-6zM276 78h6v6h-6zM276 84h6v6h-6zM282 120h6v6h-6z"/><path fill="#484018" d="M84 18h6v6h-6zM90 18h6v6h-6zM84 24h6v6h-6zM90 24h6v6h-6zM84 30h6v6h-6zM84 36h6v6h-6z"/><path fill="#383010" d="M138 18h6v6h-6zM144 18h6v6h-6zM150 18h6v6h-6zM132 24h6v6h-6zM114 48h6v6h-6zM24 60h6v6h-6z"/><path fill="#303010" d="M156 18h6v6h-6zM162 18h6v6h-6zM168 18h6v6h-6zM174 18h6v6h-6z"/><path fill="#403820" d="M276 18h6v6h-6zM288 36h6v6h-6zM342 102h6v6h-6z"/><path fill="#282818" d="M294 18h6v6h-6zM300 24h6v6h-6zM126 54h6v6h-6zM120 60h6v6h-6z"/><path fill="#202018" d="M306 18h6v6h-6zM318 42h6v6h-6zM138 54h6v6h-6zM144 54h6v6h-6zM324 54h6v6h-6zM138 60h6v6h-6zM144 60h6v6h-6zM348 72h6v6h-6zM78 78h6v6h-6zM354 78h6v6h-6zM360 102h6v6h-6zM360 108h6v6h-6z"/><path fill="#302810" d="M138 24h6v6h-6zM144 24h6v6h-6zM150 24h6v6h-6zM156 24h6v6h-6zM162 24h6v6h-6zM168 24h6v6h-6zM174 24h6v6h-6zM132 30h6v6h-6zM138 30h6v6h-6zM144 30h6v6h-6zM150 30h6v6h-6zM126 36h6v6h-6zM132 36h6v6h-6zM138 36h6v6h-6zM126 42h6v6h-6zM132 42h6v6h-6zM120 48h6v6h-6zM126 48h6v6h-6zM24 66h6v6h-6zM30 66h6v6h-6zM36 66h6v6h-6zM246 72h6v6h-6zM264 84h6v6h-6zM270 120h6v6h-6zM270 126h6v6h-6zM270 132h6v6h-6zM270 138h6v6h-6z"/><path fill="#503820" d="M216 24h6v6h-6zM228 30h6v6h-6zM330 84h6v6h-6z"/><path fill="#403020" d="M282 24h6v6h-6zM288 30h6v6h-6zM306 54h6v6h-6zM312 60h6v6h-6zM318 66h6v6h-6zM324 72h6v6h-6zM330 78h6v6h-6zM336 84h6v6h-6zM342 90h6v6h-6zM342 96h6v6h-6zM348 120h6v6h-6zM348 126h6v6h-6zM348 132h6v6h-6zM348 138h6v6h-6z"/><path fill="#201818" d="M312 24h6v6h-6zM318 30h6v6h-6zM318 36h6v6h-6zM324 48h6v6h-6zM150 60h6v6h-6zM156 60h6v6h-6zM162 66h6v6h-6zM342 66h6v6h-6zM348 66h6v6h-6zM174 72h6v6h-6zM354 72h6v6h-6zM66 78h6v6h-6zM72 78h6v6h-6zM180 78h6v6h-6zM180 84h6v6h-6zM360 84h6v6h-6zM180 90h6v6h-6zM360 90h6v6h-6zM360 96h6v6h-6z"/><path fill="#282810" d="M156 30h6v6h-6zM162 30h6v6h-6zM144 36h6v6h-6z"/><path fill="#282010" d="M168 30h6v6h-6zM174 30h6v6h-6zM180 30h6v6h-6zM150 36h6v6h-6zM156 36h6v6h-6zM162 36h6v6h-6zM168 36h6v6h-6zM180 36h6v6h-6zM186 36h6v6h-6zM192 36h6v6h-6zM138 42h6v6h-6zM144 42h6v6h-6zM150 42h6v6h-6zM216 42h6v6h-6zM132 48h6v6h-6zM138 48h6v6h-6zM144 48h6v6h-6zM222 48h6v6h-6zM228 60h6v6h-6zM0 72h6v6h-6zM6 72h6v6h-6zM12 72h6v6h-6zM18 72h6v6h-6zM24 72h6v6h-6zM30 72h6v6h-6zM36 72h6v6h-6zM42 72h6v6h-6zM48 72h6v6h-6zM240 72h6v6h-6zM252 78h6v6h-6zM264 90h6v6h-6zM264 96h6v6h-6zM264 102h6v6h-6zM264 108h6v6h-6z"/><path fill="#382818" d="M198 30h6v6h-6zM114 54h6v6h-6zM102 60h6v6h-6zM48 66h6v6h-6zM54 66h6v6h-6zM60 66h6v6h-6zM66 66h6v6h-6zM72 66h6v6h-6zM324 66h6v6h-6z"/><path fill="#383020" d="M294 30h6v6h-6zM294 36h6v6h-6zM300 36h6v6h-6zM300 42h6v6h-6zM306 48h6v6h-6zM312 54h6v6h-6zM336 78h6v6h-6zM342 84h6v6h-6zM348 102h6v6h-6zM348 108h6v6h-6zM348 114h6v6h-6z"/><path fill="#302820" d="M300 30h6v6h-6zM306 36h6v6h-6zM306 42h6v6h-6zM312 48h6v6h-6zM96 66h6v6h-6zM102 66h6v6h-6zM342 78h6v6h-6zM348 90h6v6h-6z"/><path fill="#584018" d="M36 36h6v6h-6zM42 36h6v6h-6zM60 36h6v6h-6zM240 36h6v6h-6zM48 42h6v6h-6zM54 42h6v6h-6zM60 42h6v6h-6zM240 42h6v6h-6zM54 48h6v6h-6zM60 48h6v6h-6zM246 54h6v6h-6zM252 60h6v6h-6zM270 66h6v6h-6zM282 102h6v6h-6zM282 108h6v6h-6zM282 114h6v6h-6z"/><path fill="#302018" d="M198 36h6v6h-6zM204 36h6v6h-6z"/><path fill="#503818" d="M234 36h6v6h-6zM30 48h6v6h-6zM246 60h6v6h-6zM258 66h6v6h-6zM270 72h6v6h-6zM276 90h6v6h-6zM282 126h6v6h-6zM282 132h6v6h-6zM282 138h6v6h-6z"/><path fill="#382810" d="M120 42h6v6h-6zM228 48h6v6h-6zM0 60h6v6h-6zM6 60h6v6h-6zM12 60h6v6h-6zM18 60h6v6h-6zM234 60h6v6h-6zM240 66h6v6h-6zM252 72h6v6h-6zM270 96h6v6h-6zM270 102h6v6h-6zM270 108h6v6h-6zM270 114h6v6h-6z"/><path fill="#281810" d="M210 42h6v6h-6zM234 72h6v6h-6zM246 78h6v6h-6zM264 114h6v6h-6z"/><path fill="#604818" d="M246 42h6v6h-6zM246 48h6v6h-6zM258 60h6v6h-6zM264 60h6v6h-6zM282 90h6v6h-6zM288 120h6v6h-6zM288 126h6v6h-6zM288 132h6v6h-6zM288 138h6v6h-6z"/><path fill="#705820" d="M258 42h6v6h-6zM264 48h6v6h-6zM288 84h6v6h-6zM306 84h6v6h-6zM306 96h6v6h-6zM306 102h6v6h-6zM306 108h6v6h-6zM300 120h6v6h-6zM300 126h6v6h-6zM300 132h6v6h-6zM300 138h6v6h-6z"/><path fill="#483828" d="M288 42h6v6h-6zM294 48h6v6h-6zM300 54h6v6h-6zM336 90h6v6h-6zM336 96h6v6h-6zM342 114h6v6h-6zM342 120h6v6h-6zM342 126h6v6h-6zM342 132h6v6h-6zM342 138h6v6h-6z"/><path fill="#403828" d="M294 42h6v6h-6zM300 48h6v6h-6z"/><path fill="#282020" d="M312 42h6v6h-6zM120 66h6v6h-6zM90 72h6v6h-6zM96 72h6v6h-6zM102 72h6v6h-6zM108 72h6v6h-6z"/><path fill="#181818" d="M324 42h6v6h-6zM162 60h6v6h-6zM168 60h6v6h-6zM168 66h6v6h-6zM174 66h6v6h-6zM354 66h6v6h-6zM180 72h6v6h-6zM360 72h6v6h-6zM360 78h6v6h-6zM72 84h6v6h-6zM78 84h6v6h-6zM186 84h6v6h-6zM174 96h6v6h-6z"/><path fill="#101820" d="M414 42h6v6h-6zM408 48h6v6h-6zM414 48h6v6h-6zM420 48h6v6h-6zM426 48h6v6h-6zM408 54h6v6h-6zM414 54h6v6h-6zM420 54h6v6h-6zM426 54h6v6h-6zM414 60h6v6h-6zM84 90h6v6h-6zM90 90h6v6h-6zM78 96h6v6h-6zM132 108h6v6h-6zM138 108h6v6h-6zM144 108h6v6h-6zM126 114h6v6h-6zM132 114h6v6h-6z"/><path fill="#101818" d="M420 42h6v6h-6zM402 48h6v6h-6zM432 48h6v6h-6zM402 54h6v6h-6zM420 60h6v6h-6zM72 102h6v6h-6zM72 108h6v6h-6zM66 120h6v6h-6zM126 120h6v6h-6zM66 126h6v6h-6zM66 132h6v6h-6zM66 138h6v6h-6z"/><path fill="#705018" d="M252 48h6v6h-6zM258 54h6v6h-6zM294 120h6v6h-6zM294 126h6v6h-6zM294 132h6v6h-6zM294 138h6v6h-6z"/><path fill="#785820" d="M258 48h6v6h-6zM306 90h6v6h-6zM294 102h6v6h-6zM300 102h6v6h-6zM294 108h6v6h-6zM300 108h6v6h-6zM294 114h6v6h-6zM300 114h6v6h-6z"/><path fill="#504028" d="M288 48h6v6h-6zM294 54h6v6h-6zM300 60h6v6h-6zM330 90h6v6h-6zM330 96h6v6h-6zM336 102h6v6h-6zM336 108h6v6h-6zM336 114h6v6h-6z"/><path fill="#403010" d="M0 54h6v6h-6zM6 54h6v6h-6zM12 54h6v6h-6zM18 54h6v6h-6zM234 54h6v6h-6zM240 60h6v6h-6zM246 66h6v6h-6zM258 72h6v6h-6zM270 90h6v6h-6zM276 120h6v6h-6zM276 126h6v6h-6zM276 132h6v6h-6zM276 138h6v6h-6z"/><path fill="#302010" d="M228 54h6v6h-6zM0 66h6v6h-6zM6 66h6v6h-6zM12 66h6v6h-6zM18 66h6v6h-6zM234 66h6v6h-6zM258 78h6v6h-6z"/><path fill="#685018" d="M252 54h6v6h-6zM288 108h6v6h-6z"/><path fill="#504828" d="M288 54h6v6h-6z"/><path fill="#181018" d="M174 60h6v6h-6zM180 66h6v6h-6zM186 66h6v6h-6zM186 72h6v6h-6zM192 72h6v6h-6zM186 78h6v6h-6zM192 78h6v6h-6zM66 84h6v6h-6zM192 84h6v6h-6zM198 84h6v6h-6zM186 90h6v6h-6zM192 90h6v6h-6zM180 96h6v6h-6zM186 96h6v6h-6zM168 102h6v6h-6zM174 102h6v6h-6z"/><path fill="#382820" d="M318 60h6v6h-6zM330 72h6v6h-6zM348 96h6v6h-6z"/><path fill="#282820" d="M108 66h6v6h-6zM114 66h6v6h-6z"/><path fill="#202020" d="M126 66h6v6h-6zM132 66h6v6h-6zM138 66h6v6h-6zM144 66h6v6h-6zM114 72h6v6h-6zM84 78h6v6h-6zM90 78h6v6h-6zM96 78h6v6h-6zM102 78h6v6h-6z"/><path fill="#201820" d="M150 66h6v6h-6zM156 66h6v6h-6zM156 72h6v6h-6zM162 72h6v6h-6zM168 72h6v6h-6zM162 78h6v6h-6zM168 78h6v6h-6zM174 78h6v6h-6zM168 84h6v6h-6zM174 84h6v6h-6zM174 90h6v6h-6z"/><path fill="#605028" d="M294 66h6v6h-6zM318 102h6v6h-6zM318 108h6v6h-6zM318 114h6v6h-6z"/><path fill="#202028" d="M120 72h6v6h-6zM126 72h6v6h-6zM132 72h6v6h-6zM138 72h6v6h-6zM144 72h6v6h-6zM150 72h6v6h-6zM108 78h6v6h-6zM114 78h6v6h-6z"/><path fill="#685028" d="M294 72h6v6h-6zM300 72h6v6h-6zM318 120h6v6h-6zM318 126h6v6h-6zM318 132h6v6h-6zM318 138h6v6h-6z"/><path fill="#182028" d="M120 78h6v6h-6zM150 78h6v6h-6zM96 114h6v6h-6zM96 120h6v6h-6zM90 126h6v6h-6zM96 126h6v6h-6zM102 126h6v6h-6zM90 132h6v6h-6zM96 132h6v6h-6zM102 132h6v6h-6zM90 138h6v6h-6zM96 138h6v6h-6zM102 138h6v6h-6z"/><path fill="#182030" d="M126 78h6v6h-6zM132 78h6v6h-6zM138 78h6v6h-6zM144 78h6v6h-6zM114 84h6v6h-6zM120 84h6v6h-6zM126 84h6v6h-6zM150 84h6v6h-6zM126 90h6v6h-6zM144 90h6v6h-6z"/><path fill="#181828" d="M156 78h6v6h-6zM102 84h6v6h-6zM108 84h6v6h-6zM156 84h6v6h-6zM96 90h6v6h-6zM102 90h6v6h-6zM108 90h6v6h-6zM156 90h6v6h-6zM162 90h6v6h-6zM96 96h6v6h-6zM102 96h6v6h-6zM108 96h6v6h-6zM114 96h6v6h-6zM144 96h6v6h-6zM150 96h6v6h-6zM156 96h6v6h-6zM90 102h6v6h-6zM96 102h6v6h-6zM102 102h6v6h-6zM108 102h6v6h-6zM114 102h6v6h-6zM120 102h6v6h-6zM126 102h6v6h-6zM90 108h6v6h-6zM96 108h6v6h-6zM102 108h6v6h-6zM108 108h6v6h-6zM114 108h6v6h-6zM120 108h6v6h-6zM90 114h6v6h-6zM102 114h6v6h-6zM108 114h6v6h-6zM114 114h6v6h-6zM84 120h6v6h-6zM90 120h6v6h-6zM102 120h6v6h-6zM108 120h6v6h-6zM84 126h6v6h-6zM108 126h6v6h-6zM84 132h6v6h-6zM108 132h6v6h-6zM84 138h6v6h-6zM108 138h6v6h-6z"/><path fill="#785828" d="M294 78h6v6h-6z"/><path fill="#705828" d="M300 78h6v6h-6z"/><path fill="#181820" d="M84 84h6v6h-6zM90 84h6v6h-6zM96 84h6v6h-6zM168 90h6v6h-6zM84 96h6v6h-6zM90 96h6v6h-6zM162 96h6v6h-6zM168 96h6v6h-6zM78 102h6v6h-6zM84 102h6v6h-6zM150 102h6v6h-6zM156 102h6v6h-6zM162 102h6v6h-6zM78 108h6v6h-6zM84 108h6v6h-6zM72 114h6v6h-6zM78 114h6v6h-6zM84 114h6v6h-6zM120 114h6v6h-6zM72 120h6v6h-6zM78 120h6v6h-6zM114 120h6v6h-6zM120 120h6v6h-6zM72 126h6v6h-6zM78 126h6v6h-6zM114 126h6v6h-6zM120 126h6v6h-6zM72 132h6v6h-6zM78 132h6v6h-6zM114 132h6v6h-6zM120 132h6v6h-6zM72 138h6v6h-6zM78 138h6v6h-6zM114 138h6v6h-6zM120 138h6v6h-6z"/><path fill="#182038" d="M132 84h6v6h-6zM138 84h6v6h-6zM144 84h6v6h-6zM132 90h6v6h-6zM138 90h6v6h-6z"/><path fill="#201828" d="M162 84h6v6h-6z"/><path fill="#806020" d="M294 84h6v6h-6zM294 90h6v6h-6zM300 90h6v6h-6zM294 96h6v6h-6z"/><path fill="#806028" d="M300 84h6v6h-6z"/><path fill="#100808" d="M0 90h6v6h-6zM6 90h6v6h-6zM12 90h6v6h-6zM18 90h6v6h-6zM0 96h6v6h-6zM6 96h6v6h-6zM12 96h6v6h-6zM18 96h6v6h-6zM24 96h6v6h-6zM0 102h6v6h-6zM6 102h6v6h-6zM12 102h6v6h-6zM18 102h6v6h-6zM24 102h6v6h-6zM216 102h6v6h-6zM222 102h6v6h-6zM228 102h6v6h-6zM234 102h6v6h-6zM24 108h6v6h-6zM30 108h6v6h-6zM210 108h6v6h-6zM216 108h6v6h-6zM222 108h6v6h-6zM228 108h6v6h-6zM234 108h6v6h-6zM240 108h6v6h-6zM246 108h6v6h-6zM252 108h6v6h-6zM30 114h6v6h-6zM198 114h6v6h-6zM204 114h6v6h-6zM210 114h6v6h-6zM216 114h6v6h-6zM222 114h6v6h-6zM228 114h6v6h-6zM234 114h6v6h-6zM240 114h6v6h-6zM246 114h6v6h-6zM252 114h6v6h-6zM372 114h6v6h-6zM174 120h6v6h-6zM180 120h6v6h-6zM186 120h6v6h-6zM192 120h6v6h-6zM198 120h6v6h-6zM204 120h6v6h-6zM210 120h6v6h-6zM216 120h6v6h-6zM222 120h6v6h-6zM228 120h6v6h-6zM234 120h6v6h-6zM240 120h6v6h-6zM246 120h6v6h-6zM252 120h6v6h-6zM372 120h6v6h-6zM174 126h6v6h-6zM180 126h6v6h-6zM186 126h6v6h-6zM192 126h6v6h-6zM198 126h6v6h-6zM204 126h6v6h-6zM210 126h6v6h-6zM216 126h6v6h-6zM222 126h6v6h-6zM228 126h6v6h-6zM234 126h6v6h-6zM240 126h6v6h-6zM246 126h6v6h-6zM252 126h6v6h-6zM372 126h6v6h-6zM174 132h6v6h-6zM180 132h6v6h-6zM186 132h6v6h-6zM192 132h6v6h-6zM198 132h6v6h-6zM204 132h6v6h-6zM210 132h6v6h-6zM216 132h6v6h-6zM222 132h6v6h-6zM228 132h6v6h-6zM234 132h6v6h-6zM240 132h6v6h-6zM246 132h6v6h-6zM252 132h6v6h-6zM372 132h6v6h-6zM174 138h6v6h-6zM180 138h6v6h-6zM186 138h6v6h-6zM192 138h6v6h-6zM198 138h6v6h-6zM204 138h6v6h-6zM210 138h6v6h-6zM216 138h6v6h-6zM222 138h6v6h-6zM228 138h6v6h-6zM234 138h6v6h-6zM240 138h6v6h-6zM246 138h6v6h-6zM252 138h6v6h-6zM372 138h6v6h-6z"/><path fill="#181830" d="M114 90h6v6h-6zM120 90h6v6h-6zM150 90h6v6h-6zM120 96h6v6h-6zM126 96h6v6h-6zM132 96h6v6h-6zM138 96h6v6h-6z"/><path fill="#181008" d="M252 90h6v6h-6zM258 108h6v6h-6zM258 114h6v6h-6z"/><path fill="#705020" d="M288 90h6v6h-6zM288 96h6v6h-6zM306 114h6v6h-6zM306 120h6v6h-6zM306 126h6v6h-6zM306 132h6v6h-6zM306 138h6v6h-6z"/><path fill="#101008" d="M234 96h6v6h-6zM240 96h6v6h-6zM246 96h6v6h-6zM252 96h6v6h-6zM240 102h6v6h-6zM246 102h6v6h-6zM252 102h6v6h-6zM258 120h6v6h-6zM258 126h6v6h-6zM258 132h6v6h-6zM258 138h6v6h-6z"/><path fill="#786020" d="M300 96h6v6h-6z"/><path fill="#080808" d="M378 96h6v6h-6zM378 102h6v6h-6zM384 102h6v6h-6zM0 108h6v6h-6zM6 108h6v6h-6zM12 108h6v6h-6zM18 108h6v6h-6zM378 108h6v6h-6zM384 108h6v6h-6zM390 108h6v6h-6zM0 114h6v6h-6zM6 114h6v6h-6zM12 114h6v6h-6zM18 114h6v6h-6zM24 114h6v6h-6zM378 114h6v6h-6zM384 114h6v6h-6zM390 114h6v6h-6zM396 114h6v6h-6zM0 120h6v6h-6zM6 120h6v6h-6zM12 120h6v6h-6zM18 120h6v6h-6zM24 120h6v6h-6zM30 120h6v6h-6zM378 120h6v6h-6zM384 120h6v6h-6zM390 120h6v6h-6zM396 120h6v6h-6zM402 120h6v6h-6zM408 120h6v6h-6zM0 126h6v6h-6zM6 126h6v6h-6zM12 126h6v6h-6zM18 126h6v6h-6zM24 126h6v6h-6zM30 126h6v6h-6zM378 126h6v6h-6zM384 126h6v6h-6zM390 126h6v6h-6zM396 126h6v6h-6zM402 126h6v6h-6zM408 126h6v6h-6zM414 126h6v6h-6zM0 132h6v6h-6zM6 132h6v6h-6zM12 132h6v6h-6zM18 132h6v6h-6zM24 132h6v6h-6zM30 132h6v6h-6zM378 132h6v6h-6zM384 132h6v6h-6zM390 132h6v6h-6zM396 132h6v6h-6zM402 132h6v6h-6zM408 132h6v6h-6zM414 132h6v6h-6zM0 138h6v6h-6zM6 138h6v6h-6zM12 138h6v6h-6zM18 138h6v6h-6zM24 138h6v6h-6zM30 138h6v6h-6zM378 138h6v6h-6zM384 138h6v6h-6zM390 138h6v6h-6zM396 138h6v6h-6zM402 138h6v6h-6zM408 138h6v6h-6zM414 138h6v6h-6z"/><path fill="#101828" d="M132 102h6v6h-6zM138 102h6v6h-6zM144 102h6v6h-6zM126 108h6v6h-6zM456 120h6v6h-6zM462 120h6v6h-6zM468 120h6v6h-6zM474 120h6v6h-6zM450 126h6v6h-6zM450 132h6v6h-6zM450 138h6v6h-6z"/><path fill="#584028" d="M330 102h6v6h-6zM330 108h6v6h-6z"/><path fill="#101020" d="M450 102h6v6h-6zM456 102h6v6h-6zM462 102h6v6h-6zM468 102h6v6h-6zM474 102h6v6h-6zM150 108h6v6h-6zM444 108h6v6h-6zM450 108h6v6h-6zM456 108h6v6h-6zM462 108h6v6h-6zM468 108h6v6h-6zM474 108h6v6h-6zM444 114h6v6h-6zM450 114h6v6h-6zM438 120h6v6h-6zM444 120h6v6h-6zM438 126h6v6h-6zM444 126h6v6h-6zM438 132h6v6h-6zM444 132h6v6h-6zM438 138h6v6h-6zM444 138h6v6h-6z"/><path fill="#483018" d="M276 114h6v6h-6z"/><path fill="#684818" d="M288 114h6v6h-6z"/><path fill="#101028" d="M456 114h6v6h-6zM462 114h6v6h-6zM468 114h6v6h-6zM474 114h6v6h-6zM450 120h6v6h-6z"/><path fill="#080818" d="M426 120h6v6h-6zM426 126h6v6h-6zM426 132h6v6h-6zM426 138h6v6h-6z"/><path fill="#101830" d="M456 126h6v6h-6zM462 126h6v6h-6zM468 126h6v6h-6zM474 126h6v6h-6zM456 132h6v6h-6zM462 132h6v6h-6zM468 132h6v6h-6zM474 132h6v6h-6zM456 138h6v6h-6zM462 138h6v6h-6zM468 138h6v6h-6zM474 138h6v6h-6z"/></g>
<g opacity="0.75">
<!-- left half: trees with warm light -->
<g filter="url(#b6)">
<path d="M0 214 H250 V240 L190 262 L90 272 L0 280Z" fill="#42361a"/>
<path d="M0 266 L170 248 L185 262 L70 292 L0 300Z" fill="#6a5020"/>
</g>
<g filter="url(#b3)">
<path d="M0 216 H130 L120 226 L30 232 L0 234Z" fill="#b08a38"/>
<path d="M10 272 L150 254 L140 266 L40 286 L10 289Z" fill="#7a5e22" opacity=".8"/>
<ellipse cx="170" cy="238" rx="18" ry="8" fill="#5a4a20" opacity=".8"/>
</g>
<g fill="#f0c050" filter="url(#b1)">
<circle cx="86" cy="231" r="1.6"/><circle cx="126" cy="255" r="1.6"/><circle cx="81" cy="262" r="1.6"/><circle cx="30" cy="271" r="1.6"/><circle cx="22" cy="279" r="1.5"/><circle cx="45" cy="236" r="1.3"/>
</g>
<!-- dark buildings -->
<g filter="url(#b1)">
<path d="M187 252 L215 250 L240 262 L238 300 L200 330 L185 300Z" fill="#120c0c"/>
<path d="M52 292 L115 285 L118 360 H52Z" fill="#121014"/>
</g>
<!-- blue lights & courtyard -->
<g filter="url(#b1)">
<rect x="117" y="284" width="13" height="36" fill="#3a5ab8"/>
<path d="M86 306 L135 300 L138 345 L90 350Z" fill="#1a2a58" opacity=".8"/>
<path d="M58 336 L115 328 L118 360 H60Z" fill="#26262c" opacity=".8"/>
<rect x="177" y="306" width="15" height="24" fill="#243e80"/>
<rect x="193" y="300" width="24" height="28" fill="#6a4a40"/>
</g>
<g filter="url(#b3)"><ellipse cx="206" cy="314" rx="9" ry="6" fill="#e8c8b0"/></g>
<circle cx="161" cy="335" r="1.8" fill="#e8eeff"/><circle cx="154" cy="316" r="1.5" fill="#e8eeff"/><circle cx="96" cy="351" r="2" fill="#d0d8f0"/>
<!-- junction lights -->
<g filter="url(#b3)">
<path d="M195 236 L250 230 L245 248 L200 252Z" fill="#5a4a22"/>
<ellipse cx="228" cy="240" rx="9" ry="5" fill="#a08a60" opacity=".7"/>
</g>
<!-- road -->
<g filter="url(#b3)">
<path d="M214 218 L252 218 L322 360 L280 360Z" fill="#8a6a22"/>
</g>
<g filter="url(#b1)">
<path d="M233 218 L238 218 L303 360 L298 360Z" fill="#f0c850"/>
<path d="M214 218 L246 218 L252 236 L222 240Z" fill="#b08a34" opacity=".8"/>
</g>
<!-- trees strip + lit facade -->
<g filter="url(#b1)">
<path d="M258 232 L272 236 L345 360 L322 360Z" fill="#2a2416" opacity=".8"/>
<path d="M284 243 L293 238 L388 360 L362 360Z" fill="#7a6a50"/>
<path d="M293 238 L300 236 L395 360 L388 360Z" fill="#3a3226"/>
</g>
<g filter="url(#b1)" fill="#e8e0d0">
<circle cx="340" cy="335" r="1.2"/><circle cx="327" cy="318" r="1.2"/><circle cx="312" cy="298" r="1.2"/><circle cx="355" cy="350" r="1.2"/>
</g>
<rect x="270" y="236" width="5" height="12" fill="#4070d0" filter="url(#b1)"/>
<circle cx="262" cy="226" r="2" fill="#f8e080"/>
<circle cx="284" cy="227" r="2" fill="#f8d050"/>
<!-- top glow -->
<g filter="url(#b3)"><path d="M308 218 H360 L355 228 L310 228Z" fill="#6a5a20"/></g>
<!-- right dark area with lights -->
<g filter="url(#b3)">
<rect x="412" y="236" width="40" height="28" fill="#1a1c22"/>
<path d="M394 264 L460 264 L470 312 L395 310Z" fill="#10141e"/>
</g>
<g filter="url(#b1)">
<circle cx="410" cy="271" r="1.8" fill="#e0e8ff"/><circle cx="417" cy="277" r="1.8" fill="#e0e8ff"/>
<circle cx="423" cy="288" r="2" fill="#f0f0ff"/><circle cx="432" cy="294" r="2.5" fill="#d0e0ff"/>
<circle cx="414" cy="295" r="2.5" fill="#e8f0ff"/><circle cx="436" cy="286" r="1.8" fill="#ff9090"/>
<circle cx="455" cy="304" r="1.8" fill="#ff8080"/><circle cx="403" cy="305" r="2" fill="#4a80e0"/>
<path d="M440 268 L470 285 L475 295 L445 280Z" fill="#b0a8c0" opacity=".7"/>
<circle cx="386" cy="240" r="1.5" fill="#e0e8ff"/><circle cx="345" cy="250" r="1.2" fill="#e0e8ff"/>
<rect x="386" y="313" width="8" height="14" fill="#1a4a3a"/>
</g>
<g filter="url(#b3)"><ellipse cx="472" cy="352" rx="12" ry="8" fill="#3a5ad0"/></g>
</g>
<!-- right strip details -->
<g filter="url(#b1)">
<rect x="452" y="30" width="26" height="30" fill="#0a0c28"/>
<circle cx="470" cy="60" r="1.5" fill="#c0a060"/>
<rect x="455" y="70" width="23" height="12" fill="#28283a"/>
<rect x="452" y="86" width="26" height="6" fill="#b0b8e8"/>
<rect x="452" y="100" width="26" height="20" fill="#1a1a26"/>
<rect x="452" y="120" width="26" height="10" fill="#2a2a30"/>
<rect x="452" y="140" width="26" height="20" fill="#4a4030"/>
<circle cx="461" cy="163" r="3" fill="#e8b848"/>
<rect x="452" y="170" width="26" height="25" fill="#302818"/>
<circle cx="464" cy="197" r="2.5" fill="#e8b848"/>
<rect x="452" y="205" width="26" height="14" fill="#3a3020"/>
</g>
</svg>


<!-- status bar -->
<div class="a" style="left:0;top:778px;width:1426px;height:1px;background:#fff"></div>
<div class="a" style="left:0;top:802px;width:1426px;height:1px;background:#a0a0a0"></div>
<div class="t" style="left:3.5px;top:786.3px;font-size:11.7px;color:#111">38 объект(ов) / 3 файл(ов) выделено</div>
<div class="t" style="left:210px;top:786.3px;font-size:12px;letter-spacing:-0.2px;color:#111">[ 14.22 Мб ]</div>
<div class="a" style="left:276px;top:781px;width:1px;height:19px;background:#d0d0d0"></div>
<div class="t" style="left:282.5px;top:786.3px;font-size:12px;letter-spacing:-1.05px;color:#111">DJI_0020.JPG</div>
<div class="a" style="left:352px;top:781px;width:1px;height:19px;background:#d0d0d0"></div>
<div class="t" style="left:357.5px;top:786.3px;font-size:12px;letter-spacing:-0.62px;color:#111">4000x3000x24 (1.33)</div>
<div class="a" style="left:465px;top:781px;width:1px;height:19px;background:#d0d0d0"></div>
<div class="t" style="left:470px;top:786.3px;font-size:12px;color:#111">Полноцветное</div>
<div class="a" style="left:556px;top:781px;width:1px;height:19px;background:#d0d0d0"></div>
<div class="t" style="left:561px;top:786.3px;font-size:12px;letter-spacing:-0.2px;color:#111">4.87 Мб</div>
<div class="a" style="left:608px;top:781px;width:1px;height:19px;background:#d0d0d0"></div>
<div class="t" style="left:613px;top:786.3px;font-size:12px;color:#111">11%</div>
<div class="a" style="left:641px;top:781px;width:1px;height:19px;background:#d0d0d0"></div>
<div class="a" style="left:1393px;top:781px;width:1px;height:19px;background:#d0d0d0"></div>
<svg class="a" style="left:1410px;top:788px" width="12" height="12" viewBox="0 0 12 12"><g fill="#b0b0b0"><rect x="9" y="1" width="2" height="2"/><rect x="5" y="5" width="2" height="2"/><rect x="9" y="5" width="2" height="2"/><rect x="1" y="9" width="2" height="2"/><rect x="5" y="9" width="2" height="2"/><rect x="9" y="9" width="2" height="2"/></g></svg>


<!-- title bar -->
<svg class="a" style="left:8px;top:8px" width="18" height="15" viewBox="0 0 18 15">
<circle cx="2" cy="5" r="1.3" fill="#f7a020"/><circle cx="5.5" cy="2" r="1.3" fill="#f7a020"/><circle cx="10" cy="1.8" r="1.3" fill="#f7a020"/><circle cx="14.5" cy="4.5" r="1.3" fill="#f7a020"/>
<ellipse cx="8.5" cy="9.5" rx="7" ry="4.5" fill="#f9b233"/><ellipse cx="8.5" cy="9.5" rx="5" ry="3.2" fill="#fff3d0"/><circle cx="8.5" cy="9.5" r="2.8" fill="#e53030"/><circle cx="8.5" cy="9.3" r="1.2" fill="#fff"/>
</svg>
<div class="t" style="left:30px;top:10px;font-size:12px;color:#8a8a9c">XnView - [Обозреватель - G:\media\My Pics\2017\07-july\02, 08\]</div>
<div class="a" style="left:1306px;top:15px;width:10px;height:1px;background:#444"></div>
<div class="a" style="left:1351px;top:10px;width:10px;height:10px;border:1px solid #444"></div>
<svg class="a" style="left:1396px;top:10px" width="11" height="11" viewBox="0 0 11 11"><path d="M0.5 0.5L10.5 10.5M10.5 0.5L0.5 10.5" stroke="#444" stroke-width="1"/></svg>
<!-- menu -->
<svg class="a" style="left:8px;top:32px" width="17" height="16" viewBox="0 0 17 16">
<path d="M7 5 Q7 13 9 13 M7 7 H9" stroke="#5a5aa0" stroke-width="1" fill="none"/>
<path d="M0.5 1.5 H3 L3.8 0.5 H6.5 V5.5 H0.5Z" fill="#fcd860" stroke="#9a6a10" stroke-width="0.8"/><rect x="1" y="3" width="5" height="2" fill="#f8b820"/>
<path d="M9.5 3.5 H12 L12.8 2.5 H16.5 V8.5 H9.5Z" fill="#fcd860" stroke="#9a6a10" stroke-width="0.8"/><rect x="10" y="5.5" width="6" height="2.5" fill="#f8b820"/>
<path d="M9.5 10.5 H12 L12.8 9.5 H16.5 V15.5 H9.5Z" fill="#fcd860" stroke="#9a6a10" stroke-width="0.8"/><rect x="10" y="12.5" width="6" height="2.5" fill="#f8b820"/>
</svg>
<div class="t" style="left:31px;top:35px;color:#222230">Файл</div>
<div class="a" style="left:31px;top:46px;width:9px;height:1px;background:#333"></div>
<div class="t" style="left:74px;top:35px;color:#222230">Правка</div>
<div class="a" style="left:74px;top:46px;width:9px;height:1px;background:#333"></div>
<div class="t" style="left:128px;top:35px;color:#222230">Вид</div>
<div class="t" style="left:162px;top:35px;color:#222230">Инструменты</div>
<div class="t" style="left:252.5px;top:35px;color:#222230">Создать</div>
<div class="t" style="left:309.5px;top:35px;color:#222230">Окно</div>
<div class="t" style="left:352.5px;top:35px;color:#222230;letter-spacing:-0.3px">Справка</div>
<div class="a" style="left:1368px;top:32px;width:18px;height:18px;background:#e6e6e6"></div>
<div class="a" style="left:1387px;top:32px;width:18px;height:18px;background:#e6e6e6"></div>
<div class="a" style="left:1406px;top:32px;width:18px;height:18px;background:#e6e6e6"></div>
<div class="a" style="left:1373px;top:43px;width:6px;height:2px;background:#7890a4"></div>
<svg class="a" style="left:1391px;top:36px" width="10" height="10" viewBox="0 0 10 10"><path d="M2.5 1 H8.5 V6.5" stroke="#7890a4" stroke-width="1.4" fill="none"/><rect x="2.5" y="0.3" width="6" height="1.4" fill="#7890a4"/><rect x="0.7" y="4.3" width="6" height="5" stroke="#7890a4" stroke-width="1.4" fill="none"/><rect x="0" y="3.6" width="7.4" height="1.6" fill="#7890a4"/></svg>
<svg class="a" style="left:1412px;top:38px" width="8" height="8" viewBox="0 0 8 8"><path d="M1 1L7 7M7 1L1 7" stroke="#7890a4" stroke-width="2"/></svg>
<!-- tab -->
<div class="a" style="left:0;top:51px;width:1426px;height:1px;background:#a0a0a0"></div>
<div class="a" style="left:1423px;top:51px;width:1px;height:26px;background:#a0a0a0"></div>
<div class="a" style="left:3px;top:54px;width:118px;height:24px;background:#bcd4e5;border:1px solid #0a78d7;border-bottom:none;border-radius:5px 5px 0 0"></div>
<svg class="a" style="left:6px;top:57px" width="17" height="16" viewBox="0 0 17 16">
<path d="M7 5 Q7 13 9 13 M7 7 H9" stroke="#5a5aa0" stroke-width="1" fill="none"/>
<path d="M0.5 1.5 H3 L3.8 0.5 H6.5 V5.5 H0.5Z" fill="#fcd860" stroke="#9a6a10" stroke-width="0.8"/><rect x="1" y="3" width="5" height="2" fill="#f8b820"/>
<path d="M9.5 3.5 H12 L12.8 2.5 H16.5 V8.5 H9.5Z" fill="#fcd860" stroke="#9a6a10" stroke-width="0.8"/><rect x="10" y="5.5" width="6" height="2.5" fill="#f8b820"/>
<path d="M9.5 10.5 H12 L12.8 9.5 H16.5 V15.5 H9.5Z" fill="#fcd860" stroke="#9a6a10" stroke-width="0.8"/><rect x="10" y="12.5" width="6" height="2.5" fill="#f8b820"/>
</svg>
<div class="t" style="left:32px;top:60.5px;color:#111;letter-spacing:-0.2px">Обозреватель</div>


<!-- toolbar 1 -->
<svg class="a" style="left:7px;top:83px" width="23" height="23" viewBox="0 0 23 23">
<rect x="0.5" y="19" width="22" height="1.5" fill="#111"/>
<rect x="0.5" y="0.5" width="21" height="19" rx="1" fill="#fff" stroke="#5a5aa8"/>
<rect x="2" y="2" width="18" height="16" fill="#f8b000"/>
<circle cx="9.8" cy="6.5" r="2.5" fill="#fcd868"/>
<path d="M2 11 L8 8.5 L13 9 L20 7 V18 H2Z" fill="#e08010"/>
<path d="M2 14 L10 12 L15 11.5 L20 12 V18 H2Z" fill="#c06010"/>
<path d="M16 13 L20 12.5 V18 H16Z" fill="#8a4a10"/>
<ellipse cx="11.5" cy="17.5" rx="6.5" ry="5" fill="#fff"/>
<ellipse cx="11.5" cy="18" rx="5.5" ry="4.2" fill="#6a6ae0" stroke="#22225a" stroke-width="0.8"/>
<ellipse cx="11.5" cy="18" rx="3.2" ry="3" fill="#a8a8f8"/>
<circle cx="11.5" cy="18" r="1.4" fill="#222"/>
</svg>
<svg class="a" style="left:38px;top:83px" width="23" height="22" viewBox="0 0 23 22">
<rect x="1" y="19" width="22" height="2" fill="#111"/>
<rect x="0.5" y="0.5" width="21" height="19" rx="1" fill="#fff" stroke="#6a6ab8"/>
<rect x="2" y="2" width="18" height="16" fill="#c8c8fa"/>
<rect x="6" y="6" width="10" height="8" fill="#fff"/>
<rect x="7" y="7" width="8" height="6" fill="#f09010"/>
<path d="M7 10 L10 9 L15 10.5 V13 H7Z" fill="#b05a10"/>
<g fill="#24249a"><path d="M2 2 H7 L5.5 3.5 L7.5 5.5 L5.5 7.5 L3.5 5.5 L2 7Z"/><path d="M20 2 H15 L16.5 3.5 L14.5 5.5 L16.5 7.5 L18.5 5.5 L20 7Z"/><path d="M2 18 H7 L5.5 16.5 L7.5 14.5 L5.5 12.5 L3.5 14.5 L2 13Z"/><path d="M20 18 H15 L16.5 16.5 L14.5 14.5 L16.5 12.5 L18.5 14.5 L20 13Z"/></g>
</svg>
<div class="a" style="left:67px;top:81px;width:1px;height:26px;background:#777"></div>
<svg class="a" style="left:78px;top:83px" width="21" height="21" viewBox="0 0 21 21">
<defs><linearGradient id="rg1" x1="0" y1="0" x2="1" y2="1"><stop offset="0" stop-color="#d8ff20"/><stop offset="1" stop-color="#4a9a10"/></linearGradient></defs>
<circle cx="9.5" cy="10.5" r="9" fill="#d4d4d4" stroke="#4a4a9a" stroke-width="0.7"/>
<circle cx="9.5" cy="10.5" r="4" fill="#fff" stroke="#4a4a9a" stroke-width="0.7"/>
<path d="M9.5 1 L19 1 L16 3.5 A9 9 0 0 1 9.5 19.5 L9.5 14.5 A4 4 0 0 0 12.5 7.8 L9.5 9.5Z" fill="url(#rg1)" stroke="#2a8a10" stroke-width="0.7"/>
</svg>
<svg class="a" style="left:109px;top:83px" width="21" height="21" viewBox="0 0 21 21">
<circle cx="11.5" cy="10.5" r="9" fill="#d4d4d4" stroke="#4a4a9a" stroke-width="0.7"/>
<circle cx="11.5" cy="10.5" r="4" fill="#fff" stroke="#4a4a9a" stroke-width="0.7"/>
<path d="M11.5 1 L2 1 L5 3.5 A9 9 0 0 0 11.5 19.5 L11.5 14.5 A4 4 0 0 1 8.5 7.8 L11.5 9.5Z" fill="url(#rg1)" stroke="#2a8a10" stroke-width="0.7"/>
</svg>
<svg class="a" style="left:138px;top:81px" width="26" height="24" viewBox="0 0 26 24">
<rect x="3.5" y="4.5" width="18" height="16" fill="#fff" stroke="#5a5aa0"/>
<rect x="5" y="6" width="15" height="13" fill="#f5a010"/>
<circle cx="12" cy="9" r="2" fill="#fcd070"/>
<path d="M5 14 L10 10 L15 13 L20 10 V19 H5Z" fill="#d0701a"/><path d="M5 17 L12 14 L20 17 V19 H5Z" fill="#a85010"/>
<path d="M1 7 C1 3 4 1.5 7.5 2 L7.5 0 L12 3.5 L7.5 7 L7.5 5 C5 4.8 3.8 6 4 8Z" fill="#6cc82a" stroke="#3a8a18" stroke-width="0.6"/>
<path d="M25 17 C25 21 22 22.5 18.5 22 L18.5 24 L14 20.5 L18.5 17 L18.5 19 C21 19.2 22.2 18 22 16Z" fill="#6cc82a" stroke="#3a8a18" stroke-width="0.6"/>
</svg>
<svg class="a" style="left:170px;top:91px" width="8" height="5" viewBox="0 0 8 5"><path d="M0 0H8L4 4.5Z" fill="#222"/></svg>
<div class="a" style="left:183px;top:81px;width:1px;height:26px;background:#777"></div>
<svg class="a" style="left:191px;top:82px" width="22" height="23" viewBox="0 0 22 23">
<path d="M5.5 0.5 H15 L20.5 6 V20.5 H5.5Z" fill="#eeeeee" stroke="#8a8aa0"/>
<path d="M15 0.5 V6 H20.5" fill="#fff" stroke="#8a8aa0"/>
<circle cx="7" cy="15.5" r="6.5" fill="#8a8ad8" stroke="#44448a"/>
<rect x="6" y="14" width="2" height="5" fill="#fff"/><circle cx="7" cy="11.5" r="1.1" fill="#fff"/>
</svg>
<svg class="a" style="left:223px;top:82px" width="26" height="22" viewBox="0 0 26 22">
<path d="M11.5 0.5 H20 L24.5 5 V15.5 H11.5Z" fill="#e8e8ec" stroke="#8a8ad0"/>
<path d="M20 0.5 V5 H24.5" fill="#fff" stroke="#8a8ad0"/>
<path d="M0.5 5 Q0.5 3.5 2 3.5 H7 L9 6 H11 V19.5 Q11 20.5 10 20.5 H1.5 Q0.5 20.5 0.5 19.5Z" fill="#e8b040" stroke="#a87020"/>
<path d="M1 9 H19 Q20 9 20 10 V19.5 Q20 20.5 19 20.5 H1.5 Q1 20.5 1 19.5Z" fill="#f8d890" stroke="#c09040" stroke-width="0.6"/>
<path d="M21 9 L15.5 14.5 L18 17 H10 V9 L12.5 11.5 L18 6Z" fill="#50c030" stroke="#2a7a18" stroke-width="0.7"/>
</svg>
<svg class="a" style="left:254px;top:91px" width="8" height="5" viewBox="0 0 8 5"><path d="M0 0H8L4 4.5Z" fill="#222"/></svg>
<svg class="a" style="left:271px;top:84px" width="21" height="20" viewBox="0 0 21 20">
<rect x="1" y="6" width="8" height="13" rx="3" fill="#9aa6dc" stroke="#5560a0"/>
<rect x="12" y="6" width="8" height="13" rx="3" fill="#9aa6dc" stroke="#5560a0"/>
<rect x="2.5" y="1" width="5" height="7" rx="1.5" fill="#b6c0ea" stroke="#5560a0"/>
<rect x="13.5" y="1" width="5" height="7" rx="1.5" fill="#b6c0ea" stroke="#5560a0"/>
<rect x="8" y="7" width="5" height="4" fill="#6670b0"/>
<rect x="3" y="10" width="2" height="7" fill="#dde4ff"/><rect x="14" y="10" width="2" height="7" fill="#dde4ff"/>
</svg>
<svg class="a" style="left:300px;top:83px" width="24" height="22" viewBox="0 0 24 22">
<path d="M6.5 0.5 H15 L18.5 4 V9 H6.5Z" fill="#f4f4f4" stroke="#8a8aa0"/>
<path d="M1 9 Q1 7 3 7 H21 Q23 7 23 9 V17 H1Z" fill="#d8d8ec" stroke="#44448a"/>
<rect x="5" y="14" width="14" height="7" fill="#f8a21a" stroke="#333"/>
<rect x="19" y="10" width="2" height="1.5" fill="#e04040"/>
</svg>
<svg class="a" style="left:331px;top:82px" width="24" height="23" viewBox="0 0 24 23">
<defs><linearGradient id="scg" x1="0" y1="0" x2="0" y2="1"><stop offset="0" stop-color="#6a6aa8"/><stop offset="1" stop-color="#2a2a6a"/></linearGradient></defs>
<path d="M2.5 0.5 H21.5 V10 H2.5Z" fill="url(#scg)" stroke="#33336a"/>
<rect x="2" y="9.5" width="20" height="3" fill="#6a8af0"/>
<path d="M0.5 11 H23.5 V20 Q23.5 22 21.5 22 H2.5 Q0.5 22 0.5 20Z" fill="#e0e0f4" stroke="#44448a"/>
<rect x="3" y="11.5" width="18" height="3" fill="#5a7ae8"/>
<rect x="18" y="17" width="2" height="1.5" fill="#e04040"/>
</svg>
<svg class="a" style="left:362px;top:82px" width="25" height="22" viewBox="0 0 25 22">
<rect x="0.5" y="0.5" width="17" height="14" fill="#c0c8f0" stroke="#6670a0"/>
<rect x="6.5" y="5.5" width="18" height="15" fill="#f0a020" stroke="#3a3a6a"/>
<path d="M7 15 L13 10 L18 14 L24 11 V20 H7Z" fill="#c2661a"/>
<path d="M2 11 H9 V8 L15 13 L9 18 V15 H2Z" fill="#4cc030" stroke="#2a7a20" stroke-width="0.7"/>
</svg>
<div class="a" style="left:392px;top:81px;width:1px;height:26px;background:#777"></div>
<svg class="a" style="left:401px;top:82px" width="23" height="23" viewBox="0 0 23 23">
<rect x="0.5" y="0.5" width="21" height="17" fill="#f0f0f4" stroke="#6a72a8"/>
<rect x="1" y="1" width="20" height="2.5" fill="#8a92d0"/>
<path d="M2.5 11.5 H7 L8.5 9.5 H14.5 L16 11.5 H20.5 V22.5 H2.5Z" fill="#8a92d8" stroke="#3a3a8a"/>
<circle cx="11.5" cy="16.5" r="4" fill="#3a5ad0" stroke="#2a2a7a"/>
<circle cx="11" cy="16" r="1.5" fill="#a0c0ff"/>
</svg>
<svg class="a" style="left:431px;top:82px" width="25" height="24" viewBox="0 0 25 24">
<rect x="0" y="0.5" width="25" height="2" fill="#555"/>
<rect x="2.5" y="2.5" width="20" height="14" fill="#f3a11a" stroke="#555"/>
<path d="M3 13 L9 8 L14 11 L22 7 V16 H3Z" fill="#c0621a"/>
<path d="M9 17 L12.5 22 L16 17" stroke="#333" fill="none"/>
</svg>
<svg class="a" style="left:462px;top:82px" width="24" height="23" viewBox="0 0 24 23">
<circle cx="8.5" cy="8.5" r="8" fill="#3a8ad8"/>
<path d="M3 5 Q6 2 9 4 Q10 8 6 9 Q4 12 5 15 Q1 12 3 5Z M11 1 Q15 3 16 7 Q13 8 12 5Z" fill="#6cc03a"/>
<rect x="9.5" y="10.5" width="14" height="11" fill="#c0c8f0" stroke="#6670a0"/>
<rect x="11.5" y="12.5" width="10" height="7" fill="#f0a020"/>
<path d="M12 19 L15 16 L18 18 L21 15 V19Z" fill="#c0621a"/>
</svg>
<svg class="a" style="left:497px;top:82px" width="18" height="22" viewBox="0 0 18 22">
<path d="M0.5 0.5 H12 L17.5 6 V21.5 H0.5Z" fill="#f4f6ff" stroke="#7a7aa0"/>
<rect x="4" y="7" width="3" height="3" fill="#4a5ab8"/><rect x="10" y="7" width="3" height="3" fill="#4a5ab8"/>
<rect x="4" y="13" width="3" height="3" fill="#4a5ab8"/><rect x="10" y="13" width="3" height="3" fill="#4a5ab8"/>
</svg>
<div class="a" style="left:524px;top:81px;width:1px;height:26px;background:#777"></div>
<svg class="a" style="left:533px;top:83px" width="23" height="22" viewBox="0 0 23 22">
<path d="M11.5 0.5 L13.5 0.8 L14 3.5 L16.5 4.6 L18.8 3 L20.3 4.6 L18.8 7 L19.8 9.5 L22.5 10 V12 L19.8 12.5 L18.8 15 L20.3 17.4 L18.8 19 L16.5 17.4 L14 18.5 L13.5 21.2 H9.5 L9 18.5 L6.5 17.4 L4.2 19 L2.7 17.4 L4.2 15 L3.2 12.5 L0.5 12 V10 L3.2 9.5 L4.2 7 L2.7 4.6 L4.2 3 L6.5 4.6 L9 3.5 L9.5 0.8Z" fill="#a8acd8" stroke="#5a5e98"/>
<circle cx="11.5" cy="11" r="6" fill="#8a8ec8"/>
<circle cx="11.5" cy="11" r="3.2" fill="#fff" stroke="#5a5e98"/>
</svg>
<svg class="a" style="left:564px;top:83px" width="22" height="22" viewBox="0 0 22 22">
<circle cx="11" cy="11" r="10.5" fill="#7b7fcf" stroke="#44468a"/>
<circle cx="11" cy="11" r="8.5" fill="#9599de"/>
<rect x="9.5" y="9" width="3" height="8" fill="#fff"/><circle cx="11" cy="6" r="1.6" fill="#fff"/>
</svg>


<!-- row2 left tabs -->
<div class="a" style="left:3px;top:111px;width:55px;height:23px;border-top:2px solid #6a6a6a;border-left:2px solid #6a6a6a;background:repeating-conic-gradient(#e6e6e6 0 25%,#fbfbfb 0 50%) 0 0/2px 2px"></div>
<div class="a" style="left:63px;top:111px;width:1px;height:23px;background:#a0a0a0"></div>
<div class="a" style="left:129px;top:111px;width:1px;height:23px;background:#a0a0a0"></div>
<div class="a" style="left:195px;top:111px;width:1px;height:23px;background:#a0a0a0"></div>
<svg class="a" style="left:20px;top:114px" width="18" height="17" viewBox="0 0 18 17">
<path d="M0.5 2.5 H4 L5 1 H8 L9 2.5 H11.5 V10.5 H0.5Z" fill="#f4d060" stroke="#b08020"/>
<path d="M4.5 7.5 H8 L9 6 H12 L13 7.5 H16.5 V16.5 H4.5Z" fill="#f7c21a" stroke="#a07010"/>
<rect x="5" y="10" width="11" height="6" fill="#fbd54a"/>
</svg>
<svg class="a" style="left:85px;top:113px" width="18" height="17" viewBox="0 0 18 17">
<path d="M5.5 0.5 L7 4.5 L11 4.8 L8 7.3 L9 11 L5.5 9 L2 11 L3 7.3 L0 4.8 L4 4.5Z" fill="#fbd04a" stroke="#c07020" stroke-width="0.8"/>
<path d="M11.5 5.5 L13.2 9.5 L17.5 9.8 L14.2 12.6 L15.3 16.5 L11.5 14.3 L7.7 16.5 L8.8 12.6 L5.5 9.8 L9.8 9.5Z" fill="#fbcc30" stroke="#c07020" stroke-width="0.8"/>
</svg>
<svg class="a" style="left:151px;top:113px" width="17" height="18" viewBox="0 0 17 18">
<rect x="3.5" y="2.5" width="13" height="15" rx="1.5" fill="#b8c0f0" stroke="#4a52a8"/>
<rect x="0.5" y="1.5" width="13" height="15" rx="1.5" fill="#7a82d8" stroke="#3a42a0"/>
<path d="M5 0.5 H10 V10 L7.5 7.5 L5 10Z" fill="#f8a818" stroke="#c05010" stroke-width="0.8"/>
</svg>
<!-- row2 toolbar -->
<svg class="a" style="left:212px;top:115px" width="15" height="17" viewBox="0 0 15 17"><path d="M1 8.5 L8 1.5 V5.5 H14 V11.5 H8 V15.5Z" fill="#e4e4e4" stroke="#a8a8a8"/></svg>
<svg class="a" style="left:236px;top:115px" width="15" height="17" viewBox="0 0 15 17"><path d="M14 8.5 L7 1.5 V5.5 H1 V11.5 H7 V15.5Z" fill="#e4e4e4" stroke="#a8a8a8"/></svg>
<svg class="a" style="left:257px;top:115px" width="17" height="17" viewBox="0 0 17 17"><path d="M7.5 0.5 L15 7 H11 V9 Q11 12 13 12 L15 11 Q14 16.5 9.5 16.5 Q5 16.5 5 11 V7 H0.5Z" fill="#4cb82a" stroke="#2a7a18" stroke-width="0.8"/></svg>
<div class="a" style="left:280px;top:115px;width:1px;height:17px;background:#888"></div>
<svg class="a" style="left:288px;top:114px" width="18" height="18" viewBox="0 0 18 18">
<path d="M0.5 6.5 H5 L6.5 4.5 H10 V8 H16.5 V17.5 H0.5Z" fill="#f4c84a" stroke="#a07020"/>
<rect x="1" y="10" width="15.5" height="7" fill="#f9d870"/>
<path d="M13 0 L14 3.5 L17.5 3 L15 5.5 L17 8.5 L13.8 7.5 L12 10 L11.5 6.5 L8.5 5.5 L11.5 4Z" fill="#e02020"/>
</svg>
<svg class="a" style="left:311px;top:114px" width="18" height="18" viewBox="0 0 18 18">
<rect x="0.5" y="6.5" width="16" height="8" fill="#fff" stroke="#4a52a8"/>
<rect x="2" y="8.5" width="1" height="4" fill="#222"/>
<path d="M5 16 L6 12.5 L15.5 1.5 L17.5 3.5 L7.5 14.5Z" fill="#f8b020" stroke="#9a5a10" stroke-width="0.8"/>
</svg>
<svg class="a" style="left:336px;top:115px" width="15" height="16" viewBox="0 0 15 16"><path d="M2 4.5 L4.5 2 L7.5 5 L10.5 2 L13 4.5 L10 7.5 L13 10.5 L10.5 13 L7.5 10 L4.5 13 L2 10.5 L5 7.5Z" fill="#e05050" stroke="#b02a2a" stroke-width="0.8"/></svg>
<div class="a" style="left:357px;top:115px;width:1px;height:17px;background:#888"></div>
<svg class="a" style="left:366px;top:115px" width="18" height="17" viewBox="0 0 18 17">
<rect x="0.5" y="0.5" width="16" height="15" fill="#fff" stroke="#3a42a0"/><rect x="1" y="1" width="15" height="2.5" fill="#6a72c8"/>
<g fill="#4a52b8"><rect x="3" y="5" width="2" height="2"/><rect x="7.5" y="5" width="2" height="2"/><rect x="12" y="5" width="2" height="2"/><rect x="3" y="9" width="2" height="2"/><rect x="7.5" y="9" width="2" height="2"/><rect x="12" y="9" width="2" height="2"/><rect x="3" y="12.5" width="2" height="2"/><rect x="7.5" y="12.5" width="2" height="2"/><rect x="12" y="12.5" width="2" height="2"/></g>
</svg>
<svg class="a" style="left:390px;top:121px" width="8" height="5" viewBox="0 0 8 5"><path d="M0 0H8L4 4.5Z" fill="#222"/></svg>
<svg class="a" style="left:403px;top:114px" width="17" height="18" viewBox="0 0 17 18">
<path d="M5 0.5 L10 6 H7 V13 H3 V6 H0Z" fill="#5ac02a" stroke="#2a7a18" stroke-width="0.8"/>
<path d="M12 17.5 L17 12 H14 V5 H10 V12 H7Z" fill="#3aa01a" stroke="#2a7a18" stroke-width="0.8"/>
</svg>
<svg class="a" style="left:422px;top:121px" width="8" height="5" viewBox="0 0 8 5"><path d="M0 0H8L4 4.5Z" fill="#222"/></svg>
<svg class="a" style="left:436px;top:114px" width="15" height="18" viewBox="0 0 15 18">
<path d="M0.5 1.5 Q7.5 -0.5 14.5 1.5 L9 9 V16 Q7.5 17.5 6 16 V9Z" fill="#f8b030" stroke="#b06010" stroke-width="0.9"/>
<ellipse cx="7.5" cy="2" rx="6" ry="1.3" fill="#fde090"/>
</svg>
<svg class="a" style="left:454px;top:121px" width="8" height="5" viewBox="0 0 8 5"><path d="M0 0H8L4 4.5Z" fill="#222"/></svg>
<svg class="a" style="left:468px;top:114px" width="17" height="18" viewBox="0 0 17 18">
<path d="M2 8 Q2 2.5 8 2.5 H11 V0.5 L16 4.5 L11 8.5 V6.5 H8 Q5.5 6.5 5.5 9Z" fill="#6a8ae8" stroke="#3a4aa8" stroke-width="0.8"/>
<path d="M15 10 Q15 15.5 9 15.5 H6 V17.5 L1 13.5 L6 9.5 V11.5 H9 Q11.5 11.5 11.5 9Z" fill="#6a8ae8" stroke="#3a4aa8" stroke-width="0.8"/>
</svg>
<div class="a" style="left:490px;top:115px;width:1px;height:17px;background:#888"></div>
<svg class="a" style="left:498px;top:114px" width="18" height="18" viewBox="0 0 18 18"><path d="M9 0.5 L11.3 6.3 L17.5 6.6 L12.7 10.5 L14.3 16.6 L9 13.2 L3.7 16.6 L5.3 10.5 L0.5 6.6 L6.7 6.3Z" fill="#fcd040" stroke="#c07a10" stroke-width="0.9"/></svg>
<svg class="a" style="left:517px;top:121px" width="8" height="5" viewBox="0 0 8 5"><path d="M0 0H8L4 4.5Z" fill="#222"/></svg>
<!-- address -->
<div class="a" style="left:529px;top:113px;width:895px;height:23px;background:#fff;border:1px solid #7a7a7a"></div>
<div class="t" style="left:535px;top:119px;color:#111">G:\media\My Pics\2017\07-july\02, 08\</div>
<svg class="a" style="left:1410px;top:121px" width="10" height="6" viewBox="0 0 10 6"><path d="M0.5 0.5 L5 5 L9.5 0.5" stroke="#333" stroke-width="1.2" fill="none"/></svg>

<!-- window border -->
<div class="a" style="left:0;top:0;width:1426px;height:1px;background:#5a6660"></div>
<div class="a" style="left:0;top:0;width:1px;height:803px;background:linear-gradient(#5a6660 0,#5a6660 60px,#a8aca8 120px,#a8aca8 100%)"></div>
<div class="a" style="left:1425px;top:0;width:1px;height:803px;background:linear-gradient(#5a6660 0,#5a6660 60px,#a8aca8 120px,#a8aca8 100%)"></div>


<!-- dialog -->
<div class="a" style="left:394px;top:171px;width:638px;height:466px;background:#f0f0f0;border:1px solid #6aacf0;box-shadow:0 3px 14px rgba(0,0,0,.3)"></div>
<div class="a" style="left:395px;top:172px;width:636px;height:25px;background:#fff"></div>
<div class="t" style="left:398px;top:178px;font-size:12px;color:#000">Опции</div>
<svg class="a" style="left:1010px;top:178px" width="12" height="12" viewBox="0 0 12 12"><path d="M0.5 0.5L11.5 11.5M11.5 0.5L0.5 11.5" stroke="#111" stroke-width="1.1"/></svg>
<div class="a" style="left:401px;top:200px;width:153px;height:397px;background:#fff;border:1px solid #828790"></div>
<div class="a" style="left:403px;top:202px;width:149px;height:23px;background:#0078d7"></div>
<div class="t" style="left:407px;top:208.4px;font-size:12px;font-weight:bold;color:#fff;letter-spacing:-0.35px;">Основные</div>
<div class="t" style="left:423px;top:231.8px;font-size:11px;color:#000">Клавиатура/Мышь</div>
<div class="t" style="left:423px;top:254.9px;font-size:11px;color:#000">Чтение/Запись</div>
<div class="t" style="left:407px;top:277.6px;font-size:12px;font-weight:bold;color:#000;">Интерфейс</div>
<div class="t" style="left:423px;top:301.0px;font-size:11px;color:#000">Панель инструментов</div>
<div class="t" style="left:407px;top:323.7px;font-size:12px;font-weight:bold;color:#000;">Обозреватель</div>
<div class="t" style="left:423px;top:347.1px;font-size:11px;color:#000">Список файлов</div>
<div class="t" style="left:423px;top:370.2px;font-size:11px;color:#000">Эскизы</div>
<div class="t" style="left:423px;top:393.3px;font-size:11px;color:#000">Предпросмотр</div>
<div class="t" style="left:407px;top:416.0px;font-size:12px;font-weight:bold;color:#000;">Вид</div>
<div class="t" style="left:423px;top:439.4px;font-size:11px;color:#000">Полноэкранный вид</div>
<div class="t" style="left:407px;top:462.1px;font-size:12px;font-weight:bold;color:#000;">Интеграция с системой</div>
<div class="t" style="left:423px;top:485.5px;font-size:11px;color:#000">Ассоциации</div>
<div class="a" style="left:568px;top:226px;width:450px;height:363px;background:#fff"></div>
<div class="a" style="left:568px;top:226px;width:375px;height:90px;overflow:hidden">
<div class="a" style="left:0px;top:1px;width:13px;height:13px;border:1px solid #333;background:#fff"></div>
<div class="t" style="left:16px;top:2.60px;font-size:11px;color:#000">Запуск только одной копии программы</div>
<div class="a" style="left:0px;top:17px;width:13px;height:13px;border:1px solid #333;background:#fff"></div>
<div class="t" style="left:16px;top:18.60px;font-size:11px;color:#000">Отображать все доступные форматы</div>
<div class="a" style="left:0px;top:34px;width:13px;height:13px;border:1px solid #333;background:#fff"><svg class="a" style="left:1px;top:1px" width="11" height="11" viewBox="0 0 11 11"><path d="M1.5 5.5 L4 8.5 L9.5 1.5" stroke="#333" stroke-width="1.2" fill="none"/></svg></div>
<div class="t" style="left:16px;top:35.60px;font-size:11px;color:#000">Поворачивать изображения по метаданным ориентации EXIF</div>
<div class="a" style="left:0px;top:50px;width:13px;height:13px;border:1px solid #333;background:#fff"></div>
<div class="t" style="left:16px;top:51.60px;font-size:11px;color:#000">Использовать информацию о кол-ве точек/дюйм из EXIF, если возможно</div>
<div class="a" style="left:0px;top:66px;width:13px;height:13px;border:1px solid #333;background:#fff"><svg class="a" style="left:1px;top:1px" width="11" height="11" viewBox="0 0 11 11"><path d="M1.5 5.5 L4 8.5 L9.5 1.5" stroke="#333" stroke-width="1.2" fill="none"/></svg></div>
<div class="t" style="left:16px;top:67.60px;font-size:11px;color:#000">Подгонять масштаб, если кол-во точек/дюйм по X/Y различны</div>









</div>

<div class="a" style="left:870px;top:604px;width:73px;height:21px;background:#e1e1e1;border:2px solid #0078d7"></div>
<div class="t" style="left:870px;top:609.5px;width:73px;text-align:center;font-size:11px;color:#000">OK</div>
<div class="a" style="left:951px;top:604px;width:73px;height:21px;background:#e1e1e1;border:1px solid #adadad"></div>
<div class="t" style="left:951px;top:609.5px;width:73px;text-align:center;font-size:11px;color:#000">Отмена</div>
</body></html>
